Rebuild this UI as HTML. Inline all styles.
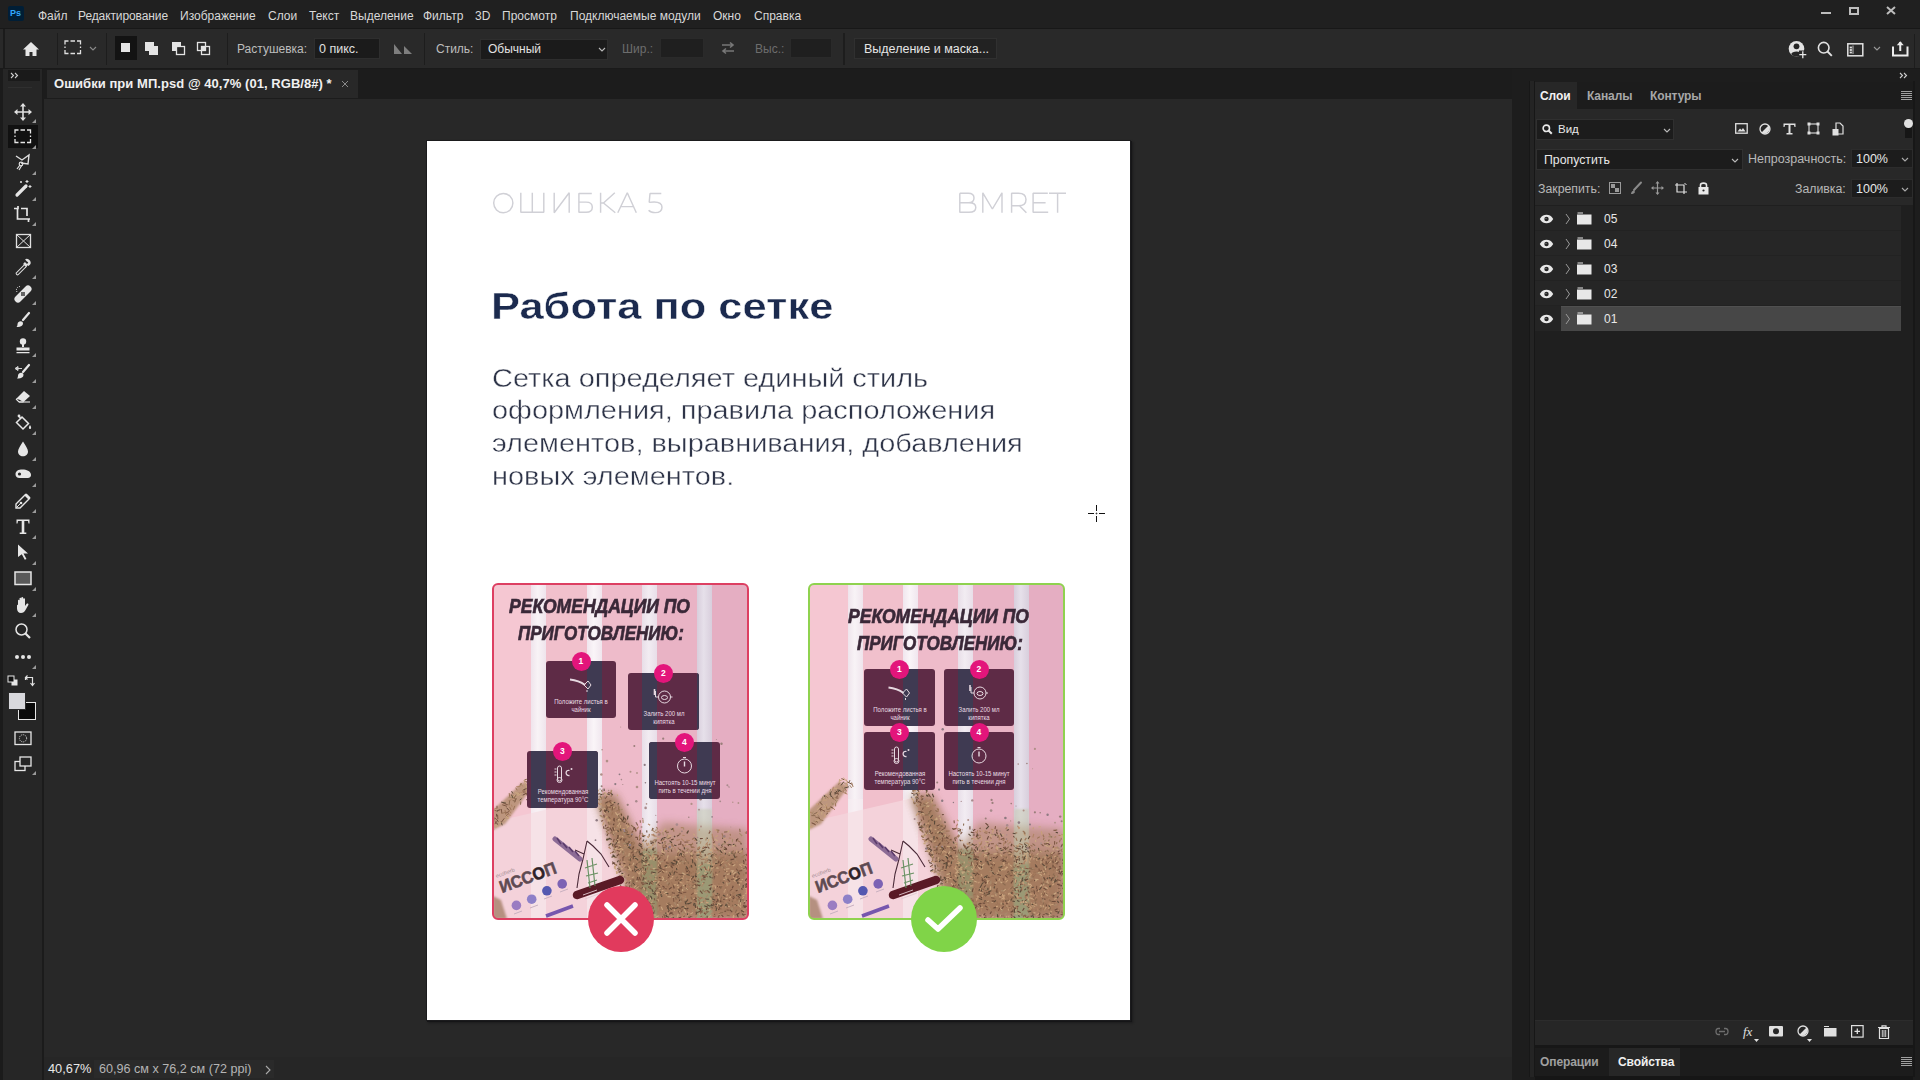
<!DOCTYPE html>
<html><head><meta charset="utf-8">
<style>
*{margin:0;padding:0;box-sizing:border-box}
html,body{width:1920px;height:1080px;overflow:hidden;background:#282828;font-family:"Liberation Sans",sans-serif;color:#d6d6d6}
.a{position:absolute}
.t{position:absolute;white-space:nowrap;line-height:1}
svg{position:absolute;overflow:visible}
#menubar{left:0;top:0;width:1920px;height:28px;background:#202020}
#opts{left:0;top:28px;width:1920px;height:41px;background:#292929;border-top:1px solid #181818;border-bottom:1px solid #1a1a1a}
#tabbar{left:43px;top:69px;width:1469px;height:30px;background:#1c1c1c}
#tab{left:47px;top:70px;width:311px;height:28px;background:#282828}
#tools{left:0;top:69px;width:44px;height:1011px;background:#262626;border-left:3px solid #1b1b1b;border-right:2px solid #1b1b1b}
#canvas{left:44px;top:99px;width:1468px;height:958px;background:#282828}
#status{left:44px;top:1057px;width:1468px;height:23px;background:#262626}
#rcol{left:1512px;top:69px;width:408px;height:1011px;background:#1d1d1d}
#page{left:427px;top:141px;width:703px;height:879px;background:#fff;box-shadow:0 0 0 1px #1b1b1d,1px 1px 0 1px #151517,2px 2px 2px 1px rgba(20,20,22,.6)}
.mi{top:9.5px;font-size:12px;color:#d8d8d8}
.ob{font-size:12px;color:#cfcfcf}
.box{position:absolute;background:#1b1b1b;border:1px solid #333}
</style></head>
<body>
<div id="menubar" class="a"></div>
<div id="opts" class="a"></div>
<div id="tools" class="a"></div>
<div id="tabbar" class="a"></div>
<div id="tab" class="a"></div>
<div id="canvas" class="a"></div>
<div id="status" class="a"></div>
<div id="rcol" class="a"></div>
<div id="page" class="a"></div>

<!-- MENU BAR -->
<div class="a" style="left:8px;top:6px;width:16px;height:15px;background:#001e36;border-radius:2px"></div>
<div class="t" style="left:10px;top:9px;font-size:9px;font-weight:bold;color:#31a8ff">Ps</div>
<div class="t mi" style="left:38px">Файл</div>
<div class="t mi" style="left:78px;letter-spacing:-.1px">Редактирование</div>
<div class="t mi" style="left:180px">Изображение</div>
<div class="t mi" style="left:268px">Слои</div>
<div class="t mi" style="left:309px">Текст</div>
<div class="t mi" style="left:350px">Выделение</div>
<div class="t mi" style="left:423px">Фильтр</div>
<div class="t mi" style="left:475px">3D</div>
<div class="t mi" style="left:502px">Просмотр</div>
<div class="t mi" style="left:570px">Подключаемые модули</div>
<div class="t mi" style="left:713px">Окно</div>
<div class="t mi" style="left:754px">Справка</div>
<!-- window controls -->
<div class="a" style="left:1821px;top:12px;width:10px;height:2px;background:#bdbdbd"></div>
<div class="a" style="left:1849px;top:7px;width:10px;height:8px;border:2px solid #bdbdbd"></div>
<svg style="left:1886px;top:6px" width="10" height="9"><path d="M1 1L9 8M9 1L1 8" stroke="#bdbdbd" stroke-width="2"/></svg>

<!-- OPTIONS BAR -->
<div class="a" style="left:3px;top:29px;width:2px;height:40px;background:#1b1b1b"></div>
<svg style="left:22px;top:41px" width="18" height="16"><path d="M9 1L1 8.5H3.5V15H7.5V11H10.5V15H14.5V8.5H17Z" fill="#e6e6e6"/></svg>
<svg style="left:64px;top:40px" width="18" height="15"><path d="M1 4.5V1H4.5M6.5 1H11M13 1H16.5V4.5M16.5 6.5V8M16.5 10V13.5H13M11 13.5H6.5M4.5 13.5H1V10M1 8V6.5" fill="none" stroke="#e0e0e0" stroke-width="1.3"/></svg>
<svg style="left:89px;top:46px" width="8" height="5"><path d="M1 1L4 4L7 1" fill="none" stroke="#8a8a8a" stroke-width="1.1"/></svg>
<div class="a" style="left:57px;top:33px;width:1px;height:32px;background:#1d1d1d"></div>
<div class="a" style="left:106px;top:33px;width:1px;height:32px;background:#1d1d1d"></div>
<div class="a" style="left:115px;top:36px;width:22px;height:24px;background:#131313"></div>
<div class="a" style="left:121px;top:43px;width:9px;height:9px;background:#e4e4e4"></div>
<svg style="left:144px;top:41px" width="16" height="16"><rect x="1" y="1" width="9" height="9" fill="#e4e4e4"/><rect x="5" y="5" width="9" height="9" fill="#e4e4e4"/></svg>
<svg style="left:171px;top:41px" width="16" height="16"><rect x="1" y="1" width="9" height="9" fill="#e4e4e4"/><rect x="5.5" y="5.5" width="8" height="8" fill="#292929" stroke="#e4e4e4" stroke-width="1.3"/></svg>
<svg style="left:196px;top:41px" width="16" height="16"><rect x="1.5" y="1.5" width="8" height="8" fill="none" stroke="#e4e4e4" stroke-width="1.3"/><rect x="5.5" y="5.5" width="8" height="8" fill="none" stroke="#e4e4e4" stroke-width="1.3"/><rect x="5.5" y="5.5" width="4" height="4" fill="#e4e4e4"/></svg>
<div class="a" style="left:227px;top:33px;width:1px;height:32px;background:#1d1d1d"></div>
<div class="t ob" style="left:237px;top:43px;color:#bdbdbd">Растушевка:</div>
<div class="box" style="left:314px;top:38px;width:66px;height:21px;border-color:#2e2e2e"></div>
<div class="t ob" style="left:319px;top:43px;font-size:12.5px;color:#e0e0e0">0 пикс.</div>
<svg style="left:393px;top:43px" width="20" height="12"><path d="M1 11V1L9 11ZM11 11V3L19 11Z" fill="#7e7e7e"/></svg>
<div class="a" style="left:424px;top:33px;width:1px;height:32px;background:#1d1d1d"></div>
<div class="t ob" style="left:436px;top:43px;color:#bdbdbd">Стиль:</div>
<div class="box" style="left:480px;top:39px;width:128px;height:21px;border-color:#2e2e2e"></div>
<div class="t ob" style="left:488px;top:43px;color:#e2e2e2">Обычный</div>
<svg style="left:598px;top:47px" width="8" height="5"><path d="M1 1L4 4L7 1" fill="none" stroke="#bbb" stroke-width="1.1"/></svg>
<div class="t ob" style="left:622px;top:43px;color:#6d6d6d">Шир.:</div>
<div class="box" style="left:660px;top:38px;width:44px;height:20px;border-color:#2a2a2a;background:#1f1f1f"></div>
<svg style="left:720px;top:41px" width="16" height="14"><path d="M2 4H13M10 1.5L13 4L10 6.5M14 10H3M6 7.5L3 10L6 12.5" fill="none" stroke="#777" stroke-width="1.6"/></svg>
<div class="t ob" style="left:755px;top:43px;color:#6d6d6d">Выс.:</div>
<div class="box" style="left:790px;top:38px;width:42px;height:20px;border-color:#2a2a2a;background:#1f1f1f"></div>
<div class="a" style="left:843px;top:33px;width:2px;height:32px;background:#1d1d1d"></div>
<div class="box" style="left:854px;top:38px;width:143px;height:21px;background:#222;border-color:#303030"></div>
<div class="t ob" style="left:864px;top:43px;font-size:12.5px;color:#e6e6e6">Выделение и маска...</div>
<!-- right options icons -->
<svg style="left:1788px;top:40px" width="20" height="20"><circle cx="8.5" cy="8.7" r="7.8" fill="#e4e4e4"/><circle cx="8.5" cy="6.3" r="2.9" fill="#262626"/><path d="M3.2 14.2C3.8 10.6 13.2 10.6 13.8 14.2C12.5 15.8 10.5 16.5 8.5 16.5C6.5 16.5 4.5 15.8 3.2 14.2Z" fill="#262626"/><rect x="11" y="10.5" width="8" height="8" fill="#292929"/><path d="M14.8 11.2V18.2M11.3 14.7H18.3" stroke="#e8e8e8" stroke-width="1.3"/></svg>
<svg style="left:1817px;top:41px" width="16" height="16"><circle cx="6.7" cy="6.7" r="5.3" fill="none" stroke="#e2e2e2" stroke-width="1.6"/><path d="M10.5 10.5L14.8 14.8" stroke="#e2e2e2" stroke-width="1.9"/></svg>
<svg style="left:1847px;top:43px" width="17" height="14"><rect x="0.8" y="0.8" width="15" height="12" fill="none" stroke="#e2e2e2" stroke-width="1.5"/><rect x="2.7" y="3.6" width="2.2" height="1.8" fill="#e2e2e2"/><rect x="2.7" y="6.1" width="2.2" height="1.8" fill="#e2e2e2"/><rect x="2.7" y="8.6" width="2.2" height="1.8" fill="#e2e2e2"/><path d="M6 2.5V11" stroke="#e2e2e2" stroke-width=".8"/></svg>
<svg style="left:1873px;top:46px" width="8" height="5"><path d="M1 1L4 4L7 1" fill="none" stroke="#999" stroke-width="1.1"/></svg>
<svg style="left:1892px;top:40px" width="17" height="17"><path d="M1 6.5V15.5H15.5V6.5" fill="none" stroke="#ededed" stroke-width="2"/><path d="M8.25 2V11" stroke="#ededed" stroke-width="2"/><path d="M4.8 5.2L8.25 1.2L11.7 5.2Z" fill="#ededed"/></svg>
<div class="a" style="left:1914px;top:34px;width:1px;height:34px;background:#1d1d1d"></div>



<!-- DOCUMENT -->
<svg style="left:0;top:0" width="1" height="1"></svg>
<svg style="left:480px;top:180px" width="600" height="45" viewBox="480 180 600 45"><g fill="none" stroke="#d0d0d6" stroke-width="1.45" stroke-linejoin="bevel">
<ellipse cx="503.3" cy="203.1" rx="9.6" ry="9.6"/>
<path d="M520.8 192.8V212.3H543.8V192.8M532.3 192.8V212.3"/>
<path d="M554.2 192.8V212.8L569.2 192.8V212.8"/>
<path d="M591.8 193.5H578.9V212.3H586C590 212.3 592.3 210.4 592.3 207.2C592.3 204 590 202.1 586 202.1H578.9"/>
<path d="M600.6 192.8V212.8M600.6 203H603.5L614.8 192.8M603.5 203L615.3 212.8"/>
<path d="M617.8 212.8L627.3 192.8L636.3 212.8M620.8 206.6H633.5"/>
<path d="M661.3 193.5H650L649.2 202.4C650.5 202 652.5 201.9 654.2 201.9C659.5 201.9 662 204 662 207.2C662 210.6 659.5 212.6 655.2 212.6C652.5 212.6 650 211.8 648.6 210.2"/>
<path d="M959.8 193.2H968.3C972 193.2 974 195 974 198C974 200.8 972 202.8 968.3 202.8H959.8M959.8 193.2V212.3H969C973.5 212.3 975.8 210.5 975.8 207.5C975.8 204.5 973.5 202.8 969 202.8"/>
<path d="M982.8 212.8V192.8L992.4 209L1002 192.8V212.8"/>
<path d="M1011.6 212.8V193.2H1018.5C1023.5 193.2 1026 195.6 1026 199.5C1026 203.4 1023.5 205.8 1018.5 205.8H1011.6M1019.5 205.8L1026.4 212.8"/>
<path d="M1047.8 193.3H1033.1V212.3H1048.2M1033.1 202.8H1045.6"/>
<path d="M1049 193.3H1066M1057.6 193.3V212.8"/>
</g></svg>
<div class="t" style="left:491px;top:287.5px;font-size:37.8px;font-weight:bold;color:#1b2a4e;-webkit-text-stroke:.45px #fff;transform:scaleX(1.15);transform-origin:0 0">Работа по сетке</div>
<div class="a" style="left:492px;top:361.5px;font-size:25px;line-height:32.85px;color:#2e3448;-webkit-text-stroke:.4px #fff;transform:scaleX(1.157);transform-origin:0 0;white-space:nowrap">Сетка определяет единый стиль<br>оформления, правила расположения<br>элементов, выравнивания, добавления<br>новых элементов.</div>
<!-- PRODUCTS -->
<div class="a" style="left:493px;top:584px;width:255px;height:335px;border-radius:5px;overflow:hidden;background:linear-gradient(90deg,#f4c4d0 0%,#f0bdcb 50%,#eab5c6 100%)">
<div class="a" style="left:0px;top:0;width:38px;height:335px;background:#f5c7d2"></div>
<div class="a" style="left:53px;top:0;width:41px;height:335px;background:#f1c0cc"></div>
<div class="a" style="left:109px;top:0;width:40px;height:335px;background:#eebbca"></div>
<div class="a" style="left:164px;top:0;width:40px;height:335px;background:#e9b3c5"></div>
<div class="a" style="left:219px;top:0;width:36px;height:335px;background:#e5aec2"></div>
<div class="a" style="left:38px;top:0;width:15px;height:335px;background:linear-gradient(90deg,#efe4ec,#f8f3f6 45%,#efe4ec)"></div>
<div class="a" style="left:94px;top:0;width:15px;height:335px;background:linear-gradient(90deg,#f0e6ee,#faf5f8 45%,#f0e6ee)"></div>
<div class="a" style="left:149px;top:0;width:15px;height:335px;background:linear-gradient(90deg,#e8dee8,#f2ecf2 45%,#e8dee8)"></div>
<div class="a" style="left:204px;top:0;width:15px;height:335px;background:linear-gradient(90deg,#d8cedc,#e6e0ea 45%,#d8cedc)"></div>
<svg style="left:0;top:0" width="255" height="335"><defs><filter id="bl1"><feGaussianBlur stdDeviation="4"/></filter><filter id="bs1"><feGaussianBlur stdDeviation="1.2"/></filter></defs><path d="M0 238L104 214L134 300L142 335H0Z" fill="#f4d2da"/><rect x="38" y="215" width="15" height="120" fill="#f8eef2" opacity=".55"/><rect x="94" y="215" width="15" height="120" fill="#f8eef2" opacity=".55"/><path d="M100 211L122 209L152 262L170 238L210 242L255 245V335H142L134 300L104 214Z" fill="#a88060" opacity=".6" filter="url(#bl1)"/><path d="M103 214L121 212L150 270L185 268L255 268V335H142L133 300Z" fill="#9e7656" opacity=".8" filter="url(#bl1)"/><path d="M0 226L30 198L40 202L12 240L0 246Z" fill="#b08a6a" opacity=".8" filter="url(#bs1)"/><path d="M0 312L8 316L14 335H0Z" fill="#a07a62" opacity=".75" filter="url(#bs1)"/><path d="M149 265H164V335H149Z" fill="#8f9a70" opacity=".6" filter="url(#bs1)"/><path d="M204 225H219V335H204Z" fill="#c0c8a8" opacity=".45" filter="url(#bs1)"/><path d="M204 280H219V335H204Z" fill="#86946a" opacity=".5" filter="url(#bs1)"/><path d="M140.3 262.8L138.7 265.9" stroke="#7e5844" stroke-width="1.1"/><path d="M176.2 318.4L175.0 321.7" stroke="#8a6a50" stroke-width="1.1"/><path d="M140.2 306.9L142.4 307.6" stroke="#9c7458" stroke-width="1.1"/><path d="M132.1 259.2L135.7 259.5" stroke="#5a4a3a" stroke-width="1.1"/><path d="M240.2 331.1L237.4 331.4" stroke="#b08466" stroke-width="1.1"/><path d="M148.3 276.6L145.8 277.9" stroke="#9c7458" stroke-width="1.1"/><path d="M175.0 298.0L173.8 300.2" stroke="#a88a6c" stroke-width="1.1"/><path d="M214.9 260.0L212.2 261.4" stroke="#caa882" stroke-width="1.1"/><path d="M186.1 251.1L183.9 252.2" stroke="#6a4a3a" stroke-width="1.1"/><path d="M201.5 278.5L202.8 282.0" stroke="#5a4a3a" stroke-width="1.1"/><path d="M225.2 266.8L225.6 268.5" stroke="#a88a6c" stroke-width="1.1"/><path d="M183.4 281.5L183.6 283.1" stroke="#b08466" stroke-width="1.1"/><path d="M197.1 271.7L199.9 272.5" stroke="#6a4a3a" stroke-width="1.1"/><path d="M127.3 234.2L130.0 237.0" stroke="#6a4a3a" stroke-width="1.1"/><path d="M152.0 305.3L154.4 307.7" stroke="#b08466" stroke-width="1.1"/><path d="M136.3 250.5L133.6 250.8" stroke="#5a4a3a" stroke-width="1.1"/><path d="M206.9 271.1L203.4 271.4" stroke="#5a4a3a" stroke-width="1.1"/><path d="M170.8 266.8L169.0 269.9" stroke="#caa882" stroke-width="1.1"/><path d="M110.2 236.4L108.0 237.3" stroke="#7e5844" stroke-width="1.1"/><path d="M147.8 325.4L148.4 327.6" stroke="#9c7458" stroke-width="1.1"/><path d="M185.5 312.9L188.4 315.3" stroke="#8a6a50" stroke-width="1.1"/><path d="M208.6 265.3L209.6 267.2" stroke="#caa882" stroke-width="1.1"/><path d="M160.9 264.4L160.0 266.8" stroke="#6a4a3a" stroke-width="1.1"/><path d="M251.7 303.6L254.3 305.6" stroke="#caa882" stroke-width="1.1"/><path d="M134.7 295.6L138.0 297.5" stroke="#b08466" stroke-width="1.1"/><path d="M138.1 241.1L141.0 243.7" stroke="#8a6a50" stroke-width="1.1"/><path d="M120.1 272.1L121.9 272.3" stroke="#c8a07a" stroke-width="1.1"/><path d="M237.9 272.9L238.2 275.1" stroke="#9c7458" stroke-width="1.1"/><path d="M113.1 211.0L115.3 211.3" stroke="#caa882" stroke-width="1.1"/><path d="M123.5 257.3L126.7 259.0" stroke="#caa882" stroke-width="1.1"/><path d="M145.3 277.8L146.3 279.2" stroke="#a88a6c" stroke-width="1.1"/><path d="M249.1 329.8L251.5 331.7" stroke="#5a4a3a" stroke-width="1.1"/><path d="M233.6 260.1L235.4 261.2" stroke="#b08466" stroke-width="1.1"/><path d="M199.1 325.7L200.4 327.7" stroke="#a88a6c" stroke-width="1.1"/><path d="M222.2 275.4L223.5 276.7" stroke="#7e5844" stroke-width="1.1"/><path d="M122.0 264.7L125.8 265.7" stroke="#c8a07a" stroke-width="1.1"/><path d="M228.2 278.4L230.5 280.1" stroke="#9c7458" stroke-width="1.1"/><path d="M221.6 308.7L220.1 311.2" stroke="#b08466" stroke-width="1.1"/><path d="M128.6 254.3L126.6 256.8" stroke="#6a4a3a" stroke-width="1.1"/><path d="M220.3 289.4L220.8 291.6" stroke="#8a6a50" stroke-width="1.1"/><path d="M231.4 257.5L232.5 259.4" stroke="#9c7458" stroke-width="1.1"/><path d="M221.3 325.5L224.6 325.7" stroke="#c8a07a" stroke-width="1.1"/><path d="M141.6 273.6L144.3 274.4" stroke="#c8a07a" stroke-width="1.1"/><path d="M181.6 263.5L182.3 266.7" stroke="#b08466" stroke-width="1.1"/><path d="M136.0 263.5L137.9 265.2" stroke="#5a4a3a" stroke-width="1.1"/><path d="M195.8 296.9L193.7 297.0" stroke="#7e5844" stroke-width="1.1"/><path d="M218.4 283.6L218.2 287.1" stroke="#b08466" stroke-width="1.1"/><path d="M147.7 290.4L149.0 293.5" stroke="#8a6a50" stroke-width="1.1"/><path d="M193.6 314.7L190.7 315.1" stroke="#c8a07a" stroke-width="1.1"/><path d="M125.3 253.4L123.0 256.1" stroke="#8a6a50" stroke-width="1.1"/><path d="M205.7 294.4L205.6 296.4" stroke="#9c7458" stroke-width="1.1"/><path d="M252.7 330.5L249.5 330.9" stroke="#7e5844" stroke-width="1.1"/><path d="M168.3 322.8L169.6 326.0" stroke="#caa882" stroke-width="1.1"/><path d="M162.1 321.1L161.1 323.7" stroke="#b08466" stroke-width="1.1"/><path d="M118.9 235.8L117.7 236.9" stroke="#b08466" stroke-width="1.1"/><path d="M183.0 276.0L180.8 276.2" stroke="#6a4a3a" stroke-width="1.1"/><path d="M131.0 233.7L133.0 236.0" stroke="#6a4a3a" stroke-width="1.1"/><path d="M211.6 284.3L213.0 287.5" stroke="#caa882" stroke-width="1.1"/><path d="M205.5 263.0L206.3 264.9" stroke="#9c7458" stroke-width="1.1"/><path d="M255.3 282.7L253.1 285.2" stroke="#b08466" stroke-width="1.1"/><path d="M162.8 298.4L164.0 300.1" stroke="#5a4a3a" stroke-width="1.1"/><path d="M131.1 266.8L130.1 270.6" stroke="#a88a6c" stroke-width="1.1"/><path d="M235.1 276.3L231.9 277.4" stroke="#8a6a50" stroke-width="1.1"/><path d="M145.9 259.0L148.3 260.4" stroke="#6a4a3a" stroke-width="1.1"/><path d="M178.4 297.8L179.8 300.7" stroke="#9c7458" stroke-width="1.1"/><path d="M123.9 294.0L126.9 294.9" stroke="#6a4a3a" stroke-width="1.1"/><path d="M228.8 266.6L228.7 269.9" stroke="#c8a07a" stroke-width="1.1"/><path d="M146.2 296.7L145.8 299.1" stroke="#b08466" stroke-width="1.1"/><path d="M159.8 249.8L161.9 252.1" stroke="#b08466" stroke-width="1.1"/><path d="M141.0 278.8L139.2 282.0" stroke="#caa882" stroke-width="1.1"/><path d="M240.6 295.9L242.5 298.0" stroke="#c8a07a" stroke-width="1.1"/><path d="M219.9 319.1L221.4 321.2" stroke="#7e5844" stroke-width="1.1"/><path d="M210.1 295.2L212.5 296.0" stroke="#8a6a50" stroke-width="1.1"/><path d="M244.6 328.3L243.3 329.2" stroke="#b08466" stroke-width="1.1"/><path d="M207.1 262.8L204.7 265.6" stroke="#8a6a50" stroke-width="1.1"/><path d="M153.6 311.5L152.6 313.1" stroke="#caa882" stroke-width="1.1"/><path d="M137.2 257.9L135.1 258.1" stroke="#6a4a3a" stroke-width="1.1"/><path d="M172.4 275.3L171.0 277.1" stroke="#7e5844" stroke-width="1.1"/><path d="M242.4 333.1L239.5 335.3" stroke="#a88a6c" stroke-width="1.1"/><path d="M237.0 313.1L238.6 314.3" stroke="#c8a07a" stroke-width="1.1"/><path d="M235.2 270.3L236.5 271.6" stroke="#6a4a3a" stroke-width="1.1"/><path d="M118.9 206.2L117.5 209.3" stroke="#b08466" stroke-width="1.1"/><path d="M248.4 284.5L252.2 285.2" stroke="#c8a07a" stroke-width="1.1"/><path d="M154.3 278.9L154.1 280.6" stroke="#a88a6c" stroke-width="1.1"/><path d="M185.0 268.4L184.6 272.2" stroke="#7e5844" stroke-width="1.1"/><path d="M211.4 298.3L209.8 299.8" stroke="#7e5844" stroke-width="1.1"/><path d="M226.9 260.6L225.2 260.7" stroke="#5a4a3a" stroke-width="1.1"/><path d="M219.1 320.0L217.6 321.7" stroke="#6a4a3a" stroke-width="1.1"/><path d="M157.9 296.9L161.2 298.3" stroke="#7e5844" stroke-width="1.1"/><path d="M137.2 271.5L138.9 274.5" stroke="#8a6a50" stroke-width="1.1"/><path d="M254.0 294.5L252.3 296.9" stroke="#6a4a3a" stroke-width="1.1"/><path d="M149.1 252.1L151.4 252.6" stroke="#5a4a3a" stroke-width="1.1"/><path d="M150.5 298.8L150.3 300.8" stroke="#a88a6c" stroke-width="1.1"/><path d="M220.8 274.2L222.5 276.3" stroke="#a88a6c" stroke-width="1.1"/><path d="M245.6 330.3L241.9 331.2" stroke="#9c7458" stroke-width="1.1"/><path d="M122.6 268.3L119.1 268.4" stroke="#a88a6c" stroke-width="1.1"/><path d="M155.6 325.6L156.5 328.2" stroke="#a88a6c" stroke-width="1.1"/><path d="M205.4 273.1L207.6 274.5" stroke="#9c7458" stroke-width="1.1"/><path d="M226.5 331.2L225.2 332.8" stroke="#7e5844" stroke-width="1.1"/><path d="M196.2 268.3L199.8 269.1" stroke="#c8a07a" stroke-width="1.1"/><path d="M180.6 255.1L178.0 255.9" stroke="#6a4a3a" stroke-width="1.1"/><path d="M156.9 321.9L157.0 323.7" stroke="#6a4a3a" stroke-width="1.1"/><path d="M159.5 316.3L158.5 319.0" stroke="#caa882" stroke-width="1.1"/><path d="M128.5 236.9L130.4 236.9" stroke="#6a4a3a" stroke-width="1.1"/><path d="M180.6 333.1L178.2 335.2" stroke="#5a4a3a" stroke-width="1.1"/><path d="M244.0 266.2L243.3 268.8" stroke="#c8a07a" stroke-width="1.1"/><path d="M179.5 277.0L177.5 277.2" stroke="#9c7458" stroke-width="1.1"/><path d="M253.6 296.9L254.7 299.2" stroke="#9c7458" stroke-width="1.1"/><path d="M238.8 323.3L239.8 325.8" stroke="#a88a6c" stroke-width="1.1"/><path d="M197.9 312.7L199.2 316.0" stroke="#8a6a50" stroke-width="1.1"/><path d="M154.0 252.6L155.9 253.7" stroke="#c8a07a" stroke-width="1.1"/><path d="M140.7 265.8L139.2 268.0" stroke="#8a6a50" stroke-width="1.1"/><path d="M133.0 309.9L133.8 312.4" stroke="#7e5844" stroke-width="1.1"/><path d="M253.4 270.2L255.2 273.7" stroke="#7e5844" stroke-width="1.1"/><path d="M215.2 288.6L212.5 291.5" stroke="#6a4a3a" stroke-width="1.1"/><path d="M108.3 224.6L106.5 225.4" stroke="#8a6a50" stroke-width="1.1"/><path d="M143.9 265.4L147.3 266.7" stroke="#7e5844" stroke-width="1.1"/><path d="M122.2 280.4L124.1 281.5" stroke="#5a4a3a" stroke-width="1.1"/><path d="M144.9 262.9L144.6 265.0" stroke="#a88a6c" stroke-width="1.1"/><path d="M146.5 320.5L146.5 322.7" stroke="#b08466" stroke-width="1.1"/><path d="M187.1 277.3L186.8 280.3" stroke="#c8a07a" stroke-width="1.1"/><path d="M147.7 262.7L147.1 264.8" stroke="#c8a07a" stroke-width="1.1"/><path d="M206.7 268.5L208.4 271.3" stroke="#b08466" stroke-width="1.1"/><path d="M148.0 263.7L149.8 264.5" stroke="#6a4a3a" stroke-width="1.1"/><path d="M133.9 283.8L135.9 284.1" stroke="#7e5844" stroke-width="1.1"/><path d="M235.9 254.0L238.2 254.2" stroke="#b08466" stroke-width="1.1"/><path d="M114.3 226.4L111.9 226.5" stroke="#5a4a3a" stroke-width="1.1"/><path d="M190.1 243.6L187.8 243.6" stroke="#b08466" stroke-width="1.1"/><path d="M122.0 249.9L121.1 251.9" stroke="#a88a6c" stroke-width="1.1"/><path d="M143.6 266.9L141.2 267.3" stroke="#c8a07a" stroke-width="1.1"/><path d="M194.8 315.5L193.1 318.2" stroke="#5a4a3a" stroke-width="1.1"/><path d="M119.3 277.7L122.0 280.3" stroke="#6a4a3a" stroke-width="1.1"/><path d="M181.0 260.9L183.4 261.7" stroke="#5a4a3a" stroke-width="1.1"/><path d="M156.3 271.3L156.3 274.3" stroke="#6a4a3a" stroke-width="1.1"/><path d="M189.7 288.0L189.9 291.5" stroke="#a88a6c" stroke-width="1.1"/><path d="M224.2 311.6L222.3 311.7" stroke="#6a4a3a" stroke-width="1.1"/><path d="M201.4 306.9L205.3 307.0" stroke="#c8a07a" stroke-width="1.1"/><path d="M158.6 271.9L159.0 275.4" stroke="#caa882" stroke-width="1.1"/><path d="M142.7 245.9L142.9 247.7" stroke="#9c7458" stroke-width="1.1"/><path d="M201.4 291.9L198.8 293.4" stroke="#5a4a3a" stroke-width="1.1"/><path d="M180.6 244.8L176.9 245.0" stroke="#a88a6c" stroke-width="1.1"/><path d="M225.2 309.1L223.4 310.4" stroke="#5a4a3a" stroke-width="1.1"/><path d="M245.9 316.9L249.2 317.3" stroke="#caa882" stroke-width="1.1"/><path d="M254.1 301.9L254.6 304.3" stroke="#6a4a3a" stroke-width="1.1"/><path d="M136.5 279.5L137.3 281.2" stroke="#5a4a3a" stroke-width="1.1"/><path d="M125.9 283.5L127.5 286.4" stroke="#9c7458" stroke-width="1.1"/><path d="M246.3 249.2L249.1 252.0" stroke="#a88a6c" stroke-width="1.1"/><path d="M201.6 303.4L201.9 306.2" stroke="#b08466" stroke-width="1.1"/><path d="M166.9 249.7L167.0 252.0" stroke="#c8a07a" stroke-width="1.1"/><path d="M122.3 247.6L124.1 247.7" stroke="#c8a07a" stroke-width="1.1"/><path d="M226.4 322.6L226.2 324.4" stroke="#6a4a3a" stroke-width="1.1"/><path d="M213.8 322.0L214.4 323.5" stroke="#b08466" stroke-width="1.1"/><path d="M251.7 321.1L252.8 323.0" stroke="#5a4a3a" stroke-width="1.1"/><path d="M245.4 328.1L244.6 330.8" stroke="#caa882" stroke-width="1.1"/><path d="M130.4 265.6L128.6 265.6" stroke="#caa882" stroke-width="1.1"/><path d="M159.9 271.4L160.1 275.4" stroke="#b08466" stroke-width="1.1"/><path d="M170.9 295.6L173.6 296.8" stroke="#a88a6c" stroke-width="1.1"/><path d="M220.6 283.3L218.3 285.0" stroke="#caa882" stroke-width="1.1"/><path d="M207.0 306.7L209.5 309.6" stroke="#6a4a3a" stroke-width="1.1"/><path d="M188.5 311.7L187.2 314.8" stroke="#a88a6c" stroke-width="1.1"/><path d="M161.5 273.9L157.6 274.5" stroke="#b08466" stroke-width="1.1"/><path d="M129.4 306.5L131.5 308.0" stroke="#b08466" stroke-width="1.1"/><path d="M188.3 271.7L190.8 273.4" stroke="#7e5844" stroke-width="1.1"/><path d="M123.3 287.2L124.1 289.7" stroke="#c8a07a" stroke-width="1.1"/><path d="M110.5 227.5L112.5 230.0" stroke="#caa882" stroke-width="1.1"/><path d="M156.1 311.4L154.6 313.4" stroke="#5a4a3a" stroke-width="1.1"/><path d="M145.7 266.3L144.7 267.7" stroke="#7e5844" stroke-width="1.1"/><path d="M193.6 300.3L197.1 301.0" stroke="#a88a6c" stroke-width="1.1"/><path d="M190.3 297.5L191.5 301.0" stroke="#b08466" stroke-width="1.1"/><path d="M205.9 323.1L202.3 324.9" stroke="#caa882" stroke-width="1.1"/><path d="M162.7 263.6L160.9 264.7" stroke="#9c7458" stroke-width="1.1"/><path d="M228.4 270.2L226.7 270.7" stroke="#9c7458" stroke-width="1.1"/><path d="M230.0 311.0L232.4 312.5" stroke="#5a4a3a" stroke-width="1.1"/><path d="M160.4 244.2L158.9 246.8" stroke="#7e5844" stroke-width="1.1"/><path d="M196.0 319.5L193.3 320.0" stroke="#5a4a3a" stroke-width="1.1"/><path d="M114.5 249.9L114.0 252.1" stroke="#6a4a3a" stroke-width="1.1"/><path d="M185.2 320.9L185.9 323.8" stroke="#a88a6c" stroke-width="1.1"/><path d="M224.1 278.4L222.4 278.5" stroke="#a88a6c" stroke-width="1.1"/><path d="M164.6 333.9L164.1 335.7" stroke="#5a4a3a" stroke-width="1.1"/><path d="M157.4 270.8L156.7 273.5" stroke="#7e5844" stroke-width="1.1"/><path d="M232.0 257.0L230.6 257.9" stroke="#c8a07a" stroke-width="1.1"/><path d="M191.1 277.0L188.7 278.1" stroke="#a88a6c" stroke-width="1.1"/><path d="M253.5 314.2L255.2 314.4" stroke="#b08466" stroke-width="1.1"/><path d="M184.3 275.1L186.3 275.6" stroke="#6a4a3a" stroke-width="1.1"/><path d="M222.2 307.1L221.8 310.0" stroke="#a88a6c" stroke-width="1.1"/><path d="M243.3 314.1L243.7 316.5" stroke="#9c7458" stroke-width="1.1"/><path d="M203.9 317.1L201.8 317.3" stroke="#7e5844" stroke-width="1.1"/><path d="M191.9 330.3L190.2 332.4" stroke="#9c7458" stroke-width="1.1"/><path d="M134.0 318.2L137.3 320.2" stroke="#b08466" stroke-width="1.1"/><path d="M132.0 234.3L133.0 236.6" stroke="#7e5844" stroke-width="1.1"/><path d="M146.0 324.8L146.1 326.4" stroke="#9c7458" stroke-width="1.1"/><path d="M244.8 285.6L243.5 289.0" stroke="#a88a6c" stroke-width="1.1"/><path d="M152.6 284.2L152.5 287.0" stroke="#5a4a3a" stroke-width="1.1"/><path d="M247.0 313.3L244.4 316.1" stroke="#8a6a50" stroke-width="1.1"/><path d="M159.7 270.5L163.2 270.6" stroke="#8a6a50" stroke-width="1.1"/><path d="M133.4 261.6L131.4 261.7" stroke="#caa882" stroke-width="1.1"/><path d="M109.5 210.3L107.3 210.9" stroke="#5a4a3a" stroke-width="1.1"/><path d="M153.4 277.1L151.5 277.9" stroke="#7e5844" stroke-width="1.1"/><path d="M149.2 288.6L152.6 289.4" stroke="#6a4a3a" stroke-width="1.1"/><path d="M250.3 279.8L247.1 280.2" stroke="#c8a07a" stroke-width="1.1"/><path d="M217.6 299.9L216.6 302.0" stroke="#caa882" stroke-width="1.1"/><path d="M166.0 268.3L164.4 269.1" stroke="#b08466" stroke-width="1.1"/><path d="M157.8 280.7L159.8 283.4" stroke="#a88a6c" stroke-width="1.1"/><path d="M176.6 288.2L177.8 290.9" stroke="#5a4a3a" stroke-width="1.1"/><path d="M176.7 324.9L175.1 328.1" stroke="#6a4a3a" stroke-width="1.1"/><path d="M167.0 312.0L166.2 313.7" stroke="#b08466" stroke-width="1.1"/><path d="M236.0 299.7L233.8 299.7" stroke="#a88a6c" stroke-width="1.1"/><path d="M152.8 303.6L152.3 306.3" stroke="#6a4a3a" stroke-width="1.1"/><path d="M145.0 271.4L146.6 272.8" stroke="#9c7458" stroke-width="1.1"/><path d="M136.3 271.6L137.6 273.9" stroke="#9c7458" stroke-width="1.1"/><path d="M186.3 265.2L188.1 266.4" stroke="#6a4a3a" stroke-width="1.1"/><path d="M154.6 276.6L152.1 278.5" stroke="#7e5844" stroke-width="1.1"/><path d="M247.0 294.3L243.9 295.6" stroke="#6a4a3a" stroke-width="1.1"/><path d="M217.9 322.6L219.1 325.6" stroke="#7e5844" stroke-width="1.1"/><path d="M235.2 322.2L236.8 322.8" stroke="#caa882" stroke-width="1.1"/><path d="M238.9 269.1L235.6 269.9" stroke="#a88a6c" stroke-width="1.1"/><path d="M164.8 245.8L162.0 246.2" stroke="#a88a6c" stroke-width="1.1"/><path d="M121.3 217.9L118.2 219.2" stroke="#c8a07a" stroke-width="1.1"/><path d="M124.3 284.4L127.4 286.1" stroke="#6a4a3a" stroke-width="1.1"/><path d="M137.5 284.8L135.4 285.8" stroke="#caa882" stroke-width="1.1"/><path d="M122.9 244.1L124.8 244.8" stroke="#a88a6c" stroke-width="1.1"/><path d="M112.4 221.1L109.1 221.2" stroke="#b08466" stroke-width="1.1"/><path d="M201.9 297.7L199.5 298.2" stroke="#5a4a3a" stroke-width="1.1"/><path d="M195.4 287.5L199.0 288.9" stroke="#9c7458" stroke-width="1.1"/><path d="M252.1 318.4L250.7 319.5" stroke="#6a4a3a" stroke-width="1.1"/><path d="M148.8 251.1L152.6 251.7" stroke="#9c7458" stroke-width="1.1"/><path d="M239.3 277.9L236.4 280.2" stroke="#8a6a50" stroke-width="1.1"/><path d="M189.5 260.3L190.6 262.7" stroke="#7e5844" stroke-width="1.1"/><path d="M127.3 303.6L129.7 305.8" stroke="#b08466" stroke-width="1.1"/><path d="M154.1 273.8L152.1 277.2" stroke="#9c7458" stroke-width="1.1"/><path d="M135.5 319.0L132.0 320.1" stroke="#8a6a50" stroke-width="1.1"/><path d="M150.9 298.8L147.9 298.8" stroke="#7e5844" stroke-width="1.1"/><path d="M173.0 252.9L176.1 253.5" stroke="#a88a6c" stroke-width="1.1"/><path d="M147.7 310.7L149.3 312.9" stroke="#9c7458" stroke-width="1.1"/><path d="M145.2 281.9L146.1 285.6" stroke="#b08466" stroke-width="1.1"/><path d="M143.1 301.4L143.2 303.7" stroke="#6a4a3a" stroke-width="1.1"/><path d="M162.7 267.6L160.4 268.6" stroke="#8a6a50" stroke-width="1.1"/><path d="M121.7 262.2L124.8 262.5" stroke="#7e5844" stroke-width="1.1"/><path d="M189.5 292.1L187.2 293.8" stroke="#8a6a50" stroke-width="1.1"/><path d="M157.4 311.7L158.3 313.7" stroke="#5a4a3a" stroke-width="1.1"/><path d="M230.1 328.5L228.1 328.7" stroke="#8a6a50" stroke-width="1.1"/><path d="M174.6 274.4L173.7 276.9" stroke="#c8a07a" stroke-width="1.1"/><path d="M177.9 332.8L180.0 333.7" stroke="#c8a07a" stroke-width="1.1"/><path d="M164.9 258.3L167.6 259.9" stroke="#6a4a3a" stroke-width="1.1"/><path d="M191.1 304.9L192.5 305.6" stroke="#a88a6c" stroke-width="1.1"/><path d="M119.5 247.1L117.4 249.3" stroke="#8a6a50" stroke-width="1.1"/><path d="M168.9 269.1L170.4 270.2" stroke="#7e5844" stroke-width="1.1"/><path d="M114.0 248.5L116.2 250.0" stroke="#9c7458" stroke-width="1.1"/><path d="M191.0 326.4L191.1 328.7" stroke="#a88a6c" stroke-width="1.1"/><path d="M128.7 303.1L127.3 304.1" stroke="#5a4a3a" stroke-width="1.1"/><path d="M136.5 313.7L134.8 314.3" stroke="#9c7458" stroke-width="1.1"/><path d="M235.5 318.1L232.9 319.3" stroke="#a88a6c" stroke-width="1.1"/><path d="M134.6 306.7L135.1 310.4" stroke="#7e5844" stroke-width="1.1"/><path d="M209.8 254.5L206.9 254.6" stroke="#6a4a3a" stroke-width="1.1"/><path d="M146.1 293.0L147.4 296.4" stroke="#6a4a3a" stroke-width="1.1"/><path d="M126.8 262.1L127.2 264.9" stroke="#5a4a3a" stroke-width="1.1"/><path d="M150.4 332.6L148.4 335.9" stroke="#a88a6c" stroke-width="1.1"/><path d="M171.8 261.8L171.6 263.9" stroke="#b08466" stroke-width="1.1"/><path d="M182.0 315.0L184.3 315.4" stroke="#9c7458" stroke-width="1.1"/><path d="M150.2 325.6L151.5 328.3" stroke="#caa882" stroke-width="1.1"/><path d="M133.5 321.0L131.3 321.7" stroke="#caa882" stroke-width="1.1"/><path d="M241.2 328.2L238.4 330.5" stroke="#b08466" stroke-width="1.1"/><path d="M134.8 309.1L137.7 311.3" stroke="#7e5844" stroke-width="1.1"/><path d="M167.0 307.2L167.5 309.1" stroke="#5a4a3a" stroke-width="1.1"/><path d="M222.0 308.4L223.2 310.6" stroke="#a88a6c" stroke-width="1.1"/><path d="M186.0 284.1L182.1 284.5" stroke="#b08466" stroke-width="1.1"/><path d="M194.3 296.8L193.8 298.4" stroke="#c8a07a" stroke-width="1.1"/><path d="M133.5 291.9L136.6 292.2" stroke="#c8a07a" stroke-width="1.1"/><path d="M182.2 273.2L183.0 274.9" stroke="#a88a6c" stroke-width="1.1"/><path d="M252.3 247.7L252.5 249.7" stroke="#b08466" stroke-width="1.1"/><path d="M130.1 306.0L128.7 307.2" stroke="#caa882" stroke-width="1.1"/><path d="M188.6 293.4L190.2 295.4" stroke="#a88a6c" stroke-width="1.1"/><path d="M248.7 323.7L250.7 324.7" stroke="#b08466" stroke-width="1.1"/><path d="M203.9 258.1L203.6 259.8" stroke="#5a4a3a" stroke-width="1.1"/><path d="M165.3 313.7L163.5 317.0" stroke="#a88a6c" stroke-width="1.1"/><path d="M205.9 266.6L207.6 269.9" stroke="#b08466" stroke-width="1.1"/><path d="M223.2 246.0L226.4 246.3" stroke="#8a6a50" stroke-width="1.1"/><path d="M165.4 260.3L168.2 261.2" stroke="#caa882" stroke-width="1.1"/><path d="M201.1 270.9L198.3 271.7" stroke="#8a6a50" stroke-width="1.1"/><path d="M131.5 280.1L133.8 280.9" stroke="#b08466" stroke-width="1.1"/><path d="M178.5 321.3L180.3 323.8" stroke="#caa882" stroke-width="1.1"/><path d="M187.2 248.8L186.5 251.0" stroke="#8a6a50" stroke-width="1.1"/><path d="M150.0 329.8L149.7 332.1" stroke="#c8a07a" stroke-width="1.1"/><path d="M215.8 255.2L215.2 257.5" stroke="#caa882" stroke-width="1.1"/><path d="M218.6 287.0L216.9 289.6" stroke="#8a6a50" stroke-width="1.1"/><path d="M116.8 243.7L119.1 247.0" stroke="#6a4a3a" stroke-width="1.1"/><path d="M121.4 264.4L121.6 266.1" stroke="#8a6a50" stroke-width="1.1"/><path d="M211.3 321.7L214.9 323.2" stroke="#5a4a3a" stroke-width="1.1"/><path d="M212.1 264.4L212.6 266.1" stroke="#a88a6c" stroke-width="1.1"/><path d="M195.1 283.9L192.5 284.5" stroke="#8a6a50" stroke-width="1.1"/><path d="M181.4 277.0L182.8 277.9" stroke="#7e5844" stroke-width="1.1"/><path d="M239.6 311.6L238.8 313.7" stroke="#b08466" stroke-width="1.1"/><path d="M112.5 224.6L108.6 225.5" stroke="#caa882" stroke-width="1.1"/><path d="M133.7 308.1L136.3 308.6" stroke="#b08466" stroke-width="1.1"/><path d="M213.4 324.1L213.6 326.3" stroke="#6a4a3a" stroke-width="1.1"/><path d="M255.1 319.7L253.7 321.8" stroke="#9c7458" stroke-width="1.1"/><path d="M114.4 235.7L116.3 237.2" stroke="#b08466" stroke-width="1.1"/><path d="M136.9 274.1L138.3 276.9" stroke="#caa882" stroke-width="1.1"/><path d="M160.8 331.0L163.3 331.1" stroke="#c8a07a" stroke-width="1.1"/><path d="M175.1 253.3L173.3 254.9" stroke="#c8a07a" stroke-width="1.1"/><path d="M187.8 268.9L186.2 271.7" stroke="#5a4a3a" stroke-width="1.1"/><path d="M202.2 320.8L202.7 324.1" stroke="#6a4a3a" stroke-width="1.1"/><path d="M160.1 261.1L157.8 263.0" stroke="#caa882" stroke-width="1.1"/><path d="M174.5 312.6L178.0 312.9" stroke="#caa882" stroke-width="1.1"/><path d="M190.5 243.4L190.7 245.8" stroke="#a88a6c" stroke-width="1.1"/><path d="M252.1 282.2L254.3 285.5" stroke="#5a4a3a" stroke-width="1.1"/><path d="M149.9 235.4L150.1 239.1" stroke="#b08466" stroke-width="1.1"/><path d="M122.2 228.1L123.6 229.6" stroke="#c8a07a" stroke-width="1.1"/><path d="M227.0 329.7L225.5 330.5" stroke="#caa882" stroke-width="1.1"/><path d="M132.9 304.7L134.1 306.5" stroke="#6a4a3a" stroke-width="1.1"/><path d="M178.4 305.9L180.1 306.4" stroke="#b08466" stroke-width="1.1"/><path d="M118.4 258.4L118.8 261.4" stroke="#c8a07a" stroke-width="1.1"/><path d="M170.3 269.9L171.8 271.4" stroke="#6a4a3a" stroke-width="1.1"/><path d="M219.7 331.5L222.4 332.2" stroke="#6a4a3a" stroke-width="1.1"/><path d="M192.1 317.2L192.7 320.4" stroke="#5a4a3a" stroke-width="1.1"/><path d="M136.0 261.4L134.4 261.7" stroke="#c8a07a" stroke-width="1.1"/><path d="M188.9 266.1L189.8 268.8" stroke="#a88a6c" stroke-width="1.1"/><path d="M140.3 269.6L140.0 272.4" stroke="#6a4a3a" stroke-width="1.1"/><path d="M179.7 312.8L180.6 314.2" stroke="#caa882" stroke-width="1.1"/><path d="M213.7 277.7L212.1 278.4" stroke="#9c7458" stroke-width="1.1"/><path d="M119.8 251.9L120.9 253.1" stroke="#b08466" stroke-width="1.1"/><path d="M147.3 246.3L147.0 250.2" stroke="#6a4a3a" stroke-width="1.1"/><path d="M128.8 267.5L130.4 268.4" stroke="#8a6a50" stroke-width="1.1"/><path d="M124.9 286.3L126.1 287.9" stroke="#7e5844" stroke-width="1.1"/><path d="M189.4 308.6L186.2 308.9" stroke="#b08466" stroke-width="1.1"/><path d="M191.5 313.3L189.1 313.8" stroke="#b08466" stroke-width="1.1"/><path d="M159.3 280.6L157.6 283.2" stroke="#a88a6c" stroke-width="1.1"/><path d="M196.8 300.6L197.2 303.4" stroke="#a88a6c" stroke-width="1.1"/><path d="M217.5 312.4L220.4 314.0" stroke="#8a6a50" stroke-width="1.1"/><path d="M214.2 263.4L212.0 263.6" stroke="#6a4a3a" stroke-width="1.1"/><path d="M140.3 273.2L140.2 275.2" stroke="#6a4a3a" stroke-width="1.1"/><path d="M199.8 303.1L197.6 304.6" stroke="#7e5844" stroke-width="1.1"/><path d="M186.4 273.7L188.0 273.8" stroke="#9c7458" stroke-width="1.1"/><path d="M154.3 312.3L151.7 315.1" stroke="#9c7458" stroke-width="1.1"/><path d="M135.7 326.1L133.1 326.4" stroke="#9c7458" stroke-width="1.1"/><path d="M193.8 294.0L193.8 296.2" stroke="#a88a6c" stroke-width="1.1"/><path d="M125.9 269.9L123.8 272.2" stroke="#6a4a3a" stroke-width="1.1"/><path d="M252.8 298.3L254.3 301.2" stroke="#caa882" stroke-width="1.1"/><path d="M183.8 318.6L185.1 319.6" stroke="#7e5844" stroke-width="1.1"/><path d="M142.6 317.7L139.1 317.8" stroke="#6a4a3a" stroke-width="1.1"/><path d="M181.5 318.3L182.6 320.7" stroke="#a88a6c" stroke-width="1.1"/><path d="M239.0 316.5L239.6 318.1" stroke="#8a6a50" stroke-width="1.1"/><path d="M188.6 333.1L185.3 334.1" stroke="#6a4a3a" stroke-width="1.1"/><path d="M128.0 300.6L126.9 303.3" stroke="#8a6a50" stroke-width="1.1"/><path d="M240.2 293.1L242.4 296.1" stroke="#c8a07a" stroke-width="1.1"/><path d="M201.4 253.7L199.1 255.5" stroke="#9c7458" stroke-width="1.1"/><path d="M170.5 276.7L167.0 278.3" stroke="#a88a6c" stroke-width="1.1"/><path d="M241.5 272.4L242.9 273.3" stroke="#9c7458" stroke-width="1.1"/><path d="M212.1 265.9L209.1 267.3" stroke="#5a4a3a" stroke-width="1.1"/><path d="M137.9 296.0L137.0 297.4" stroke="#caa882" stroke-width="1.1"/><path d="M233.7 320.3L234.2 323.3" stroke="#5a4a3a" stroke-width="1.1"/><path d="M149.9 317.3L148.0 320.1" stroke="#9c7458" stroke-width="1.1"/><path d="M191.0 289.9L190.0 291.5" stroke="#caa882" stroke-width="1.1"/><path d="M212.1 315.0L215.9 315.2" stroke="#5a4a3a" stroke-width="1.1"/><path d="M192.1 300.9L192.6 302.5" stroke="#6a4a3a" stroke-width="1.1"/><path d="M178.8 280.0L181.3 281.5" stroke="#6a4a3a" stroke-width="1.1"/><path d="M191.3 330.3L189.4 333.2" stroke="#caa882" stroke-width="1.1"/><path d="M182.9 276.9L184.3 279.2" stroke="#5a4a3a" stroke-width="1.1"/><path d="M240.1 286.5L238.8 289.2" stroke="#caa882" stroke-width="1.1"/><path d="M140.8 262.4L139.9 264.5" stroke="#6a4a3a" stroke-width="1.1"/><path d="M251.6 311.0L249.2 312.3" stroke="#c8a07a" stroke-width="1.1"/><path d="M170.5 304.1L173.9 305.0" stroke="#7e5844" stroke-width="1.1"/><path d="M212.1 275.4L213.5 276.8" stroke="#a88a6c" stroke-width="1.1"/><path d="M249.8 280.3L252.4 281.7" stroke="#c8a07a" stroke-width="1.1"/><path d="M155.8 278.8L153.4 280.6" stroke="#c8a07a" stroke-width="1.1"/><path d="M151.2 314.3L149.8 315.3" stroke="#9c7458" stroke-width="1.1"/><path d="M185.9 277.0L184.3 278.6" stroke="#caa882" stroke-width="1.1"/><path d="M201.2 303.3L197.6 304.7" stroke="#a88a6c" stroke-width="1.1"/><path d="M139.7 308.7L138.6 311.4" stroke="#9c7458" stroke-width="1.1"/><path d="M134.2 312.0L137.1 313.2" stroke="#caa882" stroke-width="1.1"/><path d="M239.6 254.9L239.4 258.3" stroke="#a88a6c" stroke-width="1.1"/><path d="M255.3 302.5L254.0 303.7" stroke="#6a4a3a" stroke-width="1.1"/><path d="M114.3 209.7L116.7 210.7" stroke="#5a4a3a" stroke-width="1.1"/><path d="M202.1 305.3L204.5 308.0" stroke="#a88a6c" stroke-width="1.1"/><path d="M222.8 269.5L219.3 270.5" stroke="#c8a07a" stroke-width="1.1"/><path d="M159.3 308.5L155.5 309.0" stroke="#a88a6c" stroke-width="1.1"/><path d="M190.6 290.8L187.1 290.8" stroke="#6a4a3a" stroke-width="1.1"/><path d="M246.1 299.8L246.9 301.4" stroke="#caa882" stroke-width="1.1"/><path d="M134.0 260.4L135.1 261.7" stroke="#5a4a3a" stroke-width="1.1"/><path d="M219.4 268.5L220.2 271.5" stroke="#7e5844" stroke-width="1.1"/><path d="M163.1 296.9L160.0 297.8" stroke="#caa882" stroke-width="1.1"/><path d="M241.8 320.4L243.6 321.9" stroke="#5a4a3a" stroke-width="1.1"/><path d="M219.1 314.7L222.3 316.2" stroke="#5a4a3a" stroke-width="1.1"/><path d="M241.6 274.6L243.2 276.3" stroke="#a88a6c" stroke-width="1.1"/><path d="M169.7 285.6L167.3 288.5" stroke="#caa882" stroke-width="1.1"/><path d="M148.9 267.3L149.4 269.1" stroke="#a88a6c" stroke-width="1.1"/><path d="M214.2 306.5L217.0 308.7" stroke="#6a4a3a" stroke-width="1.1"/><path d="M233.9 270.4L236.0 271.2" stroke="#9c7458" stroke-width="1.1"/><path d="M203.4 303.9L199.5 304.6" stroke="#8a6a50" stroke-width="1.1"/><path d="M234.0 306.3L234.7 308.4" stroke="#9c7458" stroke-width="1.1"/><path d="M195.3 299.9L196.6 301.8" stroke="#9c7458" stroke-width="1.1"/><path d="M172.5 308.7L175.5 309.9" stroke="#5a4a3a" stroke-width="1.1"/><path d="M206.1 283.9L204.8 285.5" stroke="#caa882" stroke-width="1.1"/><path d="M207.0 287.9L204.4 290.2" stroke="#c8a07a" stroke-width="1.1"/><path d="M170.6 270.3L169.5 272.1" stroke="#6a4a3a" stroke-width="1.1"/><path d="M140.5 330.0L139.5 332.2" stroke="#6a4a3a" stroke-width="1.1"/><path d="M126.8 238.7L125.5 241.5" stroke="#caa882" stroke-width="1.1"/><path d="M155.3 302.9L158.4 305.1" stroke="#6a4a3a" stroke-width="1.1"/><path d="M208.2 280.1L205.1 282.2" stroke="#caa882" stroke-width="1.1"/><path d="M218.1 324.4L215.7 326.7" stroke="#caa882" stroke-width="1.1"/><path d="M124.7 241.0L125.2 243.4" stroke="#caa882" stroke-width="1.1"/><path d="M136.1 290.4L134.9 292.1" stroke="#7e5844" stroke-width="1.1"/><path d="M174.2 328.8L175.9 330.1" stroke="#c8a07a" stroke-width="1.1"/><path d="M140.2 307.5L143.0 309.4" stroke="#caa882" stroke-width="1.1"/><path d="M132.8 249.5L134.3 250.4" stroke="#8a6a50" stroke-width="1.1"/><path d="M238.5 279.9L240.5 280.9" stroke="#7e5844" stroke-width="1.1"/><path d="M253.3 299.4L254.0 301.0" stroke="#5a4a3a" stroke-width="1.1"/><path d="M144.7 285.7L141.7 288.1" stroke="#5a4a3a" stroke-width="1.1"/><path d="M222.0 254.9L224.5 257.0" stroke="#caa882" stroke-width="1.1"/><path d="M152.2 273.8L150.9 275.0" stroke="#a88a6c" stroke-width="1.1"/><path d="M171.2 246.4L173.4 248.1" stroke="#6a4a3a" stroke-width="1.1"/><path d="M230.2 265.3L232.2 268.0" stroke="#caa882" stroke-width="1.1"/><path d="M131.0 292.0L132.2 293.7" stroke="#9c7458" stroke-width="1.1"/><path d="M255.3 258.0L254.4 259.8" stroke="#9c7458" stroke-width="1.1"/><path d="M213.1 327.5L215.9 327.7" stroke="#8a6a50" stroke-width="1.1"/><path d="M157.9 313.7L156.5 316.6" stroke="#caa882" stroke-width="1.1"/><path d="M250.0 265.7L248.5 269.3" stroke="#b08466" stroke-width="1.1"/><path d="M132.6 268.1L132.7 270.2" stroke="#b08466" stroke-width="1.1"/><path d="M209.1 324.2L206.6 325.9" stroke="#5a4a3a" stroke-width="1.1"/><path d="M134.9 320.9L138.1 322.2" stroke="#9c7458" stroke-width="1.1"/><path d="M217.7 281.2L217.6 283.3" stroke="#5a4a3a" stroke-width="1.1"/><path d="M149.3 286.8L149.8 290.1" stroke="#caa882" stroke-width="1.1"/><path d="M171.4 306.5L172.3 308.5" stroke="#a88a6c" stroke-width="1.1"/><path d="M157.7 327.7L158.4 331.2" stroke="#caa882" stroke-width="1.1"/><path d="M150.5 330.3L152.5 330.4" stroke="#8a6a50" stroke-width="1.1"/><path d="M150.8 293.1L149.7 296.7" stroke="#6a4a3a" stroke-width="1.1"/><path d="M250.2 295.3L248.6 295.7" stroke="#caa882" stroke-width="1.1"/><path d="M152.9 308.1L154.8 308.3" stroke="#caa882" stroke-width="1.1"/><path d="M246.3 334.5L244.7 335.2" stroke="#b08466" stroke-width="1.1"/><path d="M185.4 316.6L187.2 317.3" stroke="#a88a6c" stroke-width="1.1"/><path d="M170.2 294.5L171.3 296.1" stroke="#caa882" stroke-width="1.1"/><path d="M218.1 304.4L216.2 305.1" stroke="#6a4a3a" stroke-width="1.1"/><path d="M178.2 304.7L176.6 304.8" stroke="#b08466" stroke-width="1.1"/><path d="M121.0 248.7L120.1 251.1" stroke="#6a4a3a" stroke-width="1.1"/><path d="M129.6 225.2L127.3 225.9" stroke="#a88a6c" stroke-width="1.1"/><path d="M135.5 239.3L136.1 242.7" stroke="#7e5844" stroke-width="1.1"/><path d="M207.9 324.6L205.2 324.6" stroke="#7e5844" stroke-width="1.1"/><path d="M230.7 275.0L229.5 277.9" stroke="#b08466" stroke-width="1.1"/><path d="M191.6 324.8L191.1 327.7" stroke="#b08466" stroke-width="1.1"/><path d="M245.3 254.6L243.2 256.0" stroke="#6a4a3a" stroke-width="1.1"/><path d="M213.5 320.6L217.2 322.2" stroke="#5a4a3a" stroke-width="1.1"/><path d="M137.3 262.8L135.0 263.5" stroke="#5a4a3a" stroke-width="1.1"/><path d="M128.2 292.9L129.2 294.8" stroke="#5a4a3a" stroke-width="1.1"/><path d="M182.2 252.0L181.0 253.0" stroke="#5a4a3a" stroke-width="1.1"/><path d="M184.2 305.9L185.9 307.7" stroke="#c8a07a" stroke-width="1.1"/><path d="M199.6 294.1L202.1 296.0" stroke="#b08466" stroke-width="1.1"/><path d="M152.7 320.6L153.0 323.9" stroke="#5a4a3a" stroke-width="1.1"/><path d="M130.7 259.6L134.6 260.0" stroke="#8a6a50" stroke-width="1.1"/><path d="M253.5 283.2L254.6 286.7" stroke="#8a6a50" stroke-width="1.1"/><path d="M133.4 323.0L135.2 325.1" stroke="#a88a6c" stroke-width="1.1"/><path d="M217.7 277.3L216.2 278.8" stroke="#8a6a50" stroke-width="1.1"/><path d="M228.6 330.6L229.4 333.0" stroke="#c8a07a" stroke-width="1.1"/><path d="M222.3 320.1L225.7 320.6" stroke="#5a4a3a" stroke-width="1.1"/><path d="M183.5 295.0L185.0 297.2" stroke="#9c7458" stroke-width="1.1"/><path d="M188.2 254.7L191.2 257.3" stroke="#b08466" stroke-width="1.1"/><path d="M202.6 274.6L204.7 277.0" stroke="#caa882" stroke-width="1.1"/><path d="M145.4 316.3L142.8 316.8" stroke="#6a4a3a" stroke-width="1.1"/><path d="M180.5 308.0L180.4 311.7" stroke="#b08466" stroke-width="1.1"/><path d="M122.7 229.3L125.3 231.9" stroke="#caa882" stroke-width="1.1"/><path d="M173.8 296.5L171.5 297.1" stroke="#caa882" stroke-width="1.1"/><path d="M207.2 271.8L206.2 273.4" stroke="#c8a07a" stroke-width="1.1"/><path d="M178.8 308.8L181.9 309.3" stroke="#6a4a3a" stroke-width="1.1"/><path d="M140.0 298.8L141.7 301.0" stroke="#5a4a3a" stroke-width="1.1"/><path d="M227.9 320.4L225.4 320.6" stroke="#a88a6c" stroke-width="1.1"/><path d="M229.9 260.2L228.3 261.7" stroke="#5a4a3a" stroke-width="1.1"/><path d="M200.4 273.7L197.4 275.6" stroke="#9c7458" stroke-width="1.1"/><path d="M223.4 265.7L226.9 266.9" stroke="#9c7458" stroke-width="1.1"/><path d="M119.8 259.6L119.6 262.2" stroke="#5a4a3a" stroke-width="1.1"/><path d="M181.0 304.4L179.1 305.1" stroke="#a88a6c" stroke-width="1.1"/><path d="M224.6 319.3L227.0 320.0" stroke="#a88a6c" stroke-width="1.1"/><path d="M186.2 327.0L186.5 329.8" stroke="#caa882" stroke-width="1.1"/><path d="M156.4 301.7L156.5 303.8" stroke="#c8a07a" stroke-width="1.1"/><path d="M139.1 258.6L136.5 259.5" stroke="#caa882" stroke-width="1.1"/><path d="M162.5 284.3L159.7 284.7" stroke="#caa882" stroke-width="1.1"/><path d="M172.3 261.4L173.6 262.3" stroke="#6a4a3a" stroke-width="1.1"/><path d="M145.8 302.2L142.8 304.7" stroke="#c8a07a" stroke-width="1.1"/><path d="M222.1 283.6L225.6 284.3" stroke="#caa882" stroke-width="1.1"/><path d="M241.4 312.0L238.5 313.4" stroke="#7e5844" stroke-width="1.1"/><path d="M131.1 313.6L133.5 316.5" stroke="#b08466" stroke-width="1.1"/><path d="M227.4 329.2L228.6 331.5" stroke="#a88a6c" stroke-width="1.1"/><path d="M195.6 286.4L195.9 288.1" stroke="#c8a07a" stroke-width="1.1"/><path d="M221.6 329.7L221.6 331.7" stroke="#7e5844" stroke-width="1.1"/><path d="M137.0 301.2L136.2 303.8" stroke="#7e5844" stroke-width="1.1"/><path d="M111.9 226.7L113.1 228.3" stroke="#6a4a3a" stroke-width="1.1"/><path d="M174.2 246.6L171.3 246.8" stroke="#b08466" stroke-width="1.1"/><path d="M179.0 304.4L181.9 305.8" stroke="#b08466" stroke-width="1.1"/><path d="M212.8 262.8L209.4 264.8" stroke="#7e5844" stroke-width="1.1"/><path d="M163.9 255.4L162.3 258.3" stroke="#8a6a50" stroke-width="1.1"/><path d="M141.4 309.4L139.0 312.0" stroke="#caa882" stroke-width="1.1"/><path d="M236.5 284.8L233.0 285.0" stroke="#caa882" stroke-width="1.1"/><path d="M218.9 331.5L222.6 331.8" stroke="#b08466" stroke-width="1.1"/><path d="M210.1 318.0L206.9 318.7" stroke="#caa882" stroke-width="1.1"/><path d="M237.0 330.7L239.2 331.1" stroke="#b08466" stroke-width="1.1"/><path d="M165.4 297.9L167.1 301.2" stroke="#9c7458" stroke-width="1.1"/><path d="M249.4 270.9L247.3 272.2" stroke="#a88a6c" stroke-width="1.1"/><path d="M161.2 328.4L158.7 329.7" stroke="#6a4a3a" stroke-width="1.1"/><path d="M214.5 275.5L214.4 277.5" stroke="#9c7458" stroke-width="1.1"/><path d="M116.2 217.2L118.5 219.6" stroke="#7e5844" stroke-width="1.1"/><path d="M141.2 292.8L138.7 293.8" stroke="#caa882" stroke-width="1.1"/><path d="M175.9 320.8L177.7 321.0" stroke="#6a4a3a" stroke-width="1.1"/><path d="M165.4 304.2L162.6 304.4" stroke="#5a4a3a" stroke-width="1.1"/><path d="M123.9 258.3L122.4 260.7" stroke="#5a4a3a" stroke-width="1.1"/><path d="M113.9 213.2L110.2 214.6" stroke="#a88a6c" stroke-width="1.1"/><path d="M156.6 330.5L157.6 333.9" stroke="#8a6a50" stroke-width="1.1"/><path d="M140.2 320.6L137.5 321.0" stroke="#9c7458" stroke-width="1.1"/><path d="M144.7 307.4L146.5 308.1" stroke="#8a6a50" stroke-width="1.1"/><path d="M229.9 262.3L227.7 263.7" stroke="#8a6a50" stroke-width="1.1"/><path d="M149.5 258.8L150.1 262.5" stroke="#c8a07a" stroke-width="1.1"/><path d="M244.7 312.2L246.8 313.6" stroke="#6a4a3a" stroke-width="1.1"/><path d="M234.7 319.1L233.4 320.5" stroke="#a88a6c" stroke-width="1.1"/><path d="M189.2 279.3L193.0 279.5" stroke="#a88a6c" stroke-width="1.1"/><path d="M156.9 257.2L160.6 257.3" stroke="#8a6a50" stroke-width="1.1"/><path d="M132.4 301.6L135.5 303.9" stroke="#8a6a50" stroke-width="1.1"/><path d="M222.8 287.7L223.1 290.3" stroke="#7e5844" stroke-width="1.1"/><path d="M151.5 287.0L149.2 290.2" stroke="#c8a07a" stroke-width="1.1"/><path d="M235.5 260.2L238.5 261.0" stroke="#5a4a3a" stroke-width="1.1"/><path d="M224.8 319.1L228.2 320.7" stroke="#caa882" stroke-width="1.1"/><path d="M150.6 288.3L151.8 291.3" stroke="#7e5844" stroke-width="1.1"/><path d="M163.9 308.5L164.4 311.8" stroke="#caa882" stroke-width="1.1"/><path d="M115.4 232.7L117.5 235.0" stroke="#7e5844" stroke-width="1.1"/><path d="M165.6 280.4L165.2 282.9" stroke="#caa882" stroke-width="1.1"/><path d="M108.8 212.5L108.8 215.7" stroke="#a88a6c" stroke-width="1.1"/><path d="M233.0 271.0L232.1 274.2" stroke="#b08466" stroke-width="1.1"/><path d="M243.6 310.2L243.1 312.9" stroke="#a88a6c" stroke-width="1.1"/><path d="M172.5 253.9L173.1 256.0" stroke="#caa882" stroke-width="1.1"/><path d="M226.0 314.5L224.1 315.6" stroke="#6a4a3a" stroke-width="1.1"/><path d="M120.9 267.1L119.1 268.8" stroke="#7e5844" stroke-width="1.1"/><path d="M236.8 299.7L235.0 299.8" stroke="#a88a6c" stroke-width="1.1"/><path d="M180.1 264.1L176.9 265.8" stroke="#a88a6c" stroke-width="1.1"/><path d="M209.2 291.1L212.6 292.8" stroke="#7e5844" stroke-width="1.1"/><path d="M126.7 233.1L125.3 235.1" stroke="#b08466" stroke-width="1.1"/><path d="M239.0 278.3L241.8 278.4" stroke="#b08466" stroke-width="1.1"/><path d="M129.2 237.1L131.9 238.7" stroke="#6a4a3a" stroke-width="1.1"/><path d="M223.4 278.6L221.1 280.4" stroke="#c8a07a" stroke-width="1.1"/><path d="M227.7 316.3L230.9 318.8" stroke="#9c7458" stroke-width="1.1"/><path d="M243.1 284.6L244.9 286.9" stroke="#7e5844" stroke-width="1.1"/><path d="M217.9 279.2L214.2 279.8" stroke="#caa882" stroke-width="1.1"/><path d="M124.1 255.2L124.5 258.0" stroke="#6a4a3a" stroke-width="1.1"/><path d="M191.0 330.5L188.3 331.4" stroke="#b08466" stroke-width="1.1"/><path d="M145.7 294.8L144.6 296.9" stroke="#7e5844" stroke-width="1.1"/><path d="M131.7 243.6L130.2 244.8" stroke="#b08466" stroke-width="1.1"/><path d="M135.1 297.0L138.0 297.7" stroke="#a88a6c" stroke-width="1.1"/><path d="M244.3 272.6L242.0 273.2" stroke="#7e5844" stroke-width="1.1"/><path d="M241.4 294.9L238.0 295.5" stroke="#7e5844" stroke-width="1.1"/><path d="M210.7 318.9L214.2 320.3" stroke="#a88a6c" stroke-width="1.1"/><path d="M169.5 286.5L171.4 288.0" stroke="#c8a07a" stroke-width="1.1"/><path d="M140.2 307.4L142.2 308.9" stroke="#a88a6c" stroke-width="1.1"/><path d="M171.5 266.3L169.3 266.3" stroke="#c8a07a" stroke-width="1.1"/><path d="M143.1 329.7L145.0 332.6" stroke="#caa882" stroke-width="1.1"/><path d="M132.9 302.3L132.5 306.0" stroke="#9c7458" stroke-width="1.1"/><path d="M178.1 278.7L181.9 279.9" stroke="#5a4a3a" stroke-width="1.1"/><path d="M135.2 328.5L136.4 331.5" stroke="#6a4a3a" stroke-width="1.1"/><path d="M186.5 315.5L186.3 318.8" stroke="#6a4a3a" stroke-width="1.1"/><path d="M121.1 280.0L123.7 280.9" stroke="#9c7458" stroke-width="1.1"/><path d="M174.7 333.3L176.5 334.9" stroke="#caa882" stroke-width="1.1"/><path d="M196.1 286.5L193.2 288.1" stroke="#6a4a3a" stroke-width="1.1"/><path d="M138.1 251.3L136.7 253.5" stroke="#9c7458" stroke-width="1.1"/><path d="M137.4 274.0L139.0 275.0" stroke="#b08466" stroke-width="1.1"/><path d="M165.4 323.5L165.0 326.7" stroke="#a88a6c" stroke-width="1.1"/><path d="M203.5 255.9L201.1 256.4" stroke="#b08466" stroke-width="1.1"/><path d="M241.6 260.4L239.8 260.6" stroke="#5a4a3a" stroke-width="1.1"/><path d="M210.3 292.1L207.8 292.6" stroke="#b08466" stroke-width="1.1"/><path d="M232.6 291.8L233.2 295.2" stroke="#c8a07a" stroke-width="1.1"/><path d="M223.9 300.9L226.1 301.6" stroke="#b08466" stroke-width="1.1"/><path d="M155.8 292.0L158.2 293.6" stroke="#a88a6c" stroke-width="1.1"/><path d="M202.2 311.9L203.0 314.6" stroke="#8a6a50" stroke-width="1.1"/><path d="M111.7 208.0L113.7 211.0" stroke="#caa882" stroke-width="1.1"/><path d="M185.5 305.4L187.2 307.4" stroke="#5a4a3a" stroke-width="1.1"/><path d="M248.6 326.6L249.5 329.8" stroke="#8a6a50" stroke-width="1.1"/><path d="M187.1 315.7L189.2 316.3" stroke="#8a6a50" stroke-width="1.1"/><path d="M232.7 269.0L232.1 270.5" stroke="#5a4a3a" stroke-width="1.1"/><path d="M217.3 247.1L215.8 249.6" stroke="#7e5844" stroke-width="1.1"/><path d="M195.3 258.0L191.4 258.1" stroke="#7e5844" stroke-width="1.1"/><path d="M159.7 321.8L158.3 322.6" stroke="#7e5844" stroke-width="1.1"/><path d="M146.1 307.5L147.6 311.2" stroke="#7e5844" stroke-width="1.1"/><path d="M166.2 313.4L163.7 314.7" stroke="#9c7458" stroke-width="1.1"/><path d="M122.4 261.9L122.1 264.0" stroke="#5a4a3a" stroke-width="1.1"/><path d="M221.5 263.6L221.8 265.5" stroke="#caa882" stroke-width="1.1"/><path d="M168.9 310.2L167.9 313.5" stroke="#a88a6c" stroke-width="1.1"/><path d="M204.7 274.5L204.4 276.6" stroke="#a88a6c" stroke-width="1.1"/><path d="M248.4 272.5L251.8 273.4" stroke="#a88a6c" stroke-width="1.1"/><path d="M137.4 323.5L137.0 326.3" stroke="#9c7458" stroke-width="1.1"/><path d="M205.5 315.3L206.3 317.3" stroke="#8a6a50" stroke-width="1.1"/><path d="M132.5 285.9L135.2 288.5" stroke="#b08466" stroke-width="1.1"/><path d="M165.9 247.2L162.8 249.0" stroke="#b08466" stroke-width="1.1"/><path d="M115.9 234.8L115.2 236.7" stroke="#c8a07a" stroke-width="1.1"/><path d="M123.7 266.0L127.0 267.6" stroke="#7e5844" stroke-width="1.1"/><path d="M145.6 242.6L143.6 245.3" stroke="#b08466" stroke-width="1.1"/><path d="M201.8 314.0L200.1 315.4" stroke="#caa882" stroke-width="1.1"/><path d="M229.1 316.8L227.7 318.4" stroke="#8a6a50" stroke-width="1.1"/><path d="M237.2 306.4L235.4 309.4" stroke="#9c7458" stroke-width="1.1"/><path d="M136.3 268.9L135.8 272.3" stroke="#caa882" stroke-width="1.1"/><path d="M178.4 278.4L180.5 279.9" stroke="#5a4a3a" stroke-width="1.1"/><path d="M179.0 279.9L179.2 282.4" stroke="#7e5844" stroke-width="1.1"/><path d="M158.4 324.4L158.3 328.3" stroke="#a88a6c" stroke-width="1.1"/><path d="M233.5 317.2L231.7 318.5" stroke="#b08466" stroke-width="1.1"/><path d="M111.4 225.7L111.9 227.8" stroke="#6a4a3a" stroke-width="1.1"/><path d="M234.7 325.8L232.2 326.4" stroke="#9c7458" stroke-width="1.1"/><path d="M152.4 315.8L152.0 319.0" stroke="#8a6a50" stroke-width="1.1"/><path d="M139.4 257.2L141.0 259.8" stroke="#b08466" stroke-width="1.1"/><path d="M222.8 289.9L225.0 290.9" stroke="#c8a07a" stroke-width="1.1"/><path d="M210.5 316.1L211.6 317.2" stroke="#a88a6c" stroke-width="1.1"/><path d="M158.4 250.6L161.4 251.4" stroke="#b08466" stroke-width="1.1"/><path d="M213.6 306.4L211.3 307.8" stroke="#8a6a50" stroke-width="1.1"/><path d="M122.2 263.8L120.2 266.1" stroke="#a88a6c" stroke-width="1.1"/><path d="M130.5 232.6L130.5 235.9" stroke="#5a4a3a" stroke-width="1.1"/><path d="M230.5 252.5L229.4 254.8" stroke="#5a4a3a" stroke-width="1.1"/><path d="M147.2 264.6L145.3 267.8" stroke="#8a6a50" stroke-width="1.1"/><path d="M195.5 265.4L197.5 266.9" stroke="#a88a6c" stroke-width="1.1"/><path d="M200.9 302.2L203.5 303.0" stroke="#a88a6c" stroke-width="1.1"/><path d="M180.0 322.9L179.7 325.1" stroke="#7e5844" stroke-width="1.1"/><path d="M239.4 320.6L239.7 322.2" stroke="#8a6a50" stroke-width="1.1"/><path d="M144.7 290.2L143.9 292.7" stroke="#9c7458" stroke-width="1.1"/><path d="M137.6 261.9L137.9 263.7" stroke="#9c7458" stroke-width="1.1"/><path d="M248.4 326.7L251.1 327.2" stroke="#9c7458" stroke-width="1.1"/><path d="M238.0 308.8L239.5 310.2" stroke="#b08466" stroke-width="1.1"/><path d="M167.8 286.8L165.3 289.2" stroke="#6a4a3a" stroke-width="1.1"/><path d="M118.4 259.2L115.6 261.4" stroke="#5a4a3a" stroke-width="1.1"/><path d="M171.4 295.8L172.6 296.8" stroke="#8a6a50" stroke-width="1.1"/><path d="M115.7 254.0L118.7 255.4" stroke="#5a4a3a" stroke-width="1.1"/><path d="M145.9 303.5L148.8 305.3" stroke="#8a6a50" stroke-width="1.1"/><path d="M172.6 281.4L176.3 282.7" stroke="#7e5844" stroke-width="1.1"/><path d="M195.4 330.0L194.6 332.5" stroke="#c8a07a" stroke-width="1.1"/><path d="M172.9 278.8L175.7 279.2" stroke="#6a4a3a" stroke-width="1.1"/><path d="M165.4 290.2L162.9 291.2" stroke="#a88a6c" stroke-width="1.1"/><path d="M184.7 266.7L186.5 267.8" stroke="#a88a6c" stroke-width="1.1"/><path d="M200.8 295.6L203.1 297.7" stroke="#6a4a3a" stroke-width="1.1"/><path d="M173.2 332.4L176.1 333.2" stroke="#5a4a3a" stroke-width="1.1"/><path d="M129.9 273.9L131.8 276.2" stroke="#b08466" stroke-width="1.1"/><path d="M168.2 280.6L166.1 280.9" stroke="#8a6a50" stroke-width="1.1"/><path d="M204.0 329.5L202.7 330.7" stroke="#7e5844" stroke-width="1.1"/><path d="M156.1 271.9L158.4 272.9" stroke="#7e5844" stroke-width="1.1"/><path d="M214.5 262.7L216.4 264.5" stroke="#7e5844" stroke-width="1.1"/><path d="M166.6 278.2L167.7 280.2" stroke="#caa882" stroke-width="1.1"/><path d="M175.5 251.3L178.4 251.9" stroke="#c8a07a" stroke-width="1.1"/><path d="M119.0 228.0L120.6 229.2" stroke="#b08466" stroke-width="1.1"/><path d="M220.0 269.5L220.5 271.7" stroke="#8a6a50" stroke-width="1.1"/><path d="M188.1 259.7L185.2 260.6" stroke="#7e5844" stroke-width="1.1"/><path d="M159.5 309.2L162.3 310.4" stroke="#5a4a3a" stroke-width="1.1"/><path d="M200.5 263.0L198.6 263.6" stroke="#7e5844" stroke-width="1.1"/><path d="M159.8 243.9L159.0 246.6" stroke="#8a6a50" stroke-width="1.1"/><path d="M127.7 279.9L126.1 280.6" stroke="#6a4a3a" stroke-width="1.1"/><path d="M208.8 266.6L207.3 269.1" stroke="#9c7458" stroke-width="1.1"/><path d="M185.1 323.4L182.2 324.7" stroke="#5a4a3a" stroke-width="1.1"/><path d="M181.7 287.6L180.7 290.8" stroke="#5a4a3a" stroke-width="1.1"/><path d="M206.3 264.9L204.5 265.1" stroke="#7e5844" stroke-width="1.1"/><path d="M188.9 269.0L188.2 271.5" stroke="#5a4a3a" stroke-width="1.1"/><path d="M168.4 303.8L167.8 306.1" stroke="#6a4a3a" stroke-width="1.1"/><path d="M143.0 273.9L145.7 275.1" stroke="#a88a6c" stroke-width="1.1"/><path d="M203.1 327.7L203.5 329.8" stroke="#5a4a3a" stroke-width="1.1"/><path d="M189.4 251.2L191.6 251.5" stroke="#b08466" stroke-width="1.1"/><path d="M150.7 322.6L154.3 324.2" stroke="#a88a6c" stroke-width="1.1"/><path d="M171.6 302.8L171.7 304.5" stroke="#b08466" stroke-width="1.1"/><path d="M161.7 273.3L160.5 276.5" stroke="#c8a07a" stroke-width="1.1"/><path d="M234.7 247.7L231.1 248.1" stroke="#8a6a50" stroke-width="1.1"/><path d="M133.3 255.0L131.5 258.4" stroke="#a88a6c" stroke-width="1.1"/><path d="M218.5 293.4L221.3 295.0" stroke="#5a4a3a" stroke-width="1.1"/><path d="M170.9 271.2L168.6 271.4" stroke="#caa882" stroke-width="1.1"/><path d="M188.8 266.7L191.5 269.1" stroke="#7e5844" stroke-width="1.1"/><path d="M176.6 256.6L178.9 259.0" stroke="#5a4a3a" stroke-width="1.1"/><path d="M161.9 288.4L159.7 290.6" stroke="#c8a07a" stroke-width="1.1"/><path d="M247.8 258.9L248.3 260.5" stroke="#6a4a3a" stroke-width="1.1"/><path d="M179.1 310.5L177.3 310.8" stroke="#9c7458" stroke-width="1.1"/><path d="M144.6 285.9L147.5 286.2" stroke="#6a4a3a" stroke-width="1.1"/><path d="M105.6 205.7L104.3 208.6" stroke="#caa882" stroke-width="1.1"/><path d="M244.2 282.4L244.5 284.0" stroke="#9c7458" stroke-width="1.1"/><path d="M145.2 317.4L146.2 319.3" stroke="#7e5844" stroke-width="1.1"/><path d="M148.9 276.7L149.1 279.2" stroke="#5a4a3a" stroke-width="1.1"/><path d="M159.5 297.4L158.1 298.6" stroke="#5a4a3a" stroke-width="1.1"/><path d="M161.1 328.7L158.5 330.0" stroke="#5a4a3a" stroke-width="1.1"/><path d="M184.9 323.6L188.1 325.1" stroke="#7e5844" stroke-width="1.1"/><path d="M189.3 295.6L186.7 296.5" stroke="#5a4a3a" stroke-width="1.1"/><path d="M125.5 276.4L124.2 278.2" stroke="#5a4a3a" stroke-width="1.1"/><path d="M149.1 285.7L151.8 287.8" stroke="#c8a07a" stroke-width="1.1"/><path d="M214.9 254.1L213.3 254.8" stroke="#5a4a3a" stroke-width="1.1"/><path d="M159.2 287.4L158.1 289.4" stroke="#6a4a3a" stroke-width="1.1"/><path d="M125.7 287.1L123.4 289.8" stroke="#caa882" stroke-width="1.1"/><path d="M224.3 327.8L227.9 329.0" stroke="#b08466" stroke-width="1.1"/><path d="M203.1 289.2L202.3 293.0" stroke="#5a4a3a" stroke-width="1.1"/><path d="M227.3 274.8L228.6 275.9" stroke="#c8a07a" stroke-width="1.1"/><path d="M162.2 255.2L162.1 257.4" stroke="#8a6a50" stroke-width="1.1"/><path d="M224.0 247.1L225.8 247.8" stroke="#caa882" stroke-width="1.1"/><path d="M126.7 225.6L123.3 227.3" stroke="#9c7458" stroke-width="1.1"/><path d="M134.2 307.5L132.5 310.0" stroke="#6a4a3a" stroke-width="1.1"/><path d="M121.5 241.9L124.8 243.1" stroke="#b08466" stroke-width="1.1"/><path d="M126.5 264.8L124.8 265.5" stroke="#b08466" stroke-width="1.1"/><path d="M245.5 295.3L242.9 297.4" stroke="#5a4a3a" stroke-width="1.1"/><path d="M155.3 267.6L156.6 268.6" stroke="#7e5844" stroke-width="1.1"/><path d="M174.6 321.3L176.0 324.7" stroke="#5a4a3a" stroke-width="1.1"/><path d="M201.9 254.1L204.2 256.7" stroke="#5a4a3a" stroke-width="1.1"/><path d="M130.3 277.9L132.6 278.2" stroke="#c8a07a" stroke-width="1.1"/><path d="M192.9 321.5L192.7 323.1" stroke="#8a6a50" stroke-width="1.1"/><path d="M210.2 305.7L209.9 307.7" stroke="#8a6a50" stroke-width="1.1"/><path d="M231.6 287.5L233.5 288.9" stroke="#b08466" stroke-width="1.1"/><path d="M218.5 272.1L219.5 274.4" stroke="#9c7458" stroke-width="1.1"/><path d="M131.5 272.2L129.4 274.2" stroke="#7e5844" stroke-width="1.1"/><path d="M151.5 322.5L148.2 323.2" stroke="#b08466" stroke-width="1.1"/><path d="M229.7 297.8L231.1 299.5" stroke="#5a4a3a" stroke-width="1.1"/><path d="M236.1 246.4L234.6 248.5" stroke="#caa882" stroke-width="1.1"/><path d="M170.0 260.7L169.9 263.4" stroke="#8a6a50" stroke-width="1.1"/><path d="M108.5 205.8L109.2 207.9" stroke="#8a6a50" stroke-width="1.1"/><path d="M189.3 325.4L188.5 328.2" stroke="#7e5844" stroke-width="1.1"/><path d="M248.4 303.9L249.3 305.7" stroke="#6a4a3a" stroke-width="1.1"/><path d="M220.5 253.1L218.8 254.0" stroke="#a88a6c" stroke-width="1.1"/><path d="M132.3 281.2L130.4 283.6" stroke="#c8a07a" stroke-width="1.1"/><path d="M151.8 264.7L150.6 267.0" stroke="#a88a6c" stroke-width="1.1"/><path d="M188.7 322.8L191.8 322.8" stroke="#5a4a3a" stroke-width="1.1"/><path d="M146.5 269.7L147.5 271.3" stroke="#6a4a3a" stroke-width="1.1"/><path d="M120.5 220.4L117.3 221.9" stroke="#6a4a3a" stroke-width="1.1"/><path d="M132.3 285.4L129.5 286.7" stroke="#b08466" stroke-width="1.1"/><path d="M183.4 284.0L183.9 286.2" stroke="#5a4a3a" stroke-width="1.1"/><path d="M181.2 287.2L184.6 288.7" stroke="#7e5844" stroke-width="1.1"/><path d="M244.7 315.2L247.8 315.8" stroke="#9c7458" stroke-width="1.1"/><path d="M195.4 264.6L193.6 266.8" stroke="#9c7458" stroke-width="1.1"/><path d="M205.4 263.1L205.2 265.3" stroke="#b08466" stroke-width="1.1"/><path d="M200.7 309.0L204.4 309.4" stroke="#caa882" stroke-width="1.1"/><path d="M160.5 263.7L159.2 266.0" stroke="#5a4a3a" stroke-width="1.1"/><path d="M150.0 274.1L151.9 275.1" stroke="#5a4a3a" stroke-width="1.1"/><path d="M193.0 260.2L196.0 260.7" stroke="#c8a07a" stroke-width="1.1"/><path d="M164.4 299.2L163.1 300.8" stroke="#caa882" stroke-width="1.1"/><path d="M239.2 305.3L237.2 306.6" stroke="#7e5844" stroke-width="1.1"/><path d="M200.3 319.9L202.7 320.5" stroke="#a88a6c" stroke-width="1.1"/><path d="M207.5 284.5L208.8 286.4" stroke="#5a4a3a" stroke-width="1.1"/><path d="M253.9 299.0L253.8 300.9" stroke="#9c7458" stroke-width="1.1"/><path d="M186.2 266.1L184.1 268.5" stroke="#caa882" stroke-width="1.1"/><path d="M118.5 210.4L118.1 212.8" stroke="#9c7458" stroke-width="1.1"/><path d="M112.0 244.1L114.6 245.6" stroke="#8a6a50" stroke-width="1.1"/><path d="M212.5 293.4L210.0 294.0" stroke="#6a4a3a" stroke-width="1.1"/><path d="M217.3 259.8L215.7 261.1" stroke="#9c7458" stroke-width="1.1"/><path d="M249.0 297.8L245.1 297.9" stroke="#c8a07a" stroke-width="1.1"/><path d="M130.6 318.1L134.0 319.1" stroke="#5a4a3a" stroke-width="1.1"/><path d="M115.5 217.5L112.5 219.1" stroke="#6a4a3a" stroke-width="1.1"/><path d="M151.6 286.5L153.6 288.3" stroke="#9c7458" stroke-width="1.1"/><path d="M220.4 299.2L219.7 300.7" stroke="#b08466" stroke-width="1.1"/><path d="M165.3 282.0L166.0 284.1" stroke="#8a6a50" stroke-width="1.1"/><path d="M228.5 330.8L230.3 332.9" stroke="#6a4a3a" stroke-width="1.1"/><path d="M136.0 247.0L135.1 249.6" stroke="#b08466" stroke-width="1.1"/><path d="M170.8 265.6L170.7 268.1" stroke="#b08466" stroke-width="1.1"/><path d="M240.5 306.1L238.6 307.2" stroke="#b08466" stroke-width="1.1"/><path d="M140.8 257.7L138.3 259.8" stroke="#9c7458" stroke-width="1.1"/><path d="M254.1 309.5L255.4 312.3" stroke="#9c7458" stroke-width="1.1"/><path d="M137.6 292.7L135.6 296.1" stroke="#b08466" stroke-width="1.1"/><path d="M134.3 252.3L137.2 253.7" stroke="#8a6a50" stroke-width="1.1"/><path d="M196.7 332.2L199.7 332.8" stroke="#9c7458" stroke-width="1.1"/><path d="M148.7 248.9L150.0 250.7" stroke="#a88a6c" stroke-width="1.1"/><path d="M192.6 277.0L192.5 278.8" stroke="#caa882" stroke-width="1.1"/><path d="M236.4 310.0L238.1 311.6" stroke="#6a4a3a" stroke-width="1.1"/><path d="M160.1 269.5L159.7 273.2" stroke="#c8a07a" stroke-width="1.1"/><path d="M203.9 292.4L200.1 293.3" stroke="#5a4a3a" stroke-width="1.1"/><path d="M198.2 280.7L196.6 284.1" stroke="#8a6a50" stroke-width="1.1"/><path d="M169.6 257.8L169.1 259.6" stroke="#5a4a3a" stroke-width="1.1"/><path d="M168.3 286.4L170.6 289.1" stroke="#7e5844" stroke-width="1.1"/><path d="M214.3 307.9L211.4 308.3" stroke="#a88a6c" stroke-width="1.1"/><path d="M170.7 265.2L170.3 267.1" stroke="#6a4a3a" stroke-width="1.1"/><path d="M196.1 328.5L194.2 330.7" stroke="#caa882" stroke-width="1.1"/><path d="M154.2 312.1L155.5 315.2" stroke="#8a6a50" stroke-width="1.1"/><path d="M127.2 280.3L130.0 281.4" stroke="#c8a07a" stroke-width="1.1"/><path d="M107.3 209.4L103.8 210.6" stroke="#7e5844" stroke-width="1.1"/><path d="M185.0 308.5L187.0 309.4" stroke="#a88a6c" stroke-width="1.1"/><path d="M193.3 308.2L190.1 308.6" stroke="#7e5844" stroke-width="1.1"/><path d="M212.1 274.9L215.0 275.0" stroke="#a88a6c" stroke-width="1.1"/><path d="M198.3 332.6L195.5 333.5" stroke="#5a4a3a" stroke-width="1.1"/><path d="M167.4 321.3L165.7 322.2" stroke="#7e5844" stroke-width="1.1"/><path d="M132.2 292.5L131.7 294.1" stroke="#a88a6c" stroke-width="1.1"/><path d="M135.3 316.7L133.3 318.2" stroke="#9c7458" stroke-width="1.1"/><path d="M213.1 275.8L211.2 279.2" stroke="#a88a6c" stroke-width="1.1"/><path d="M153.5 258.8L154.4 261.9" stroke="#b08466" stroke-width="1.1"/><path d="M232.7 288.0L235.6 288.7" stroke="#9c7458" stroke-width="1.1"/><path d="M223.2 325.7L219.8 325.7" stroke="#b08466" stroke-width="1.1"/><path d="M243.1 289.5L242.8 291.0" stroke="#6a4a3a" stroke-width="1.1"/><path d="M154.5 332.9L156.2 334.5" stroke="#8a6a50" stroke-width="1.1"/><path d="M170.2 294.2L173.3 295.4" stroke="#9c7458" stroke-width="1.1"/><path d="M165.9 293.5L167.7 293.8" stroke="#6a4a3a" stroke-width="1.1"/><path d="M180.1 303.4L180.3 305.5" stroke="#9c7458" stroke-width="1.1"/><path d="M150.3 276.7L151.4 280.5" stroke="#caa882" stroke-width="1.1"/><path d="M181.3 333.8L178.2 334.3" stroke="#5a4a3a" stroke-width="1.1"/><path d="M188.7 329.4L191.2 329.9" stroke="#b08466" stroke-width="1.1"/><path d="M180.2 300.6L181.2 304.3" stroke="#6a4a3a" stroke-width="1.1"/><path d="M136.5 297.9L135.9 299.5" stroke="#6a4a3a" stroke-width="1.1"/><path d="M145.6 301.8L143.6 302.3" stroke="#8a6a50" stroke-width="1.1"/><path d="M175.9 262.1L178.4 264.2" stroke="#caa882" stroke-width="1.1"/><path d="M156.0 313.7L155.8 316.1" stroke="#9c7458" stroke-width="1.1"/><path d="M174.3 324.1L176.8 325.8" stroke="#caa882" stroke-width="1.1"/><path d="M227.3 278.4L228.0 281.9" stroke="#8a6a50" stroke-width="1.1"/><path d="M134.7 271.6L132.5 273.0" stroke="#a88a6c" stroke-width="1.1"/><path d="M152.0 317.4L155.0 318.0" stroke="#6a4a3a" stroke-width="1.1"/><path d="M121.8 223.0L119.0 224.3" stroke="#caa882" stroke-width="1.1"/><path d="M206.0 271.2L209.3 273.2" stroke="#8a6a50" stroke-width="1.1"/><path d="M251.6 331.5L253.9 333.5" stroke="#caa882" stroke-width="1.1"/><path d="M210.9 262.4L209.5 264.0" stroke="#b08466" stroke-width="1.1"/><path d="M250.9 331.7L252.4 333.1" stroke="#b08466" stroke-width="1.1"/><path d="M218.8 302.8L219.9 304.0" stroke="#8a6a50" stroke-width="1.1"/><path d="M192.4 278.7L190.9 280.1" stroke="#6a4a3a" stroke-width="1.1"/><path d="M231.7 320.8L233.3 323.5" stroke="#caa882" stroke-width="1.1"/><path d="M147.8 331.3L148.9 334.1" stroke="#c8a07a" stroke-width="1.1"/><path d="M256.6 316.6L253.2 316.6" stroke="#5a4a3a" stroke-width="1.1"/><path d="M165.6 271.7L163.9 273.5" stroke="#6a4a3a" stroke-width="1.1"/><path d="M169.1 296.5L166.6 296.6" stroke="#7e5844" stroke-width="1.1"/><path d="M254.2 247.0L254.0 249.9" stroke="#5a4a3a" stroke-width="1.1"/><path d="M232.8 264.0L233.8 265.5" stroke="#7e5844" stroke-width="1.1"/><path d="M184.9 263.5L185.9 265.2" stroke="#9c7458" stroke-width="1.1"/><path d="M185.2 326.8L186.6 329.7" stroke="#7e5844" stroke-width="1.1"/><path d="M230.3 301.2L226.4 301.8" stroke="#b08466" stroke-width="1.1"/><path d="M124.1 251.2L125.9 252.4" stroke="#8a6a50" stroke-width="1.1"/><path d="M123.3 280.8L121.1 282.8" stroke="#c8a07a" stroke-width="1.1"/><path d="M205.2 323.4L204.7 325.6" stroke="#b08466" stroke-width="1.1"/><path d="M231.0 257.2L232.6 258.5" stroke="#5a4a3a" stroke-width="1.1"/><path d="M192.9 283.7L193.3 287.1" stroke="#7e5844" stroke-width="1.1"/><path d="M169.0 292.3L170.7 294.7" stroke="#c8a07a" stroke-width="1.1"/><path d="M130.1 273.5L129.8 276.9" stroke="#7e5844" stroke-width="1.1"/><path d="M150.2 270.9L147.2 271.7" stroke="#9c7458" stroke-width="1.1"/><path d="M189.7 323.3L187.8 323.4" stroke="#7e5844" stroke-width="1.1"/><path d="M235.3 310.2L236.8 311.0" stroke="#9c7458" stroke-width="1.1"/><path d="M223.0 263.4L225.4 265.8" stroke="#5a4a3a" stroke-width="1.1"/><path d="M180.4 276.5L182.1 276.6" stroke="#5a4a3a" stroke-width="1.1"/><path d="M236.0 293.6L234.7 296.7" stroke="#9c7458" stroke-width="1.1"/><path d="M133.9 320.1L132.1 322.2" stroke="#9c7458" stroke-width="1.1"/><path d="M235.7 315.5L236.8 316.8" stroke="#7e5844" stroke-width="1.1"/><path d="M161.7 326.4L161.1 328.3" stroke="#8a6a50" stroke-width="1.1"/><path d="M156.9 317.8L159.1 320.8" stroke="#c8a07a" stroke-width="1.1"/><path d="M201.2 267.8L203.5 268.6" stroke="#7e5844" stroke-width="1.1"/><path d="M146.8 308.4L144.7 308.9" stroke="#a88a6c" stroke-width="1.1"/><path d="M115.1 208.6L118.1 209.3" stroke="#7e5844" stroke-width="1.1"/><path d="M138.6 259.8L140.9 260.5" stroke="#9c7458" stroke-width="1.1"/><path d="M219.5 264.3L216.9 266.9" stroke="#c8a07a" stroke-width="1.1"/><path d="M171.4 293.5L168.9 296.4" stroke="#caa882" stroke-width="1.1"/><path d="M149.7 303.0L148.9 304.4" stroke="#5a4a3a" stroke-width="1.1"/><path d="M134.4 297.8L132.3 300.2" stroke="#7e5844" stroke-width="1.1"/><path d="M140.6 267.7L137.9 269.0" stroke="#7e5844" stroke-width="1.1"/><path d="M251.2 320.6L249.8 323.7" stroke="#8a6a50" stroke-width="1.1"/><path d="M214.4 271.8L214.0 274.0" stroke="#caa882" stroke-width="1.1"/><path d="M165.8 301.7L164.9 303.0" stroke="#a88a6c" stroke-width="1.1"/><path d="M234.6 314.1L231.0 315.2" stroke="#caa882" stroke-width="1.1"/><path d="M231.0 286.2L232.7 287.6" stroke="#6a4a3a" stroke-width="1.1"/><path d="M142.2 283.3L141.5 286.6" stroke="#5a4a3a" stroke-width="1.1"/><path d="M233.8 331.1L236.7 331.7" stroke="#8a6a50" stroke-width="1.1"/><path d="M120.7 218.3L122.3 218.8" stroke="#5a4a3a" stroke-width="1.1"/><path d="M229.3 279.2L226.7 282.2" stroke="#6a4a3a" stroke-width="1.1"/><path d="M144.9 296.7L142.9 297.8" stroke="#caa882" stroke-width="1.1"/><path d="M233.1 327.2L231.3 327.2" stroke="#6a4a3a" stroke-width="1.1"/><path d="M255.0 300.6L252.4 303.6" stroke="#6a4a3a" stroke-width="1.1"/><path d="M135.6 282.2L137.4 285.4" stroke="#caa882" stroke-width="1.1"/><path d="M131.8 317.4L134.4 318.0" stroke="#a88a6c" stroke-width="1.1"/><path d="M217.8 331.1L215.2 334.1" stroke="#c8a07a" stroke-width="1.1"/><path d="M180.4 332.2L182.2 333.7" stroke="#a88a6c" stroke-width="1.1"/><path d="M150.0 309.7L148.5 312.0" stroke="#c8a07a" stroke-width="1.1"/><path d="M197.7 260.9L198.7 263.8" stroke="#8a6a50" stroke-width="1.1"/><path d="M175.5 290.3L175.8 292.1" stroke="#6a4a3a" stroke-width="1.1"/><path d="M126.2 237.2L124.2 237.6" stroke="#8a6a50" stroke-width="1.1"/><path d="M142.4 272.2L139.9 273.0" stroke="#5a4a3a" stroke-width="1.1"/><path d="M172.6 330.5L174.1 332.9" stroke="#5a4a3a" stroke-width="1.1"/><path d="M139.3 306.5L140.2 309.1" stroke="#5a4a3a" stroke-width="1.1"/><path d="M135.8 250.9L134.2 252.9" stroke="#9c7458" stroke-width="1.1"/><path d="M208.1 312.9L205.9 316.0" stroke="#b08466" stroke-width="1.1"/><path d="M109.4 219.5L107.5 220.6" stroke="#b08466" stroke-width="1.1"/><path d="M224.7 319.9L224.2 322.0" stroke="#c8a07a" stroke-width="1.1"/><path d="M230.2 295.2L233.0 295.8" stroke="#c8a07a" stroke-width="1.1"/><path d="M152.5 316.5L149.1 317.0" stroke="#9c7458" stroke-width="1.1"/><path d="M191.6 311.7L188.2 312.5" stroke="#b08466" stroke-width="1.1"/><path d="M224.1 302.4L227.8 303.3" stroke="#6a4a3a" stroke-width="1.1"/><path d="M244.1 329.7L245.1 333.2" stroke="#5a4a3a" stroke-width="1.1"/><path d="M187.9 308.6L190.2 310.3" stroke="#9c7458" stroke-width="1.1"/><path d="M135.5 321.6L137.4 324.5" stroke="#8a6a50" stroke-width="1.1"/><path d="M212.1 328.4L212.4 331.1" stroke="#9c7458" stroke-width="1.1"/><path d="M113.7 233.2L116.2 235.4" stroke="#c8a07a" stroke-width="1.1"/><path d="M184.9 292.6L183.1 294.3" stroke="#8a6a50" stroke-width="1.1"/><path d="M123.2 223.0L120.5 225.7" stroke="#9c7458" stroke-width="1.1"/><path d="M223.5 282.5L221.8 284.4" stroke="#8a6a50" stroke-width="1.1"/><path d="M155.6 297.1L157.5 298.0" stroke="#a88a6c" stroke-width="1.1"/><path d="M130.8 304.6L127.8 307.1" stroke="#7e5844" stroke-width="1.1"/><path d="M154.4 265.5L152.5 266.4" stroke="#b08466" stroke-width="1.1"/><path d="M224.6 279.2L222.0 279.7" stroke="#5a4a3a" stroke-width="1.1"/><path d="M110.5 242.3L111.1 244.8" stroke="#6a4a3a" stroke-width="1.1"/><path d="M219.4 282.8L219.9 284.4" stroke="#b08466" stroke-width="1.1"/><path d="M169.7 248.2L170.4 251.4" stroke="#a88a6c" stroke-width="1.1"/><path d="M252.4 274.8L252.9 277.2" stroke="#7e5844" stroke-width="1.1"/><path d="M152.8 332.6L150.8 333.1" stroke="#6a4a3a" stroke-width="1.1"/><path d="M228.2 328.5L225.6 330.1" stroke="#8a6a50" stroke-width="1.1"/><path d="M171.0 283.2L169.3 285.6" stroke="#b08466" stroke-width="1.1"/><path d="M135.7 278.6L138.6 280.7" stroke="#9c7458" stroke-width="1.1"/><path d="M116.2 246.1L113.0 247.7" stroke="#9c7458" stroke-width="1.1"/><path d="M188.8 275.9L186.6 278.1" stroke="#8a6a50" stroke-width="1.1"/><path d="M247.6 318.2L247.4 321.2" stroke="#caa882" stroke-width="1.1"/><path d="M252.6 270.4L254.2 271.6" stroke="#7e5844" stroke-width="1.1"/><path d="M199.9 298.4L201.1 302.1" stroke="#9c7458" stroke-width="1.1"/><path d="M135.1 275.6L137.5 278.0" stroke="#8a6a50" stroke-width="1.1"/><path d="M190.7 291.8L189.0 295.0" stroke="#c8a07a" stroke-width="1.1"/><path d="M189.8 267.1L191.3 268.0" stroke="#8a6a50" stroke-width="1.1"/><path d="M183.6 279.1L185.6 282.3" stroke="#c8a07a" stroke-width="1.1"/><path d="M210.7 334.2L208.4 335.8" stroke="#b08466" stroke-width="1.1"/><path d="M138.8 258.3L137.7 259.7" stroke="#7e5844" stroke-width="1.1"/><path d="M149.3 314.3L147.4 315.8" stroke="#b08466" stroke-width="1.1"/><path d="M234.6 287.1L232.9 287.6" stroke="#c8a07a" stroke-width="1.1"/><path d="M160.9 257.9L161.2 260.4" stroke="#a88a6c" stroke-width="1.1"/><path d="M207.0 317.7L206.0 320.6" stroke="#7e5844" stroke-width="1.1"/><path d="M225.1 312.1L226.3 315.8" stroke="#caa882" stroke-width="1.1"/><path d="M127.5 284.1L129.8 284.7" stroke="#caa882" stroke-width="1.1"/><path d="M185.8 310.9L183.2 312.5" stroke="#b08466" stroke-width="1.1"/><path d="M243.3 289.7L240.9 291.9" stroke="#b08466" stroke-width="1.1"/><path d="M138.8 250.7L138.2 252.6" stroke="#7e5844" stroke-width="1.1"/><path d="M134.7 301.0L131.8 301.7" stroke="#a88a6c" stroke-width="1.1"/><path d="M234.5 334.1L230.6 335.1" stroke="#caa882" stroke-width="1.1"/><path d="M140.7 243.7L141.0 245.8" stroke="#6a4a3a" stroke-width="1.1"/><path d="M197.6 315.8L198.7 317.6" stroke="#a88a6c" stroke-width="1.1"/><path d="M159.3 297.6L157.6 298.7" stroke="#8a6a50" stroke-width="1.1"/><path d="M168.1 310.1L168.1 311.8" stroke="#5a4a3a" stroke-width="1.1"/><path d="M174.6 282.6L172.8 283.8" stroke="#caa882" stroke-width="1.1"/><path d="M121.9 264.6L124.4 264.9" stroke="#caa882" stroke-width="1.1"/><path d="M214.8 310.8L213.0 313.5" stroke="#a88a6c" stroke-width="1.1"/><path d="M165.4 247.9L168.1 249.7" stroke="#b08466" stroke-width="1.1"/><path d="M190.6 293.6L190.4 295.6" stroke="#b08466" stroke-width="1.1"/><path d="M132.4 255.7L130.3 256.7" stroke="#7e5844" stroke-width="1.1"/><path d="M228.5 274.6L226.9 275.7" stroke="#8a6a50" stroke-width="1.1"/><path d="M244.0 295.3L243.0 296.8" stroke="#5a4a3a" stroke-width="1.1"/><path d="M129.7 259.6L133.1 259.9" stroke="#a88a6c" stroke-width="1.1"/><path d="M171.9 257.0L172.4 259.5" stroke="#7e5844" stroke-width="1.1"/><path d="M116.6 245.6L114.4 246.5" stroke="#8a6a50" stroke-width="1.1"/><path d="M176.3 325.0L174.7 326.0" stroke="#b08466" stroke-width="1.1"/><path d="M232.4 314.9L230.2 315.6" stroke="#6a4a3a" stroke-width="1.1"/><path d="M114.4 223.1L113.3 225.8" stroke="#6a4a3a" stroke-width="1.1"/><path d="M146.6 267.0L146.1 269.4" stroke="#5a4a3a" stroke-width="1.1"/><path d="M186.0 297.8L185.7 300.4" stroke="#6a4a3a" stroke-width="1.1"/><path d="M246.7 244.7L247.1 248.0" stroke="#8a6a50" stroke-width="1.1"/><path d="M161.2 316.3L157.7 317.4" stroke="#a88a6c" stroke-width="1.1"/><path d="M147.1 250.1L146.1 253.4" stroke="#9c7458" stroke-width="1.1"/><path d="M173.4 257.6L171.2 259.8" stroke="#a88a6c" stroke-width="1.1"/><path d="M187.9 257.1L187.7 260.9" stroke="#7e5844" stroke-width="1.1"/><path d="M120.0 242.7L120.0 245.7" stroke="#9c7458" stroke-width="1.1"/><path d="M140.3 295.2L140.4 297.8" stroke="#7e5844" stroke-width="1.1"/><path d="M230.1 321.4L229.7 324.4" stroke="#b08466" stroke-width="1.1"/><path d="M216.7 284.7L216.2 287.4" stroke="#8a6a50" stroke-width="1.1"/><path d="M237.7 323.5L238.9 326.7" stroke="#a88a6c" stroke-width="1.1"/><path d="M127.1 256.5L125.7 258.2" stroke="#c8a07a" stroke-width="1.1"/><path d="M152.4 294.8L150.6 295.6" stroke="#5a4a3a" stroke-width="1.1"/><path d="M157.5 299.0L160.0 300.1" stroke="#6a4a3a" stroke-width="1.1"/><path d="M250.7 289.7L251.2 292.4" stroke="#9c7458" stroke-width="1.1"/><path d="M244.1 310.6L243.5 312.1" stroke="#5a4a3a" stroke-width="1.1"/><path d="M127.4 269.9L126.1 271.4" stroke="#9c7458" stroke-width="1.1"/><path d="M203.0 286.5L202.4 288.5" stroke="#9c7458" stroke-width="1.1"/><path d="M251.8 326.3L250.1 326.3" stroke="#c8a07a" stroke-width="1.1"/><path d="M232.7 259.6L229.1 260.1" stroke="#a88a6c" stroke-width="1.1"/><path d="M170.7 263.2L173.7 265.2" stroke="#8a6a50" stroke-width="1.1"/><path d="M129.5 289.6L128.3 291.0" stroke="#c8a07a" stroke-width="1.1"/><path d="M149.2 261.7L147.8 263.6" stroke="#6a4a3a" stroke-width="1.1"/><path d="M248.9 267.6L246.8 268.6" stroke="#a88a6c" stroke-width="1.1"/><path d="M250.4 300.9L249.9 303.8" stroke="#5a4a3a" stroke-width="1.1"/><path d="M206.5 244.9L206.2 247.0" stroke="#c8a07a" stroke-width="1.1"/><path d="M153.4 269.7L156.6 271.6" stroke="#b08466" stroke-width="1.1"/><path d="M150.4 312.3L152.2 313.5" stroke="#caa882" stroke-width="1.1"/><path d="M209.3 331.9L207.4 332.8" stroke="#8a6a50" stroke-width="1.1"/><path d="M240.2 301.7L239.3 304.3" stroke="#6a4a3a" stroke-width="1.1"/><path d="M116.5 241.6L115.2 243.7" stroke="#caa882" stroke-width="1.1"/><path d="M124.7 235.1L128.2 236.6" stroke="#caa882" stroke-width="1.1"/><path d="M125.8 223.0L125.6 225.7" stroke="#8a6a50" stroke-width="1.1"/><path d="M135.7 324.7L134.0 324.7" stroke="#a88a6c" stroke-width="1.1"/><path d="M148.8 320.0L149.1 323.6" stroke="#9c7458" stroke-width="1.1"/><path d="M141.3 243.3L143.2 246.8" stroke="#6a4a3a" stroke-width="1.1"/><path d="M212.2 328.1L210.7 328.8" stroke="#b08466" stroke-width="1.1"/><path d="M144.7 308.9L146.5 309.3" stroke="#9c7458" stroke-width="1.1"/><path d="M150.4 265.0L149.0 266.5" stroke="#b08466" stroke-width="1.1"/><path d="M228.2 316.1L227.2 318.1" stroke="#6a4a3a" stroke-width="1.1"/><path d="M242.3 280.5L239.7 281.9" stroke="#caa882" stroke-width="1.1"/><path d="M189.4 289.1L192.4 290.4" stroke="#caa882" stroke-width="1.1"/><path d="M118.4 268.1L117.4 269.9" stroke="#b08466" stroke-width="1.1"/><path d="M172.7 328.6L172.8 331.2" stroke="#5a4a3a" stroke-width="1.1"/><path d="M231.9 300.9L233.1 304.5" stroke="#9c7458" stroke-width="1.1"/><path d="M124.7 221.4L126.3 223.3" stroke="#9c7458" stroke-width="1.1"/><path d="M219.9 253.7L220.6 257.2" stroke="#9c7458" stroke-width="1.1"/><path d="M225.1 246.3L224.8 248.9" stroke="#9c7458" stroke-width="1.1"/><path d="M145.9 330.0L146.8 331.9" stroke="#c8a07a" stroke-width="1.1"/><path d="M194.9 329.1L194.4 331.0" stroke="#5a4a3a" stroke-width="1.1"/><path d="M240.8 331.0L239.6 334.7" stroke="#caa882" stroke-width="1.1"/><path d="M121.5 244.3L120.7 246.5" stroke="#c8a07a" stroke-width="1.1"/><path d="M252.2 284.1L249.7 285.0" stroke="#8a6a50" stroke-width="1.1"/><path d="M195.1 268.4L192.0 269.2" stroke="#caa882" stroke-width="1.1"/><path d="M177.9 253.6L174.4 254.9" stroke="#8a6a50" stroke-width="1.1"/><path d="M140.2 246.9L138.6 248.7" stroke="#7e5844" stroke-width="1.1"/><path d="M209.7 279.8L207.0 281.8" stroke="#b08466" stroke-width="1.1"/><path d="M107.7 231.5L109.3 232.8" stroke="#b08466" stroke-width="1.1"/><path d="M225.7 299.5L226.0 301.2" stroke="#9c7458" stroke-width="1.1"/><path d="M201.4 301.2L201.0 303.8" stroke="#caa882" stroke-width="1.1"/><path d="M186.8 255.5L183.5 256.4" stroke="#b08466" stroke-width="1.1"/><path d="M174.2 250.3L174.4 252.3" stroke="#a88a6c" stroke-width="1.1"/><path d="M201.2 318.8L200.5 321.6" stroke="#5a4a3a" stroke-width="1.1"/><path d="M161.9 274.0L160.1 274.7" stroke="#c8a07a" stroke-width="1.1"/><path d="M144.0 329.0L142.3 330.2" stroke="#7e5844" stroke-width="1.1"/><path d="M250.8 312.9L248.6 316.2" stroke="#c8a07a" stroke-width="1.1"/><path d="M137.3 334.6L141.0 335.2" stroke="#b08466" stroke-width="1.1"/><path d="M108.2 213.1L106.3 216.4" stroke="#9c7458" stroke-width="1.1"/><path d="M194.2 303.7L193.9 305.5" stroke="#5a4a3a" stroke-width="1.1"/><path d="M221.3 272.6L223.9 274.8" stroke="#caa882" stroke-width="1.1"/><path d="M225.2 321.7L228.7 322.5" stroke="#8a6a50" stroke-width="1.1"/><path d="M147.7 287.8L150.5 289.0" stroke="#a88a6c" stroke-width="1.1"/><path d="M133.9 314.6L131.3 317.1" stroke="#c8a07a" stroke-width="1.1"/><path d="M159.4 246.2L162.5 248.4" stroke="#a88a6c" stroke-width="1.1"/><path d="M244.9 267.8L247.0 269.5" stroke="#6a4a3a" stroke-width="1.1"/><path d="M204.8 285.7L205.9 287.4" stroke="#a88a6c" stroke-width="1.1"/><path d="M147.6 285.5L148.5 287.9" stroke="#6a4a3a" stroke-width="1.1"/><path d="M210.0 326.7L206.9 327.7" stroke="#7e5844" stroke-width="1.1"/><path d="M117.1 219.9L115.1 220.6" stroke="#a88a6c" stroke-width="1.1"/><path d="M163.2 302.8L164.3 305.8" stroke="#9c7458" stroke-width="1.1"/><path d="M242.9 268.2L240.8 271.0" stroke="#8a6a50" stroke-width="1.1"/><path d="M210.1 331.8L209.3 334.8" stroke="#a88a6c" stroke-width="1.1"/><path d="M220.5 261.4L223.4 263.4" stroke="#a88a6c" stroke-width="1.1"/><path d="M199.0 291.5L197.6 294.7" stroke="#8a6a50" stroke-width="1.1"/><path d="M227.5 314.8L228.6 316.7" stroke="#9c7458" stroke-width="1.1"/><path d="M219.3 312.7L220.9 312.9" stroke="#8a6a50" stroke-width="1.1"/><path d="M133.1 239.2L135.2 239.9" stroke="#6a4a3a" stroke-width="1.1"/><path d="M248.5 301.6L247.2 305.1" stroke="#a88a6c" stroke-width="1.1"/><path d="M184.4 278.2L183.0 279.4" stroke="#5a4a3a" stroke-width="1.1"/><path d="M189.0 301.1L191.3 301.9" stroke="#8a6a50" stroke-width="1.1"/><path d="M250.0 317.4L251.9 317.4" stroke="#caa882" stroke-width="1.1"/><path d="M136.4 331.6L136.6 334.8" stroke="#caa882" stroke-width="1.1"/><path d="M168.7 255.0L168.0 257.2" stroke="#6a4a3a" stroke-width="1.1"/><path d="M250.8 285.6L251.4 287.5" stroke="#a88a6c" stroke-width="1.1"/><path d="M248.8 266.9L245.7 269.3" stroke="#c8a07a" stroke-width="1.1"/><path d="M131.9 245.2L134.8 247.8" stroke="#8a6a50" stroke-width="1.1"/><path d="M140.0 324.1L141.1 325.4" stroke="#a88a6c" stroke-width="1.1"/><path d="M158.1 262.9L155.0 263.8" stroke="#c8a07a" stroke-width="1.1"/><path d="M110.9 204.7L111.5 206.9" stroke="#5a4a3a" stroke-width="1.1"/><path d="M214.7 259.9L214.1 262.7" stroke="#a88a6c" stroke-width="1.1"/><path d="M168.0 300.2L168.7 302.4" stroke="#9c7458" stroke-width="1.1"/><path d="M194.9 247.2L193.5 249.2" stroke="#8a6a50" stroke-width="1.1"/><path d="M241.1 332.8L238.5 335.7" stroke="#b08466" stroke-width="1.1"/><path d="M223.2 271.4L224.4 274.6" stroke="#b08466" stroke-width="1.1"/><path d="M204.1 296.6L203.9 299.5" stroke="#a88a6c" stroke-width="1.1"/><path d="M222.1 292.5L220.1 293.7" stroke="#6a4a3a" stroke-width="1.1"/><path d="M139.5 286.0L140.1 287.5" stroke="#6a4a3a" stroke-width="1.1"/><path d="M236.0 268.2L237.2 269.4" stroke="#caa882" stroke-width="1.1"/><path d="M252.6 299.9L255.4 300.7" stroke="#5a4a3a" stroke-width="1.1"/><path d="M207.6 300.9L203.9 301.7" stroke="#8a6a50" stroke-width="1.1"/><path d="M139.9 300.0L140.9 301.8" stroke="#9c7458" stroke-width="1.1"/><path d="M129.0 306.5L129.3 309.3" stroke="#7e5844" stroke-width="1.1"/><path d="M220.4 293.4L219.6 296.5" stroke="#a88a6c" stroke-width="1.1"/><path d="M106.9 212.1L108.7 215.2" stroke="#8a6a50" stroke-width="1.1"/><path d="M158.4 312.6L158.8 315.1" stroke="#5a4a3a" stroke-width="1.1"/><path d="M169.3 311.6L168.2 312.9" stroke="#5a4a3a" stroke-width="1.1"/><path d="M163.5 243.0L164.5 244.8" stroke="#9c7458" stroke-width="1.1"/><path d="M212.6 285.4L216.2 287.1" stroke="#b08466" stroke-width="1.1"/><path d="M232.0 293.8L233.1 296.7" stroke="#a88a6c" stroke-width="1.1"/><path d="M249.9 279.5L251.7 279.7" stroke="#7e5844" stroke-width="1.1"/><path d="M150.2 288.2L148.2 288.8" stroke="#8a6a50" stroke-width="1.1"/><path d="M171.3 255.3L168.7 257.6" stroke="#b08466" stroke-width="1.1"/><path d="M235.7 275.9L232.9 277.9" stroke="#a88a6c" stroke-width="1.1"/><path d="M124.0 254.7L125.3 255.7" stroke="#caa882" stroke-width="1.1"/><path d="M252.4 290.0L251.7 292.7" stroke="#b08466" stroke-width="1.1"/><path d="M174.8 319.4L174.0 323.0" stroke="#6a4a3a" stroke-width="1.1"/><path d="M237.7 272.1L238.4 273.9" stroke="#b08466" stroke-width="1.1"/><path d="M170.8 309.1L173.7 311.3" stroke="#c8a07a" stroke-width="1.1"/><path d="M231.6 285.1L231.8 286.8" stroke="#c8a07a" stroke-width="1.1"/><path d="M133.5 261.2L131.9 261.7" stroke="#b08466" stroke-width="1.1"/><path d="M179.7 293.6L177.2 295.3" stroke="#c8a07a" stroke-width="1.1"/><path d="M192.9 302.9L195.2 303.2" stroke="#b08466" stroke-width="1.1"/><path d="M130.2 248.0L131.7 250.9" stroke="#a88a6c" stroke-width="1.1"/><path d="M148.8 260.4L146.7 261.2" stroke="#5a4a3a" stroke-width="1.1"/><path d="M241.5 313.4L239.7 315.2" stroke="#6a4a3a" stroke-width="1.1"/><path d="M130.6 255.0L133.4 255.0" stroke="#7e5844" stroke-width="1.1"/><path d="M242.4 294.4L244.2 294.9" stroke="#caa882" stroke-width="1.1"/><path d="M241.9 308.5L239.3 309.8" stroke="#9c7458" stroke-width="1.1"/><path d="M150.6 283.5L150.4 286.7" stroke="#9c7458" stroke-width="1.1"/><path d="M163.6 305.2L161.4 308.5" stroke="#7e5844" stroke-width="1.1"/><path d="M117.1 237.0L114.4 237.1" stroke="#caa882" stroke-width="1.1"/><path d="M125.0 282.6L126.4 283.7" stroke="#a88a6c" stroke-width="1.1"/><path d="M126.0 224.9L126.2 228.6" stroke="#9c7458" stroke-width="1.1"/><path d="M217.9 303.3L217.2 306.2" stroke="#6a4a3a" stroke-width="1.1"/><path d="M135.9 241.8L133.1 244.3" stroke="#c8a07a" stroke-width="1.1"/><path d="M194.8 277.3L195.6 279.8" stroke="#8a6a50" stroke-width="1.1"/><path d="M167.5 271.1L171.1 272.2" stroke="#8a6a50" stroke-width="1.1"/><path d="M165.6 304.5L168.7 305.0" stroke="#caa882" stroke-width="1.1"/><path d="M151.6 276.5L153.8 278.9" stroke="#8a6a50" stroke-width="1.1"/><path d="M139.8 280.9L137.3 281.9" stroke="#b08466" stroke-width="1.1"/><path d="M196.7 287.0L195.8 289.8" stroke="#7e5844" stroke-width="1.1"/><path d="M203.6 314.1L200.6 316.1" stroke="#6a4a3a" stroke-width="1.1"/><path d="M241.9 261.1L239.3 262.6" stroke="#caa882" stroke-width="1.1"/><path d="M171.9 264.0L175.7 264.8" stroke="#c8a07a" stroke-width="1.1"/><path d="M234.9 255.7L233.6 257.5" stroke="#c8a07a" stroke-width="1.1"/><path d="M139.3 295.6L139.4 299.3" stroke="#8a6a50" stroke-width="1.1"/><path d="M221.2 269.4L223.7 271.1" stroke="#8a6a50" stroke-width="1.1"/><path d="M175.4 263.0L176.0 265.4" stroke="#8a6a50" stroke-width="1.1"/><path d="M138.1 266.8L135.7 268.0" stroke="#b08466" stroke-width="1.1"/><path d="M106.5 223.7L106.0 225.7" stroke="#c8a07a" stroke-width="1.1"/><path d="M156.9 293.9L158.9 294.2" stroke="#a88a6c" stroke-width="1.1"/><path d="M142.3 308.2L139.2 310.4" stroke="#7e5844" stroke-width="1.1"/><path d="M133.8 243.3L132.9 245.5" stroke="#a88a6c" stroke-width="1.1"/><path d="M210.9 328.9L213.1 330.0" stroke="#6a4a3a" stroke-width="1.1"/><path d="M242.7 321.0L241.2 322.6" stroke="#a88a6c" stroke-width="1.1"/><path d="M214.2 331.8L214.1 333.9" stroke="#6a4a3a" stroke-width="1.1"/><path d="M219.7 317.1L221.7 318.4" stroke="#7e5844" stroke-width="1.1"/><path d="M131.9 313.6L134.0 314.3" stroke="#9c7458" stroke-width="1.1"/><path d="M153.7 246.4L153.9 248.5" stroke="#6a4a3a" stroke-width="1.1"/><path d="M245.9 316.3L245.8 318.9" stroke="#a88a6c" stroke-width="1.1"/><path d="M188.5 302.4L189.0 305.5" stroke="#7e5844" stroke-width="1.1"/><path d="M191.9 274.0L193.6 277.3" stroke="#8a6a50" stroke-width="1.1"/><path d="M204.7 312.6L207.4 315.0" stroke="#9c7458" stroke-width="1.1"/><path d="M146.0 323.9L149.0 326.0" stroke="#9c7458" stroke-width="1.1"/><path d="M156.9 271.8L157.8 275.6" stroke="#caa882" stroke-width="1.1"/><path d="M224.7 276.2L221.8 278.5" stroke="#a88a6c" stroke-width="1.1"/><path d="M185.5 290.0L187.4 290.7" stroke="#7e5844" stroke-width="1.1"/><path d="M140.9 328.7L143.9 328.7" stroke="#caa882" stroke-width="1.1"/><path d="M164.8 300.5L167.3 301.8" stroke="#6a4a3a" stroke-width="1.1"/><path d="M228.8 312.8L227.7 315.6" stroke="#8a6a50" stroke-width="1.1"/><path d="M184.1 277.3L182.7 280.7" stroke="#5a4a3a" stroke-width="1.1"/><path d="M165.9 302.4L166.4 304.1" stroke="#9c7458" stroke-width="1.1"/><path d="M128.0 305.9L129.3 309.4" stroke="#b08466" stroke-width="1.1"/><path d="M132.4 236.8L132.4 238.6" stroke="#9c7458" stroke-width="1.1"/><path d="M184.5 319.8L185.2 321.7" stroke="#caa882" stroke-width="1.1"/><path d="M125.7 233.8L123.2 236.0" stroke="#8a6a50" stroke-width="1.1"/><path d="M160.2 251.8L163.7 252.3" stroke="#b08466" stroke-width="1.1"/><path d="M173.0 308.5L171.9 310.7" stroke="#9c7458" stroke-width="1.1"/><path d="M241.2 269.0L240.1 271.3" stroke="#8a6a50" stroke-width="1.1"/><path d="M108.2 214.0L106.8 214.8" stroke="#caa882" stroke-width="1.1"/><path d="M211.7 333.8L214.5 334.2" stroke="#9c7458" stroke-width="1.1"/><path d="M185.1 310.7L185.0 312.5" stroke="#5a4a3a" stroke-width="1.1"/><path d="M152.0 272.8L151.2 275.2" stroke="#caa882" stroke-width="1.1"/><path d="M133.4 318.8L132.0 321.2" stroke="#c8a07a" stroke-width="1.1"/><path d="M112.4 218.6L112.6 220.3" stroke="#8a6a50" stroke-width="1.1"/><path d="M113.3 221.1L114.7 224.4" stroke="#7e5844" stroke-width="1.1"/><path d="M254.0 294.6L252.3 295.6" stroke="#7e5844" stroke-width="1.1"/><path d="M111.5 208.7L110.1 210.9" stroke="#a88a6c" stroke-width="1.1"/><path d="M147.8 289.1L146.0 292.4" stroke="#a88a6c" stroke-width="1.1"/><path d="M215.3 275.7L218.2 276.5" stroke="#5a4a3a" stroke-width="1.1"/><path d="M154.9 283.3L153.9 285.7" stroke="#9c7458" stroke-width="1.1"/><path d="M158.6 298.3L160.3 301.0" stroke="#9c7458" stroke-width="1.1"/><path d="M231.2 263.0L233.6 264.9" stroke="#6a4a3a" stroke-width="1.1"/><path d="M250.2 328.2L248.7 328.7" stroke="#b08466" stroke-width="1.1"/><path d="M178.5 265.5L178.7 267.7" stroke="#6a4a3a" stroke-width="1.1"/><path d="M144.6 284.1L141.8 284.7" stroke="#b08466" stroke-width="1.1"/><path d="M121.5 241.3L122.7 242.9" stroke="#9c7458" stroke-width="1.1"/><path d="M225.8 309.8L226.7 311.1" stroke="#7e5844" stroke-width="1.1"/><path d="M220.1 300.6L219.7 303.7" stroke="#c8a07a" stroke-width="1.1"/><path d="M141.5 281.8L144.3 284.0" stroke="#5a4a3a" stroke-width="1.1"/><path d="M227.5 324.4L225.2 325.8" stroke="#6a4a3a" stroke-width="1.1"/><path d="M117.9 223.2L115.5 223.3" stroke="#7e5844" stroke-width="1.1"/><path d="M130.2 254.7L131.6 257.5" stroke="#7e5844" stroke-width="1.1"/><path d="M243.7 325.8L242.3 328.8" stroke="#8a6a50" stroke-width="1.1"/><path d="M206.7 328.5L206.4 331.1" stroke="#c8a07a" stroke-width="1.1"/><path d="M118.1 209.3L119.8 211.1" stroke="#5a4a3a" stroke-width="1.1"/><path d="M182.6 331.5L185.4 333.5" stroke="#a88a6c" stroke-width="1.1"/><path d="M219.4 323.0L219.4 324.6" stroke="#8a6a50" stroke-width="1.1"/><path d="M254.1 269.2L255.9 271.7" stroke="#5a4a3a" stroke-width="1.1"/><path d="M209.1 299.5L210.7 299.8" stroke="#c8a07a" stroke-width="1.1"/><path d="M224.8 333.3L227.1 334.9" stroke="#8a6a50" stroke-width="1.1"/><path d="M195.6 329.7L197.8 331.0" stroke="#b08466" stroke-width="1.1"/><path d="M147.4 278.2L145.2 278.8" stroke="#8a6a50" stroke-width="1.1"/><path d="M185.5 295.5L182.1 296.3" stroke="#6a4a3a" stroke-width="1.1"/><path d="M217.5 269.2L214.5 270.5" stroke="#9c7458" stroke-width="1.1"/><path d="M240.8 331.9L240.4 334.6" stroke="#caa882" stroke-width="1.1"/><path d="M155.4 302.7L157.9 303.1" stroke="#7e5844" stroke-width="1.1"/><path d="M213.7 324.1L216.2 324.7" stroke="#8a6a50" stroke-width="1.1"/><path d="M128.6 251.9L130.4 253.4" stroke="#caa882" stroke-width="1.1"/><path d="M223.9 316.7L225.9 317.9" stroke="#8a6a50" stroke-width="1.1"/><path d="M116.7 221.1L114.2 221.3" stroke="#c8a07a" stroke-width="1.1"/><path d="M234.1 265.2L230.8 265.4" stroke="#6a4a3a" stroke-width="1.1"/><path d="M151.6 275.2L149.2 275.8" stroke="#a88a6c" stroke-width="1.1"/><path d="M168.2 267.3L171.7 268.8" stroke="#caa882" stroke-width="1.1"/><path d="M133.4 314.4L130.7 316.6" stroke="#b08466" stroke-width="1.1"/><path d="M185.0 294.9L182.7 296.0" stroke="#9c7458" stroke-width="1.1"/><path d="M113.4 233.2L116.1 234.9" stroke="#a88a6c" stroke-width="1.1"/><path d="M208.0 322.0L209.0 325.1" stroke="#9c7458" stroke-width="1.1"/><path d="M142.8 317.6L145.6 320.2" stroke="#5a4a3a" stroke-width="1.1"/><path d="M192.3 312.5L191.2 316.0" stroke="#a88a6c" stroke-width="1.1"/><path d="M127.7 229.8L124.2 230.6" stroke="#caa882" stroke-width="1.1"/><path d="M151.5 299.1L155.0 299.6" stroke="#6a4a3a" stroke-width="1.1"/><path d="M256.3 279.5L252.8 280.6" stroke="#9c7458" stroke-width="1.1"/><path d="M243.0 277.4L244.8 278.2" stroke="#b08466" stroke-width="1.1"/><path d="M209.6 323.6L211.7 324.9" stroke="#c8a07a" stroke-width="1.1"/><path d="M245.3 333.4L246.1 335.4" stroke="#9c7458" stroke-width="1.1"/><path d="M164.9 315.1L165.7 317.4" stroke="#c8a07a" stroke-width="1.1"/><path d="M213.6 307.5L213.0 309.5" stroke="#a88a6c" stroke-width="1.1"/><path d="M250.3 276.3L251.2 278.8" stroke="#6a4a3a" stroke-width="1.1"/><path d="M127.1 251.4L126.6 253.4" stroke="#c8a07a" stroke-width="1.1"/><path d="M212.0 315.4L212.9 318.4" stroke="#b08466" stroke-width="1.1"/><path d="M238.5 278.4L236.4 280.6" stroke="#8a6a50" stroke-width="1.1"/><path d="M176.0 323.2L174.1 324.5" stroke="#7e5844" stroke-width="1.1"/><path d="M152.4 321.8L154.3 321.9" stroke="#8a6a50" stroke-width="1.1"/><path d="M195.4 324.4L191.4 324.6" stroke="#5a4a3a" stroke-width="1.1"/><path d="M125.5 264.1L128.5 264.2" stroke="#7e5844" stroke-width="1.1"/><path d="M171.5 254.8L170.0 255.7" stroke="#8a6a50" stroke-width="1.1"/><path d="M226.6 321.8L224.7 323.5" stroke="#b08466" stroke-width="1.1"/><path d="M208.0 267.8L210.6 268.1" stroke="#5a4a3a" stroke-width="1.1"/><path d="M185.7 300.7L183.9 301.8" stroke="#caa882" stroke-width="1.1"/><path d="M119.7 222.7L119.1 226.5" stroke="#7e5844" stroke-width="1.1"/><path d="M175.7 292.4L174.5 294.9" stroke="#b08466" stroke-width="1.1"/><path d="M173.9 281.5L171.6 282.5" stroke="#5a4a3a" stroke-width="1.1"/><path d="M221.4 306.1L219.7 308.5" stroke="#5a4a3a" stroke-width="1.1"/><path d="M200.2 286.9L200.0 288.8" stroke="#9c7458" stroke-width="1.1"/><path d="M228.5 321.3L225.7 322.4" stroke="#8a6a50" stroke-width="1.1"/><path d="M249.2 323.9L249.1 327.0" stroke="#b08466" stroke-width="1.1"/><path d="M224.0 309.9L222.2 310.7" stroke="#a88a6c" stroke-width="1.1"/><path d="M134.7 282.5L131.7 283.6" stroke="#8a6a50" stroke-width="1.1"/><path d="M124.6 246.2L125.6 247.9" stroke="#5a4a3a" stroke-width="1.1"/><path d="M162.6 270.9L165.2 271.6" stroke="#7e5844" stroke-width="1.1"/><path d="M146.0 268.4L148.4 270.4" stroke="#5a4a3a" stroke-width="1.1"/><path d="M110.8 230.8L111.2 233.6" stroke="#6a4a3a" stroke-width="1.1"/><path d="M157.4 297.8L156.2 300.8" stroke="#5a4a3a" stroke-width="1.1"/><path d="M208.0 257.3L207.1 259.7" stroke="#a88a6c" stroke-width="1.1"/><path d="M178.6 260.2L180.7 262.8" stroke="#9c7458" stroke-width="1.1"/><path d="M114.2 212.0L112.0 215.0" stroke="#7e5844" stroke-width="1.1"/><path d="M114.3 232.0L111.7 234.7" stroke="#c8a07a" stroke-width="1.1"/><path d="M153.3 269.1L151.2 271.2" stroke="#caa882" stroke-width="1.1"/><path d="M171.3 270.8L169.8 273.1" stroke="#b08466" stroke-width="1.1"/><path d="M248.1 326.3L251.0 328.1" stroke="#6a4a3a" stroke-width="1.1"/><path d="M207.2 326.3L207.9 330.1" stroke="#9c7458" stroke-width="1.1"/><path d="M170.2 254.0L168.3 255.7" stroke="#5a4a3a" stroke-width="1.1"/><path d="M195.5 246.5L194.1 249.4" stroke="#5a4a3a" stroke-width="1.1"/><path d="M160.4 322.7L160.0 325.2" stroke="#7e5844" stroke-width="1.1"/><path d="M145.6 286.8L143.0 288.0" stroke="#b08466" stroke-width="1.1"/><path d="M154.6 334.3L153.1 335.0" stroke="#5a4a3a" stroke-width="1.1"/><path d="M246.4 328.5L243.8 331.0" stroke="#6a4a3a" stroke-width="1.1"/><path d="M106.8 231.3L110.0 233.3" stroke="#a88a6c" stroke-width="1.1"/><path d="M158.9 288.2L160.3 289.8" stroke="#a88a6c" stroke-width="1.1"/><path d="M229.0 324.9L226.6 325.2" stroke="#9c7458" stroke-width="1.1"/><path d="M215.1 307.7L216.5 309.2" stroke="#8a6a50" stroke-width="1.1"/><path d="M211.0 288.9L213.6 289.5" stroke="#caa882" stroke-width="1.1"/><path d="M148.2 321.5L150.5 322.5" stroke="#8a6a50" stroke-width="1.1"/><path d="M253.9 321.9L251.1 323.4" stroke="#6a4a3a" stroke-width="1.1"/><path d="M216.5 324.2L218.7 324.4" stroke="#a88a6c" stroke-width="1.1"/><path d="M115.9 243.1L113.4 243.9" stroke="#7e5844" stroke-width="1.1"/><path d="M223.6 313.0L225.1 314.2" stroke="#b08466" stroke-width="1.1"/><path d="M180.4 292.1L178.9 292.7" stroke="#caa882" stroke-width="1.1"/><path d="M249.6 314.8L250.4 317.7" stroke="#8a6a50" stroke-width="1.1"/><path d="M249.0 334.2L245.4 335.6" stroke="#7e5844" stroke-width="1.1"/><path d="M166.4 296.9L164.8 299.0" stroke="#caa882" stroke-width="1.1"/><path d="M107.2 219.3L108.3 221.3" stroke="#c8a07a" stroke-width="1.1"/><path d="M137.7 310.9L138.0 314.1" stroke="#6a4a3a" stroke-width="1.1"/><path d="M153.6 327.4L151.9 327.6" stroke="#7e5844" stroke-width="1.1"/><path d="M137.4 274.2L137.2 277.1" stroke="#5a4a3a" stroke-width="1.1"/><path d="M154.0 312.6L152.5 315.8" stroke="#8a6a50" stroke-width="1.1"/><path d="M151.5 295.5L153.6 297.3" stroke="#caa882" stroke-width="1.1"/><path d="M144.1 324.0L144.9 326.5" stroke="#c8a07a" stroke-width="1.1"/><path d="M166.2 300.1L169.4 302.5" stroke="#b08466" stroke-width="1.1"/><path d="M198.5 318.6L195.1 320.0" stroke="#5a4a3a" stroke-width="1.1"/><path d="M120.6 247.4L120.8 250.5" stroke="#caa882" stroke-width="1.1"/><path d="M111.0 238.2L109.6 241.5" stroke="#c8a07a" stroke-width="1.1"/><path d="M182.4 313.0L183.3 315.4" stroke="#8a6a50" stroke-width="1.1"/><path d="M195.5 260.5L199.0 260.6" stroke="#8a6a50" stroke-width="1.1"/><path d="M130.3 279.2L132.3 279.6" stroke="#6a4a3a" stroke-width="1.1"/><path d="M147.2 236.3L147.4 238.8" stroke="#8a6a50" stroke-width="1.1"/><path d="M128.4 286.8L125.7 288.5" stroke="#6a4a3a" stroke-width="1.1"/><path d="M152.5 314.9L152.1 318.2" stroke="#8a6a50" stroke-width="1.1"/><path d="M234.5 294.9L236.9 297.9" stroke="#6a4a3a" stroke-width="1.1"/><path d="M216.8 291.8L217.4 294.0" stroke="#5a4a3a" stroke-width="1.1"/><path d="M203.0 318.3L204.3 320.6" stroke="#b08466" stroke-width="1.1"/><path d="M137.1 330.0L136.1 332.2" stroke="#c8a07a" stroke-width="1.1"/><path d="M233.5 319.9L231.9 322.3" stroke="#5a4a3a" stroke-width="1.1"/><path d="M233.6 277.8L230.4 278.1" stroke="#b08466" stroke-width="1.1"/><path d="M229.7 253.2L232.7 254.9" stroke="#c8a07a" stroke-width="1.1"/><path d="M138.4 316.7L135.8 316.8" stroke="#9c7458" stroke-width="1.1"/><path d="M237.1 325.9L239.2 328.1" stroke="#6a4a3a" stroke-width="1.1"/><path d="M213.7 253.5L212.7 256.5" stroke="#a88a6c" stroke-width="1.1"/><path d="M226.9 287.1L225.6 288.7" stroke="#8a6a50" stroke-width="1.1"/><path d="M177.2 277.8L177.0 281.5" stroke="#8a6a50" stroke-width="1.1"/><path d="M218.4 271.4L220.0 273.6" stroke="#8a6a50" stroke-width="1.1"/><path d="M145.4 260.6L147.9 262.6" stroke="#5a4a3a" stroke-width="1.1"/><path d="M174.3 308.4L171.9 308.6" stroke="#caa882" stroke-width="1.1"/><path d="M108.5 223.1L110.9 223.7" stroke="#a88a6c" stroke-width="1.1"/><path d="M204.2 311.6L201.7 314.1" stroke="#b08466" stroke-width="1.1"/><path d="M116.4 216.7L118.3 216.9" stroke="#7e5844" stroke-width="1.1"/><path d="M189.3 332.6L189.1 334.4" stroke="#c8a07a" stroke-width="1.1"/><path d="M214.8 258.4L212.7 260.7" stroke="#b08466" stroke-width="1.1"/><path d="M130.2 303.7L128.8 306.5" stroke="#7e5844" stroke-width="1.1"/><path d="M111.5 213.0L109.9 213.1" stroke="#b08466" stroke-width="1.1"/><path d="M239.2 267.3L239.1 270.1" stroke="#5a4a3a" stroke-width="1.1"/><path d="M232.3 291.7L230.2 292.1" stroke="#6a4a3a" stroke-width="1.1"/><path d="M195.7 296.5L197.3 297.6" stroke="#7e5844" stroke-width="1.1"/><path d="M244.8 287.6L246.6 290.4" stroke="#5a4a3a" stroke-width="1.1"/><path d="M181.0 325.2L181.7 327.0" stroke="#caa882" stroke-width="1.1"/><path d="M131.4 289.1L130.3 291.3" stroke="#caa882" stroke-width="1.1"/><path d="M125.5 261.2L128.1 262.8" stroke="#c8a07a" stroke-width="1.1"/><path d="M172.2 292.1L171.7 295.2" stroke="#9c7458" stroke-width="1.1"/><path d="M203.9 300.3L203.0 303.5" stroke="#8a6a50" stroke-width="1.1"/><path d="M244.8 320.2L246.7 322.7" stroke="#caa882" stroke-width="1.1"/><path d="M138.6 285.9L136.7 286.2" stroke="#c8a07a" stroke-width="1.1"/><path d="M211.5 282.4L213.2 286.0" stroke="#7e5844" stroke-width="1.1"/><path d="M133.6 277.0L137.3 277.2" stroke="#b08466" stroke-width="1.1"/><path d="M113.6 221.4L112.7 224.3" stroke="#8a6a50" stroke-width="1.1"/><path d="M120.8 272.9L118.9 273.2" stroke="#caa882" stroke-width="1.1"/><path d="M148.9 285.8L150.8 287.7" stroke="#9c7458" stroke-width="1.1"/><path d="M143.0 238.3L144.7 241.4" stroke="#7e5844" stroke-width="1.1"/><path d="M253.3 305.6L253.7 309.0" stroke="#c8a07a" stroke-width="1.1"/><path d="M229.8 277.0L227.1 279.2" stroke="#7e5844" stroke-width="1.1"/><path d="M142.2 253.3L144.5 253.4" stroke="#6a4a3a" stroke-width="1.1"/><path d="M173.3 302.1L175.5 303.2" stroke="#9c7458" stroke-width="1.1"/><path d="M244.5 327.2L246.4 328.2" stroke="#b08466" stroke-width="1.1"/><path d="M233.7 298.2L234.2 302.1" stroke="#c8a07a" stroke-width="1.1"/><path d="M209.4 313.2L207.0 315.2" stroke="#9c7458" stroke-width="1.1"/><path d="M244.7 304.7L246.1 306.5" stroke="#a88a6c" stroke-width="1.1"/><path d="M209.5 291.9L211.7 292.3" stroke="#6a4a3a" stroke-width="1.1"/><path d="M244.5 256.6L247.9 258.5" stroke="#9c7458" stroke-width="1.1"/><path d="M220.0 268.5L219.4 270.6" stroke="#caa882" stroke-width="1.1"/><path d="M115.0 225.4L115.7 228.4" stroke="#5a4a3a" stroke-width="1.1"/><path d="M155.3 258.9L156.0 261.7" stroke="#c8a07a" stroke-width="1.1"/><path d="M125.2 292.8L127.3 294.3" stroke="#7e5844" stroke-width="1.1"/><path d="M250.2 321.5L252.9 323.2" stroke="#6a4a3a" stroke-width="1.1"/><path d="M124.1 210.5L124.7 212.1" stroke="#caa882" stroke-width="1.1"/><path d="M249.6 268.7L248.4 270.0" stroke="#b08466" stroke-width="1.1"/><path d="M124.7 232.5L127.4 233.8" stroke="#a88a6c" stroke-width="1.1"/><path d="M153.9 281.5L149.9 281.7" stroke="#7e5844" stroke-width="1.1"/><path d="M108.1 226.0L106.8 227.8" stroke="#5a4a3a" stroke-width="1.1"/><path d="M236.5 289.7L233.9 290.6" stroke="#caa882" stroke-width="1.1"/><path d="M211.8 314.1L209.0 314.4" stroke="#a88a6c" stroke-width="1.1"/><path d="M189.7 327.6L189.1 329.9" stroke="#a88a6c" stroke-width="1.1"/><path d="M190.1 269.2L189.9 272.1" stroke="#c8a07a" stroke-width="1.1"/><path d="M232.1 301.8L233.6 302.4" stroke="#b08466" stroke-width="1.1"/><path d="M248.0 314.7L247.6 318.1" stroke="#5a4a3a" stroke-width="1.1"/><path d="M217.4 278.8L217.9 280.8" stroke="#b08466" stroke-width="1.1"/><path d="M191.9 303.5L189.5 304.1" stroke="#a88a6c" stroke-width="1.1"/><path d="M219.5 300.5L215.6 301.5" stroke="#6a4a3a" stroke-width="1.1"/><path d="M255.5 263.9L253.6 265.3" stroke="#8a6a50" stroke-width="1.1"/><path d="M138.0 328.8L135.4 329.1" stroke="#c8a07a" stroke-width="1.1"/><path d="M133.8 293.0L134.8 296.1" stroke="#b08466" stroke-width="1.1"/><path d="M237.6 286.8L241.2 287.0" stroke="#caa882" stroke-width="1.1"/><path d="M220.1 259.7L222.7 260.9" stroke="#c8a07a" stroke-width="1.1"/><path d="M126.7 291.5L129.9 291.9" stroke="#b08466" stroke-width="1.1"/><path d="M125.9 219.5L124.5 220.4" stroke="#5a4a3a" stroke-width="1.1"/><path d="M121.3 239.6L120.1 241.2" stroke="#6a4a3a" stroke-width="1.1"/><path d="M200.6 301.0L199.1 301.9" stroke="#8a6a50" stroke-width="1.1"/><path d="M153.2 298.7L151.8 300.3" stroke="#8a6a50" stroke-width="1.1"/><path d="M252.0 271.2L250.4 272.0" stroke="#9c7458" stroke-width="1.1"/><path d="M231.2 263.4L229.8 267.0" stroke="#a88a6c" stroke-width="1.1"/><path d="M195.3 271.4L194.0 272.9" stroke="#b08466" stroke-width="1.1"/><path d="M146.6 252.2L146.7 256.0" stroke="#b08466" stroke-width="1.1"/><path d="M240.5 266.3L239.4 269.4" stroke="#9c7458" stroke-width="1.1"/><path d="M232.6 305.0L230.9 308.5" stroke="#caa882" stroke-width="1.1"/><path d="M132.8 245.3L131.3 248.1" stroke="#8a6a50" stroke-width="1.1"/><path d="M172.7 253.6L170.5 253.6" stroke="#5a4a3a" stroke-width="1.1"/><path d="M221.4 329.0L218.0 329.8" stroke="#b08466" stroke-width="1.1"/><path d="M168.7 285.0L172.5 286.2" stroke="#7e5844" stroke-width="1.1"/><path d="M170.0 260.4L172.6 260.8" stroke="#b08466" stroke-width="1.1"/><path d="M115.2 237.7L116.4 240.8" stroke="#8a6a50" stroke-width="1.1"/><path d="M116.0 218.8L114.8 221.4" stroke="#b08466" stroke-width="1.1"/><path d="M154.9 275.7L152.2 276.7" stroke="#5a4a3a" stroke-width="1.1"/><path d="M169.0 332.9L172.6 333.2" stroke="#6a4a3a" stroke-width="1.1"/><path d="M143.3 274.3L145.2 276.3" stroke="#5a4a3a" stroke-width="1.1"/><path d="M191.2 325.2L193.0 328.7" stroke="#caa882" stroke-width="1.1"/><path d="M121.5 257.3L119.8 258.1" stroke="#b08466" stroke-width="1.1"/><path d="M121.0 283.5L123.5 285.6" stroke="#caa882" stroke-width="1.1"/><path d="M118.0 238.9L117.9 240.9" stroke="#9c7458" stroke-width="1.1"/><path d="M226.5 272.3L225.9 275.1" stroke="#a88a6c" stroke-width="1.1"/><path d="M148.9 311.1L151.6 311.9" stroke="#a88a6c" stroke-width="1.1"/><path d="M144.4 279.2L142.9 281.4" stroke="#7e5844" stroke-width="1.1"/><path d="M214.7 328.2L212.0 329.9" stroke="#8a6a50" stroke-width="1.1"/><path d="M241.2 275.0L237.5 275.9" stroke="#6a4a3a" stroke-width="1.1"/><path d="M177.2 328.3L180.4 330.6" stroke="#7e5844" stroke-width="1.1"/><path d="M119.8 270.5L122.2 273.2" stroke="#5a4a3a" stroke-width="1.1"/><path d="M220.5 320.4L220.0 323.0" stroke="#9c7458" stroke-width="1.1"/><path d="M193.1 260.6L190.5 263.1" stroke="#b08466" stroke-width="1.1"/><path d="M148.9 285.1L145.2 285.4" stroke="#5a4a3a" stroke-width="1.1"/><path d="M192.7 277.7L191.5 279.6" stroke="#9c7458" stroke-width="1.1"/><path d="M166.2 245.9L168.1 246.5" stroke="#c8a07a" stroke-width="1.1"/><path d="M180.0 243.9L180.9 247.6" stroke="#9c7458" stroke-width="1.1"/><path d="M170.6 330.0L173.4 330.5" stroke="#a88a6c" stroke-width="1.1"/><path d="M122.4 266.5L122.5 268.2" stroke="#a88a6c" stroke-width="1.1"/><path d="M119.6 271.2L121.9 272.7" stroke="#5a4a3a" stroke-width="1.1"/><path d="M153.9 264.0L153.5 267.1" stroke="#6a4a3a" stroke-width="1.1"/><path d="M169.4 301.9L171.7 303.5" stroke="#6a4a3a" stroke-width="1.1"/><path d="M144.5 253.3L144.5 256.1" stroke="#7e5844" stroke-width="1.1"/><path d="M177.3 282.7L174.8 283.0" stroke="#c8a07a" stroke-width="1.1"/><path d="M162.2 255.5L160.2 256.5" stroke="#b08466" stroke-width="1.1"/><path d="M156.3 331.5L155.2 333.2" stroke="#8a6a50" stroke-width="1.1"/><path d="M148.4 298.5L150.2 301.1" stroke="#7e5844" stroke-width="1.1"/><path d="M173.8 262.7L170.8 263.5" stroke="#7e5844" stroke-width="1.1"/><path d="M221.0 265.9L222.7 267.2" stroke="#b08466" stroke-width="1.1"/><path d="M170.8 330.3L172.0 333.8" stroke="#7e5844" stroke-width="1.1"/><path d="M141.3 309.2L137.9 309.9" stroke="#a88a6c" stroke-width="1.1"/><path d="M150.5 271.5L147.7 271.7" stroke="#b08466" stroke-width="1.1"/><path d="M159.8 259.9L159.8 262.1" stroke="#b08466" stroke-width="1.1"/><path d="M225.9 276.6L225.6 279.4" stroke="#6a4a3a" stroke-width="1.1"/><path d="M197.5 296.4L195.6 298.1" stroke="#c8a07a" stroke-width="1.1"/><path d="M124.1 272.9L121.6 273.7" stroke="#8a6a50" stroke-width="1.1"/><path d="M115.3 255.7L113.6 256.1" stroke="#5a4a3a" stroke-width="1.1"/><path d="M147.4 286.9L146.3 290.2" stroke="#caa882" stroke-width="1.1"/><path d="M193.2 282.2L195.0 285.6" stroke="#5a4a3a" stroke-width="1.1"/><path d="M177.3 291.6L174.6 294.3" stroke="#7e5844" stroke-width="1.1"/><path d="M206.0 268.0L202.7 269.1" stroke="#c8a07a" stroke-width="1.1"/><path d="M204.1 331.0L202.3 334.1" stroke="#b08466" stroke-width="1.1"/><path d="M196.0 297.1L198.3 299.9" stroke="#b08466" stroke-width="1.1"/><path d="M155.0 239.9L157.2 241.2" stroke="#b08466" stroke-width="1.1"/><path d="M143.9 301.8L140.3 303.6" stroke="#b08466" stroke-width="1.1"/><path d="M203.7 296.7L206.6 298.3" stroke="#6a4a3a" stroke-width="1.1"/><path d="M156.4 249.8L155.9 252.8" stroke="#9c7458" stroke-width="1.1"/><path d="M221.7 246.0L224.0 246.2" stroke="#c8a07a" stroke-width="1.1"/><path d="M252.0 300.2L253.5 302.7" stroke="#7e5844" stroke-width="1.1"/><path d="M191.8 332.2L189.9 332.3" stroke="#7e5844" stroke-width="1.1"/><path d="M197.5 294.4L198.6 295.7" stroke="#6a4a3a" stroke-width="1.1"/><path d="M145.8 306.9L145.1 310.0" stroke="#c8a07a" stroke-width="1.1"/><path d="M231.7 280.0L234.1 282.9" stroke="#a88a6c" stroke-width="1.1"/><path d="M152.6 256.9L151.5 258.1" stroke="#caa882" stroke-width="1.1"/><path d="M120.8 234.6L121.6 237.7" stroke="#7e5844" stroke-width="1.1"/><path d="M176.7 298.9L175.1 301.4" stroke="#8a6a50" stroke-width="1.1"/><path d="M147.9 323.4L147.2 327.2" stroke="#6a4a3a" stroke-width="1.1"/><path d="M228.9 301.9L227.5 304.9" stroke="#8a6a50" stroke-width="1.1"/><path d="M125.9 236.2L124.7 237.9" stroke="#c8a07a" stroke-width="1.1"/><path d="M125.2 251.1L124.6 255.0" stroke="#6a4a3a" stroke-width="1.1"/><path d="M166.5 308.4L162.7 308.9" stroke="#c8a07a" stroke-width="1.1"/><path d="M193.2 303.9L194.6 305.8" stroke="#caa882" stroke-width="1.1"/><path d="M238.8 311.9L236.2 313.8" stroke="#c8a07a" stroke-width="1.1"/><path d="M125.9 291.6L128.7 293.5" stroke="#8a6a50" stroke-width="1.1"/><path d="M118.1 205.7L118.3 208.7" stroke="#a88a6c" stroke-width="1.1"/><path d="M184.0 312.4L186.2 314.1" stroke="#5a4a3a" stroke-width="1.1"/><path d="M210.9 283.4L208.7 283.9" stroke="#b08466" stroke-width="1.1"/><path d="M164.2 272.1L161.4 272.3" stroke="#c8a07a" stroke-width="1.1"/><path d="M174.3 287.8L172.6 288.0" stroke="#caa882" stroke-width="1.1"/><path d="M128.6 264.3L125.2 265.8" stroke="#c8a07a" stroke-width="1.1"/><path d="M249.2 286.4L245.8 287.1" stroke="#7e5844" stroke-width="1.1"/><path d="M166.7 327.3L169.3 327.9" stroke="#b08466" stroke-width="1.1"/><path d="M228.2 295.4L227.4 298.1" stroke="#9c7458" stroke-width="1.1"/><path d="M160.1 320.9L161.7 322.3" stroke="#a88a6c" stroke-width="1.1"/><path d="M207.3 327.2L204.0 328.4" stroke="#6a4a3a" stroke-width="1.1"/><path d="M212.3 270.1L212.2 272.1" stroke="#6a4a3a" stroke-width="1.1"/><path d="M229.9 283.5L228.3 283.9" stroke="#a88a6c" stroke-width="1.1"/><path d="M151.0 255.7L149.6 257.5" stroke="#5a4a3a" stroke-width="1.1"/><path d="M193.5 290.5L196.8 291.2" stroke="#5a4a3a" stroke-width="1.1"/><path d="M122.2 278.8L119.1 279.9" stroke="#6a4a3a" stroke-width="1.1"/><path d="M133.2 297.1L132.1 299.4" stroke="#c8a07a" stroke-width="1.1"/><path d="M153.1 287.8L150.6 290.7" stroke="#9c7458" stroke-width="1.1"/><path d="M174.4 323.2L176.2 326.2" stroke="#5a4a3a" stroke-width="1.1"/><path d="M154.5 318.0L158.0 319.5" stroke="#7e5844" stroke-width="1.1"/><path d="M159.4 320.0L156.8 321.4" stroke="#a88a6c" stroke-width="1.1"/><path d="M219.5 270.2L217.8 272.9" stroke="#5a4a3a" stroke-width="1.1"/><path d="M147.9 277.2L145.3 278.5" stroke="#8a6a50" stroke-width="1.1"/><path d="M219.1 249.7L219.5 253.1" stroke="#b08466" stroke-width="1.1"/><path d="M248.2 309.9L244.7 311.1" stroke="#5a4a3a" stroke-width="1.1"/><path d="M186.5 298.0L189.7 299.2" stroke="#c8a07a" stroke-width="1.1"/><path d="M143.4 301.3L141.3 303.7" stroke="#caa882" stroke-width="1.1"/><path d="M128.5 229.4L128.5 231.7" stroke="#6a4a3a" stroke-width="1.1"/><path d="M137.2 306.0L138.5 308.3" stroke="#9c7458" stroke-width="1.1"/><path d="M222.6 322.2L223.0 324.4" stroke="#5a4a3a" stroke-width="1.1"/><path d="M153.7 255.9L152.1 258.0" stroke="#b08466" stroke-width="1.1"/><path d="M253.4 327.5L251.4 328.1" stroke="#b08466" stroke-width="1.1"/><path d="M234.7 310.2L233.9 311.8" stroke="#c8a07a" stroke-width="1.1"/><path d="M223.8 323.4L223.0 327.0" stroke="#5a4a3a" stroke-width="1.1"/><path d="M213.9 272.9L210.9 275.1" stroke="#c8a07a" stroke-width="1.1"/><path d="M252.1 288.3L253.1 290.0" stroke="#8a6a50" stroke-width="1.1"/><path d="M235.0 260.2L235.6 262.2" stroke="#6a4a3a" stroke-width="1.1"/><path d="M142.8 330.2L140.7 332.8" stroke="#9c7458" stroke-width="1.1"/><path d="M161.3 314.1L161.6 316.4" stroke="#7e5844" stroke-width="1.1"/><path d="M209.8 328.1L206.6 329.1" stroke="#8a6a50" stroke-width="1.1"/><path d="M220.0 279.4L219.9 281.8" stroke="#c8a07a" stroke-width="1.1"/><path d="M194.7 264.1L191.5 265.3" stroke="#a88a6c" stroke-width="1.1"/><path d="M252.0 309.3L255.8 310.4" stroke="#c8a07a" stroke-width="1.1"/><path d="M229.6 320.6L227.4 322.5" stroke="#5a4a3a" stroke-width="1.1"/><path d="M141.8 308.6L143.6 311.9" stroke="#6a4a3a" stroke-width="1.1"/><path d="M192.2 311.6L192.9 313.5" stroke="#a88a6c" stroke-width="1.1"/><path d="M141.7 258.5L140.0 261.6" stroke="#9c7458" stroke-width="1.1"/><path d="M142.2 322.1L142.6 324.5" stroke="#caa882" stroke-width="1.1"/><path d="M144.3 287.9L146.3 290.3" stroke="#c8a07a" stroke-width="1.1"/><path d="M200.3 297.5L202.4 298.3" stroke="#a88a6c" stroke-width="1.1"/><path d="M186.2 280.1L183.9 282.1" stroke="#9c7458" stroke-width="1.1"/><path d="M120.9 260.1L122.4 263.3" stroke="#7e5844" stroke-width="1.1"/><path d="M154.0 273.2L152.5 274.6" stroke="#5a4a3a" stroke-width="1.1"/><path d="M164.2 296.2L161.1 296.9" stroke="#9c7458" stroke-width="1.1"/><path d="M117.9 226.5L116.0 228.9" stroke="#a88a6c" stroke-width="1.1"/><path d="M203.0 283.6L203.6 286.2" stroke="#8a6a50" stroke-width="1.1"/><path d="M200.0 328.6L197.4 330.0" stroke="#caa882" stroke-width="1.1"/><path d="M113.0 240.7L112.2 242.4" stroke="#6a4a3a" stroke-width="1.1"/><path d="M235.5 269.1L235.3 270.9" stroke="#a88a6c" stroke-width="1.1"/><path d="M121.2 254.9L120.3 258.2" stroke="#7e5844" stroke-width="1.1"/><path d="M138.1 259.6L139.4 262.7" stroke="#9c7458" stroke-width="1.1"/><path d="M138.9 275.8L138.1 277.4" stroke="#9c7458" stroke-width="1.1"/><path d="M224.0 280.8L225.8 281.7" stroke="#9c7458" stroke-width="1.1"/><path d="M154.0 293.7L152.5 294.3" stroke="#9c7458" stroke-width="1.1"/><path d="M226.9 277.1L229.5 278.7" stroke="#9c7458" stroke-width="1.1"/><path d="M148.9 270.6L151.7 272.5" stroke="#5a4a3a" stroke-width="1.1"/><path d="M159.2 288.3L162.7 288.8" stroke="#5a4a3a" stroke-width="1.1"/><path d="M165.5 276.4L165.8 278.0" stroke="#c8a07a" stroke-width="1.1"/><path d="M129.4 237.8L133.0 237.8" stroke="#8a6a50" stroke-width="1.1"/><path d="M197.7 269.1L199.1 271.0" stroke="#caa882" stroke-width="1.1"/><path d="M145.5 284.3L148.1 286.8" stroke="#a88a6c" stroke-width="1.1"/><path d="M157.4 258.8L158.9 259.8" stroke="#5a4a3a" stroke-width="1.1"/><path d="M216.9 269.3L218.2 270.4" stroke="#b08466" stroke-width="1.1"/><path d="M181.8 331.5L179.7 331.9" stroke="#a88a6c" stroke-width="1.1"/><path d="M152.1 264.3L153.7 264.9" stroke="#caa882" stroke-width="1.1"/><path d="M198.5 293.1L196.9 295.9" stroke="#c8a07a" stroke-width="1.1"/><path d="M144.6 292.9L144.0 296.1" stroke="#6a4a3a" stroke-width="1.1"/><path d="M228.9 249.2L230.1 252.6" stroke="#9c7458" stroke-width="1.1"/><path d="M144.3 267.3L142.8 269.3" stroke="#8a6a50" stroke-width="1.1"/><path d="M170.6 331.9L170.9 335.0" stroke="#b08466" stroke-width="1.1"/><path d="M199.0 288.8L197.0 290.1" stroke="#9c7458" stroke-width="1.1"/><path d="M166.2 283.6L168.7 285.0" stroke="#5a4a3a" stroke-width="1.1"/><path d="M161.9 285.7L165.7 285.7" stroke="#7e5844" stroke-width="1.1"/><path d="M120.1 227.8L118.7 231.4" stroke="#9c7458" stroke-width="1.1"/><path d="M230.8 282.5L230.8 284.5" stroke="#8a6a50" stroke-width="1.1"/><path d="M179.6 286.4L178.8 289.0" stroke="#8a6a50" stroke-width="1.1"/><path d="M119.7 261.3L121.9 264.1" stroke="#9c7458" stroke-width="1.1"/><path d="M120.2 248.4L118.7 250.1" stroke="#9c7458" stroke-width="1.1"/><path d="M201.7 300.1L204.2 302.3" stroke="#6a4a3a" stroke-width="1.1"/><path d="M231.2 273.1L227.7 274.2" stroke="#9c7458" stroke-width="1.1"/><path d="M226.2 300.8L225.1 303.6" stroke="#b08466" stroke-width="1.1"/><path d="M212.3 291.1L214.9 293.1" stroke="#8a6a50" stroke-width="1.1"/><path d="M193.2 256.3L196.7 256.5" stroke="#b08466" stroke-width="1.1"/><path d="M147.5 323.1L144.6 323.2" stroke="#a88a6c" stroke-width="1.1"/><path d="M115.1 247.9L113.3 249.1" stroke="#a88a6c" stroke-width="1.1"/><path d="M245.6 297.7L246.0 299.5" stroke="#7e5844" stroke-width="1.1"/><path d="M244.0 255.6L243.1 257.4" stroke="#6a4a3a" stroke-width="1.1"/><path d="M149.6 304.4L152.5 305.1" stroke="#a88a6c" stroke-width="1.1"/><path d="M143.4 273.9L141.8 274.5" stroke="#5a4a3a" stroke-width="1.1"/><path d="M115.6 263.1L117.8 264.7" stroke="#b08466" stroke-width="1.1"/><path d="M201.4 292.3L201.6 294.4" stroke="#b08466" stroke-width="1.1"/><path d="M230.4 277.0L228.3 279.8" stroke="#c8a07a" stroke-width="1.1"/><path d="M128.4 289.4L130.2 289.5" stroke="#5a4a3a" stroke-width="1.1"/><path d="M207.8 275.2L211.7 275.2" stroke="#9c7458" stroke-width="1.1"/><path d="M165.8 309.4L165.7 312.6" stroke="#9c7458" stroke-width="1.1"/><path d="M224.8 251.4L222.4 252.9" stroke="#c8a07a" stroke-width="1.1"/><path d="M113.7 220.5L116.6 220.7" stroke="#b08466" stroke-width="1.1"/><path d="M120.2 234.0L116.6 235.7" stroke="#b08466" stroke-width="1.1"/><path d="M131.6 244.5L129.4 244.9" stroke="#c8a07a" stroke-width="1.1"/><path d="M208.9 277.8L209.2 280.7" stroke="#7e5844" stroke-width="1.1"/><path d="M198.6 272.4L199.2 274.9" stroke="#c8a07a" stroke-width="1.1"/><path d="M240.3 310.7L238.0 313.5" stroke="#9c7458" stroke-width="1.1"/><path d="M234.5 318.4L237.1 320.4" stroke="#8a6a50" stroke-width="1.1"/><path d="M199.6 266.0L197.4 268.5" stroke="#8a6a50" stroke-width="1.1"/><path d="M186.3 302.7L184.5 304.2" stroke="#c8a07a" stroke-width="1.1"/><path d="M216.8 266.4L220.2 267.2" stroke="#caa882" stroke-width="1.1"/><path d="M218.3 282.2L220.0 282.6" stroke="#5a4a3a" stroke-width="1.1"/><path d="M199.3 258.9L199.8 260.6" stroke="#9c7458" stroke-width="1.1"/><path d="M150.0 303.4L152.1 305.9" stroke="#c8a07a" stroke-width="1.1"/><path d="M193.2 323.6L194.4 326.6" stroke="#7e5844" stroke-width="1.1"/><path d="M166.3 253.9L163.8 254.8" stroke="#caa882" stroke-width="1.1"/><path d="M190.0 291.5L188.9 293.7" stroke="#9c7458" stroke-width="1.1"/><path d="M159.3 332.6L157.5 333.6" stroke="#c8a07a" stroke-width="1.1"/><path d="M122.8 282.4L121.7 284.0" stroke="#c8a07a" stroke-width="1.1"/><path d="M160.8 258.6L158.4 258.9" stroke="#6a4a3a" stroke-width="1.1"/><path d="M156.8 284.9L160.0 285.7" stroke="#9c7458" stroke-width="1.1"/><path d="M134.2 263.7L130.5 264.0" stroke="#a88a6c" stroke-width="1.1"/><path d="M177.6 259.0L174.2 260.5" stroke="#a88a6c" stroke-width="1.1"/><path d="M161.3 308.3L163.0 310.5" stroke="#6a4a3a" stroke-width="1.1"/><path d="M161.7 293.2L164.3 294.3" stroke="#5a4a3a" stroke-width="1.1"/><path d="M199.4 275.2L199.9 279.2" stroke="#5a4a3a" stroke-width="1.1"/><path d="M185.7 268.2L185.3 271.1" stroke="#9c7458" stroke-width="1.1"/><path d="M135.3 324.2L134.6 327.7" stroke="#5a4a3a" stroke-width="1.1"/><path d="M153.8 318.3L156.3 318.9" stroke="#5a4a3a" stroke-width="1.1"/><path d="M243.2 315.6L241.1 316.2" stroke="#b08466" stroke-width="1.1"/><path d="M128.8 229.1L126.6 230.7" stroke="#9c7458" stroke-width="1.1"/><path d="M150.3 286.6L148.6 288.7" stroke="#caa882" stroke-width="1.1"/><path d="M183.4 300.8L180.5 300.9" stroke="#c8a07a" stroke-width="1.1"/><path d="M162.1 274.9L162.6 276.9" stroke="#6a4a3a" stroke-width="1.1"/><path d="M247.8 321.5L247.5 323.8" stroke="#c8a07a" stroke-width="1.1"/><path d="M162.8 292.0L163.0 295.7" stroke="#c8a07a" stroke-width="1.1"/><path d="M140.0 311.8L140.9 313.9" stroke="#b08466" stroke-width="1.1"/><path d="M242.4 290.1L241.5 293.0" stroke="#6a4a3a" stroke-width="1.1"/><path d="M158.8 305.3L160.2 308.1" stroke="#5a4a3a" stroke-width="1.1"/><path d="M250.7 272.9L248.5 273.0" stroke="#9c7458" stroke-width="1.1"/><path d="M215.7 282.4L215.1 286.1" stroke="#c8a07a" stroke-width="1.1"/><path d="M135.1 231.6L134.4 235.5" stroke="#5a4a3a" stroke-width="1.1"/><path d="M139.3 302.8L137.7 303.0" stroke="#c8a07a" stroke-width="1.1"/><path d="M109.0 225.1L107.5 226.7" stroke="#8a6a50" stroke-width="1.1"/><path d="M172.9 268.4L171.8 271.6" stroke="#a88a6c" stroke-width="1.1"/><path d="M204.1 300.8L207.1 302.1" stroke="#6a4a3a" stroke-width="1.1"/><path d="M126.9 278.5L127.7 281.1" stroke="#7e5844" stroke-width="1.1"/><path d="M104.1 218.1L106.8 220.7" stroke="#b08466" stroke-width="1.1"/><path d="M157.0 322.7L156.1 325.9" stroke="#c8a07a" stroke-width="1.1"/><path d="M190.2 270.0L192.2 273.3" stroke="#8a6a50" stroke-width="1.1"/><path d="M180.5 313.9L180.8 317.7" stroke="#7e5844" stroke-width="1.1"/><path d="M151.8 272.4L153.8 272.9" stroke="#a88a6c" stroke-width="1.1"/><path d="M171.4 261.4L171.4 263.2" stroke="#b08466" stroke-width="1.1"/><path d="M232.8 289.1L231.2 290.4" stroke="#a88a6c" stroke-width="1.1"/><path d="M201.7 319.0L202.4 322.7" stroke="#5a4a3a" stroke-width="1.1"/><path d="M132.8 241.5L136.6 242.2" stroke="#c8a07a" stroke-width="1.1"/><path d="M142.4 328.9L141.0 330.8" stroke="#5a4a3a" stroke-width="1.1"/><path d="M182.2 324.0L179.5 324.1" stroke="#6a4a3a" stroke-width="1.1"/><path d="M187.4 303.0L186.6 306.4" stroke="#7e5844" stroke-width="1.1"/><path d="M179.5 328.6L176.0 330.3" stroke="#6a4a3a" stroke-width="1.1"/><path d="M185.4 308.4L189.1 309.5" stroke="#6a4a3a" stroke-width="1.1"/><path d="M198.0 262.9L201.6 263.5" stroke="#9c7458" stroke-width="1.1"/><path d="M242.7 288.0L239.7 290.7" stroke="#caa882" stroke-width="1.1"/><path d="M212.9 318.4L215.6 318.7" stroke="#c8a07a" stroke-width="1.1"/><path d="M233.7 326.0L236.6 326.3" stroke="#7e5844" stroke-width="1.1"/><path d="M179.9 244.5L178.4 245.8" stroke="#5a4a3a" stroke-width="1.1"/><path d="M206.9 262.7L204.7 264.3" stroke="#b08466" stroke-width="1.1"/><path d="M191.5 322.1L193.4 323.6" stroke="#c8a07a" stroke-width="1.1"/><path d="M156.9 264.0L159.1 265.0" stroke="#caa882" stroke-width="1.1"/><path d="M183.8 274.6L182.1 275.2" stroke="#b08466" stroke-width="1.1"/><path d="M184.6 272.4L182.4 273.1" stroke="#c8a07a" stroke-width="1.1"/><path d="M166.2 312.5L165.0 314.2" stroke="#8a6a50" stroke-width="1.1"/><path d="M237.2 297.8L236.4 300.1" stroke="#a88a6c" stroke-width="1.1"/><path d="M209.8 317.3L211.2 318.3" stroke="#9c7458" stroke-width="1.1"/><path d="M152.0 313.5L153.2 316.9" stroke="#a88a6c" stroke-width="1.1"/><path d="M166.8 288.5L164.3 291.3" stroke="#a88a6c" stroke-width="1.1"/><path d="M159.2 274.4L156.2 276.0" stroke="#c8a07a" stroke-width="1.1"/><path d="M173.4 319.6L175.0 320.8" stroke="#c8a07a" stroke-width="1.1"/><path d="M141.7 322.3L144.5 323.2" stroke="#6a4a3a" stroke-width="1.1"/><path d="M249.5 264.1L249.2 265.8" stroke="#5a4a3a" stroke-width="1.1"/><path d="M174.2 269.4L176.7 270.2" stroke="#b08466" stroke-width="1.1"/><path d="M149.9 299.8L151.3 300.7" stroke="#7e5844" stroke-width="1.1"/><path d="M119.7 243.3L121.1 247.1" stroke="#6a4a3a" stroke-width="1.1"/><path d="M189.6 304.9L189.8 307.1" stroke="#caa882" stroke-width="1.1"/><path d="M154.2 314.7L154.3 318.2" stroke="#6a4a3a" stroke-width="1.1"/><path d="M202.6 313.0L202.4 316.7" stroke="#7e5844" stroke-width="1.1"/><path d="M191.2 263.2L191.5 265.3" stroke="#5a4a3a" stroke-width="1.1"/><path d="M149.8 270.0L148.2 271.0" stroke="#6a4a3a" stroke-width="1.1"/><path d="M178.6 303.2L175.9 305.4" stroke="#6a4a3a" stroke-width="1.1"/><path d="M148.3 285.4L150.5 287.0" stroke="#a88a6c" stroke-width="1.1"/><path d="M222.0 257.5L220.0 259.2" stroke="#7e5844" stroke-width="1.1"/><path d="M167.9 273.0L165.2 275.8" stroke="#6a4a3a" stroke-width="1.1"/><path d="M148.2 253.7L145.9 256.7" stroke="#8a6a50" stroke-width="1.1"/><path d="M200.5 249.8L201.6 251.4" stroke="#caa882" stroke-width="1.1"/><path d="M139.2 323.5L142.1 324.0" stroke="#c8a07a" stroke-width="1.1"/><path d="M170.3 263.0L170.4 264.8" stroke="#7e5844" stroke-width="1.1"/><path d="M200.2 293.8L198.0 295.2" stroke="#7e5844" stroke-width="1.1"/><path d="M203.3 288.7L203.2 291.5" stroke="#9c7458" stroke-width="1.1"/><path d="M116.2 224.1L115.9 227.0" stroke="#b08466" stroke-width="1.1"/><path d="M155.5 296.4L155.2 298.1" stroke="#8a6a50" stroke-width="1.1"/><path d="M186.3 310.8L183.3 312.0" stroke="#6a4a3a" stroke-width="1.1"/><path d="M149.2 324.5L147.2 325.9" stroke="#8a6a50" stroke-width="1.1"/><path d="M134.9 238.9L134.1 241.5" stroke="#b08466" stroke-width="1.1"/><path d="M176.8 252.1L175.0 253.7" stroke="#c8a07a" stroke-width="1.1"/><path d="M189.4 332.3L187.5 335.0" stroke="#b08466" stroke-width="1.1"/><path d="M129.5 264.6L126.6 265.0" stroke="#c8a07a" stroke-width="1.1"/><path d="M106.3 215.2L104.2 215.7" stroke="#8a6a50" stroke-width="1.1"/><path d="M138.7 299.5L138.8 303.2" stroke="#8a6a50" stroke-width="1.1"/><path d="M167.1 272.9L170.4 274.4" stroke="#9c7458" stroke-width="1.1"/><path d="M114.1 253.7L113.9 257.0" stroke="#a88a6c" stroke-width="1.1"/><path d="M121.7 257.4L122.0 259.1" stroke="#a88a6c" stroke-width="1.1"/><path d="M253.5 287.8L253.3 290.1" stroke="#8a6a50" stroke-width="1.1"/><path d="M237.0 249.9L237.6 251.6" stroke="#9c7458" stroke-width="1.1"/><path d="M227.5 273.8L230.2 276.6" stroke="#9c7458" stroke-width="1.1"/><path d="M217.6 325.3L220.2 325.5" stroke="#b08466" stroke-width="1.1"/><path d="M148.3 275.7L151.4 277.8" stroke="#5a4a3a" stroke-width="1.1"/><path d="M149.5 268.6L147.1 271.1" stroke="#5a4a3a" stroke-width="1.1"/><path d="M184.7 312.2L186.7 313.6" stroke="#9c7458" stroke-width="1.1"/><path d="M149.2 282.9L151.1 284.5" stroke="#7e5844" stroke-width="1.1"/><path d="M180.6 290.9L179.3 291.8" stroke="#9c7458" stroke-width="1.1"/><path d="M165.2 331.9L168.2 333.6" stroke="#b08466" stroke-width="1.1"/><path d="M155.2 333.6L151.8 333.8" stroke="#b08466" stroke-width="1.1"/><path d="M197.3 332.3L195.1 332.5" stroke="#9c7458" stroke-width="1.1"/><path d="M206.4 324.7L208.2 327.4" stroke="#6a4a3a" stroke-width="1.1"/><path d="M127.8 241.2L127.0 244.3" stroke="#c8a07a" stroke-width="1.1"/><path d="M185.2 329.8L184.5 333.3" stroke="#caa882" stroke-width="1.1"/><path d="M179.7 288.4L181.4 290.8" stroke="#8a6a50" stroke-width="1.1"/><path d="M235.1 328.6L235.2 331.0" stroke="#b08466" stroke-width="1.1"/><path d="M174.2 266.6L176.0 267.8" stroke="#8a6a50" stroke-width="1.1"/><path d="M233.4 306.9L231.3 307.1" stroke="#b08466" stroke-width="1.1"/><path d="M221.0 320.8L217.6 322.0" stroke="#5a4a3a" stroke-width="1.1"/><path d="M168.1 265.4L170.2 266.9" stroke="#caa882" stroke-width="1.1"/><path d="M244.6 297.6L245.0 299.8" stroke="#5a4a3a" stroke-width="1.1"/><path d="M166.8 280.9L167.9 283.9" stroke="#6a4a3a" stroke-width="1.1"/><path d="M204.3 322.4L204.5 325.0" stroke="#7e5844" stroke-width="1.1"/><path d="M244.5 306.3L242.7 307.1" stroke="#6a4a3a" stroke-width="1.1"/><path d="M235.5 279.4L237.3 281.3" stroke="#c8a07a" stroke-width="1.1"/><path d="M161.8 319.5L158.4 319.6" stroke="#8a6a50" stroke-width="1.1"/><path d="M140.4 316.4L138.1 317.5" stroke="#6a4a3a" stroke-width="1.1"/><path d="M188.2 317.4L186.5 317.5" stroke="#c8a07a" stroke-width="1.1"/><path d="M143.3 276.4L144.7 278.5" stroke="#b08466" stroke-width="1.1"/><path d="M177.1 324.1L178.8 325.7" stroke="#5a4a3a" stroke-width="1.1"/><path d="M136.2 311.1L139.0 312.5" stroke="#c8a07a" stroke-width="1.1"/><path d="M116.3 262.5L116.3 264.2" stroke="#b08466" stroke-width="1.1"/><path d="M114.0 235.7L117.5 236.7" stroke="#c8a07a" stroke-width="1.1"/><path d="M240.8 270.7L242.2 274.0" stroke="#5a4a3a" stroke-width="1.1"/><path d="M221.8 301.2L222.8 304.5" stroke="#caa882" stroke-width="1.1"/><path d="M170.6 306.5L168.6 306.6" stroke="#c8a07a" stroke-width="1.1"/><path d="M255.6 325.1L253.7 326.3" stroke="#7e5844" stroke-width="1.1"/><path d="M127.5 275.5L126.4 278.3" stroke="#8a6a50" stroke-width="1.1"/><path d="M128.4 276.9L126.8 277.9" stroke="#b08466" stroke-width="1.1"/><path d="M156.2 302.3L157.0 304.6" stroke="#8a6a50" stroke-width="1.1"/><path d="M125.3 230.9L126.5 234.0" stroke="#8a6a50" stroke-width="1.1"/><path d="M128.5 272.4L126.6 274.3" stroke="#b08466" stroke-width="1.1"/><path d="M175.8 248.1L172.9 248.9" stroke="#8a6a50" stroke-width="1.1"/><path d="M246.2 311.0L248.3 312.1" stroke="#5a4a3a" stroke-width="1.1"/><path d="M227.5 267.6L230.3 269.9" stroke="#9c7458" stroke-width="1.1"/><path d="M161.3 258.9L162.4 260.4" stroke="#caa882" stroke-width="1.1"/><path d="M175.3 271.3L174.3 273.8" stroke="#caa882" stroke-width="1.1"/><path d="M183.2 312.2L179.8 313.2" stroke="#a88a6c" stroke-width="1.1"/><path d="M128.3 266.5L126.4 269.4" stroke="#caa882" stroke-width="1.1"/><path d="M189.5 300.8L191.2 302.0" stroke="#caa882" stroke-width="1.1"/><path d="M209.4 294.3L208.5 296.8" stroke="#9c7458" stroke-width="1.1"/><path d="M220.1 271.6L221.1 275.2" stroke="#a88a6c" stroke-width="1.1"/><path d="M154.1 310.5L155.3 313.0" stroke="#a88a6c" stroke-width="1.1"/><path d="M121.0 272.2L118.5 273.3" stroke="#5a4a3a" stroke-width="1.1"/><path d="M210.1 300.4L208.6 302.6" stroke="#a88a6c" stroke-width="1.1"/><path d="M116.7 254.9L113.2 255.6" stroke="#5a4a3a" stroke-width="1.1"/><path d="M140.7 295.1L141.1 298.8" stroke="#8a6a50" stroke-width="1.1"/><path d="M141.1 331.4L141.9 335.3" stroke="#9c7458" stroke-width="1.1"/><path d="M246.1 280.4L249.1 282.8" stroke="#c8a07a" stroke-width="1.1"/><path d="M224.2 311.0L226.9 311.6" stroke="#8a6a50" stroke-width="1.1"/><path d="M178.8 259.3L179.1 262.8" stroke="#9c7458" stroke-width="1.1"/><path d="M226.8 266.1L229.1 268.9" stroke="#5a4a3a" stroke-width="1.1"/><path d="M153.5 325.7L157.4 325.9" stroke="#5a4a3a" stroke-width="1.1"/><path d="M237.9 288.5L237.3 290.9" stroke="#5a4a3a" stroke-width="1.1"/><path d="M225.5 315.8L222.9 318.3" stroke="#6a4a3a" stroke-width="1.1"/><path d="M177.7 281.6L179.7 284.1" stroke="#6a4a3a" stroke-width="1.1"/><path d="M127.3 244.6L128.1 247.4" stroke="#5a4a3a" stroke-width="1.1"/><path d="M131.4 248.4L135.0 248.5" stroke="#8a6a50" stroke-width="1.1"/><path d="M162.7 316.0L164.7 317.2" stroke="#8a6a50" stroke-width="1.1"/><path d="M188.2 317.3L185.2 319.1" stroke="#a88a6c" stroke-width="1.1"/><path d="M203.8 301.6L204.7 304.2" stroke="#a88a6c" stroke-width="1.1"/><path d="M125.9 298.1L128.5 299.2" stroke="#c8a07a" stroke-width="1.1"/><path d="M200.7 308.8L198.1 310.9" stroke="#7e5844" stroke-width="1.1"/><path d="M149.3 312.0L147.0 313.0" stroke="#6a4a3a" stroke-width="1.1"/><path d="M216.8 313.5L218.2 316.0" stroke="#c8a07a" stroke-width="1.1"/><path d="M198.4 281.2L198.9 283.7" stroke="#5a4a3a" stroke-width="1.1"/><path d="M165.7 331.7L162.3 333.6" stroke="#caa882" stroke-width="1.1"/><path d="M155.0 280.8L157.1 281.0" stroke="#6a4a3a" stroke-width="1.1"/><path d="M126.8 283.4L127.5 286.3" stroke="#a88a6c" stroke-width="1.1"/><path d="M245.6 291.8L244.0 293.7" stroke="#7e5844" stroke-width="1.1"/><path d="M103.3 204.2L103.4 207.8" stroke="#a88a6c" stroke-width="1.1"/><path d="M172.4 244.5L170.7 248.1" stroke="#caa882" stroke-width="1.1"/><path d="M121.2 233.9L120.8 236.8" stroke="#6a4a3a" stroke-width="1.1"/><path d="M223.0 323.0L222.1 326.0" stroke="#9c7458" stroke-width="1.1"/><path d="M242.0 260.7L243.1 262.5" stroke="#8a6a50" stroke-width="1.1"/><path d="M2.1 240.5L5.3 242.5" stroke="#caa882" stroke-width="1"/><path d="M22.9 214.4L21.7 218.4" stroke="#7e5844" stroke-width="1"/><path d="M18.2 215.8L15.4 216.7" stroke="#b08466" stroke-width="1"/><path d="M27.4 198.9L29.7 202.4" stroke="#b08466" stroke-width="1"/><path d="M7.4 225.7L4.1 226.7" stroke="#6a4a3a" stroke-width="1"/><path d="M28.2 209.1L25.6 209.2" stroke="#9c7458" stroke-width="1"/><path d="M13.6 223.7L16.3 226.7" stroke="#6a4a3a" stroke-width="1"/><path d="M32.7 201.3L33.8 203.4" stroke="#caa882" stroke-width="1"/><path d="M23.3 209.0L25.7 211.5" stroke="#c8a07a" stroke-width="1"/><path d="M35.5 194.9L31.5 195.8" stroke="#8a6a50" stroke-width="1"/><path d="M3.5 235.2L5.6 238.2" stroke="#6a4a3a" stroke-width="1"/><path d="M31.2 204.1L29.3 207.1" stroke="#caa882" stroke-width="1"/><path d="M35.9 204.4L40.2 205.8" stroke="#6a4a3a" stroke-width="1"/><path d="M8.1 237.6L9.2 241.3" stroke="#5a4a3a" stroke-width="1"/><path d="M15.0 232.1L13.5 233.9" stroke="#b08466" stroke-width="1"/><path d="M22.0 208.6L26.4 209.6" stroke="#caa882" stroke-width="1"/><path d="M43.2 201.4L45.1 204.6" stroke="#8a6a50" stroke-width="1"/><path d="M16.7 216.5L16.0 221.3" stroke="#8a6a50" stroke-width="1"/><path d="M30.9 196.0L32.6 200.5" stroke="#c8a07a" stroke-width="1"/><path d="M33.5 200.3L37.3 201.8" stroke="#b08466" stroke-width="1"/><path d="M28.6 199.3L26.8 201.1" stroke="#8a6a50" stroke-width="1"/><path d="M18.6 207.2L19.9 209.6" stroke="#5a4a3a" stroke-width="1"/><path d="M15.6 229.5L12.8 232.1" stroke="#7e5844" stroke-width="1"/><path d="M32.7 205.0L29.6 206.4" stroke="#6a4a3a" stroke-width="1"/><path d="M37.5 194.7L33.6 195.5" stroke="#c8a07a" stroke-width="1"/><path d="M36.7 200.7L39.0 202.3" stroke="#caa882" stroke-width="1"/><path d="M4.4 224.3L1.5 224.7" stroke="#b08466" stroke-width="1"/><path d="M30.9 205.6L31.0 209.0" stroke="#7e5844" stroke-width="1"/><path d="M0.7 239.4L3.4 243.4" stroke="#caa882" stroke-width="1"/><path d="M40.6 195.4L43.2 195.7" stroke="#8a6a50" stroke-width="1"/><path d="M27.3 212.2L29.7 212.7" stroke="#caa882" stroke-width="1"/><path d="M32.9 206.4L31.9 210.5" stroke="#b08466" stroke-width="1"/><path d="M34.0 204.7L31.6 204.8" stroke="#8a6a50" stroke-width="1"/><path d="M33.6 209.2L29.8 211.1" stroke="#6a4a3a" stroke-width="1"/><path d="M5.3 238.0L8.6 238.6" stroke="#caa882" stroke-width="1"/><path d="M20.3 210.8L22.0 215.2" stroke="#b08466" stroke-width="1"/><path d="M1.4 226.1L4.9 227.6" stroke="#8a6a50" stroke-width="1"/><path d="M20.5 214.5L24.0 215.0" stroke="#8a6a50" stroke-width="1"/><path d="M16.3 227.4L12.6 229.2" stroke="#7e5844" stroke-width="1"/><path d="M31.5 196.9L34.2 198.0" stroke="#9c7458" stroke-width="1"/><path d="M18.3 211.7L22.5 213.8" stroke="#caa882" stroke-width="1"/><path d="M13.3 228.2L8.3 229.5" stroke="#9c7458" stroke-width="1"/><path d="M0.2 242.8L0.8 246.1" stroke="#b08466" stroke-width="1"/><path d="M21.8 221.9L20.3 225.8" stroke="#9c7458" stroke-width="1"/><path d="M40.9 202.6L38.9 204.1" stroke="#a88a6c" stroke-width="1"/><path d="M28.6 214.7L26.7 216.1" stroke="#5a4a3a" stroke-width="1"/><path d="M36.0 195.0L35.2 197.3" stroke="#8a6a50" stroke-width="1"/><path d="M22.7 203.7L24.2 206.3" stroke="#9c7458" stroke-width="1"/><path d="M1.2 234.0L3.1 234.9" stroke="#7e5844" stroke-width="1"/><path d="M19.7 216.5L22.4 217.2" stroke="#8a6a50" stroke-width="1"/><path d="M43.6 200.2L44.3 202.4" stroke="#a88a6c" stroke-width="1"/><path d="M35.1 196.5L33.5 198.4" stroke="#7e5844" stroke-width="1"/><path d="M39.2 199.4L43.8 201.3" stroke="#b08466" stroke-width="1"/><path d="M13.3 235.5L10.8 236.3" stroke="#caa882" stroke-width="1"/><path d="M12.0 226.2L12.8 230.6" stroke="#9c7458" stroke-width="1"/><path d="M28.9 200.5L24.7 203.3" stroke="#a88a6c" stroke-width="1"/><path d="M15.6 213.5L20.7 213.6" stroke="#a88a6c" stroke-width="1"/><path d="M12.4 230.9L15.2 235.0" stroke="#c8a07a" stroke-width="1"/><path d="M1.9 237.5L5.1 240.6" stroke="#6a4a3a" stroke-width="1"/><path d="M36.1 208.4L39.1 208.6" stroke="#b08466" stroke-width="1"/><path d="M4.6 230.8L4.9 235.1" stroke="#7e5844" stroke-width="1"/><path d="M8.2 218.1L13.0 219.2" stroke="#5a4a3a" stroke-width="1"/><path d="M18.4 210.6L20.2 214.3" stroke="#5a4a3a" stroke-width="1"/><path d="M39.8 198.7L43.1 201.5" stroke="#caa882" stroke-width="1"/><path d="M34.1 203.2L38.7 204.6" stroke="#6a4a3a" stroke-width="1"/><path d="M-0.3 234.4L1.3 236.1" stroke="#5a4a3a" stroke-width="1"/><path d="M3.5 237.3L1.9 240.2" stroke="#7e5844" stroke-width="1"/><path d="M13.0 232.7L16.2 234.5" stroke="#caa882" stroke-width="1"/><path d="M24.7 210.7L20.6 211.8" stroke="#caa882" stroke-width="1"/><path d="M9.3 220.8L14.0 222.3" stroke="#7e5844" stroke-width="1"/><path d="M35.9 214.0L33.2 215.9" stroke="#6a4a3a" stroke-width="1"/><path d="M3.6 229.9L3.7 232.6" stroke="#6a4a3a" stroke-width="1"/><path d="M8.3 225.0L8.8 229.0" stroke="#7e5844" stroke-width="1"/><path d="M28.7 209.4L24.6 211.5" stroke="#caa882" stroke-width="1"/><path d="M16.5 222.8L18.2 226.1" stroke="#9c7458" stroke-width="1"/><path d="M22.2 213.4L18.3 215.3" stroke="#b08466" stroke-width="1"/><path d="M27.4 202.5L23.2 202.8" stroke="#b08466" stroke-width="1"/><path d="M18.4 220.6L19.2 222.8" stroke="#b08466" stroke-width="1"/><path d="M27.8 217.6L27.5 220.7" stroke="#8a6a50" stroke-width="1"/><path d="M33.3 209.1L34.1 211.6" stroke="#7e5844" stroke-width="1"/><path d="M4.0 221.8L4.0 224.3" stroke="#7e5844" stroke-width="1"/><path d="M16.1 226.7L18.1 229.2" stroke="#b08466" stroke-width="1"/><path d="M11.3 234.3L8.3 238.3" stroke="#7e5844" stroke-width="1"/><path d="M30.5 206.1L28.5 209.2" stroke="#b08466" stroke-width="1"/><path d="M10.4 219.3L14.8 220.8" stroke="#7e5844" stroke-width="1"/><path d="M23.3 210.7L21.1 214.0" stroke="#8a6a50" stroke-width="1"/><path d="M13.4 229.5L17.6 231.5" stroke="#b08466" stroke-width="1"/><path d="M16.2 209.1L16.7 212.9" stroke="#9c7458" stroke-width="1"/><path d="M41.0 204.2L42.8 207.5" stroke="#caa882" stroke-width="1"/><path d="M27.1 208.4L27.5 210.6" stroke="#c8a07a" stroke-width="1"/><circle cx="223.4" cy="155.6" r="0.5" fill="#a88a8c"/><circle cx="126.5" cy="190.3" r="0.9" fill="#8e7a82"/><circle cx="216.6" cy="246.7" r="0.6" fill="#b09088"/><circle cx="141.3" cy="162.1" r="1.0" fill="#9a7e7a"/><circle cx="114.0" cy="177.1" r="1.3" fill="#b09088"/><circle cx="160.6" cy="171.7" r="1.2" fill="#8e7a82"/><circle cx="107.1" cy="205.1" r="0.7" fill="#9a7e7a"/><circle cx="201.5" cy="253.6" r="0.5" fill="#8e7a82"/><circle cx="219.1" cy="232.9" r="0.8" fill="#8e7a82"/><circle cx="176.8" cy="262.9" r="1.2" fill="#8e7a82"/><circle cx="195.8" cy="233.3" r="0.7" fill="#9a7e7a"/><circle cx="107.1" cy="224.9" r="0.6" fill="#b09088"/><circle cx="110.3" cy="206.1" r="1.1" fill="#a88a8c"/><circle cx="109.1" cy="165.7" r="0.8" fill="#b09088"/><circle cx="152.6" cy="223.9" r="1.3" fill="#a88a8c"/><circle cx="148.5" cy="243.0" r="1.0" fill="#b09088"/><circle cx="127.7" cy="143.1" r="0.5" fill="#b09088"/><circle cx="131.5" cy="247.2" r="0.9" fill="#8e7a82"/><circle cx="188.9" cy="247.4" r="0.8" fill="#9a7e7a"/><circle cx="165.4" cy="251.4" r="0.7" fill="#b09088"/><circle cx="173.4" cy="264.8" r="1.1" fill="#8e7a82"/><circle cx="228.5" cy="159.7" r="1.2" fill="#9a7e7a"/><circle cx="137.0" cy="261.0" r="1.3" fill="#8e7a82"/><circle cx="234.4" cy="201.2" r="1.0" fill="#a88a8c"/><circle cx="122.3" cy="200.1" r="1.1" fill="#8e7a82"/><circle cx="130.2" cy="245.6" r="0.7" fill="#8e7a82"/><circle cx="245.4" cy="219.0" r="0.9" fill="#b09088"/><circle cx="103.7" cy="236.2" r="1.2" fill="#8e7a82"/><circle cx="207.6" cy="215.3" r="1.2" fill="#9a7e7a"/><circle cx="152.4" cy="198.7" r="0.8" fill="#8e7a82"/><circle cx="204.0" cy="258.8" r="0.7" fill="#b09088"/><circle cx="128.4" cy="195.6" r="0.8" fill="#a88a8c"/><circle cx="212.7" cy="178.1" r="0.9" fill="#a88a8c"/><circle cx="143.4" cy="238.8" r="0.6" fill="#a88a8c"/><circle cx="236.2" cy="203.0" r="0.6" fill="#9a7e7a"/><circle cx="204.6" cy="253.5" r="0.8" fill="#a88a8c"/><circle cx="208.0" cy="242.6" r="1.0" fill="#b09088"/><circle cx="111.8" cy="213.2" r="0.6" fill="#8e7a82"/><circle cx="227.2" cy="217.3" r="0.9" fill="#a88a8c"/><circle cx="144.0" cy="189.0" r="0.9" fill="#b09088"/><circle cx="202.6" cy="181.0" r="0.9" fill="#a88a8c"/><circle cx="137.5" cy="187.7" r="1.0" fill="#b09088"/><circle cx="183.9" cy="240.6" r="1.3" fill="#a88a8c"/><circle cx="170.2" cy="154.7" r="1.1" fill="#9a7e7a"/><circle cx="168.3" cy="174.4" r="0.8" fill="#a88a8c"/><circle cx="231.3" cy="252.4" r="1.3" fill="#9a7e7a"/><circle cx="106.1" cy="212.8" r="0.6" fill="#b09088"/><circle cx="206.2" cy="257.1" r="0.6" fill="#8e7a82"/><circle cx="173.6" cy="254.2" r="0.6" fill="#9a7e7a"/><circle cx="239.8" cy="218.3" r="0.7" fill="#b09088"/><circle cx="226.1" cy="260.3" r="1.2" fill="#b09088"/><circle cx="166.7" cy="193.6" r="0.8" fill="#8e7a82"/><circle cx="164.1" cy="238.1" r="1.1" fill="#a88a8c"/><circle cx="171.4" cy="206.5" r="0.9" fill="#9a7e7a"/><circle cx="143.3" cy="217.3" r="1.2" fill="#a88a8c"/><circle cx="198.5" cy="219.9" r="1.1" fill="#b09088"/><circle cx="134.7" cy="220.8" r="1.1" fill="#9a7e7a"/><circle cx="102.5" cy="256.2" r="0.9" fill="#8e7a82"/><circle cx="153.5" cy="219.9" r="0.8" fill="#b09088"/><circle cx="108.6" cy="202.3" r="1.0" fill="#9a7e7a"/><circle cx="149.7" cy="234.5" r="0.7" fill="#b09088"/><circle cx="151.7" cy="180.9" r="1.1" fill="#8e7a82"/><circle cx="108.4" cy="190.5" r="1.3" fill="#b09088"/><circle cx="162.8" cy="231.3" r="0.6" fill="#a88a8c"/><circle cx="144.0" cy="203.0" r="1.3" fill="#b09088"/><circle cx="112.9" cy="250.0" r="0.6" fill="#a88a8c"/><circle cx="166.4" cy="250.4" r="1.2" fill="#9a7e7a"/><circle cx="139.0" cy="250.3" r="0.9" fill="#8e7a82"/><circle cx="237.8" cy="243.0" r="0.5" fill="#b09088"/><circle cx="131.3" cy="246.0" r="0.9" fill="#a88a8c"/><circle cx="158.6" cy="207.1" r="1.2" fill="#b09088"/><circle cx="235.4" cy="202.8" r="0.5" fill="#a88a8c"/><circle cx="129.8" cy="200.5" r="0.5" fill="#9a7e7a"/><circle cx="115.6" cy="206.5" r="0.7" fill="#b09088"/><circle cx="206.0" cy="225.7" r="0.9" fill="#a88a8c"/><g transform="translate(9 309) rotate(-20)"><text x="0" y="0" font-family="Liberation Sans" font-weight="bold" font-size="17" fill="#5e4a52" stroke="#5e4a52" stroke-width=".6" transform="scale(.95 1)">ИСС<tspan fill="#2e2228" stroke="#2e2228">О</tspan>П</text><text x="0" y="-16" font-family="Liberation Sans" font-size="5.5" fill="#a08890">ecoherb</text></g><g><circle cx="23.4" cy="321.4" r="4.8" fill="#9a7cc2"/><circle cx="38.7" cy="315.2" r="4.8" fill="#8d80c8"/><circle cx="53.9" cy="306.8" r="4.8" fill="#5458b0"/><circle cx="69.2" cy="299.9" r="4.8" fill="#7c62b4"/><path d="M53 332L80 322" stroke="#7656ae" stroke-width="3.5"/></g><path d="M21 330L29 327M37 324L45 321M51 315L59 312M67 308L75 305" stroke="#c8b0c0" stroke-width="1"/><path d="M84 311L127 296" stroke="#5a1a26" stroke-width="8.5" stroke-linecap="round"/><path d="M90 311L104 306M92 315L108 309" stroke="#e0c8d0" stroke-width=".9"/><path d="M94 257L90 275L86 290L84 304M94 257L100 262L108 270L116 283M91 270L82 266" fill="none" stroke="#4a2a38" stroke-width="1.1"/><path d="M62 255L87 275" stroke="#7a5a8a" stroke-width="5" stroke-linecap="round" opacity=".85"/><path d="M64 254L68 260M70 259L74 264M76 263L80 268M82 267L86 272" stroke="#5a3a6a" stroke-width="1.5"/><path d="M94 276L97 304M99 274L102 302M92 284L104 280M93 292L105 289M95 299L104 296" stroke="#5e8a58" stroke-width="1.2" opacity=".9"/></svg>
<div class="t" style="left:16px;top:11px;font-size:21px;font-weight:bold;font-style:italic;color:#3a2838;-webkit-text-stroke:.7px #3a2838;transform:scaleX(.835);transform-origin:0 0">РЕКОМЕНДАЦИИ ПО</div>
<div class="t" style="left:25px;top:37.5px;font-size:21px;font-weight:bold;font-style:italic;color:#3a2838;-webkit-text-stroke:.7px #3a2838;transform:scaleX(.81);transform-origin:0 0">ПРИГОТОВЛЕНИЮ:</div>
<div class="a" style="left:53px;top:77px;width:70px;height:57px;border-radius:3px;background:#5e2b46;overflow:hidden">
<div class="a" style="left:41px;top:0;width:15px;height:57px;background:#3f3a52"></div>
<svg style="left:0;top:0" width="70" height="57"><path d="M24.0 18.5C29.0 19 35.0 21 39.0 24" stroke="#e6d8e0" stroke-width="2" fill="none"/><path d="M38.0 24L42.0 20L45.0 24L42.0 28Z" stroke="#e6d8e0" fill="none" stroke-width="1"/><path d="M41.0 29V31" stroke="#e6d8e0" fill="none" stroke-width="1"/></svg>
<div class="t" style="left:35.0px;top:37px;text-align:center;font-size:7px;line-height:7.5px;color:#eadde5;transform:translateX(-50%) scaleX(.86)">Положите листья в<br>чайник</div>
</div>
<div class="a" style="left:78.5px;top:67.5px;width:19px;height:19px;border-radius:50%;background:#e3157b"></div>
<div class="t" style="left:85.5px;top:73px;font-size:8.5px;font-weight:bold;color:#fff">1</div>
<div class="a" style="left:135px;top:89px;width:71px;height:57px;border-radius:3px;background:#5e2b46;overflow:hidden">
<div class="a" style="left:14px;top:0;width:15px;height:57px;background:#3f3a52"></div>
<div class="a" style="left:69px;top:0;width:15px;height:57px;background:#3f3a52"></div>
<svg style="left:0;top:0" width="71" height="57"><circle cx="36.5" cy="24" r="6" stroke="#e6d8e0" fill="none" stroke-width="1"/><path d="M30.5 24H27.5V18M42.5 24H44.5" stroke="#e6d8e0" fill="none" stroke-width="1"/><ellipse cx="36.5" cy="24.5" rx="3" ry="2" stroke="#e6d8e0" fill="none" stroke-width="1"/><path d="M26.5 16V22" stroke="#e6d8e0" stroke-width="1.6"/></svg>
<div class="t" style="left:35.5px;top:37px;text-align:center;font-size:7px;line-height:7.5px;color:#eadde5;transform:translateX(-50%) scaleX(.86)">Залить 200 мл<br>кипятка</div>
</div>
<div class="a" style="left:161.0px;top:79.5px;width:19px;height:19px;border-radius:50%;background:#e3157b"></div>
<div class="t" style="left:168.0px;top:85px;font-size:8.5px;font-weight:bold;color:#fff">2</div>
<div class="a" style="left:34px;top:167px;width:71px;height:57px;border-radius:3px;background:#5e2b46;overflow:hidden">
<div class="a" style="left:4px;top:0;width:15px;height:57px;background:#3f3a52"></div>
<div class="a" style="left:60px;top:0;width:15px;height:57px;background:#3f3a52"></div>
<svg style="left:0;top:0" width="71" height="57"><rect x="30.5" y="15" width="4" height="15" rx="2" stroke="#e6d8e0" fill="none" stroke-width="1"/><circle cx="32.5" cy="29" r="2.5" stroke="#e6d8e0" fill="none" stroke-width="1"/><path d="M27.5 18H29.5M27.5 21H29.5M27.5 24H29.5" stroke="#e6d8e0" fill="none" stroke-width="1"/><path d="M42.5 19.5C38.5 18 37.5 25 42.5 24.5" stroke="#e6d8e0" stroke-width="1.3" fill="none"/><circle cx="44.5" cy="18" r="1" fill="#e6d8e0"/></svg>
<div class="t" style="left:35.5px;top:37px;text-align:center;font-size:7px;line-height:7.5px;color:#eadde5;transform:translateX(-50%) scaleX(.86)">Рекомендованная<br>температура 90°C</div>
</div>
<div class="a" style="left:60.0px;top:157.5px;width:19px;height:19px;border-radius:50%;background:#e3157b"></div>
<div class="t" style="left:67.0px;top:163px;font-size:8.5px;font-weight:bold;color:#fff">3</div>
<div class="a" style="left:156px;top:158px;width:71px;height:57px;border-radius:3px;background:#5e2b46;overflow:hidden">
<div class="a" style="left:-7px;top:0;width:15px;height:57px;background:#3f3a52"></div>
<div class="a" style="left:48px;top:0;width:15px;height:57px;background:#3f3a52"></div>
<svg style="left:0;top:0" width="71" height="57"><circle cx="35.5" cy="24" r="7" stroke="#e6d8e0" fill="none" stroke-width="1"/><path d="M35.5 19.5V24.5" stroke="#e6d8e0" stroke-width="1.4"/><path d="M34.0 15.5H37.0" stroke="#e6d8e0" fill="none" stroke-width="1"/></svg>
<div class="t" style="left:35.5px;top:37px;text-align:center;font-size:7px;line-height:7.5px;color:#eadde5;transform:translateX(-50%) scaleX(.86)">Настоять 10-15 минут<br>пить в течении дня</div>
</div>
<div class="a" style="left:182.0px;top:148.5px;width:19px;height:19px;border-radius:50%;background:#e3157b"></div>
<div class="t" style="left:189.0px;top:154px;font-size:8.5px;font-weight:bold;color:#fff">4</div>
</div>
<div class="a" style="left:492px;top:583px;width:257px;height:337px;border:2px solid #dd3f62;border-radius:6px"></div>
<div class="a" style="left:587.5px;top:886px;width:66px;height:66px;border-radius:50%;background:#e13a5d"></div>
<svg style="left:603.5px;top:902px" width="34" height="34"><path d="M3 3L31 31M31 3L3 31" stroke="#fff" stroke-width="5.5" stroke-linecap="round"/></svg>
<div class="a" style="left:809px;top:584px;width:255px;height:335px;border-radius:5px;overflow:hidden;background:linear-gradient(90deg,#f4c4d0 0%,#f0bdcb 50%,#eab5c6 100%)">
<div class="a" style="left:0px;top:0;width:39px;height:335px;background:#f5c7d2"></div>
<div class="a" style="left:54px;top:0;width:40px;height:335px;background:#f1c0cc"></div>
<div class="a" style="left:109px;top:0;width:40px;height:335px;background:#eebbca"></div>
<div class="a" style="left:164px;top:0;width:41px;height:335px;background:#e9b3c5"></div>
<div class="a" style="left:220px;top:0;width:35px;height:335px;background:#e5aec2"></div>
<div class="a" style="left:39px;top:0;width:15px;height:335px;background:linear-gradient(90deg,#efe4ec,#f8f3f6 45%,#efe4ec)"></div>
<div class="a" style="left:94px;top:0;width:15px;height:335px;background:linear-gradient(90deg,#f0e6ee,#faf5f8 45%,#f0e6ee)"></div>
<div class="a" style="left:149px;top:0;width:15px;height:335px;background:linear-gradient(90deg,#e8dee8,#f2ecf2 45%,#e8dee8)"></div>
<div class="a" style="left:205px;top:0;width:15px;height:335px;background:linear-gradient(90deg,#d8cedc,#e6e0ea 45%,#d8cedc)"></div>
<svg style="left:0;top:0" width="255" height="335"><defs><filter id="bl2"><feGaussianBlur stdDeviation="4"/></filter><filter id="bs2"><feGaussianBlur stdDeviation="1.2"/></filter></defs><path d="M0 238L104 214L134 300L142 335H0Z" fill="#f4d2da"/><rect x="39" y="215" width="15" height="120" fill="#f8eef2" opacity=".55"/><rect x="94" y="215" width="15" height="120" fill="#f8eef2" opacity=".55"/><path d="M100 211L122 209L152 262L170 238L210 242L255 245V335H142L134 300L104 214Z" fill="#a88060" opacity=".6" filter="url(#bl2)"/><path d="M103 214L121 212L150 270L185 268L255 268V335H142L133 300Z" fill="#9e7656" opacity=".8" filter="url(#bl2)"/><path d="M0 226L30 198L40 202L12 240L0 246Z" fill="#b08a6a" opacity=".8" filter="url(#bs2)"/><path d="M0 312L8 316L14 335H0Z" fill="#a07a62" opacity=".75" filter="url(#bs2)"/><path d="M149 265H164V335H149Z" fill="#8f9a70" opacity=".6" filter="url(#bs2)"/><path d="M205 225H220V335H205Z" fill="#c0c8a8" opacity=".45" filter="url(#bs2)"/><path d="M205 280H220V335H205Z" fill="#86946a" opacity=".5" filter="url(#bs2)"/><path d="M246.4 327.2L249.9 328.2" stroke="#6a4a3a" stroke-width="1.1"/><path d="M207.1 333.9L204.1 336.0" stroke="#5a4a3a" stroke-width="1.1"/><path d="M246.6 270.6L247.7 271.8" stroke="#9c7458" stroke-width="1.1"/><path d="M156.0 323.7L156.9 327.3" stroke="#c8a07a" stroke-width="1.1"/><path d="M256.5 288.8L253.1 290.0" stroke="#5a4a3a" stroke-width="1.1"/><path d="M239.6 300.0L241.4 303.6" stroke="#8a6a50" stroke-width="1.1"/><path d="M172.9 268.9L170.2 269.6" stroke="#a88a6c" stroke-width="1.1"/><path d="M154.2 295.0L154.6 298.2" stroke="#a88a6c" stroke-width="1.1"/><path d="M226.9 310.3L225.7 313.5" stroke="#8a6a50" stroke-width="1.1"/><path d="M148.0 327.6L148.0 330.5" stroke="#caa882" stroke-width="1.1"/><path d="M246.2 281.4L243.4 283.2" stroke="#b08466" stroke-width="1.1"/><path d="M240.8 299.3L243.2 301.9" stroke="#9c7458" stroke-width="1.1"/><path d="M165.1 294.5L166.0 296.3" stroke="#9c7458" stroke-width="1.1"/><path d="M208.2 248.9L206.2 249.0" stroke="#9c7458" stroke-width="1.1"/><path d="M146.7 272.1L148.9 272.4" stroke="#caa882" stroke-width="1.1"/><path d="M232.5 292.7L234.9 294.8" stroke="#a88a6c" stroke-width="1.1"/><path d="M246.9 266.4L247.0 268.8" stroke="#a88a6c" stroke-width="1.1"/><path d="M138.7 279.8L141.6 279.9" stroke="#c8a07a" stroke-width="1.1"/><path d="M128.1 258.0L124.9 258.9" stroke="#9c7458" stroke-width="1.1"/><path d="M140.2 276.8L137.5 278.7" stroke="#6a4a3a" stroke-width="1.1"/><path d="M123.5 248.0L123.4 249.8" stroke="#7e5844" stroke-width="1.1"/><path d="M114.4 219.5L116.6 221.3" stroke="#8a6a50" stroke-width="1.1"/><path d="M171.3 268.5L169.4 271.4" stroke="#b08466" stroke-width="1.1"/><path d="M213.2 254.9L212.8 256.6" stroke="#caa882" stroke-width="1.1"/><path d="M244.7 275.2L243.3 277.6" stroke="#9c7458" stroke-width="1.1"/><path d="M179.3 322.4L181.7 325.6" stroke="#a88a6c" stroke-width="1.1"/><path d="M146.8 317.1L148.8 317.7" stroke="#9c7458" stroke-width="1.1"/><path d="M171.0 319.5L172.6 319.5" stroke="#6a4a3a" stroke-width="1.1"/><path d="M129.6 273.3L130.0 276.7" stroke="#caa882" stroke-width="1.1"/><path d="M144.5 328.1L145.6 330.6" stroke="#8a6a50" stroke-width="1.1"/><path d="M211.5 295.3L211.6 298.5" stroke="#caa882" stroke-width="1.1"/><path d="M135.5 261.9L136.3 265.0" stroke="#7e5844" stroke-width="1.1"/><path d="M189.9 307.7L191.7 311.3" stroke="#c8a07a" stroke-width="1.1"/><path d="M226.5 320.3L223.4 321.2" stroke="#9c7458" stroke-width="1.1"/><path d="M120.7 235.1L119.1 237.9" stroke="#8a6a50" stroke-width="1.1"/><path d="M128.7 235.1L124.8 235.3" stroke="#caa882" stroke-width="1.1"/><path d="M140.6 319.3L139.1 321.3" stroke="#a88a6c" stroke-width="1.1"/><path d="M221.2 274.5L221.5 276.1" stroke="#caa882" stroke-width="1.1"/><path d="M246.4 293.6L244.0 293.9" stroke="#7e5844" stroke-width="1.1"/><path d="M218.5 313.1L217.6 315.5" stroke="#caa882" stroke-width="1.1"/><path d="M251.3 282.2L251.7 285.5" stroke="#8a6a50" stroke-width="1.1"/><path d="M202.4 309.0L199.1 309.5" stroke="#caa882" stroke-width="1.1"/><path d="M241.8 317.9L238.9 319.8" stroke="#b08466" stroke-width="1.1"/><path d="M142.5 322.5L142.6 325.5" stroke="#9c7458" stroke-width="1.1"/><path d="M195.2 254.5L194.6 257.1" stroke="#b08466" stroke-width="1.1"/><path d="M252.1 301.0L249.3 301.8" stroke="#7e5844" stroke-width="1.1"/><path d="M216.4 261.9L217.5 263.9" stroke="#5a4a3a" stroke-width="1.1"/><path d="M170.6 331.7L172.1 334.7" stroke="#caa882" stroke-width="1.1"/><path d="M140.1 281.9L139.0 283.2" stroke="#8a6a50" stroke-width="1.1"/><path d="M157.7 260.0L160.6 260.1" stroke="#9c7458" stroke-width="1.1"/><path d="M156.5 268.5L157.1 272.1" stroke="#6a4a3a" stroke-width="1.1"/><path d="M149.8 284.6L147.0 285.3" stroke="#b08466" stroke-width="1.1"/><path d="M161.9 268.3L159.4 270.2" stroke="#6a4a3a" stroke-width="1.1"/><path d="M203.7 304.5L205.6 306.0" stroke="#a88a6c" stroke-width="1.1"/><path d="M145.0 318.7L145.5 321.8" stroke="#6a4a3a" stroke-width="1.1"/><path d="M128.6 288.4L130.1 291.6" stroke="#b08466" stroke-width="1.1"/><path d="M143.0 271.1L140.2 273.0" stroke="#6a4a3a" stroke-width="1.1"/><path d="M237.3 323.0L235.1 326.2" stroke="#caa882" stroke-width="1.1"/><path d="M217.8 315.3L215.0 318.1" stroke="#6a4a3a" stroke-width="1.1"/><path d="M181.7 283.0L183.2 285.3" stroke="#6a4a3a" stroke-width="1.1"/><path d="M156.6 322.6L154.7 324.4" stroke="#5a4a3a" stroke-width="1.1"/><path d="M149.8 309.2L149.5 311.9" stroke="#c8a07a" stroke-width="1.1"/><path d="M249.3 304.2L251.6 305.3" stroke="#7e5844" stroke-width="1.1"/><path d="M119.7 266.7L121.4 269.7" stroke="#caa882" stroke-width="1.1"/><path d="M176.3 316.1L175.6 317.8" stroke="#5a4a3a" stroke-width="1.1"/><path d="M184.7 332.2L182.3 333.5" stroke="#caa882" stroke-width="1.1"/><path d="M171.3 277.4L168.6 278.1" stroke="#c8a07a" stroke-width="1.1"/><path d="M111.1 237.8L112.9 237.8" stroke="#a88a6c" stroke-width="1.1"/><path d="M171.2 315.0L173.1 315.3" stroke="#9c7458" stroke-width="1.1"/><path d="M119.9 264.2L123.0 266.4" stroke="#5a4a3a" stroke-width="1.1"/><path d="M152.0 268.2L152.6 269.7" stroke="#5a4a3a" stroke-width="1.1"/><path d="M117.0 210.0L119.1 210.3" stroke="#caa882" stroke-width="1.1"/><path d="M153.6 285.4L150.8 286.0" stroke="#c8a07a" stroke-width="1.1"/><path d="M180.2 311.5L178.2 311.8" stroke="#b08466" stroke-width="1.1"/><path d="M145.5 253.7L146.6 257.0" stroke="#7e5844" stroke-width="1.1"/><path d="M188.6 259.9L185.7 262.5" stroke="#b08466" stroke-width="1.1"/><path d="M132.2 249.5L133.7 250.2" stroke="#6a4a3a" stroke-width="1.1"/><path d="M210.3 260.3L207.6 262.7" stroke="#c8a07a" stroke-width="1.1"/><path d="M238.0 258.9L240.8 261.0" stroke="#6a4a3a" stroke-width="1.1"/><path d="M233.2 267.1L230.2 268.1" stroke="#9c7458" stroke-width="1.1"/><path d="M171.2 286.4L169.9 288.2" stroke="#9c7458" stroke-width="1.1"/><path d="M132.8 240.3L133.7 243.0" stroke="#b08466" stroke-width="1.1"/><path d="M235.0 315.6L236.1 318.4" stroke="#b08466" stroke-width="1.1"/><path d="M158.5 281.6L156.1 283.7" stroke="#c8a07a" stroke-width="1.1"/><path d="M153.9 256.3L152.4 257.1" stroke="#c8a07a" stroke-width="1.1"/><path d="M211.2 283.0L212.3 284.3" stroke="#8a6a50" stroke-width="1.1"/><path d="M223.0 321.6L225.3 324.8" stroke="#b08466" stroke-width="1.1"/><path d="M131.9 291.9L131.0 295.1" stroke="#5a4a3a" stroke-width="1.1"/><path d="M162.3 284.4L163.8 286.0" stroke="#caa882" stroke-width="1.1"/><path d="M160.6 329.0L161.9 330.1" stroke="#5a4a3a" stroke-width="1.1"/><path d="M162.3 265.6L162.2 268.5" stroke="#8a6a50" stroke-width="1.1"/><path d="M189.4 293.1L190.7 294.2" stroke="#8a6a50" stroke-width="1.1"/><path d="M146.0 300.1L145.6 303.3" stroke="#c8a07a" stroke-width="1.1"/><path d="M157.9 326.6L154.8 328.7" stroke="#5a4a3a" stroke-width="1.1"/><path d="M168.7 283.5L165.8 283.8" stroke="#9c7458" stroke-width="1.1"/><path d="M195.3 255.4L193.7 256.6" stroke="#9c7458" stroke-width="1.1"/><path d="M235.8 330.4L233.7 330.8" stroke="#7e5844" stroke-width="1.1"/><path d="M109.2 227.6L111.8 227.7" stroke="#5a4a3a" stroke-width="1.1"/><path d="M232.4 274.5L232.0 278.5" stroke="#caa882" stroke-width="1.1"/><path d="M164.7 303.9L167.7 305.3" stroke="#9c7458" stroke-width="1.1"/><path d="M250.7 273.8L251.2 276.4" stroke="#8a6a50" stroke-width="1.1"/><path d="M124.8 277.5L125.5 279.0" stroke="#c8a07a" stroke-width="1.1"/><path d="M250.6 283.4L252.4 285.2" stroke="#8a6a50" stroke-width="1.1"/><path d="M128.5 254.6L129.9 257.3" stroke="#9c7458" stroke-width="1.1"/><path d="M226.2 280.5L228.3 283.5" stroke="#5a4a3a" stroke-width="1.1"/><path d="M173.0 257.2L171.6 260.7" stroke="#b08466" stroke-width="1.1"/><path d="M187.9 269.6L184.5 270.1" stroke="#caa882" stroke-width="1.1"/><path d="M250.1 286.1L250.7 288.7" stroke="#5a4a3a" stroke-width="1.1"/><path d="M169.9 328.4L171.0 331.3" stroke="#a88a6c" stroke-width="1.1"/><path d="M240.2 271.7L243.0 274.2" stroke="#c8a07a" stroke-width="1.1"/><path d="M222.1 319.4L220.8 321.6" stroke="#9c7458" stroke-width="1.1"/><path d="M164.0 298.8L161.8 300.6" stroke="#8a6a50" stroke-width="1.1"/><path d="M161.6 323.4L163.1 323.9" stroke="#9c7458" stroke-width="1.1"/><path d="M161.3 278.1L160.0 279.3" stroke="#b08466" stroke-width="1.1"/><path d="M226.1 295.0L225.5 297.1" stroke="#6a4a3a" stroke-width="1.1"/><path d="M190.7 265.2L191.5 267.8" stroke="#a88a6c" stroke-width="1.1"/><path d="M201.0 288.8L200.3 290.7" stroke="#8a6a50" stroke-width="1.1"/><path d="M194.1 304.7L196.7 306.7" stroke="#9c7458" stroke-width="1.1"/><path d="M197.1 258.1L195.5 259.7" stroke="#9c7458" stroke-width="1.1"/><path d="M189.5 261.0L187.5 261.3" stroke="#8a6a50" stroke-width="1.1"/><path d="M242.4 284.1L239.8 285.3" stroke="#5a4a3a" stroke-width="1.1"/><path d="M185.8 273.2L183.8 273.7" stroke="#6a4a3a" stroke-width="1.1"/><path d="M151.2 303.7L153.5 305.7" stroke="#6a4a3a" stroke-width="1.1"/><path d="M223.0 284.4L226.4 286.2" stroke="#9c7458" stroke-width="1.1"/><path d="M247.2 294.9L249.6 296.0" stroke="#b08466" stroke-width="1.1"/><path d="M147.6 300.7L148.6 302.4" stroke="#7e5844" stroke-width="1.1"/><path d="M234.8 299.0L232.1 301.9" stroke="#a88a6c" stroke-width="1.1"/><path d="M198.5 328.6L195.3 330.7" stroke="#a88a6c" stroke-width="1.1"/><path d="M239.2 293.7L236.7 295.8" stroke="#5a4a3a" stroke-width="1.1"/><path d="M214.4 299.3L210.7 299.4" stroke="#caa882" stroke-width="1.1"/><path d="M133.9 285.8L131.2 286.0" stroke="#8a6a50" stroke-width="1.1"/><path d="M248.9 285.9L247.5 288.0" stroke="#caa882" stroke-width="1.1"/><path d="M219.3 296.7L218.1 299.8" stroke="#7e5844" stroke-width="1.1"/><path d="M128.4 286.5L126.6 288.8" stroke="#a88a6c" stroke-width="1.1"/><path d="M120.7 227.1L119.3 229.4" stroke="#a88a6c" stroke-width="1.1"/><path d="M136.3 241.5L135.6 244.9" stroke="#6a4a3a" stroke-width="1.1"/><path d="M108.0 217.0L105.5 219.9" stroke="#caa882" stroke-width="1.1"/><path d="M205.1 311.7L208.6 311.8" stroke="#caa882" stroke-width="1.1"/><path d="M228.5 312.9L225.3 314.4" stroke="#b08466" stroke-width="1.1"/><path d="M249.9 326.2L249.3 328.9" stroke="#caa882" stroke-width="1.1"/><path d="M219.7 332.3L217.9 333.6" stroke="#8a6a50" stroke-width="1.1"/><path d="M180.9 275.3L182.5 275.6" stroke="#caa882" stroke-width="1.1"/><path d="M238.6 258.7L236.2 260.1" stroke="#8a6a50" stroke-width="1.1"/><path d="M130.7 249.1L128.5 250.1" stroke="#8a6a50" stroke-width="1.1"/><path d="M122.5 266.3L121.4 268.1" stroke="#5a4a3a" stroke-width="1.1"/><path d="M214.1 305.5L211.2 306.1" stroke="#b08466" stroke-width="1.1"/><path d="M162.8 321.8L161.2 323.1" stroke="#a88a6c" stroke-width="1.1"/><path d="M244.3 297.4L246.7 297.7" stroke="#8a6a50" stroke-width="1.1"/><path d="M167.7 289.4L170.1 289.7" stroke="#caa882" stroke-width="1.1"/><path d="M133.3 288.9L133.0 291.5" stroke="#a88a6c" stroke-width="1.1"/><path d="M212.5 313.3L210.9 313.9" stroke="#9c7458" stroke-width="1.1"/><path d="M159.3 321.1L160.7 322.0" stroke="#b08466" stroke-width="1.1"/><path d="M237.5 320.7L237.2 322.3" stroke="#6a4a3a" stroke-width="1.1"/><path d="M195.8 308.4L197.7 309.2" stroke="#b08466" stroke-width="1.1"/><path d="M142.9 291.2L144.4 292.4" stroke="#b08466" stroke-width="1.1"/><path d="M131.1 247.9L134.1 250.5" stroke="#6a4a3a" stroke-width="1.1"/><path d="M248.4 334.2L249.5 335.7" stroke="#8a6a50" stroke-width="1.1"/><path d="M145.0 320.2L143.9 323.8" stroke="#7e5844" stroke-width="1.1"/><path d="M242.1 283.6L244.0 284.1" stroke="#9c7458" stroke-width="1.1"/><path d="M124.1 220.5L122.9 222.8" stroke="#b08466" stroke-width="1.1"/><path d="M115.4 242.0L117.0 243.5" stroke="#a88a6c" stroke-width="1.1"/><path d="M242.2 297.2L244.3 297.2" stroke="#9c7458" stroke-width="1.1"/><path d="M220.9 325.0L223.8 327.2" stroke="#9c7458" stroke-width="1.1"/><path d="M136.9 320.2L133.3 321.2" stroke="#7e5844" stroke-width="1.1"/><path d="M218.8 306.6L220.8 309.3" stroke="#7e5844" stroke-width="1.1"/><path d="M203.4 321.0L203.7 322.6" stroke="#9c7458" stroke-width="1.1"/><path d="M230.0 330.0L230.9 331.5" stroke="#6a4a3a" stroke-width="1.1"/><path d="M222.2 331.5L220.4 331.7" stroke="#6a4a3a" stroke-width="1.1"/><path d="M232.7 332.3L231.4 335.7" stroke="#caa882" stroke-width="1.1"/><path d="M233.7 294.9L236.4 295.2" stroke="#b08466" stroke-width="1.1"/><path d="M180.7 250.1L182.8 252.8" stroke="#caa882" stroke-width="1.1"/><path d="M253.8 300.1L252.1 301.1" stroke="#b08466" stroke-width="1.1"/><path d="M235.5 299.3L234.0 301.3" stroke="#caa882" stroke-width="1.1"/><path d="M185.1 312.0L181.9 312.0" stroke="#caa882" stroke-width="1.1"/><path d="M253.7 279.3L254.2 281.4" stroke="#b08466" stroke-width="1.1"/><path d="M227.0 290.0L225.1 291.9" stroke="#9c7458" stroke-width="1.1"/><path d="M199.5 268.8L202.0 269.7" stroke="#c8a07a" stroke-width="1.1"/><path d="M209.4 314.1L212.7 314.4" stroke="#9c7458" stroke-width="1.1"/><path d="M194.1 278.3L195.4 282.0" stroke="#c8a07a" stroke-width="1.1"/><path d="M112.1 229.7L108.8 230.2" stroke="#9c7458" stroke-width="1.1"/><path d="M237.0 313.9L239.4 314.3" stroke="#9c7458" stroke-width="1.1"/><path d="M220.7 261.8L218.9 264.2" stroke="#caa882" stroke-width="1.1"/><path d="M108.9 217.4L112.3 218.5" stroke="#6a4a3a" stroke-width="1.1"/><path d="M152.9 294.2L153.2 297.7" stroke="#a88a6c" stroke-width="1.1"/><path d="M185.8 279.6L184.9 282.4" stroke="#7e5844" stroke-width="1.1"/><path d="M164.3 254.2L162.2 255.1" stroke="#9c7458" stroke-width="1.1"/><path d="M185.6 301.8L185.0 304.6" stroke="#5a4a3a" stroke-width="1.1"/><path d="M170.3 308.2L174.0 309.2" stroke="#c8a07a" stroke-width="1.1"/><path d="M117.0 249.4L116.0 250.9" stroke="#caa882" stroke-width="1.1"/><path d="M164.2 281.0L160.3 282.0" stroke="#8a6a50" stroke-width="1.1"/><path d="M198.5 318.8L197.1 319.7" stroke="#6a4a3a" stroke-width="1.1"/><path d="M209.0 309.0L208.9 312.0" stroke="#caa882" stroke-width="1.1"/><path d="M222.7 273.3L220.6 276.3" stroke="#c8a07a" stroke-width="1.1"/><path d="M102.3 208.9L104.5 209.7" stroke="#6a4a3a" stroke-width="1.1"/><path d="M132.8 251.1L129.5 252.6" stroke="#a88a6c" stroke-width="1.1"/><path d="M183.6 307.9L181.4 310.7" stroke="#b08466" stroke-width="1.1"/><path d="M233.1 331.8L234.6 333.5" stroke="#6a4a3a" stroke-width="1.1"/><path d="M148.6 274.4L149.1 276.2" stroke="#c8a07a" stroke-width="1.1"/><path d="M182.9 285.9L182.1 287.6" stroke="#6a4a3a" stroke-width="1.1"/><path d="M176.3 261.4L174.5 262.9" stroke="#c8a07a" stroke-width="1.1"/><path d="M191.4 267.4L193.5 268.3" stroke="#caa882" stroke-width="1.1"/><path d="M207.1 289.6L204.6 291.7" stroke="#5a4a3a" stroke-width="1.1"/><path d="M239.9 272.6L239.3 274.9" stroke="#b08466" stroke-width="1.1"/><path d="M223.3 288.5L225.0 291.0" stroke="#b08466" stroke-width="1.1"/><path d="M206.2 309.7L209.1 309.8" stroke="#9c7458" stroke-width="1.1"/><path d="M127.6 277.0L128.1 278.9" stroke="#9c7458" stroke-width="1.1"/><path d="M206.9 276.3L205.5 277.2" stroke="#c8a07a" stroke-width="1.1"/><path d="M113.3 255.3L116.4 256.2" stroke="#b08466" stroke-width="1.1"/><path d="M165.7 292.7L164.8 294.6" stroke="#c8a07a" stroke-width="1.1"/><path d="M131.6 243.9L128.5 246.0" stroke="#8a6a50" stroke-width="1.1"/><path d="M217.6 265.1L216.2 266.0" stroke="#5a4a3a" stroke-width="1.1"/><path d="M121.5 271.8L124.1 274.0" stroke="#caa882" stroke-width="1.1"/><path d="M144.4 289.6L145.0 292.7" stroke="#8a6a50" stroke-width="1.1"/><path d="M255.9 329.2L254.0 329.4" stroke="#c8a07a" stroke-width="1.1"/><path d="M245.2 290.9L246.5 293.9" stroke="#8a6a50" stroke-width="1.1"/><path d="M243.5 331.5L246.2 332.2" stroke="#8a6a50" stroke-width="1.1"/><path d="M209.7 305.2L206.3 305.5" stroke="#caa882" stroke-width="1.1"/><path d="M148.8 289.0L151.1 291.3" stroke="#5a4a3a" stroke-width="1.1"/><path d="M172.3 303.9L169.7 306.6" stroke="#5a4a3a" stroke-width="1.1"/><path d="M162.9 277.5L162.3 280.9" stroke="#7e5844" stroke-width="1.1"/><path d="M116.6 224.0L118.2 224.6" stroke="#b08466" stroke-width="1.1"/><path d="M152.6 264.8L151.6 266.5" stroke="#9c7458" stroke-width="1.1"/><path d="M137.7 298.3L136.0 298.3" stroke="#5a4a3a" stroke-width="1.1"/><path d="M160.9 293.1L164.5 293.5" stroke="#b08466" stroke-width="1.1"/><path d="M151.5 291.6L151.7 293.3" stroke="#5a4a3a" stroke-width="1.1"/><path d="M145.4 323.3L146.4 324.8" stroke="#9c7458" stroke-width="1.1"/><path d="M231.2 316.9L232.4 318.9" stroke="#9c7458" stroke-width="1.1"/><path d="M120.4 232.1L123.3 232.7" stroke="#b08466" stroke-width="1.1"/><path d="M209.1 303.2L206.4 303.6" stroke="#7e5844" stroke-width="1.1"/><path d="M145.1 333.1L143.4 333.8" stroke="#a88a6c" stroke-width="1.1"/><path d="M180.1 270.7L179.0 272.9" stroke="#8a6a50" stroke-width="1.1"/><path d="M153.8 270.6L155.4 272.1" stroke="#9c7458" stroke-width="1.1"/><path d="M215.5 331.2L216.6 333.3" stroke="#6a4a3a" stroke-width="1.1"/><path d="M227.8 296.3L226.2 297.3" stroke="#caa882" stroke-width="1.1"/><path d="M232.9 309.1L231.7 310.3" stroke="#c8a07a" stroke-width="1.1"/><path d="M214.1 295.5L213.1 297.5" stroke="#5a4a3a" stroke-width="1.1"/><path d="M193.0 310.6L190.6 311.8" stroke="#6a4a3a" stroke-width="1.1"/><path d="M173.9 297.0L176.1 297.3" stroke="#9c7458" stroke-width="1.1"/><path d="M237.8 272.7L238.8 275.3" stroke="#9c7458" stroke-width="1.1"/><path d="M153.1 288.7L154.3 290.0" stroke="#caa882" stroke-width="1.1"/><path d="M235.5 308.9L237.6 310.0" stroke="#6a4a3a" stroke-width="1.1"/><path d="M208.8 276.9L206.5 279.7" stroke="#caa882" stroke-width="1.1"/><path d="M178.3 293.3L177.9 295.5" stroke="#c8a07a" stroke-width="1.1"/><path d="M218.3 332.9L216.2 333.8" stroke="#5a4a3a" stroke-width="1.1"/><path d="M224.6 303.1L222.6 304.2" stroke="#5a4a3a" stroke-width="1.1"/><path d="M236.0 295.9L234.2 297.7" stroke="#9c7458" stroke-width="1.1"/><path d="M215.6 330.7L217.2 332.0" stroke="#8a6a50" stroke-width="1.1"/><path d="M151.5 245.6L150.9 248.7" stroke="#8a6a50" stroke-width="1.1"/><path d="M138.8 298.5L136.2 299.3" stroke="#b08466" stroke-width="1.1"/><path d="M116.7 248.6L117.5 251.0" stroke="#caa882" stroke-width="1.1"/><path d="M241.6 301.7L240.9 303.3" stroke="#7e5844" stroke-width="1.1"/><path d="M139.2 309.7L136.5 311.7" stroke="#a88a6c" stroke-width="1.1"/><path d="M211.5 329.5L208.9 330.1" stroke="#c8a07a" stroke-width="1.1"/><path d="M217.5 275.0L217.5 277.6" stroke="#c8a07a" stroke-width="1.1"/><path d="M166.1 254.3L168.5 255.9" stroke="#caa882" stroke-width="1.1"/><path d="M111.5 212.2L114.8 212.3" stroke="#7e5844" stroke-width="1.1"/><path d="M204.7 303.2L206.0 305.8" stroke="#caa882" stroke-width="1.1"/><path d="M141.1 333.7L144.8 333.9" stroke="#5a4a3a" stroke-width="1.1"/><path d="M131.1 233.9L131.8 236.4" stroke="#caa882" stroke-width="1.1"/><path d="M179.8 271.9L179.5 275.3" stroke="#a88a6c" stroke-width="1.1"/><path d="M250.1 277.7L246.5 279.3" stroke="#7e5844" stroke-width="1.1"/><path d="M119.7 275.8L120.1 277.6" stroke="#7e5844" stroke-width="1.1"/><path d="M248.6 324.7L245.6 326.3" stroke="#6a4a3a" stroke-width="1.1"/><path d="M224.0 294.1L220.9 294.4" stroke="#a88a6c" stroke-width="1.1"/><path d="M155.7 292.4L152.8 293.3" stroke="#caa882" stroke-width="1.1"/><path d="M127.0 256.7L124.6 257.9" stroke="#c8a07a" stroke-width="1.1"/><path d="M212.2 296.4L212.3 298.4" stroke="#6a4a3a" stroke-width="1.1"/><path d="M186.5 320.4L188.3 320.8" stroke="#9c7458" stroke-width="1.1"/><path d="M172.9 292.8L173.8 295.9" stroke="#6a4a3a" stroke-width="1.1"/><path d="M136.0 251.7L137.1 253.8" stroke="#caa882" stroke-width="1.1"/><path d="M255.1 303.1L253.1 304.7" stroke="#8a6a50" stroke-width="1.1"/><path d="M251.2 306.0L249.8 307.7" stroke="#7e5844" stroke-width="1.1"/><path d="M113.3 228.2L116.0 230.9" stroke="#9c7458" stroke-width="1.1"/><path d="M152.9 321.7L154.3 323.4" stroke="#6a4a3a" stroke-width="1.1"/><path d="M234.8 318.4L233.6 322.1" stroke="#8a6a50" stroke-width="1.1"/><path d="M203.9 282.9L205.9 283.5" stroke="#8a6a50" stroke-width="1.1"/><path d="M229.4 332.8L231.3 335.6" stroke="#c8a07a" stroke-width="1.1"/><path d="M159.4 324.7L160.7 327.3" stroke="#caa882" stroke-width="1.1"/><path d="M190.8 322.1L193.0 324.8" stroke="#b08466" stroke-width="1.1"/><path d="M227.7 301.9L227.5 305.1" stroke="#7e5844" stroke-width="1.1"/><path d="M147.4 262.5L145.5 264.3" stroke="#6a4a3a" stroke-width="1.1"/><path d="M245.2 289.5L243.9 291.3" stroke="#8a6a50" stroke-width="1.1"/><path d="M252.4 250.3L255.3 251.2" stroke="#a88a6c" stroke-width="1.1"/><path d="M118.3 267.4L120.4 268.2" stroke="#c8a07a" stroke-width="1.1"/><path d="M159.1 269.7L156.8 270.2" stroke="#7e5844" stroke-width="1.1"/><path d="M138.6 270.7L135.5 272.6" stroke="#5a4a3a" stroke-width="1.1"/><path d="M178.1 305.9L175.8 306.5" stroke="#8a6a50" stroke-width="1.1"/><path d="M218.1 332.5L215.7 334.0" stroke="#b08466" stroke-width="1.1"/><path d="M157.1 285.5L156.5 287.4" stroke="#5a4a3a" stroke-width="1.1"/><path d="M133.6 299.4L132.9 301.9" stroke="#5a4a3a" stroke-width="1.1"/><path d="M215.8 332.9L212.9 335.1" stroke="#c8a07a" stroke-width="1.1"/><path d="M214.0 272.0L213.1 274.2" stroke="#8a6a50" stroke-width="1.1"/><path d="M127.7 291.9L129.2 294.1" stroke="#a88a6c" stroke-width="1.1"/><path d="M235.1 272.2L232.9 274.4" stroke="#a88a6c" stroke-width="1.1"/><path d="M191.8 314.0L189.8 315.6" stroke="#9c7458" stroke-width="1.1"/><path d="M237.5 266.6L235.8 267.8" stroke="#8a6a50" stroke-width="1.1"/><path d="M159.6 277.0L159.2 279.0" stroke="#a88a6c" stroke-width="1.1"/><path d="M211.4 268.7L210.8 270.3" stroke="#9c7458" stroke-width="1.1"/><path d="M216.3 258.0L215.6 260.3" stroke="#a88a6c" stroke-width="1.1"/><path d="M196.5 318.3L194.4 318.8" stroke="#b08466" stroke-width="1.1"/><path d="M226.1 274.2L224.3 275.3" stroke="#caa882" stroke-width="1.1"/><path d="M146.4 258.6L148.1 260.6" stroke="#b08466" stroke-width="1.1"/><path d="M165.2 297.1L168.7 298.5" stroke="#caa882" stroke-width="1.1"/><path d="M135.2 292.5L135.1 294.7" stroke="#8a6a50" stroke-width="1.1"/><path d="M143.5 311.0L141.1 311.6" stroke="#caa882" stroke-width="1.1"/><path d="M169.1 320.0L165.8 322.0" stroke="#8a6a50" stroke-width="1.1"/><path d="M173.3 293.3L174.7 294.6" stroke="#b08466" stroke-width="1.1"/><path d="M174.8 298.0L172.4 300.6" stroke="#5a4a3a" stroke-width="1.1"/><path d="M178.7 333.7L176.5 336.0" stroke="#caa882" stroke-width="1.1"/><path d="M133.0 324.5L134.4 326.9" stroke="#7e5844" stroke-width="1.1"/><path d="M253.0 280.8L253.9 283.0" stroke="#a88a6c" stroke-width="1.1"/><path d="M138.1 269.3L139.8 272.3" stroke="#6a4a3a" stroke-width="1.1"/><path d="M227.1 319.4L228.2 322.2" stroke="#a88a6c" stroke-width="1.1"/><path d="M117.8 205.5L117.3 208.9" stroke="#8a6a50" stroke-width="1.1"/><path d="M240.3 255.5L239.5 257.2" stroke="#8a6a50" stroke-width="1.1"/><path d="M191.5 290.8L192.7 292.4" stroke="#a88a6c" stroke-width="1.1"/><path d="M162.2 314.3L164.6 317.5" stroke="#7e5844" stroke-width="1.1"/><path d="M229.5 263.9L229.7 266.1" stroke="#5a4a3a" stroke-width="1.1"/><path d="M139.7 332.1L138.1 334.5" stroke="#a88a6c" stroke-width="1.1"/><path d="M136.4 325.0L139.5 325.0" stroke="#caa882" stroke-width="1.1"/><path d="M135.2 243.4L133.9 246.2" stroke="#8a6a50" stroke-width="1.1"/><path d="M177.2 325.1L179.1 325.9" stroke="#7e5844" stroke-width="1.1"/><path d="M138.6 305.5L141.6 307.9" stroke="#c8a07a" stroke-width="1.1"/><path d="M203.5 294.5L206.7 295.5" stroke="#8a6a50" stroke-width="1.1"/><path d="M166.8 272.9L170.1 273.1" stroke="#7e5844" stroke-width="1.1"/><path d="M199.7 262.6L197.1 265.3" stroke="#8a6a50" stroke-width="1.1"/><path d="M253.3 279.0L254.9 279.6" stroke="#5a4a3a" stroke-width="1.1"/><path d="M228.0 281.9L226.3 282.8" stroke="#6a4a3a" stroke-width="1.1"/><path d="M209.9 279.5L213.7 279.7" stroke="#6a4a3a" stroke-width="1.1"/><path d="M193.7 264.7L192.7 266.7" stroke="#c8a07a" stroke-width="1.1"/><path d="M204.3 252.1L205.5 253.5" stroke="#6a4a3a" stroke-width="1.1"/><path d="M122.7 215.9L123.1 219.2" stroke="#c8a07a" stroke-width="1.1"/><path d="M190.8 294.4L189.8 297.3" stroke="#caa882" stroke-width="1.1"/><path d="M152.0 245.2L148.6 247.3" stroke="#7e5844" stroke-width="1.1"/><path d="M149.6 322.4L151.1 324.4" stroke="#7e5844" stroke-width="1.1"/><path d="M233.0 300.9L230.8 302.7" stroke="#caa882" stroke-width="1.1"/><path d="M196.7 305.3L194.2 307.1" stroke="#caa882" stroke-width="1.1"/><path d="M233.5 288.8L237.4 288.9" stroke="#8a6a50" stroke-width="1.1"/><path d="M226.4 276.0L227.6 278.6" stroke="#9c7458" stroke-width="1.1"/><path d="M237.7 308.0L240.0 309.0" stroke="#b08466" stroke-width="1.1"/><path d="M219.3 333.7L217.3 336.0" stroke="#7e5844" stroke-width="1.1"/><path d="M189.8 251.1L188.7 253.8" stroke="#6a4a3a" stroke-width="1.1"/><path d="M110.0 242.0L113.1 242.6" stroke="#8a6a50" stroke-width="1.1"/><path d="M125.5 245.1L127.3 245.6" stroke="#c8a07a" stroke-width="1.1"/><path d="M175.7 308.6L175.5 311.4" stroke="#5a4a3a" stroke-width="1.1"/><path d="M181.9 304.0L185.4 305.5" stroke="#b08466" stroke-width="1.1"/><path d="M168.3 278.8L171.1 279.4" stroke="#b08466" stroke-width="1.1"/><path d="M170.6 323.2L168.9 325.5" stroke="#c8a07a" stroke-width="1.1"/><path d="M117.5 210.6L119.0 212.5" stroke="#6a4a3a" stroke-width="1.1"/><path d="M170.0 246.7L172.0 247.7" stroke="#b08466" stroke-width="1.1"/><path d="M176.2 319.1L173.6 319.2" stroke="#6a4a3a" stroke-width="1.1"/><path d="M173.3 295.5L173.7 297.5" stroke="#7e5844" stroke-width="1.1"/><path d="M218.7 326.1L219.4 327.5" stroke="#b08466" stroke-width="1.1"/><path d="M181.7 298.9L179.5 300.6" stroke="#b08466" stroke-width="1.1"/><path d="M150.6 244.5L148.0 245.3" stroke="#a88a6c" stroke-width="1.1"/><path d="M192.8 282.8L189.7 283.8" stroke="#5a4a3a" stroke-width="1.1"/><path d="M232.9 314.6L236.6 315.2" stroke="#6a4a3a" stroke-width="1.1"/><path d="M240.3 295.0L239.5 298.4" stroke="#b08466" stroke-width="1.1"/><path d="M123.6 270.4L123.1 273.6" stroke="#9c7458" stroke-width="1.1"/><path d="M242.2 328.9L239.5 331.0" stroke="#5a4a3a" stroke-width="1.1"/><path d="M172.2 290.0L173.0 292.2" stroke="#c8a07a" stroke-width="1.1"/><path d="M175.5 246.7L173.7 247.1" stroke="#c8a07a" stroke-width="1.1"/><path d="M209.3 314.3L205.9 315.9" stroke="#a88a6c" stroke-width="1.1"/><path d="M251.4 282.4L249.9 282.8" stroke="#7e5844" stroke-width="1.1"/><path d="M115.7 250.1L117.7 250.7" stroke="#c8a07a" stroke-width="1.1"/><path d="M212.0 279.8L209.5 281.2" stroke="#c8a07a" stroke-width="1.1"/><path d="M147.8 322.7L148.2 325.2" stroke="#7e5844" stroke-width="1.1"/><path d="M172.1 252.3L172.4 256.3" stroke="#c8a07a" stroke-width="1.1"/><path d="M190.2 285.5L191.4 286.8" stroke="#5a4a3a" stroke-width="1.1"/><path d="M224.7 313.9L227.0 317.0" stroke="#6a4a3a" stroke-width="1.1"/><path d="M225.1 289.5L223.3 291.9" stroke="#9c7458" stroke-width="1.1"/><path d="M135.0 254.3L138.3 254.3" stroke="#8a6a50" stroke-width="1.1"/><path d="M138.3 307.8L136.0 309.8" stroke="#6a4a3a" stroke-width="1.1"/><path d="M208.2 326.7L209.4 328.8" stroke="#a88a6c" stroke-width="1.1"/><path d="M233.4 309.3L234.1 311.5" stroke="#8a6a50" stroke-width="1.1"/><path d="M203.4 260.6L206.0 262.7" stroke="#9c7458" stroke-width="1.1"/><path d="M179.0 264.9L178.4 268.9" stroke="#a88a6c" stroke-width="1.1"/><path d="M135.0 238.0L136.9 238.2" stroke="#5a4a3a" stroke-width="1.1"/><path d="M241.6 252.3L242.9 253.2" stroke="#5a4a3a" stroke-width="1.1"/><path d="M179.5 307.5L180.6 310.1" stroke="#5a4a3a" stroke-width="1.1"/><path d="M206.3 274.8L209.3 276.1" stroke="#6a4a3a" stroke-width="1.1"/><path d="M187.8 261.9L187.2 265.9" stroke="#c8a07a" stroke-width="1.1"/><path d="M222.2 284.2L224.4 284.8" stroke="#a88a6c" stroke-width="1.1"/><path d="M226.5 256.0L226.7 258.1" stroke="#caa882" stroke-width="1.1"/><path d="M248.0 295.6L251.7 296.8" stroke="#7e5844" stroke-width="1.1"/><path d="M162.3 298.4L160.1 299.1" stroke="#5a4a3a" stroke-width="1.1"/><path d="M175.6 295.7L177.0 297.2" stroke="#7e5844" stroke-width="1.1"/><path d="M173.8 323.1L172.0 323.4" stroke="#caa882" stroke-width="1.1"/><path d="M153.2 247.9L151.5 250.3" stroke="#7e5844" stroke-width="1.1"/><path d="M195.1 250.8L192.9 251.1" stroke="#caa882" stroke-width="1.1"/><path d="M252.6 326.8L253.4 328.8" stroke="#8a6a50" stroke-width="1.1"/><path d="M241.7 271.5L242.4 274.8" stroke="#5a4a3a" stroke-width="1.1"/><path d="M195.4 270.7L197.2 272.5" stroke="#b08466" stroke-width="1.1"/><path d="M217.4 253.9L215.7 256.4" stroke="#9c7458" stroke-width="1.1"/><path d="M176.4 296.5L174.3 298.0" stroke="#caa882" stroke-width="1.1"/><path d="M168.2 250.9L168.5 254.8" stroke="#9c7458" stroke-width="1.1"/><path d="M239.5 288.4L237.7 288.9" stroke="#9c7458" stroke-width="1.1"/><path d="M234.6 322.5L230.8 323.1" stroke="#a88a6c" stroke-width="1.1"/><path d="M124.1 236.5L126.3 238.1" stroke="#8a6a50" stroke-width="1.1"/><path d="M182.2 245.3L184.4 246.0" stroke="#b08466" stroke-width="1.1"/><path d="M154.7 239.5L154.5 241.6" stroke="#8a6a50" stroke-width="1.1"/><path d="M146.6 302.4L144.4 305.0" stroke="#a88a6c" stroke-width="1.1"/><path d="M187.2 314.9L185.4 315.2" stroke="#9c7458" stroke-width="1.1"/><path d="M159.6 272.6L162.3 275.2" stroke="#5a4a3a" stroke-width="1.1"/><path d="M116.7 205.9L118.6 207.2" stroke="#5a4a3a" stroke-width="1.1"/><path d="M249.8 311.8L248.1 314.3" stroke="#5a4a3a" stroke-width="1.1"/><path d="M221.5 261.2L223.5 262.3" stroke="#9c7458" stroke-width="1.1"/><path d="M154.2 330.3L156.3 332.9" stroke="#c8a07a" stroke-width="1.1"/><path d="M220.7 321.7L219.5 324.0" stroke="#6a4a3a" stroke-width="1.1"/><path d="M219.1 295.1L215.5 296.0" stroke="#6a4a3a" stroke-width="1.1"/><path d="M190.0 331.5L188.3 334.1" stroke="#8a6a50" stroke-width="1.1"/><path d="M133.1 283.4L131.2 285.2" stroke="#a88a6c" stroke-width="1.1"/><path d="M225.1 306.6L225.4 310.0" stroke="#6a4a3a" stroke-width="1.1"/><path d="M103.6 206.8L107.5 206.9" stroke="#9c7458" stroke-width="1.1"/><path d="M148.3 317.1L147.7 320.5" stroke="#5a4a3a" stroke-width="1.1"/><path d="M216.7 275.6L215.4 278.2" stroke="#9c7458" stroke-width="1.1"/><path d="M151.5 267.3L152.2 269.4" stroke="#5a4a3a" stroke-width="1.1"/><path d="M240.0 291.5L241.2 295.0" stroke="#5a4a3a" stroke-width="1.1"/><path d="M170.6 261.6L168.7 264.8" stroke="#a88a6c" stroke-width="1.1"/><path d="M155.2 305.3L152.6 305.4" stroke="#c8a07a" stroke-width="1.1"/><path d="M136.3 285.6L132.4 286.5" stroke="#caa882" stroke-width="1.1"/><path d="M170.3 331.6L171.8 332.0" stroke="#6a4a3a" stroke-width="1.1"/><path d="M118.9 257.1L115.4 258.4" stroke="#caa882" stroke-width="1.1"/><path d="M236.8 307.3L233.2 307.8" stroke="#a88a6c" stroke-width="1.1"/><path d="M156.4 296.4L157.3 298.2" stroke="#9c7458" stroke-width="1.1"/><path d="M183.8 263.5L181.9 264.6" stroke="#7e5844" stroke-width="1.1"/><path d="M161.2 293.0L163.4 293.9" stroke="#caa882" stroke-width="1.1"/><path d="M217.4 296.5L219.9 297.0" stroke="#c8a07a" stroke-width="1.1"/><path d="M148.5 277.4L151.0 279.0" stroke="#c8a07a" stroke-width="1.1"/><path d="M241.5 331.0L238.9 331.9" stroke="#8a6a50" stroke-width="1.1"/><path d="M250.1 297.1L250.1 299.4" stroke="#c8a07a" stroke-width="1.1"/><path d="M123.4 215.2L123.6 217.4" stroke="#7e5844" stroke-width="1.1"/><path d="M145.7 323.0L149.4 323.1" stroke="#caa882" stroke-width="1.1"/><path d="M220.7 289.2L222.8 291.2" stroke="#c8a07a" stroke-width="1.1"/><path d="M214.1 267.2L217.6 268.4" stroke="#5a4a3a" stroke-width="1.1"/><path d="M246.7 264.7L249.3 265.7" stroke="#caa882" stroke-width="1.1"/><path d="M203.5 327.7L206.2 328.4" stroke="#8a6a50" stroke-width="1.1"/><path d="M166.9 271.6L166.3 275.4" stroke="#7e5844" stroke-width="1.1"/><path d="M194.4 263.2L197.2 265.9" stroke="#6a4a3a" stroke-width="1.1"/><path d="M183.8 330.7L181.5 333.5" stroke="#9c7458" stroke-width="1.1"/><path d="M116.9 222.6L114.3 223.1" stroke="#9c7458" stroke-width="1.1"/><path d="M228.8 333.5L231.4 333.8" stroke="#7e5844" stroke-width="1.1"/><path d="M142.5 323.4L144.3 327.0" stroke="#7e5844" stroke-width="1.1"/><path d="M236.1 309.4L238.7 311.8" stroke="#caa882" stroke-width="1.1"/><path d="M197.8 268.3L193.9 269.2" stroke="#6a4a3a" stroke-width="1.1"/><path d="M233.8 298.0L235.2 299.4" stroke="#8a6a50" stroke-width="1.1"/><path d="M179.8 318.4L178.0 319.2" stroke="#a88a6c" stroke-width="1.1"/><path d="M204.3 306.4L202.7 307.8" stroke="#8a6a50" stroke-width="1.1"/><path d="M207.3 280.3L209.5 283.0" stroke="#c8a07a" stroke-width="1.1"/><path d="M218.5 310.0L217.7 312.2" stroke="#6a4a3a" stroke-width="1.1"/><path d="M198.6 278.5L194.8 279.3" stroke="#c8a07a" stroke-width="1.1"/><path d="M253.2 264.6L251.9 266.0" stroke="#7e5844" stroke-width="1.1"/><path d="M190.0 312.8L192.5 313.3" stroke="#caa882" stroke-width="1.1"/><path d="M175.4 333.4L178.4 334.4" stroke="#7e5844" stroke-width="1.1"/><path d="M116.6 247.0L117.9 249.8" stroke="#8a6a50" stroke-width="1.1"/><path d="M120.0 248.9L121.8 250.1" stroke="#caa882" stroke-width="1.1"/><path d="M239.2 287.7L239.1 291.6" stroke="#b08466" stroke-width="1.1"/><path d="M209.6 297.8L212.4 299.5" stroke="#caa882" stroke-width="1.1"/><path d="M120.4 245.6L121.5 247.9" stroke="#5a4a3a" stroke-width="1.1"/><path d="M241.9 276.4L241.2 278.5" stroke="#9c7458" stroke-width="1.1"/><path d="M233.5 284.8L234.4 286.2" stroke="#b08466" stroke-width="1.1"/><path d="M193.7 299.1L196.5 301.2" stroke="#8a6a50" stroke-width="1.1"/><path d="M107.5 216.5L108.5 218.9" stroke="#9c7458" stroke-width="1.1"/><path d="M207.1 283.2L210.7 284.4" stroke="#a88a6c" stroke-width="1.1"/><path d="M142.8 292.9L139.4 294.7" stroke="#6a4a3a" stroke-width="1.1"/><path d="M124.5 286.9L122.3 288.0" stroke="#c8a07a" stroke-width="1.1"/><path d="M244.1 280.5L243.9 283.5" stroke="#6a4a3a" stroke-width="1.1"/><path d="M166.6 283.2L168.1 284.4" stroke="#5a4a3a" stroke-width="1.1"/><path d="M140.5 296.7L139.6 298.1" stroke="#9c7458" stroke-width="1.1"/><path d="M206.5 263.4L210.0 265.3" stroke="#5a4a3a" stroke-width="1.1"/><path d="M238.7 296.5L237.7 298.5" stroke="#caa882" stroke-width="1.1"/><path d="M219.9 253.5L221.8 254.3" stroke="#caa882" stroke-width="1.1"/><path d="M120.3 221.4L119.1 222.8" stroke="#caa882" stroke-width="1.1"/><path d="M193.4 334.4L195.6 334.9" stroke="#a88a6c" stroke-width="1.1"/><path d="M242.5 269.2L240.3 272.4" stroke="#9c7458" stroke-width="1.1"/><path d="M131.3 276.0L130.3 278.1" stroke="#5a4a3a" stroke-width="1.1"/><path d="M194.1 272.0L196.2 273.7" stroke="#9c7458" stroke-width="1.1"/><path d="M149.0 281.1L151.3 282.5" stroke="#b08466" stroke-width="1.1"/><path d="M247.1 252.5L245.4 253.5" stroke="#b08466" stroke-width="1.1"/><path d="M200.7 334.3L197.9 334.4" stroke="#caa882" stroke-width="1.1"/><path d="M143.9 272.6L144.1 275.0" stroke="#c8a07a" stroke-width="1.1"/><path d="M165.3 293.8L163.7 294.4" stroke="#5a4a3a" stroke-width="1.1"/><path d="M188.7 264.4L192.5 264.7" stroke="#5a4a3a" stroke-width="1.1"/><path d="M238.1 295.0L235.8 296.0" stroke="#b08466" stroke-width="1.1"/><path d="M129.6 268.7L130.7 270.2" stroke="#b08466" stroke-width="1.1"/><path d="M113.8 232.3L114.8 235.8" stroke="#7e5844" stroke-width="1.1"/><path d="M210.0 262.4L208.0 262.7" stroke="#a88a6c" stroke-width="1.1"/><path d="M215.4 295.6L218.2 297.4" stroke="#5a4a3a" stroke-width="1.1"/><path d="M191.2 270.3L193.0 272.3" stroke="#caa882" stroke-width="1.1"/><path d="M215.6 277.0L215.2 280.5" stroke="#b08466" stroke-width="1.1"/><path d="M180.2 334.4L183.2 335.3" stroke="#5a4a3a" stroke-width="1.1"/><path d="M187.8 306.3L188.5 308.6" stroke="#5a4a3a" stroke-width="1.1"/><path d="M121.9 243.2L122.1 245.5" stroke="#caa882" stroke-width="1.1"/><path d="M131.3 274.8L129.5 275.9" stroke="#8a6a50" stroke-width="1.1"/><path d="M154.2 309.2L154.0 311.7" stroke="#9c7458" stroke-width="1.1"/><path d="M111.0 230.1L112.5 231.7" stroke="#caa882" stroke-width="1.1"/><path d="M215.6 299.9L216.0 302.7" stroke="#9c7458" stroke-width="1.1"/><path d="M224.2 324.6L221.0 325.7" stroke="#b08466" stroke-width="1.1"/><path d="M152.0 274.8L148.6 276.2" stroke="#a88a6c" stroke-width="1.1"/><path d="M148.7 324.3L151.1 325.8" stroke="#caa882" stroke-width="1.1"/><path d="M150.5 279.1L147.4 280.3" stroke="#caa882" stroke-width="1.1"/><path d="M119.1 266.9L115.9 267.5" stroke="#8a6a50" stroke-width="1.1"/><path d="M187.1 323.1L185.0 324.1" stroke="#6a4a3a" stroke-width="1.1"/><path d="M167.2 269.1L164.6 272.0" stroke="#c8a07a" stroke-width="1.1"/><path d="M153.2 293.2L155.9 294.3" stroke="#7e5844" stroke-width="1.1"/><path d="M199.8 290.6L197.2 290.9" stroke="#8a6a50" stroke-width="1.1"/><path d="M119.6 230.2L121.2 231.9" stroke="#a88a6c" stroke-width="1.1"/><path d="M198.2 242.7L196.7 245.3" stroke="#9c7458" stroke-width="1.1"/><path d="M138.6 279.4L137.3 280.7" stroke="#6a4a3a" stroke-width="1.1"/><path d="M121.4 256.6L123.0 258.4" stroke="#6a4a3a" stroke-width="1.1"/><path d="M199.2 309.5L200.1 311.1" stroke="#c8a07a" stroke-width="1.1"/><path d="M203.8 313.5L206.5 314.1" stroke="#9c7458" stroke-width="1.1"/><path d="M247.6 314.5L244.9 315.3" stroke="#caa882" stroke-width="1.1"/><path d="M186.4 310.3L187.4 312.3" stroke="#c8a07a" stroke-width="1.1"/><path d="M215.6 286.2L213.6 289.1" stroke="#8a6a50" stroke-width="1.1"/><path d="M251.2 284.8L248.0 286.5" stroke="#7e5844" stroke-width="1.1"/><path d="M136.3 313.8L136.7 315.9" stroke="#8a6a50" stroke-width="1.1"/><path d="M187.9 317.3L188.9 320.2" stroke="#9c7458" stroke-width="1.1"/><path d="M143.3 319.0L141.1 319.4" stroke="#8a6a50" stroke-width="1.1"/><path d="M237.0 280.9L239.7 281.7" stroke="#9c7458" stroke-width="1.1"/><path d="M222.6 328.8L225.3 331.0" stroke="#8a6a50" stroke-width="1.1"/><path d="M143.6 266.2L147.3 267.0" stroke="#6a4a3a" stroke-width="1.1"/><path d="M179.1 317.1L179.3 320.0" stroke="#9c7458" stroke-width="1.1"/><path d="M201.8 303.1L199.0 305.9" stroke="#b08466" stroke-width="1.1"/><path d="M176.5 239.1L179.2 241.5" stroke="#6a4a3a" stroke-width="1.1"/><path d="M160.2 305.1L161.6 306.6" stroke="#caa882" stroke-width="1.1"/><path d="M208.3 326.9L211.7 328.7" stroke="#6a4a3a" stroke-width="1.1"/><path d="M178.9 316.3L179.8 319.7" stroke="#9c7458" stroke-width="1.1"/><path d="M131.9 321.8L134.8 323.8" stroke="#c8a07a" stroke-width="1.1"/><path d="M143.9 282.5L144.3 286.3" stroke="#b08466" stroke-width="1.1"/><path d="M145.7 308.7L143.7 308.9" stroke="#a88a6c" stroke-width="1.1"/><path d="M243.8 311.9L244.4 313.6" stroke="#7e5844" stroke-width="1.1"/><path d="M253.3 290.3L252.0 291.6" stroke="#8a6a50" stroke-width="1.1"/><path d="M138.0 295.3L138.2 298.8" stroke="#caa882" stroke-width="1.1"/><path d="M253.5 284.2L252.3 286.4" stroke="#a88a6c" stroke-width="1.1"/><path d="M249.2 292.0L247.8 293.0" stroke="#9c7458" stroke-width="1.1"/><path d="M131.5 292.2L132.7 294.4" stroke="#8a6a50" stroke-width="1.1"/><path d="M145.6 306.6L144.1 307.6" stroke="#7e5844" stroke-width="1.1"/><path d="M171.6 303.9L171.4 305.9" stroke="#9c7458" stroke-width="1.1"/><path d="M139.8 294.3L142.3 294.6" stroke="#c8a07a" stroke-width="1.1"/><path d="M208.8 291.0L209.6 293.0" stroke="#b08466" stroke-width="1.1"/><path d="M149.8 333.4L146.5 334.8" stroke="#caa882" stroke-width="1.1"/><path d="M234.1 286.1L234.9 288.2" stroke="#c8a07a" stroke-width="1.1"/><path d="M149.6 333.0L149.0 335.7" stroke="#5a4a3a" stroke-width="1.1"/><path d="M129.3 294.0L130.6 296.2" stroke="#a88a6c" stroke-width="1.1"/><path d="M169.9 251.1L172.0 251.5" stroke="#b08466" stroke-width="1.1"/><path d="M238.2 303.9L235.4 304.6" stroke="#a88a6c" stroke-width="1.1"/><path d="M107.2 205.4L104.0 207.6" stroke="#caa882" stroke-width="1.1"/><path d="M134.4 268.4L132.8 271.7" stroke="#9c7458" stroke-width="1.1"/><path d="M134.6 295.4L131.4 296.5" stroke="#5a4a3a" stroke-width="1.1"/><path d="M142.1 298.8L143.8 301.1" stroke="#caa882" stroke-width="1.1"/><path d="M145.8 300.9L148.5 301.8" stroke="#7e5844" stroke-width="1.1"/><path d="M189.4 286.3L190.0 288.6" stroke="#c8a07a" stroke-width="1.1"/><path d="M242.7 268.8L241.9 271.1" stroke="#9c7458" stroke-width="1.1"/><path d="M182.2 296.7L179.9 297.8" stroke="#9c7458" stroke-width="1.1"/><path d="M248.7 304.7L248.6 307.7" stroke="#b08466" stroke-width="1.1"/><path d="M183.1 288.5L186.5 290.4" stroke="#5a4a3a" stroke-width="1.1"/><path d="M195.3 276.6L194.1 277.8" stroke="#9c7458" stroke-width="1.1"/><path d="M137.0 321.9L138.8 322.9" stroke="#6a4a3a" stroke-width="1.1"/><path d="M158.4 289.0L159.4 291.1" stroke="#9c7458" stroke-width="1.1"/><path d="M144.7 329.9L143.7 331.9" stroke="#a88a6c" stroke-width="1.1"/><path d="M219.9 277.4L221.3 279.1" stroke="#c8a07a" stroke-width="1.1"/><path d="M176.6 292.7L178.5 294.1" stroke="#5a4a3a" stroke-width="1.1"/><path d="M183.9 291.0L181.2 293.9" stroke="#9c7458" stroke-width="1.1"/><path d="M230.8 278.7L234.2 279.4" stroke="#9c7458" stroke-width="1.1"/><path d="M195.7 262.6L197.6 265.4" stroke="#7e5844" stroke-width="1.1"/><path d="M142.8 329.9L144.1 331.4" stroke="#c8a07a" stroke-width="1.1"/><path d="M196.2 312.8L197.3 314.4" stroke="#9c7458" stroke-width="1.1"/><path d="M133.4 253.5L133.6 256.4" stroke="#7e5844" stroke-width="1.1"/><path d="M150.6 255.6L152.1 257.1" stroke="#6a4a3a" stroke-width="1.1"/><path d="M202.6 333.1L202.6 336.4" stroke="#7e5844" stroke-width="1.1"/><path d="M233.9 250.5L235.0 253.3" stroke="#9c7458" stroke-width="1.1"/><path d="M126.4 226.4L128.6 227.8" stroke="#8a6a50" stroke-width="1.1"/><path d="M195.9 272.7L198.2 274.2" stroke="#a88a6c" stroke-width="1.1"/><path d="M247.9 258.0L247.5 260.1" stroke="#8a6a50" stroke-width="1.1"/><path d="M211.2 318.6L212.0 320.7" stroke="#a88a6c" stroke-width="1.1"/><path d="M225.9 314.4L226.7 317.2" stroke="#b08466" stroke-width="1.1"/><path d="M166.3 245.1L164.1 246.8" stroke="#6a4a3a" stroke-width="1.1"/><path d="M121.5 240.8L119.8 243.7" stroke="#5a4a3a" stroke-width="1.1"/><path d="M212.9 316.4L215.1 317.8" stroke="#5a4a3a" stroke-width="1.1"/><path d="M193.8 312.9L195.6 314.9" stroke="#c8a07a" stroke-width="1.1"/><path d="M140.2 257.8L138.6 260.3" stroke="#7e5844" stroke-width="1.1"/><path d="M117.9 256.0L115.1 257.4" stroke="#b08466" stroke-width="1.1"/><path d="M244.7 320.3L242.1 320.8" stroke="#c8a07a" stroke-width="1.1"/><path d="M224.8 249.9L223.8 253.5" stroke="#b08466" stroke-width="1.1"/><path d="M146.3 290.2L145.1 292.8" stroke="#9c7458" stroke-width="1.1"/><path d="M203.1 307.8L205.8 309.3" stroke="#b08466" stroke-width="1.1"/><path d="M178.1 264.0L180.1 266.6" stroke="#caa882" stroke-width="1.1"/><path d="M126.2 295.0L126.7 298.5" stroke="#6a4a3a" stroke-width="1.1"/><path d="M250.7 300.4L248.1 300.4" stroke="#6a4a3a" stroke-width="1.1"/><path d="M219.4 299.3L221.3 302.4" stroke="#a88a6c" stroke-width="1.1"/><path d="M166.9 321.4L168.2 323.3" stroke="#7e5844" stroke-width="1.1"/><path d="M149.9 324.8L152.9 327.2" stroke="#7e5844" stroke-width="1.1"/><path d="M146.6 252.9L147.3 255.1" stroke="#8a6a50" stroke-width="1.1"/><path d="M211.3 318.1L214.0 318.1" stroke="#b08466" stroke-width="1.1"/><path d="M105.1 209.9L104.9 211.7" stroke="#5a4a3a" stroke-width="1.1"/><path d="M210.5 261.7L211.4 263.1" stroke="#5a4a3a" stroke-width="1.1"/><path d="M253.4 286.4L250.8 286.6" stroke="#c8a07a" stroke-width="1.1"/><path d="M134.7 259.2L136.7 259.5" stroke="#9c7458" stroke-width="1.1"/><path d="M242.5 260.9L239.5 263.2" stroke="#c8a07a" stroke-width="1.1"/><path d="M175.8 246.9L178.8 248.2" stroke="#b08466" stroke-width="1.1"/><path d="M248.0 276.9L246.6 278.9" stroke="#caa882" stroke-width="1.1"/><path d="M172.4 259.4L170.7 261.4" stroke="#9c7458" stroke-width="1.1"/><path d="M165.3 282.1L164.6 285.3" stroke="#c8a07a" stroke-width="1.1"/><path d="M140.7 289.9L140.6 293.5" stroke="#b08466" stroke-width="1.1"/><path d="M188.3 306.2L186.4 309.5" stroke="#7e5844" stroke-width="1.1"/><path d="M122.4 226.4L120.1 228.1" stroke="#7e5844" stroke-width="1.1"/><path d="M144.5 309.0L146.2 311.2" stroke="#5a4a3a" stroke-width="1.1"/><path d="M229.8 287.0L228.1 288.1" stroke="#9c7458" stroke-width="1.1"/><path d="M225.5 295.3L229.5 295.6" stroke="#caa882" stroke-width="1.1"/><path d="M141.5 266.6L139.4 270.0" stroke="#caa882" stroke-width="1.1"/><path d="M109.6 220.2L112.4 220.4" stroke="#caa882" stroke-width="1.1"/><path d="M145.3 322.2L149.2 322.7" stroke="#c8a07a" stroke-width="1.1"/><path d="M199.2 258.9L199.0 261.2" stroke="#a88a6c" stroke-width="1.1"/><path d="M124.2 277.1L122.1 277.7" stroke="#b08466" stroke-width="1.1"/><path d="M178.6 297.3L176.2 299.9" stroke="#7e5844" stroke-width="1.1"/><path d="M199.5 315.9L200.6 317.5" stroke="#9c7458" stroke-width="1.1"/><path d="M206.8 253.7L208.1 256.9" stroke="#9c7458" stroke-width="1.1"/><path d="M131.0 300.6L130.0 302.1" stroke="#c8a07a" stroke-width="1.1"/><path d="M135.2 310.1L136.8 312.9" stroke="#8a6a50" stroke-width="1.1"/><path d="M148.8 300.2L147.5 302.1" stroke="#b08466" stroke-width="1.1"/><path d="M217.7 303.3L219.5 303.3" stroke="#5a4a3a" stroke-width="1.1"/><path d="M149.2 309.1L151.7 310.0" stroke="#b08466" stroke-width="1.1"/><path d="M159.0 273.2L161.9 274.8" stroke="#5a4a3a" stroke-width="1.1"/><path d="M242.1 269.5L243.6 271.3" stroke="#7e5844" stroke-width="1.1"/><path d="M214.6 249.2L216.5 251.6" stroke="#c8a07a" stroke-width="1.1"/><path d="M208.0 313.9L211.7 314.2" stroke="#b08466" stroke-width="1.1"/><path d="M164.8 333.4L162.3 334.0" stroke="#9c7458" stroke-width="1.1"/><path d="M128.0 224.3L129.1 225.9" stroke="#9c7458" stroke-width="1.1"/><path d="M134.9 271.8L137.0 273.7" stroke="#a88a6c" stroke-width="1.1"/><path d="M160.9 242.3L160.9 245.5" stroke="#6a4a3a" stroke-width="1.1"/><path d="M170.7 281.6L168.7 281.9" stroke="#8a6a50" stroke-width="1.1"/><path d="M203.3 269.9L202.7 271.4" stroke="#c8a07a" stroke-width="1.1"/><path d="M224.4 288.1L227.7 288.4" stroke="#9c7458" stroke-width="1.1"/><path d="M222.2 307.0L223.7 307.9" stroke="#8a6a50" stroke-width="1.1"/><path d="M215.4 289.7L212.7 291.5" stroke="#c8a07a" stroke-width="1.1"/><path d="M173.6 306.6L171.4 307.0" stroke="#7e5844" stroke-width="1.1"/><path d="M180.6 276.5L182.6 276.6" stroke="#5a4a3a" stroke-width="1.1"/><path d="M141.4 315.4L144.0 316.5" stroke="#5a4a3a" stroke-width="1.1"/><path d="M236.0 324.5L235.6 327.1" stroke="#b08466" stroke-width="1.1"/><path d="M116.2 250.8L114.6 251.7" stroke="#8a6a50" stroke-width="1.1"/><path d="M171.1 292.4L173.8 292.7" stroke="#b08466" stroke-width="1.1"/><path d="M208.2 264.3L211.8 265.1" stroke="#6a4a3a" stroke-width="1.1"/><path d="M207.0 272.0L203.9 274.2" stroke="#9c7458" stroke-width="1.1"/><path d="M195.3 254.1L191.7 255.6" stroke="#7e5844" stroke-width="1.1"/><path d="M131.7 304.1L134.7 304.9" stroke="#6a4a3a" stroke-width="1.1"/><path d="M200.6 310.8L204.3 311.4" stroke="#c8a07a" stroke-width="1.1"/><path d="M191.6 281.9L192.0 285.1" stroke="#9c7458" stroke-width="1.1"/><path d="M133.5 241.7L130.1 243.4" stroke="#6a4a3a" stroke-width="1.1"/><path d="M126.9 221.0L124.4 221.6" stroke="#9c7458" stroke-width="1.1"/><path d="M181.8 259.7L184.9 259.7" stroke="#7e5844" stroke-width="1.1"/><path d="M166.5 285.7L168.6 287.3" stroke="#a88a6c" stroke-width="1.1"/><path d="M220.3 314.0L222.4 314.0" stroke="#caa882" stroke-width="1.1"/><path d="M152.8 314.4L155.6 315.7" stroke="#5a4a3a" stroke-width="1.1"/><path d="M158.1 258.9L159.8 260.9" stroke="#c8a07a" stroke-width="1.1"/><path d="M127.7 233.4L127.7 235.8" stroke="#caa882" stroke-width="1.1"/><path d="M109.2 228.6L107.1 231.6" stroke="#c8a07a" stroke-width="1.1"/><path d="M202.0 308.1L202.6 309.8" stroke="#5a4a3a" stroke-width="1.1"/><path d="M222.9 284.1L219.4 284.5" stroke="#8a6a50" stroke-width="1.1"/><path d="M193.9 264.7L195.5 266.3" stroke="#b08466" stroke-width="1.1"/><path d="M213.3 329.4L212.7 331.6" stroke="#8a6a50" stroke-width="1.1"/><path d="M147.5 313.8L148.9 314.6" stroke="#8a6a50" stroke-width="1.1"/><path d="M247.3 272.1L244.9 272.9" stroke="#c8a07a" stroke-width="1.1"/><path d="M149.6 300.0L150.1 302.7" stroke="#5a4a3a" stroke-width="1.1"/><path d="M196.2 332.4L195.1 335.0" stroke="#8a6a50" stroke-width="1.1"/><path d="M201.2 311.3L202.6 312.4" stroke="#b08466" stroke-width="1.1"/><path d="M154.3 279.7L152.7 280.3" stroke="#8a6a50" stroke-width="1.1"/><path d="M154.4 266.0L153.1 268.3" stroke="#a88a6c" stroke-width="1.1"/><path d="M155.1 297.9L158.6 299.3" stroke="#5a4a3a" stroke-width="1.1"/><path d="M130.8 255.3L133.5 257.7" stroke="#8a6a50" stroke-width="1.1"/><path d="M155.2 277.5L155.2 279.6" stroke="#caa882" stroke-width="1.1"/><path d="M122.7 282.9L124.2 283.6" stroke="#c8a07a" stroke-width="1.1"/><path d="M253.6 318.7L254.8 320.5" stroke="#8a6a50" stroke-width="1.1"/><path d="M174.2 271.6L176.1 273.2" stroke="#8a6a50" stroke-width="1.1"/><path d="M201.1 281.0L202.7 282.5" stroke="#caa882" stroke-width="1.1"/><path d="M176.2 329.3L174.5 331.3" stroke="#6a4a3a" stroke-width="1.1"/><path d="M248.0 308.8L250.0 309.0" stroke="#5a4a3a" stroke-width="1.1"/><path d="M253.5 250.2L251.7 253.7" stroke="#c8a07a" stroke-width="1.1"/><path d="M145.5 303.0L146.9 305.2" stroke="#8a6a50" stroke-width="1.1"/><path d="M215.4 312.1L218.8 313.0" stroke="#b08466" stroke-width="1.1"/><path d="M219.8 296.7L216.0 297.7" stroke="#b08466" stroke-width="1.1"/><path d="M156.8 315.5L155.5 317.2" stroke="#5a4a3a" stroke-width="1.1"/><path d="M141.2 290.3L141.9 292.0" stroke="#8a6a50" stroke-width="1.1"/><path d="M180.4 296.4L177.9 298.3" stroke="#c8a07a" stroke-width="1.1"/><path d="M150.3 268.0L152.2 271.4" stroke="#7e5844" stroke-width="1.1"/><path d="M147.2 262.3L146.2 263.6" stroke="#8a6a50" stroke-width="1.1"/><path d="M245.2 299.7L243.0 301.3" stroke="#c8a07a" stroke-width="1.1"/><path d="M131.9 316.6L135.0 316.7" stroke="#c8a07a" stroke-width="1.1"/><path d="M120.2 248.1L122.9 249.9" stroke="#6a4a3a" stroke-width="1.1"/><path d="M131.9 258.7L129.9 259.7" stroke="#7e5844" stroke-width="1.1"/><path d="M125.1 292.1L127.3 292.7" stroke="#caa882" stroke-width="1.1"/><path d="M220.8 323.7L221.2 325.6" stroke="#c8a07a" stroke-width="1.1"/><path d="M133.5 245.4L133.0 247.7" stroke="#6a4a3a" stroke-width="1.1"/><path d="M255.7 273.2L252.8 275.0" stroke="#a88a6c" stroke-width="1.1"/><path d="M205.3 322.4L208.7 323.6" stroke="#c8a07a" stroke-width="1.1"/><path d="M110.2 220.6L112.5 221.6" stroke="#9c7458" stroke-width="1.1"/><path d="M245.1 318.4L245.6 320.9" stroke="#9c7458" stroke-width="1.1"/><path d="M220.1 259.1L219.9 262.5" stroke="#c8a07a" stroke-width="1.1"/><path d="M236.5 329.5L239.1 330.2" stroke="#5a4a3a" stroke-width="1.1"/><path d="M214.0 271.1L217.5 272.8" stroke="#caa882" stroke-width="1.1"/><path d="M130.8 264.3L131.8 265.7" stroke="#caa882" stroke-width="1.1"/><path d="M221.4 321.4L217.5 321.5" stroke="#9c7458" stroke-width="1.1"/><path d="M161.4 324.1L161.1 326.0" stroke="#7e5844" stroke-width="1.1"/><path d="M204.4 325.6L202.8 327.8" stroke="#7e5844" stroke-width="1.1"/><path d="M167.7 289.4L166.3 291.9" stroke="#6a4a3a" stroke-width="1.1"/><path d="M240.6 272.7L242.3 272.8" stroke="#9c7458" stroke-width="1.1"/><path d="M223.1 321.3L226.2 322.7" stroke="#c8a07a" stroke-width="1.1"/><path d="M248.2 245.9L246.0 246.5" stroke="#8a6a50" stroke-width="1.1"/><path d="M210.3 273.9L210.5 276.6" stroke="#5a4a3a" stroke-width="1.1"/><path d="M193.5 275.3L195.6 277.1" stroke="#5a4a3a" stroke-width="1.1"/><path d="M182.1 288.3L181.6 292.1" stroke="#b08466" stroke-width="1.1"/><path d="M224.6 318.0L227.9 319.7" stroke="#a88a6c" stroke-width="1.1"/><path d="M172.4 282.1L172.7 284.6" stroke="#5a4a3a" stroke-width="1.1"/><path d="M222.3 318.7L223.4 322.1" stroke="#caa882" stroke-width="1.1"/><path d="M249.0 272.1L246.1 273.9" stroke="#8a6a50" stroke-width="1.1"/><path d="M126.7 292.8L127.8 294.5" stroke="#caa882" stroke-width="1.1"/><path d="M175.9 266.8L172.0 267.3" stroke="#8a6a50" stroke-width="1.1"/><path d="M113.3 244.5L110.6 245.8" stroke="#7e5844" stroke-width="1.1"/><path d="M233.3 281.7L235.0 281.9" stroke="#9c7458" stroke-width="1.1"/><path d="M210.9 299.8L209.7 302.1" stroke="#c8a07a" stroke-width="1.1"/><path d="M156.3 323.4L157.3 325.4" stroke="#7e5844" stroke-width="1.1"/><path d="M159.0 281.2L161.0 281.8" stroke="#a88a6c" stroke-width="1.1"/><path d="M163.8 251.0L165.8 251.0" stroke="#5a4a3a" stroke-width="1.1"/><path d="M110.9 209.0L109.0 211.1" stroke="#b08466" stroke-width="1.1"/><path d="M247.8 278.7L248.2 280.4" stroke="#6a4a3a" stroke-width="1.1"/><path d="M251.6 266.2L253.3 267.6" stroke="#9c7458" stroke-width="1.1"/><path d="M204.7 277.1L206.3 277.3" stroke="#6a4a3a" stroke-width="1.1"/><path d="M198.9 332.7L198.9 334.6" stroke="#7e5844" stroke-width="1.1"/><path d="M216.6 271.9L218.2 274.4" stroke="#caa882" stroke-width="1.1"/><path d="M222.3 331.4L218.5 331.5" stroke="#a88a6c" stroke-width="1.1"/><path d="M167.1 280.4L169.0 282.3" stroke="#c8a07a" stroke-width="1.1"/><path d="M207.2 324.7L206.4 327.3" stroke="#caa882" stroke-width="1.1"/><path d="M206.2 287.1L206.5 289.5" stroke="#8a6a50" stroke-width="1.1"/><path d="M137.6 271.6L137.9 273.8" stroke="#6a4a3a" stroke-width="1.1"/><path d="M227.1 273.0L227.6 275.5" stroke="#6a4a3a" stroke-width="1.1"/><path d="M201.5 286.2L204.3 286.6" stroke="#5a4a3a" stroke-width="1.1"/><path d="M176.3 292.8L175.9 294.4" stroke="#caa882" stroke-width="1.1"/><path d="M234.6 332.5L234.1 334.5" stroke="#8a6a50" stroke-width="1.1"/><path d="M203.7 249.2L206.6 249.7" stroke="#5a4a3a" stroke-width="1.1"/><path d="M206.8 287.5L208.2 288.9" stroke="#8a6a50" stroke-width="1.1"/><path d="M199.0 256.2L198.0 257.6" stroke="#b08466" stroke-width="1.1"/><path d="M136.0 280.2L138.1 281.5" stroke="#8a6a50" stroke-width="1.1"/><path d="M206.9 321.7L207.6 323.6" stroke="#9c7458" stroke-width="1.1"/><path d="M147.0 279.2L149.8 279.6" stroke="#c8a07a" stroke-width="1.1"/><path d="M142.6 255.3L140.6 255.9" stroke="#7e5844" stroke-width="1.1"/><path d="M167.5 262.2L166.5 264.3" stroke="#6a4a3a" stroke-width="1.1"/><path d="M216.1 273.9L216.1 277.0" stroke="#c8a07a" stroke-width="1.1"/><path d="M182.6 303.0L183.8 305.7" stroke="#a88a6c" stroke-width="1.1"/><path d="M206.9 261.4L209.0 263.7" stroke="#a88a6c" stroke-width="1.1"/><path d="M138.5 262.6L138.5 264.7" stroke="#9c7458" stroke-width="1.1"/><path d="M142.3 332.8L141.5 335.4" stroke="#9c7458" stroke-width="1.1"/><path d="M171.2 279.0L173.7 279.2" stroke="#9c7458" stroke-width="1.1"/><path d="M251.9 253.9L252.7 255.4" stroke="#9c7458" stroke-width="1.1"/><path d="M226.2 334.1L226.9 335.8" stroke="#5a4a3a" stroke-width="1.1"/><path d="M251.6 334.1L248.4 334.3" stroke="#8a6a50" stroke-width="1.1"/><path d="M152.4 288.1L155.8 288.1" stroke="#caa882" stroke-width="1.1"/><path d="M189.0 322.2L186.9 322.6" stroke="#c8a07a" stroke-width="1.1"/><path d="M242.2 311.1L246.1 311.8" stroke="#8a6a50" stroke-width="1.1"/><path d="M134.0 324.3L136.0 325.1" stroke="#8a6a50" stroke-width="1.1"/><path d="M152.1 275.4L154.4 276.8" stroke="#a88a6c" stroke-width="1.1"/><path d="M239.2 305.0L239.7 307.4" stroke="#b08466" stroke-width="1.1"/><path d="M227.2 274.3L228.1 276.9" stroke="#c8a07a" stroke-width="1.1"/><path d="M244.8 297.5L243.3 298.2" stroke="#caa882" stroke-width="1.1"/><path d="M199.5 278.7L196.1 279.2" stroke="#7e5844" stroke-width="1.1"/><path d="M159.1 326.9L162.4 328.6" stroke="#b08466" stroke-width="1.1"/><path d="M133.2 247.4L130.1 249.1" stroke="#5a4a3a" stroke-width="1.1"/><path d="M126.0 280.8L126.3 283.6" stroke="#5a4a3a" stroke-width="1.1"/><path d="M167.8 311.7L169.7 312.9" stroke="#caa882" stroke-width="1.1"/><path d="M124.9 266.2L125.5 268.6" stroke="#8a6a50" stroke-width="1.1"/><path d="M162.1 315.3L163.4 318.5" stroke="#9c7458" stroke-width="1.1"/><path d="M122.8 273.1L125.3 273.1" stroke="#8a6a50" stroke-width="1.1"/><path d="M203.4 317.1L205.9 317.5" stroke="#5a4a3a" stroke-width="1.1"/><path d="M177.2 257.3L179.5 259.1" stroke="#9c7458" stroke-width="1.1"/><path d="M251.0 309.2L252.6 310.8" stroke="#6a4a3a" stroke-width="1.1"/><path d="M142.9 315.7L140.2 317.5" stroke="#caa882" stroke-width="1.1"/><path d="M181.9 296.5L181.7 300.4" stroke="#a88a6c" stroke-width="1.1"/><path d="M131.3 305.5L129.6 305.8" stroke="#9c7458" stroke-width="1.1"/><path d="M184.7 323.6L186.3 324.2" stroke="#6a4a3a" stroke-width="1.1"/><path d="M197.6 290.8L196.7 292.7" stroke="#9c7458" stroke-width="1.1"/><path d="M253.6 323.2L251.2 324.0" stroke="#a88a6c" stroke-width="1.1"/><path d="M245.8 268.2L244.2 270.0" stroke="#7e5844" stroke-width="1.1"/><path d="M134.3 265.8L133.7 269.3" stroke="#c8a07a" stroke-width="1.1"/><path d="M116.4 221.4L114.3 221.9" stroke="#a88a6c" stroke-width="1.1"/><path d="M154.1 283.1L154.0 286.8" stroke="#9c7458" stroke-width="1.1"/><path d="M186.4 265.2L188.7 266.8" stroke="#b08466" stroke-width="1.1"/><path d="M213.9 319.9L216.4 320.3" stroke="#5a4a3a" stroke-width="1.1"/><path d="M189.0 263.6L188.8 265.3" stroke="#b08466" stroke-width="1.1"/><path d="M143.6 313.9L142.6 317.0" stroke="#9c7458" stroke-width="1.1"/><path d="M226.6 331.7L224.2 331.9" stroke="#a88a6c" stroke-width="1.1"/><path d="M191.7 331.2L193.4 332.2" stroke="#7e5844" stroke-width="1.1"/><path d="M161.5 323.8L161.0 327.2" stroke="#9c7458" stroke-width="1.1"/><path d="M233.1 279.7L235.7 282.1" stroke="#5a4a3a" stroke-width="1.1"/><path d="M249.1 268.5L248.7 271.7" stroke="#9c7458" stroke-width="1.1"/><path d="M117.2 211.6L119.6 212.0" stroke="#5a4a3a" stroke-width="1.1"/><path d="M178.8 293.0L180.6 293.7" stroke="#6a4a3a" stroke-width="1.1"/><path d="M173.1 281.1L170.3 282.4" stroke="#6a4a3a" stroke-width="1.1"/><path d="M175.4 333.2L176.3 334.9" stroke="#6a4a3a" stroke-width="1.1"/><path d="M143.0 282.5L145.8 284.8" stroke="#b08466" stroke-width="1.1"/><path d="M189.5 268.2L187.8 268.3" stroke="#8a6a50" stroke-width="1.1"/><path d="M204.9 288.7L207.4 289.9" stroke="#8a6a50" stroke-width="1.1"/><path d="M121.0 232.3L119.9 236.0" stroke="#b08466" stroke-width="1.1"/><path d="M190.0 270.2L186.8 271.9" stroke="#9c7458" stroke-width="1.1"/><path d="M237.8 298.9L239.9 299.0" stroke="#caa882" stroke-width="1.1"/><path d="M184.8 298.2L186.2 299.1" stroke="#a88a6c" stroke-width="1.1"/><path d="M162.3 326.9L164.9 327.3" stroke="#b08466" stroke-width="1.1"/><path d="M168.1 275.1L164.3 275.1" stroke="#5a4a3a" stroke-width="1.1"/><path d="M186.6 333.1L189.6 335.0" stroke="#c8a07a" stroke-width="1.1"/><path d="M201.9 257.8L199.9 259.3" stroke="#b08466" stroke-width="1.1"/><path d="M218.4 298.7L220.5 300.9" stroke="#caa882" stroke-width="1.1"/><path d="M176.6 331.1L176.9 332.7" stroke="#7e5844" stroke-width="1.1"/><path d="M148.3 327.9L146.8 331.0" stroke="#a88a6c" stroke-width="1.1"/><path d="M171.6 303.3L173.7 306.7" stroke="#caa882" stroke-width="1.1"/><path d="M239.8 321.2L241.0 323.7" stroke="#5a4a3a" stroke-width="1.1"/><path d="M205.4 282.6L208.0 282.8" stroke="#a88a6c" stroke-width="1.1"/><path d="M163.8 289.4L161.4 289.9" stroke="#c8a07a" stroke-width="1.1"/><path d="M235.8 308.9L234.5 311.8" stroke="#7e5844" stroke-width="1.1"/><path d="M150.9 282.6L149.9 284.1" stroke="#5a4a3a" stroke-width="1.1"/><path d="M178.7 296.2L178.3 300.2" stroke="#caa882" stroke-width="1.1"/><path d="M239.7 249.2L241.2 251.5" stroke="#9c7458" stroke-width="1.1"/><path d="M152.2 318.2L153.5 319.4" stroke="#6a4a3a" stroke-width="1.1"/><path d="M214.9 272.9L214.0 275.9" stroke="#8a6a50" stroke-width="1.1"/><path d="M238.4 265.9L239.5 267.7" stroke="#8a6a50" stroke-width="1.1"/><path d="M180.6 309.6L177.4 311.0" stroke="#5a4a3a" stroke-width="1.1"/><path d="M237.5 261.1L239.5 261.8" stroke="#a88a6c" stroke-width="1.1"/><path d="M249.5 251.2L251.7 251.6" stroke="#b08466" stroke-width="1.1"/><path d="M182.9 317.3L183.3 318.9" stroke="#caa882" stroke-width="1.1"/><path d="M128.9 254.2L125.2 255.3" stroke="#8a6a50" stroke-width="1.1"/><path d="M215.0 248.0L216.3 250.3" stroke="#8a6a50" stroke-width="1.1"/><path d="M218.8 301.1L217.1 301.6" stroke="#a88a6c" stroke-width="1.1"/><path d="M217.0 258.9L219.3 259.5" stroke="#b08466" stroke-width="1.1"/><path d="M121.8 250.9L122.4 252.6" stroke="#a88a6c" stroke-width="1.1"/><path d="M245.7 257.1L245.5 260.6" stroke="#7e5844" stroke-width="1.1"/><path d="M170.8 265.7L171.0 267.9" stroke="#8a6a50" stroke-width="1.1"/><path d="M235.2 307.2L236.5 308.4" stroke="#c8a07a" stroke-width="1.1"/><path d="M247.7 331.9L248.9 333.1" stroke="#6a4a3a" stroke-width="1.1"/><path d="M171.7 304.2L174.8 305.6" stroke="#7e5844" stroke-width="1.1"/><path d="M254.1 314.6L254.4 317.6" stroke="#5a4a3a" stroke-width="1.1"/><path d="M234.4 307.1L234.4 309.4" stroke="#9c7458" stroke-width="1.1"/><path d="M254.8 268.2L255.1 271.0" stroke="#6a4a3a" stroke-width="1.1"/><path d="M135.3 251.1L134.8 252.9" stroke="#5a4a3a" stroke-width="1.1"/><path d="M214.3 316.5L214.7 319.2" stroke="#caa882" stroke-width="1.1"/><path d="M188.4 304.2L187.1 307.4" stroke="#7e5844" stroke-width="1.1"/><path d="M146.1 275.2L142.7 277.3" stroke="#a88a6c" stroke-width="1.1"/><path d="M198.9 323.9L200.0 325.5" stroke="#5a4a3a" stroke-width="1.1"/><path d="M207.6 296.3L206.2 299.4" stroke="#8a6a50" stroke-width="1.1"/><path d="M113.0 222.3L114.2 224.5" stroke="#b08466" stroke-width="1.1"/><path d="M210.8 274.7L209.4 275.9" stroke="#8a6a50" stroke-width="1.1"/><path d="M176.6 271.2L175.3 273.2" stroke="#caa882" stroke-width="1.1"/><path d="M156.8 297.1L156.7 300.8" stroke="#c8a07a" stroke-width="1.1"/><path d="M238.7 277.6L241.8 278.6" stroke="#b08466" stroke-width="1.1"/><path d="M230.9 321.2L232.9 322.2" stroke="#c8a07a" stroke-width="1.1"/><path d="M140.7 247.0L136.8 247.1" stroke="#9c7458" stroke-width="1.1"/><path d="M232.8 323.8L231.5 327.2" stroke="#9c7458" stroke-width="1.1"/><path d="M179.2 270.5L177.7 271.1" stroke="#7e5844" stroke-width="1.1"/><path d="M171.0 303.8L172.5 306.7" stroke="#c8a07a" stroke-width="1.1"/><path d="M215.2 259.6L217.8 261.9" stroke="#5a4a3a" stroke-width="1.1"/><path d="M128.9 262.5L126.1 262.5" stroke="#a88a6c" stroke-width="1.1"/><path d="M199.6 277.2L200.3 280.5" stroke="#9c7458" stroke-width="1.1"/><path d="M230.0 284.5L230.3 287.2" stroke="#7e5844" stroke-width="1.1"/><path d="M171.8 319.4L168.4 320.4" stroke="#6a4a3a" stroke-width="1.1"/><path d="M210.7 272.6L207.4 273.9" stroke="#7e5844" stroke-width="1.1"/><path d="M143.5 266.2L143.9 267.9" stroke="#9c7458" stroke-width="1.1"/><path d="M253.6 251.2L251.4 252.7" stroke="#caa882" stroke-width="1.1"/><path d="M241.0 277.8L239.0 279.3" stroke="#c8a07a" stroke-width="1.1"/><path d="M166.2 247.6L167.8 248.7" stroke="#b08466" stroke-width="1.1"/><path d="M254.6 313.5L253.9 316.2" stroke="#c8a07a" stroke-width="1.1"/><path d="M219.1 254.4L220.1 255.8" stroke="#caa882" stroke-width="1.1"/><path d="M199.8 287.3L198.1 288.5" stroke="#7e5844" stroke-width="1.1"/><path d="M148.2 259.0L144.5 259.8" stroke="#caa882" stroke-width="1.1"/><path d="M238.1 282.3L236.0 284.4" stroke="#6a4a3a" stroke-width="1.1"/><path d="M196.2 311.2L193.6 312.5" stroke="#caa882" stroke-width="1.1"/><path d="M219.9 303.3L218.5 305.4" stroke="#7e5844" stroke-width="1.1"/><path d="M154.1 286.3L156.4 286.6" stroke="#8a6a50" stroke-width="1.1"/><path d="M128.5 265.8L125.3 266.5" stroke="#6a4a3a" stroke-width="1.1"/><path d="M198.5 312.2L200.0 315.8" stroke="#9c7458" stroke-width="1.1"/><path d="M209.9 300.6L208.6 302.2" stroke="#9c7458" stroke-width="1.1"/><path d="M224.8 305.7L224.2 307.2" stroke="#8a6a50" stroke-width="1.1"/><path d="M121.0 269.8L123.2 270.7" stroke="#6a4a3a" stroke-width="1.1"/><path d="M148.3 312.2L150.2 313.8" stroke="#b08466" stroke-width="1.1"/><path d="M176.5 317.7L179.0 318.8" stroke="#9c7458" stroke-width="1.1"/><path d="M199.8 322.3L202.9 324.2" stroke="#8a6a50" stroke-width="1.1"/><path d="M228.3 324.3L229.1 327.0" stroke="#b08466" stroke-width="1.1"/><path d="M164.5 295.2L162.3 295.5" stroke="#caa882" stroke-width="1.1"/><path d="M130.6 302.0L129.1 305.3" stroke="#caa882" stroke-width="1.1"/><path d="M172.6 295.8L175.8 297.7" stroke="#6a4a3a" stroke-width="1.1"/><path d="M107.4 215.6L107.6 218.0" stroke="#7e5844" stroke-width="1.1"/><path d="M224.8 271.5L222.6 272.8" stroke="#9c7458" stroke-width="1.1"/><path d="M148.1 320.5L145.3 322.3" stroke="#5a4a3a" stroke-width="1.1"/><path d="M191.4 297.7L193.2 299.0" stroke="#caa882" stroke-width="1.1"/><path d="M173.1 266.6L175.2 267.0" stroke="#5a4a3a" stroke-width="1.1"/><path d="M212.4 266.0L215.1 268.8" stroke="#8a6a50" stroke-width="1.1"/><path d="M107.0 214.5L108.7 216.4" stroke="#6a4a3a" stroke-width="1.1"/><path d="M137.9 278.6L134.3 280.1" stroke="#5a4a3a" stroke-width="1.1"/><path d="M230.2 306.3L228.8 308.2" stroke="#c8a07a" stroke-width="1.1"/><path d="M197.5 273.2L198.0 275.2" stroke="#c8a07a" stroke-width="1.1"/><path d="M207.3 288.5L204.9 289.8" stroke="#c8a07a" stroke-width="1.1"/><path d="M232.9 288.3L229.1 288.5" stroke="#caa882" stroke-width="1.1"/><path d="M175.0 310.7L174.2 312.2" stroke="#9c7458" stroke-width="1.1"/><path d="M153.4 283.5L151.9 284.3" stroke="#caa882" stroke-width="1.1"/><path d="M156.1 328.4L153.1 330.0" stroke="#c8a07a" stroke-width="1.1"/><path d="M208.6 322.1L208.4 325.6" stroke="#8a6a50" stroke-width="1.1"/><path d="M230.6 328.7L231.0 330.3" stroke="#6a4a3a" stroke-width="1.1"/><path d="M193.4 309.9L193.5 312.9" stroke="#c8a07a" stroke-width="1.1"/><path d="M204.8 271.4L207.7 273.8" stroke="#5a4a3a" stroke-width="1.1"/><path d="M137.9 320.1L138.7 322.2" stroke="#a88a6c" stroke-width="1.1"/><path d="M246.7 248.3L248.9 248.9" stroke="#5a4a3a" stroke-width="1.1"/><path d="M165.1 268.5L163.7 269.3" stroke="#5a4a3a" stroke-width="1.1"/><path d="M197.6 243.7L199.2 244.3" stroke="#caa882" stroke-width="1.1"/><path d="M176.7 301.5L175.1 303.3" stroke="#6a4a3a" stroke-width="1.1"/><path d="M119.2 243.5L117.5 245.6" stroke="#c8a07a" stroke-width="1.1"/><path d="M244.5 310.1L244.6 312.4" stroke="#6a4a3a" stroke-width="1.1"/><path d="M229.4 269.0L227.7 271.2" stroke="#caa882" stroke-width="1.1"/><path d="M104.2 218.4L106.4 219.0" stroke="#7e5844" stroke-width="1.1"/><path d="M151.9 322.4L150.4 323.8" stroke="#b08466" stroke-width="1.1"/><path d="M239.7 277.5L242.1 277.9" stroke="#caa882" stroke-width="1.1"/><path d="M248.4 316.9L249.7 318.9" stroke="#5a4a3a" stroke-width="1.1"/><path d="M108.3 238.7L110.9 239.2" stroke="#9c7458" stroke-width="1.1"/><path d="M202.9 259.7L202.0 262.3" stroke="#6a4a3a" stroke-width="1.1"/><path d="M155.8 263.0L157.7 265.0" stroke="#8a6a50" stroke-width="1.1"/><path d="M152.7 332.4L154.8 333.5" stroke="#b08466" stroke-width="1.1"/><path d="M111.8 228.2L114.4 228.8" stroke="#5a4a3a" stroke-width="1.1"/><path d="M124.5 270.2L123.4 273.3" stroke="#c8a07a" stroke-width="1.1"/><path d="M150.4 290.8L149.7 292.7" stroke="#a88a6c" stroke-width="1.1"/><path d="M167.9 313.9L167.2 315.6" stroke="#7e5844" stroke-width="1.1"/><path d="M184.0 278.4L185.8 279.4" stroke="#c8a07a" stroke-width="1.1"/><path d="M131.2 241.7L128.7 241.8" stroke="#caa882" stroke-width="1.1"/><path d="M161.4 258.6L159.7 258.9" stroke="#6a4a3a" stroke-width="1.1"/><path d="M104.2 217.4L106.1 220.2" stroke="#a88a6c" stroke-width="1.1"/><path d="M141.0 271.4L143.1 273.3" stroke="#5a4a3a" stroke-width="1.1"/><path d="M176.6 274.7L177.2 278.0" stroke="#6a4a3a" stroke-width="1.1"/><path d="M169.1 292.8L169.0 295.4" stroke="#9c7458" stroke-width="1.1"/><path d="M185.2 292.5L182.5 292.5" stroke="#9c7458" stroke-width="1.1"/><path d="M240.1 327.5L240.4 331.3" stroke="#b08466" stroke-width="1.1"/><path d="M129.2 301.1L128.2 303.0" stroke="#6a4a3a" stroke-width="1.1"/><path d="M142.7 277.4L142.2 280.0" stroke="#5a4a3a" stroke-width="1.1"/><path d="M180.9 298.8L179.3 300.1" stroke="#b08466" stroke-width="1.1"/><path d="M124.5 297.1L127.6 298.5" stroke="#b08466" stroke-width="1.1"/><path d="M236.3 261.2L238.6 262.5" stroke="#caa882" stroke-width="1.1"/><path d="M243.6 332.4L246.2 334.9" stroke="#c8a07a" stroke-width="1.1"/><path d="M129.2 253.7L126.2 254.4" stroke="#9c7458" stroke-width="1.1"/><path d="M218.5 318.0L219.0 319.8" stroke="#9c7458" stroke-width="1.1"/><path d="M188.1 288.6L187.0 291.0" stroke="#caa882" stroke-width="1.1"/><path d="M161.9 292.3L163.1 294.0" stroke="#caa882" stroke-width="1.1"/><path d="M232.5 286.7L230.9 288.7" stroke="#a88a6c" stroke-width="1.1"/><path d="M250.2 327.1L248.8 329.8" stroke="#5a4a3a" stroke-width="1.1"/><path d="M112.2 241.0L114.3 243.8" stroke="#7e5844" stroke-width="1.1"/><path d="M194.4 310.2L195.8 311.4" stroke="#a88a6c" stroke-width="1.1"/><path d="M133.9 277.6L132.3 279.0" stroke="#a88a6c" stroke-width="1.1"/><path d="M164.4 301.6L161.1 302.1" stroke="#c8a07a" stroke-width="1.1"/><path d="M175.3 297.6L177.0 299.0" stroke="#6a4a3a" stroke-width="1.1"/><path d="M225.1 322.4L223.8 323.7" stroke="#a88a6c" stroke-width="1.1"/><path d="M192.9 277.1L195.2 277.2" stroke="#6a4a3a" stroke-width="1.1"/><path d="M224.4 243.3L224.1 245.1" stroke="#c8a07a" stroke-width="1.1"/><path d="M112.0 235.4L112.9 237.0" stroke="#7e5844" stroke-width="1.1"/><path d="M125.3 267.5L126.0 270.8" stroke="#b08466" stroke-width="1.1"/><path d="M136.1 320.2L136.9 321.6" stroke="#9c7458" stroke-width="1.1"/><path d="M218.5 318.6L216.3 318.8" stroke="#caa882" stroke-width="1.1"/><path d="M196.9 322.6L199.5 323.1" stroke="#7e5844" stroke-width="1.1"/><path d="M211.9 297.7L211.5 301.4" stroke="#5a4a3a" stroke-width="1.1"/><path d="M225.6 265.2L225.8 267.1" stroke="#8a6a50" stroke-width="1.1"/><path d="M230.5 274.0L227.7 275.2" stroke="#9c7458" stroke-width="1.1"/><path d="M209.2 290.2L212.3 290.9" stroke="#6a4a3a" stroke-width="1.1"/><path d="M164.1 304.3L163.2 308.0" stroke="#6a4a3a" stroke-width="1.1"/><path d="M232.4 247.2L233.0 251.1" stroke="#c8a07a" stroke-width="1.1"/><path d="M149.6 265.6L148.9 269.5" stroke="#8a6a50" stroke-width="1.1"/><path d="M251.4 255.4L250.3 258.2" stroke="#9c7458" stroke-width="1.1"/><path d="M158.8 330.1L160.3 332.5" stroke="#9c7458" stroke-width="1.1"/><path d="M137.7 328.5L137.1 330.1" stroke="#8a6a50" stroke-width="1.1"/><path d="M190.3 319.5L190.1 321.2" stroke="#9c7458" stroke-width="1.1"/><path d="M121.8 213.5L124.5 215.9" stroke="#a88a6c" stroke-width="1.1"/><path d="M218.6 326.5L220.1 328.7" stroke="#8a6a50" stroke-width="1.1"/><path d="M159.7 333.9L157.6 335.7" stroke="#5a4a3a" stroke-width="1.1"/><path d="M125.6 236.7L125.5 240.5" stroke="#5a4a3a" stroke-width="1.1"/><path d="M195.3 333.7L193.2 335.9" stroke="#b08466" stroke-width="1.1"/><path d="M213.7 247.0L216.3 248.6" stroke="#9c7458" stroke-width="1.1"/><path d="M166.8 277.0L164.9 279.4" stroke="#9c7458" stroke-width="1.1"/><path d="M251.9 305.3L249.8 305.5" stroke="#a88a6c" stroke-width="1.1"/><path d="M144.7 262.7L145.2 265.0" stroke="#7e5844" stroke-width="1.1"/><path d="M152.4 306.9L150.5 310.1" stroke="#5a4a3a" stroke-width="1.1"/><path d="M162.2 260.4L159.8 263.1" stroke="#a88a6c" stroke-width="1.1"/><path d="M108.5 208.8L106.5 210.3" stroke="#5a4a3a" stroke-width="1.1"/><path d="M196.8 316.0L196.9 317.7" stroke="#5a4a3a" stroke-width="1.1"/><path d="M209.4 266.2L207.5 268.0" stroke="#8a6a50" stroke-width="1.1"/><path d="M141.7 282.1L138.3 284.0" stroke="#b08466" stroke-width="1.1"/><path d="M150.5 251.4L149.2 253.4" stroke="#9c7458" stroke-width="1.1"/><path d="M144.1 311.7L148.0 312.1" stroke="#c8a07a" stroke-width="1.1"/><path d="M165.1 265.4L167.0 267.6" stroke="#6a4a3a" stroke-width="1.1"/><path d="M215.3 298.9L213.6 301.2" stroke="#a88a6c" stroke-width="1.1"/><path d="M234.6 303.2L233.9 305.8" stroke="#b08466" stroke-width="1.1"/><path d="M234.2 314.4L234.0 318.2" stroke="#a88a6c" stroke-width="1.1"/><path d="M235.8 282.4L236.7 285.9" stroke="#caa882" stroke-width="1.1"/><path d="M221.0 269.0L220.0 270.6" stroke="#7e5844" stroke-width="1.1"/><path d="M205.1 267.2L202.7 270.2" stroke="#a88a6c" stroke-width="1.1"/><path d="M150.4 323.9L151.9 324.5" stroke="#5a4a3a" stroke-width="1.1"/><path d="M246.7 246.3L244.5 246.4" stroke="#7e5844" stroke-width="1.1"/><path d="M149.9 286.9L150.0 288.8" stroke="#9c7458" stroke-width="1.1"/><path d="M182.3 306.4L179.7 307.9" stroke="#5a4a3a" stroke-width="1.1"/><path d="M184.9 300.3L186.7 300.4" stroke="#6a4a3a" stroke-width="1.1"/><path d="M148.9 303.0L150.4 304.2" stroke="#6a4a3a" stroke-width="1.1"/><path d="M235.5 302.8L238.8 304.6" stroke="#caa882" stroke-width="1.1"/><path d="M121.6 215.0L120.1 216.9" stroke="#b08466" stroke-width="1.1"/><path d="M152.3 282.9L150.3 285.4" stroke="#caa882" stroke-width="1.1"/><path d="M130.6 269.6L129.0 269.9" stroke="#7e5844" stroke-width="1.1"/><path d="M157.7 313.7L155.9 314.9" stroke="#8a6a50" stroke-width="1.1"/><path d="M188.9 272.1L186.4 274.5" stroke="#6a4a3a" stroke-width="1.1"/><path d="M220.3 321.8L222.8 324.3" stroke="#c8a07a" stroke-width="1.1"/><path d="M203.5 308.0L203.7 310.2" stroke="#7e5844" stroke-width="1.1"/><path d="M145.1 301.0L143.5 303.1" stroke="#6a4a3a" stroke-width="1.1"/><path d="M243.8 268.0L242.3 270.0" stroke="#caa882" stroke-width="1.1"/><path d="M241.7 324.1L239.9 326.3" stroke="#8a6a50" stroke-width="1.1"/><path d="M157.1 318.2L156.4 320.7" stroke="#c8a07a" stroke-width="1.1"/><path d="M175.6 295.5L176.4 297.9" stroke="#7e5844" stroke-width="1.1"/><path d="M194.2 314.3L192.4 315.2" stroke="#caa882" stroke-width="1.1"/><path d="M179.4 319.6L177.9 321.3" stroke="#b08466" stroke-width="1.1"/><path d="M148.2 328.3L151.1 328.8" stroke="#9c7458" stroke-width="1.1"/><path d="M111.0 237.9L109.6 241.4" stroke="#6a4a3a" stroke-width="1.1"/><path d="M178.1 302.7L176.0 303.4" stroke="#a88a6c" stroke-width="1.1"/><path d="M222.9 304.6L226.4 304.7" stroke="#b08466" stroke-width="1.1"/><path d="M207.7 265.0L209.1 266.6" stroke="#caa882" stroke-width="1.1"/><path d="M142.3 273.0L144.6 275.3" stroke="#7e5844" stroke-width="1.1"/><path d="M159.2 318.8L160.2 321.4" stroke="#a88a6c" stroke-width="1.1"/><path d="M124.6 267.0L127.3 268.5" stroke="#b08466" stroke-width="1.1"/><path d="M113.6 221.6L112.2 223.1" stroke="#a88a6c" stroke-width="1.1"/><path d="M139.5 308.5L141.6 308.8" stroke="#c8a07a" stroke-width="1.1"/><path d="M247.9 320.6L244.7 321.2" stroke="#a88a6c" stroke-width="1.1"/><path d="M225.6 272.1L225.9 274.6" stroke="#a88a6c" stroke-width="1.1"/><path d="M162.9 295.1L160.2 295.3" stroke="#b08466" stroke-width="1.1"/><path d="M204.3 327.3L201.6 328.1" stroke="#6a4a3a" stroke-width="1.1"/><path d="M125.2 234.3L124.1 238.0" stroke="#9c7458" stroke-width="1.1"/><path d="M165.8 304.0L165.0 307.5" stroke="#b08466" stroke-width="1.1"/><path d="M137.1 331.6L138.7 334.1" stroke="#6a4a3a" stroke-width="1.1"/><path d="M106.5 219.1L104.7 219.8" stroke="#8a6a50" stroke-width="1.1"/><path d="M231.0 332.0L230.8 334.2" stroke="#7e5844" stroke-width="1.1"/><path d="M119.9 254.0L116.6 256.2" stroke="#6a4a3a" stroke-width="1.1"/><path d="M193.4 282.4L190.5 283.5" stroke="#5a4a3a" stroke-width="1.1"/><path d="M218.0 309.8L216.5 312.2" stroke="#7e5844" stroke-width="1.1"/><path d="M124.1 263.0L126.2 263.2" stroke="#8a6a50" stroke-width="1.1"/><path d="M232.0 259.9L234.6 262.2" stroke="#7e5844" stroke-width="1.1"/><path d="M159.1 297.2L159.5 299.2" stroke="#caa882" stroke-width="1.1"/><path d="M204.8 266.4L208.0 268.0" stroke="#9c7458" stroke-width="1.1"/><path d="M214.8 278.4L213.9 280.2" stroke="#b08466" stroke-width="1.1"/><path d="M162.8 263.5L163.2 266.8" stroke="#7e5844" stroke-width="1.1"/><path d="M204.1 288.7L206.5 290.9" stroke="#caa882" stroke-width="1.1"/><path d="M154.5 259.6L155.7 263.3" stroke="#7e5844" stroke-width="1.1"/><path d="M131.1 231.3L129.8 233.0" stroke="#caa882" stroke-width="1.1"/><path d="M208.5 285.1L210.3 285.8" stroke="#caa882" stroke-width="1.1"/><path d="M245.4 263.6L248.1 263.7" stroke="#c8a07a" stroke-width="1.1"/><path d="M138.5 273.1L138.4 275.5" stroke="#5a4a3a" stroke-width="1.1"/><path d="M189.2 287.9L187.9 291.3" stroke="#7e5844" stroke-width="1.1"/><path d="M216.2 274.1L214.4 276.1" stroke="#6a4a3a" stroke-width="1.1"/><path d="M131.3 241.4L133.5 242.7" stroke="#8a6a50" stroke-width="1.1"/><path d="M159.4 327.7L156.2 328.1" stroke="#b08466" stroke-width="1.1"/><path d="M116.9 241.5L118.3 242.3" stroke="#9c7458" stroke-width="1.1"/><path d="M202.0 329.9L203.3 332.5" stroke="#7e5844" stroke-width="1.1"/><path d="M191.3 249.4L193.1 252.7" stroke="#5a4a3a" stroke-width="1.1"/><path d="M119.5 218.3L116.8 219.9" stroke="#caa882" stroke-width="1.1"/><path d="M220.9 251.9L219.2 255.1" stroke="#5a4a3a" stroke-width="1.1"/><path d="M167.8 281.2L167.0 282.9" stroke="#6a4a3a" stroke-width="1.1"/><path d="M176.9 265.9L175.2 268.7" stroke="#8a6a50" stroke-width="1.1"/><path d="M210.2 259.4L213.7 261.0" stroke="#9c7458" stroke-width="1.1"/><path d="M172.1 310.3L174.8 311.0" stroke="#7e5844" stroke-width="1.1"/><path d="M123.0 267.1L123.4 270.6" stroke="#caa882" stroke-width="1.1"/><path d="M222.0 300.4L219.0 300.8" stroke="#caa882" stroke-width="1.1"/><path d="M167.1 322.9L166.2 324.5" stroke="#6a4a3a" stroke-width="1.1"/><path d="M207.2 323.7L205.1 325.7" stroke="#5a4a3a" stroke-width="1.1"/><path d="M169.7 276.1L168.9 280.0" stroke="#9c7458" stroke-width="1.1"/><path d="M171.0 277.2L172.9 278.0" stroke="#5a4a3a" stroke-width="1.1"/><path d="M217.3 287.9L216.9 291.0" stroke="#5a4a3a" stroke-width="1.1"/><path d="M134.3 307.6L133.1 310.5" stroke="#9c7458" stroke-width="1.1"/><path d="M187.9 298.6L185.9 299.2" stroke="#caa882" stroke-width="1.1"/><path d="M148.0 320.7L144.8 321.8" stroke="#9c7458" stroke-width="1.1"/><path d="M125.9 286.4L123.8 287.1" stroke="#caa882" stroke-width="1.1"/><path d="M136.9 316.3L134.7 318.3" stroke="#7e5844" stroke-width="1.1"/><path d="M108.3 208.3L110.9 209.9" stroke="#a88a6c" stroke-width="1.1"/><path d="M107.2 220.8L109.0 223.0" stroke="#b08466" stroke-width="1.1"/><path d="M154.2 317.0L156.6 319.7" stroke="#caa882" stroke-width="1.1"/><path d="M120.1 278.6L122.9 279.6" stroke="#5a4a3a" stroke-width="1.1"/><path d="M120.1 239.1L116.9 240.3" stroke="#c8a07a" stroke-width="1.1"/><path d="M142.2 263.0L140.9 264.0" stroke="#5a4a3a" stroke-width="1.1"/><path d="M123.6 254.8L120.9 255.3" stroke="#caa882" stroke-width="1.1"/><path d="M108.2 209.7L109.1 212.5" stroke="#6a4a3a" stroke-width="1.1"/><path d="M232.7 302.7L230.4 306.0" stroke="#5a4a3a" stroke-width="1.1"/><path d="M137.5 328.6L138.0 331.2" stroke="#b08466" stroke-width="1.1"/><path d="M203.8 322.0L206.1 324.8" stroke="#7e5844" stroke-width="1.1"/><path d="M206.0 312.4L208.2 313.6" stroke="#c8a07a" stroke-width="1.1"/><path d="M194.8 312.4L194.8 315.8" stroke="#c8a07a" stroke-width="1.1"/><path d="M194.8 316.7L193.8 318.2" stroke="#7e5844" stroke-width="1.1"/><path d="M140.4 322.1L141.7 323.0" stroke="#6a4a3a" stroke-width="1.1"/><path d="M183.2 281.8L185.2 284.1" stroke="#9c7458" stroke-width="1.1"/><path d="M212.9 287.4L209.2 288.9" stroke="#9c7458" stroke-width="1.1"/><path d="M121.5 261.8L121.4 264.0" stroke="#8a6a50" stroke-width="1.1"/><path d="M238.4 258.5L236.7 260.5" stroke="#7e5844" stroke-width="1.1"/><path d="M121.4 267.9L123.2 269.8" stroke="#b08466" stroke-width="1.1"/><path d="M162.7 288.5L163.8 292.0" stroke="#b08466" stroke-width="1.1"/><path d="M181.6 302.3L181.2 306.1" stroke="#caa882" stroke-width="1.1"/><path d="M115.6 239.6L114.9 241.6" stroke="#5a4a3a" stroke-width="1.1"/><path d="M251.6 330.5L255.4 330.9" stroke="#7e5844" stroke-width="1.1"/><path d="M163.0 320.5L166.8 320.9" stroke="#8a6a50" stroke-width="1.1"/><path d="M174.2 310.8L172.7 313.2" stroke="#c8a07a" stroke-width="1.1"/><path d="M130.4 287.5L132.1 287.7" stroke="#caa882" stroke-width="1.1"/><path d="M148.2 325.4L147.3 328.5" stroke="#6a4a3a" stroke-width="1.1"/><path d="M190.0 292.3L192.3 292.5" stroke="#b08466" stroke-width="1.1"/><path d="M214.4 302.4L212.5 305.6" stroke="#b08466" stroke-width="1.1"/><path d="M124.3 270.4L122.6 271.6" stroke="#5a4a3a" stroke-width="1.1"/><path d="M144.9 267.9L146.1 270.2" stroke="#b08466" stroke-width="1.1"/><path d="M160.0 262.2L156.9 264.6" stroke="#9c7458" stroke-width="1.1"/><path d="M112.5 211.4L113.1 213.2" stroke="#7e5844" stroke-width="1.1"/><path d="M213.7 299.8L212.2 300.3" stroke="#a88a6c" stroke-width="1.1"/><path d="M224.5 328.5L226.5 329.1" stroke="#caa882" stroke-width="1.1"/><path d="M131.7 310.8L134.3 311.4" stroke="#caa882" stroke-width="1.1"/><path d="M176.7 259.8L179.5 261.7" stroke="#caa882" stroke-width="1.1"/><path d="M194.6 265.7L191.7 266.7" stroke="#5a4a3a" stroke-width="1.1"/><path d="M154.2 319.3L155.0 322.3" stroke="#6a4a3a" stroke-width="1.1"/><path d="M127.1 283.7L125.8 285.6" stroke="#7e5844" stroke-width="1.1"/><path d="M117.3 216.9L117.5 218.7" stroke="#b08466" stroke-width="1.1"/><path d="M145.7 284.0L148.0 286.5" stroke="#caa882" stroke-width="1.1"/><path d="M179.0 303.7L178.8 306.1" stroke="#5a4a3a" stroke-width="1.1"/><path d="M208.0 316.6L210.4 317.5" stroke="#5a4a3a" stroke-width="1.1"/><path d="M194.9 274.6L191.5 276.6" stroke="#7e5844" stroke-width="1.1"/><path d="M249.0 263.8L245.5 263.9" stroke="#b08466" stroke-width="1.1"/><path d="M159.4 262.6L156.9 265.2" stroke="#5a4a3a" stroke-width="1.1"/><path d="M145.9 330.7L147.7 331.6" stroke="#9c7458" stroke-width="1.1"/><path d="M168.7 246.1L167.9 249.5" stroke="#b08466" stroke-width="1.1"/><path d="M147.0 296.8L146.6 298.6" stroke="#5a4a3a" stroke-width="1.1"/><path d="M186.8 294.6L187.6 296.9" stroke="#6a4a3a" stroke-width="1.1"/><path d="M247.2 308.7L244.4 310.5" stroke="#caa882" stroke-width="1.1"/><path d="M240.5 277.0L238.2 280.2" stroke="#7e5844" stroke-width="1.1"/><path d="M182.9 333.7L179.1 334.1" stroke="#a88a6c" stroke-width="1.1"/><path d="M128.1 263.4L127.7 266.7" stroke="#6a4a3a" stroke-width="1.1"/><path d="M234.8 284.5L235.1 286.3" stroke="#8a6a50" stroke-width="1.1"/><path d="M164.1 265.9L164.7 268.9" stroke="#8a6a50" stroke-width="1.1"/><path d="M251.4 316.4L252.5 318.0" stroke="#7e5844" stroke-width="1.1"/><path d="M234.3 294.4L236.3 296.3" stroke="#8a6a50" stroke-width="1.1"/><path d="M177.5 310.8L176.2 312.3" stroke="#7e5844" stroke-width="1.1"/><path d="M230.2 329.4L227.1 331.4" stroke="#c8a07a" stroke-width="1.1"/><path d="M143.9 257.5L145.2 259.7" stroke="#5a4a3a" stroke-width="1.1"/><path d="M138.1 276.2L141.4 278.4" stroke="#7e5844" stroke-width="1.1"/><path d="M149.9 288.6L146.1 289.1" stroke="#c8a07a" stroke-width="1.1"/><path d="M202.8 271.2L201.9 273.4" stroke="#c8a07a" stroke-width="1.1"/><path d="M186.5 242.1L186.0 245.1" stroke="#7e5844" stroke-width="1.1"/><path d="M132.5 275.7L135.5 277.2" stroke="#6a4a3a" stroke-width="1.1"/><path d="M206.6 294.8L206.4 298.8" stroke="#c8a07a" stroke-width="1.1"/><path d="M208.5 241.8L210.3 245.1" stroke="#b08466" stroke-width="1.1"/><path d="M198.9 283.0L195.6 285.0" stroke="#caa882" stroke-width="1.1"/><path d="M145.7 309.1L144.2 312.4" stroke="#b08466" stroke-width="1.1"/><path d="M235.3 299.8L238.5 299.9" stroke="#8a6a50" stroke-width="1.1"/><path d="M128.0 243.0L129.5 245.1" stroke="#9c7458" stroke-width="1.1"/><path d="M243.8 276.6L244.2 279.3" stroke="#6a4a3a" stroke-width="1.1"/><path d="M175.2 248.5L178.3 249.4" stroke="#9c7458" stroke-width="1.1"/><path d="M177.0 308.4L179.1 308.8" stroke="#7e5844" stroke-width="1.1"/><path d="M214.2 331.1L214.6 333.3" stroke="#8a6a50" stroke-width="1.1"/><path d="M134.3 282.0L133.9 284.6" stroke="#6a4a3a" stroke-width="1.1"/><path d="M131.7 280.9L130.8 283.3" stroke="#b08466" stroke-width="1.1"/><path d="M230.3 273.6L230.9 275.1" stroke="#6a4a3a" stroke-width="1.1"/><path d="M217.1 270.1L217.3 273.1" stroke="#c8a07a" stroke-width="1.1"/><path d="M234.8 274.3L232.3 275.1" stroke="#9c7458" stroke-width="1.1"/><path d="M253.7 298.8L255.1 300.3" stroke="#5a4a3a" stroke-width="1.1"/><path d="M130.8 240.7L127.6 242.1" stroke="#6a4a3a" stroke-width="1.1"/><path d="M137.5 281.5L137.1 284.8" stroke="#5a4a3a" stroke-width="1.1"/><path d="M157.0 303.8L154.0 304.3" stroke="#9c7458" stroke-width="1.1"/><path d="M118.3 246.4L119.3 250.1" stroke="#8a6a50" stroke-width="1.1"/><path d="M220.0 284.0L223.6 285.6" stroke="#8a6a50" stroke-width="1.1"/><path d="M163.4 289.0L166.8 290.0" stroke="#5a4a3a" stroke-width="1.1"/><path d="M178.1 304.9L176.1 305.5" stroke="#a88a6c" stroke-width="1.1"/><path d="M226.1 309.5L228.6 312.1" stroke="#b08466" stroke-width="1.1"/><path d="M148.1 243.8L144.6 245.2" stroke="#b08466" stroke-width="1.1"/><path d="M172.9 269.9L169.5 271.5" stroke="#a88a6c" stroke-width="1.1"/><path d="M172.5 324.4L172.6 327.5" stroke="#b08466" stroke-width="1.1"/><path d="M110.5 238.8L110.0 241.4" stroke="#7e5844" stroke-width="1.1"/><path d="M153.0 293.3L154.1 294.5" stroke="#caa882" stroke-width="1.1"/><path d="M135.0 302.6L136.5 303.3" stroke="#c8a07a" stroke-width="1.1"/><path d="M198.6 321.1L195.0 322.5" stroke="#9c7458" stroke-width="1.1"/><path d="M136.7 294.4L138.2 295.4" stroke="#caa882" stroke-width="1.1"/><path d="M132.9 255.4L130.7 256.9" stroke="#b08466" stroke-width="1.1"/><path d="M124.9 257.2L123.0 257.3" stroke="#a88a6c" stroke-width="1.1"/><path d="M111.0 207.8L107.6 208.9" stroke="#c8a07a" stroke-width="1.1"/><path d="M157.1 265.3L159.1 267.4" stroke="#8a6a50" stroke-width="1.1"/><path d="M252.8 310.3L250.6 313.0" stroke="#caa882" stroke-width="1.1"/><path d="M182.3 250.0L185.1 250.7" stroke="#a88a6c" stroke-width="1.1"/><path d="M146.9 261.1L147.6 263.4" stroke="#c8a07a" stroke-width="1.1"/><path d="M112.2 218.8L111.2 221.7" stroke="#7e5844" stroke-width="1.1"/><path d="M216.7 313.3L218.4 315.0" stroke="#b08466" stroke-width="1.1"/><path d="M230.3 289.9L233.0 291.4" stroke="#caa882" stroke-width="1.1"/><path d="M144.2 290.2L143.3 292.0" stroke="#9c7458" stroke-width="1.1"/><path d="M241.0 312.2L239.6 315.6" stroke="#b08466" stroke-width="1.1"/><path d="M245.1 332.2L242.9 335.0" stroke="#8a6a50" stroke-width="1.1"/><path d="M219.1 289.3L218.1 291.0" stroke="#9c7458" stroke-width="1.1"/><path d="M147.9 235.8L149.6 237.1" stroke="#c8a07a" stroke-width="1.1"/><path d="M227.8 272.0L230.4 274.8" stroke="#a88a6c" stroke-width="1.1"/><path d="M207.9 282.6L210.6 282.9" stroke="#7e5844" stroke-width="1.1"/><path d="M171.5 243.7L170.7 245.1" stroke="#7e5844" stroke-width="1.1"/><path d="M221.6 290.8L221.1 292.5" stroke="#c8a07a" stroke-width="1.1"/><path d="M144.7 327.3L142.6 328.3" stroke="#7e5844" stroke-width="1.1"/><path d="M169.1 250.5L168.7 252.2" stroke="#5a4a3a" stroke-width="1.1"/><path d="M200.0 287.8L199.8 290.5" stroke="#8a6a50" stroke-width="1.1"/><path d="M119.4 209.8L121.5 213.2" stroke="#6a4a3a" stroke-width="1.1"/><path d="M139.8 313.3L138.9 315.8" stroke="#6a4a3a" stroke-width="1.1"/><path d="M143.1 244.4L145.2 245.4" stroke="#6a4a3a" stroke-width="1.1"/><path d="M242.2 301.8L240.1 302.7" stroke="#5a4a3a" stroke-width="1.1"/><path d="M112.9 228.9L115.5 230.5" stroke="#caa882" stroke-width="1.1"/><path d="M167.7 297.9L169.4 299.4" stroke="#b08466" stroke-width="1.1"/><path d="M106.9 212.2L109.5 214.6" stroke="#5a4a3a" stroke-width="1.1"/><path d="M140.9 251.3L139.3 252.8" stroke="#9c7458" stroke-width="1.1"/><path d="M229.0 331.4L231.5 333.1" stroke="#9c7458" stroke-width="1.1"/><path d="M241.5 273.1L238.4 275.2" stroke="#7e5844" stroke-width="1.1"/><path d="M146.6 271.7L145.5 273.0" stroke="#a88a6c" stroke-width="1.1"/><path d="M145.9 291.0L147.4 293.0" stroke="#caa882" stroke-width="1.1"/><path d="M218.6 292.0L216.2 294.7" stroke="#9c7458" stroke-width="1.1"/><path d="M141.6 263.5L144.0 265.5" stroke="#6a4a3a" stroke-width="1.1"/><path d="M200.9 313.0L204.5 313.9" stroke="#9c7458" stroke-width="1.1"/><path d="M231.8 242.8L229.5 243.0" stroke="#caa882" stroke-width="1.1"/><path d="M146.7 329.3L150.4 329.8" stroke="#caa882" stroke-width="1.1"/><path d="M147.0 280.2L148.8 281.3" stroke="#6a4a3a" stroke-width="1.1"/><path d="M127.7 290.0L131.6 290.0" stroke="#caa882" stroke-width="1.1"/><path d="M192.3 311.9L193.3 313.5" stroke="#b08466" stroke-width="1.1"/><path d="M182.5 327.5L181.1 329.9" stroke="#6a4a3a" stroke-width="1.1"/><path d="M114.2 214.3L112.4 216.1" stroke="#6a4a3a" stroke-width="1.1"/><path d="M132.3 315.0L131.8 317.0" stroke="#b08466" stroke-width="1.1"/><path d="M113.3 243.3L109.8 243.8" stroke="#5a4a3a" stroke-width="1.1"/><path d="M187.0 316.5L184.8 318.0" stroke="#5a4a3a" stroke-width="1.1"/><path d="M190.0 250.9L190.1 252.8" stroke="#c8a07a" stroke-width="1.1"/><path d="M175.9 321.8L178.4 323.4" stroke="#6a4a3a" stroke-width="1.1"/><path d="M159.5 249.8L161.7 251.9" stroke="#5a4a3a" stroke-width="1.1"/><path d="M187.5 247.7L188.5 250.4" stroke="#6a4a3a" stroke-width="1.1"/><path d="M187.9 263.2L190.5 264.6" stroke="#caa882" stroke-width="1.1"/><path d="M150.1 250.6L147.4 253.5" stroke="#9c7458" stroke-width="1.1"/><path d="M127.0 306.6L130.6 307.6" stroke="#5a4a3a" stroke-width="1.1"/><path d="M235.0 334.2L234.2 335.7" stroke="#a88a6c" stroke-width="1.1"/><path d="M254.8 270.1L252.8 270.4" stroke="#a88a6c" stroke-width="1.1"/><path d="M163.7 254.3L164.9 256.0" stroke="#caa882" stroke-width="1.1"/><path d="M182.0 313.8L185.5 314.2" stroke="#7e5844" stroke-width="1.1"/><path d="M172.5 262.6L173.1 265.0" stroke="#b08466" stroke-width="1.1"/><path d="M230.7 252.8L228.1 254.4" stroke="#9c7458" stroke-width="1.1"/><path d="M199.1 290.2L201.3 290.6" stroke="#8a6a50" stroke-width="1.1"/><path d="M252.4 263.8L251.9 265.7" stroke="#caa882" stroke-width="1.1"/><path d="M159.9 312.6L163.7 312.8" stroke="#a88a6c" stroke-width="1.1"/><path d="M218.0 320.0L215.7 320.2" stroke="#7e5844" stroke-width="1.1"/><path d="M119.5 248.0L120.4 250.1" stroke="#caa882" stroke-width="1.1"/><path d="M249.2 309.9L249.2 312.5" stroke="#a88a6c" stroke-width="1.1"/><path d="M198.9 322.7L199.6 326.6" stroke="#c8a07a" stroke-width="1.1"/><path d="M190.4 323.5L193.3 326.0" stroke="#caa882" stroke-width="1.1"/><path d="M104.0 209.0L106.8 209.1" stroke="#b08466" stroke-width="1.1"/><path d="M178.5 266.9L175.1 268.2" stroke="#caa882" stroke-width="1.1"/><path d="M127.3 248.5L126.5 250.0" stroke="#8a6a50" stroke-width="1.1"/><path d="M194.1 325.0L192.5 328.1" stroke="#a88a6c" stroke-width="1.1"/><path d="M131.0 295.4L133.6 297.4" stroke="#6a4a3a" stroke-width="1.1"/><path d="M119.9 229.2L121.4 230.2" stroke="#9c7458" stroke-width="1.1"/><path d="M195.2 257.9L194.5 261.8" stroke="#b08466" stroke-width="1.1"/><path d="M237.0 318.9L235.5 321.6" stroke="#9c7458" stroke-width="1.1"/><path d="M234.2 295.4L234.0 297.4" stroke="#a88a6c" stroke-width="1.1"/><path d="M180.3 287.3L184.3 287.4" stroke="#a88a6c" stroke-width="1.1"/><path d="M228.7 305.6L227.4 307.4" stroke="#6a4a3a" stroke-width="1.1"/><path d="M223.5 269.3L222.0 271.7" stroke="#9c7458" stroke-width="1.1"/><path d="M123.9 274.0L123.7 277.1" stroke="#9c7458" stroke-width="1.1"/><path d="M148.7 239.8L147.2 242.5" stroke="#b08466" stroke-width="1.1"/><path d="M252.3 328.5L254.6 329.9" stroke="#9c7458" stroke-width="1.1"/><path d="M196.8 311.3L198.9 312.9" stroke="#9c7458" stroke-width="1.1"/><path d="M168.1 278.2L168.4 281.2" stroke="#6a4a3a" stroke-width="1.1"/><path d="M212.5 254.4L211.1 257.7" stroke="#5a4a3a" stroke-width="1.1"/><path d="M177.6 277.8L178.4 280.4" stroke="#8a6a50" stroke-width="1.1"/><path d="M181.6 279.6L183.9 281.3" stroke="#6a4a3a" stroke-width="1.1"/><path d="M135.1 264.8L133.0 266.5" stroke="#6a4a3a" stroke-width="1.1"/><path d="M133.6 285.5L137.3 286.8" stroke="#6a4a3a" stroke-width="1.1"/><path d="M152.1 298.2L154.2 301.0" stroke="#8a6a50" stroke-width="1.1"/><path d="M211.3 280.3L210.1 281.7" stroke="#a88a6c" stroke-width="1.1"/><path d="M180.0 317.1L178.1 317.7" stroke="#caa882" stroke-width="1.1"/><path d="M223.8 296.6L220.3 298.5" stroke="#9c7458" stroke-width="1.1"/><path d="M129.7 247.3L128.3 249.2" stroke="#caa882" stroke-width="1.1"/><path d="M117.6 261.6L119.1 264.5" stroke="#a88a6c" stroke-width="1.1"/><path d="M141.6 322.6L140.0 323.3" stroke="#b08466" stroke-width="1.1"/><path d="M223.5 259.6L226.1 261.6" stroke="#8a6a50" stroke-width="1.1"/><path d="M132.9 267.6L130.9 271.0" stroke="#8a6a50" stroke-width="1.1"/><path d="M170.3 271.7L171.7 272.6" stroke="#a88a6c" stroke-width="1.1"/><path d="M188.3 263.1L188.4 265.7" stroke="#caa882" stroke-width="1.1"/><path d="M179.1 279.8L180.4 281.4" stroke="#6a4a3a" stroke-width="1.1"/><path d="M201.1 281.8L201.3 284.1" stroke="#b08466" stroke-width="1.1"/><path d="M174.6 271.0L173.6 272.2" stroke="#b08466" stroke-width="1.1"/><path d="M227.7 326.0L226.1 326.6" stroke="#9c7458" stroke-width="1.1"/><path d="M249.9 273.3L248.1 276.0" stroke="#a88a6c" stroke-width="1.1"/><path d="M167.0 309.9L164.2 310.9" stroke="#9c7458" stroke-width="1.1"/><path d="M218.7 299.5L215.6 301.0" stroke="#a88a6c" stroke-width="1.1"/><path d="M207.3 280.5L206.4 282.2" stroke="#8a6a50" stroke-width="1.1"/><path d="M237.2 282.6L234.7 282.8" stroke="#a88a6c" stroke-width="1.1"/><path d="M221.6 263.6L219.3 264.1" stroke="#8a6a50" stroke-width="1.1"/><path d="M245.1 279.6L245.1 281.3" stroke="#b08466" stroke-width="1.1"/><path d="M178.6 291.6L175.0 293.4" stroke="#5a4a3a" stroke-width="1.1"/><path d="M151.0 280.3L152.3 281.9" stroke="#7e5844" stroke-width="1.1"/><path d="M189.3 259.0L192.3 259.6" stroke="#6a4a3a" stroke-width="1.1"/><path d="M197.5 282.5L197.2 285.1" stroke="#c8a07a" stroke-width="1.1"/><path d="M137.5 278.7L138.3 282.2" stroke="#5a4a3a" stroke-width="1.1"/><path d="M200.4 265.3L202.6 265.6" stroke="#6a4a3a" stroke-width="1.1"/><path d="M139.6 255.7L142.9 256.9" stroke="#9c7458" stroke-width="1.1"/><path d="M104.1 204.6L103.9 207.9" stroke="#8a6a50" stroke-width="1.1"/><path d="M218.8 268.7L215.4 269.7" stroke="#caa882" stroke-width="1.1"/><path d="M136.1 316.8L136.8 318.4" stroke="#caa882" stroke-width="1.1"/><path d="M165.4 281.2L168.1 284.0" stroke="#9c7458" stroke-width="1.1"/><path d="M200.4 266.7L198.3 269.2" stroke="#9c7458" stroke-width="1.1"/><path d="M102.5 214.2L105.0 217.2" stroke="#caa882" stroke-width="1.1"/><path d="M207.2 275.8L207.6 279.0" stroke="#6a4a3a" stroke-width="1.1"/><path d="M170.4 280.1L172.5 281.7" stroke="#caa882" stroke-width="1.1"/><path d="M111.0 245.7L113.4 247.5" stroke="#9c7458" stroke-width="1.1"/><path d="M182.2 272.9L182.7 276.2" stroke="#8a6a50" stroke-width="1.1"/><path d="M237.2 270.7L239.2 272.2" stroke="#5a4a3a" stroke-width="1.1"/><path d="M121.8 235.4L123.8 236.5" stroke="#5a4a3a" stroke-width="1.1"/><path d="M232.9 286.1L231.2 287.5" stroke="#7e5844" stroke-width="1.1"/><path d="M132.4 298.6L131.8 300.5" stroke="#5a4a3a" stroke-width="1.1"/><path d="M161.3 314.7L164.9 315.7" stroke="#9c7458" stroke-width="1.1"/><path d="M139.6 318.0L141.3 319.9" stroke="#a88a6c" stroke-width="1.1"/><path d="M204.1 303.6L205.7 305.7" stroke="#8a6a50" stroke-width="1.1"/><path d="M212.6 286.8L211.7 289.5" stroke="#caa882" stroke-width="1.1"/><path d="M178.5 277.0L179.4 280.2" stroke="#5a4a3a" stroke-width="1.1"/><path d="M118.9 221.5L117.6 223.2" stroke="#caa882" stroke-width="1.1"/><path d="M231.7 291.9L231.0 294.4" stroke="#b08466" stroke-width="1.1"/><path d="M131.5 299.8L133.8 301.9" stroke="#8a6a50" stroke-width="1.1"/><path d="M169.7 258.1L171.0 259.9" stroke="#c8a07a" stroke-width="1.1"/><path d="M169.4 267.4L167.7 267.4" stroke="#caa882" stroke-width="1.1"/><path d="M116.7 259.6L114.5 259.6" stroke="#caa882" stroke-width="1.1"/><path d="M248.2 283.9L246.9 285.1" stroke="#caa882" stroke-width="1.1"/><path d="M149.1 286.3L147.4 288.9" stroke="#caa882" stroke-width="1.1"/><path d="M223.5 330.6L224.6 333.8" stroke="#5a4a3a" stroke-width="1.1"/><path d="M217.8 307.9L216.3 310.3" stroke="#b08466" stroke-width="1.1"/><path d="M255.0 330.0L254.4 332.1" stroke="#5a4a3a" stroke-width="1.1"/><path d="M236.8 304.1L234.6 306.3" stroke="#b08466" stroke-width="1.1"/><path d="M189.8 268.9L189.8 272.0" stroke="#9c7458" stroke-width="1.1"/><path d="M169.6 314.3L173.1 315.4" stroke="#5a4a3a" stroke-width="1.1"/><path d="M209.2 331.5L210.7 332.5" stroke="#5a4a3a" stroke-width="1.1"/><path d="M133.2 240.2L135.9 243.1" stroke="#b08466" stroke-width="1.1"/><path d="M168.2 284.6L165.5 286.5" stroke="#b08466" stroke-width="1.1"/><path d="M199.7 267.1L202.9 268.5" stroke="#6a4a3a" stroke-width="1.1"/><path d="M153.0 270.4L156.7 270.7" stroke="#c8a07a" stroke-width="1.1"/><path d="M128.8 306.0L128.3 307.8" stroke="#5a4a3a" stroke-width="1.1"/><path d="M253.5 260.1L252.0 263.3" stroke="#6a4a3a" stroke-width="1.1"/><path d="M167.8 260.2L166.2 261.2" stroke="#8a6a50" stroke-width="1.1"/><path d="M148.2 314.0L150.3 315.3" stroke="#8a6a50" stroke-width="1.1"/><path d="M176.0 257.5L179.9 257.7" stroke="#caa882" stroke-width="1.1"/><path d="M120.0 269.6L122.3 272.5" stroke="#6a4a3a" stroke-width="1.1"/><path d="M165.2 269.7L165.2 273.5" stroke="#6a4a3a" stroke-width="1.1"/><path d="M240.5 323.9L240.0 325.9" stroke="#8a6a50" stroke-width="1.1"/><path d="M121.5 227.4L119.4 230.1" stroke="#8a6a50" stroke-width="1.1"/><path d="M129.6 224.6L128.9 228.0" stroke="#9c7458" stroke-width="1.1"/><path d="M132.9 252.3L131.0 254.0" stroke="#a88a6c" stroke-width="1.1"/><path d="M196.6 316.3L200.0 316.4" stroke="#8a6a50" stroke-width="1.1"/><path d="M170.8 311.9L172.9 314.0" stroke="#6a4a3a" stroke-width="1.1"/><path d="M234.6 293.0L236.3 296.3" stroke="#6a4a3a" stroke-width="1.1"/><path d="M209.8 309.7L209.1 311.7" stroke="#6a4a3a" stroke-width="1.1"/><path d="M247.9 262.6L250.4 264.8" stroke="#a88a6c" stroke-width="1.1"/><path d="M151.8 282.8L148.9 283.0" stroke="#8a6a50" stroke-width="1.1"/><path d="M158.1 306.7L156.8 308.2" stroke="#6a4a3a" stroke-width="1.1"/><path d="M124.0 280.6L121.1 282.9" stroke="#7e5844" stroke-width="1.1"/><path d="M193.9 294.0L194.9 296.8" stroke="#7e5844" stroke-width="1.1"/><path d="M176.0 274.7L177.9 275.7" stroke="#8a6a50" stroke-width="1.1"/><path d="M197.2 285.5L194.5 286.0" stroke="#c8a07a" stroke-width="1.1"/><path d="M147.3 330.6L146.2 334.4" stroke="#7e5844" stroke-width="1.1"/><path d="M193.3 319.5L194.8 320.5" stroke="#5a4a3a" stroke-width="1.1"/><path d="M180.5 259.6L179.1 262.9" stroke="#6a4a3a" stroke-width="1.1"/><path d="M225.2 292.7L223.2 293.0" stroke="#8a6a50" stroke-width="1.1"/><path d="M190.4 252.8L190.2 256.4" stroke="#b08466" stroke-width="1.1"/><path d="M195.3 316.8L193.7 317.1" stroke="#9c7458" stroke-width="1.1"/><path d="M231.8 298.9L234.2 300.4" stroke="#7e5844" stroke-width="1.1"/><path d="M141.4 278.6L139.6 279.0" stroke="#b08466" stroke-width="1.1"/><path d="M160.8 328.2L157.6 329.2" stroke="#6a4a3a" stroke-width="1.1"/><path d="M187.7 249.9L188.8 251.9" stroke="#a88a6c" stroke-width="1.1"/><path d="M222.5 320.0L224.3 321.0" stroke="#5a4a3a" stroke-width="1.1"/><path d="M212.7 305.2L212.6 307.3" stroke="#9c7458" stroke-width="1.1"/><path d="M134.4 246.5L131.6 248.3" stroke="#c8a07a" stroke-width="1.1"/><path d="M205.7 304.1L206.3 307.0" stroke="#5a4a3a" stroke-width="1.1"/><path d="M214.1 261.7L213.0 264.5" stroke="#6a4a3a" stroke-width="1.1"/><path d="M158.3 286.8L160.6 288.0" stroke="#c8a07a" stroke-width="1.1"/><path d="M174.8 270.0L177.4 271.8" stroke="#caa882" stroke-width="1.1"/><path d="M148.9 293.0L148.2 294.6" stroke="#5a4a3a" stroke-width="1.1"/><path d="M188.5 329.3L188.5 333.1" stroke="#5a4a3a" stroke-width="1.1"/><path d="M127.5 253.0L128.6 255.0" stroke="#6a4a3a" stroke-width="1.1"/><path d="M175.8 269.4L172.6 270.8" stroke="#b08466" stroke-width="1.1"/><path d="M235.7 289.0L234.9 291.0" stroke="#c8a07a" stroke-width="1.1"/><path d="M156.2 308.7L156.3 312.2" stroke="#9c7458" stroke-width="1.1"/><path d="M136.2 247.2L132.9 248.5" stroke="#a88a6c" stroke-width="1.1"/><path d="M202.9 314.3L201.6 317.1" stroke="#5a4a3a" stroke-width="1.1"/><path d="M118.8 254.8L121.0 256.9" stroke="#8a6a50" stroke-width="1.1"/><path d="M239.9 315.8L243.2 318.0" stroke="#8a6a50" stroke-width="1.1"/><path d="M219.4 320.4L217.9 322.6" stroke="#9c7458" stroke-width="1.1"/><path d="M240.8 319.5L241.4 321.8" stroke="#c8a07a" stroke-width="1.1"/><path d="M229.1 265.6L232.1 268.2" stroke="#8a6a50" stroke-width="1.1"/><path d="M131.8 242.8L128.6 244.4" stroke="#b08466" stroke-width="1.1"/><path d="M125.1 252.0L124.8 255.5" stroke="#5a4a3a" stroke-width="1.1"/><path d="M135.5 285.0L133.9 286.5" stroke="#b08466" stroke-width="1.1"/><path d="M237.0 256.2L235.0 257.3" stroke="#a88a6c" stroke-width="1.1"/><path d="M231.0 274.6L228.8 275.3" stroke="#5a4a3a" stroke-width="1.1"/><path d="M255.8 317.5L252.1 318.4" stroke="#8a6a50" stroke-width="1.1"/><path d="M232.3 323.9L230.4 325.7" stroke="#8a6a50" stroke-width="1.1"/><path d="M194.7 311.1L194.6 314.9" stroke="#c8a07a" stroke-width="1.1"/><path d="M118.3 264.8L120.0 265.8" stroke="#9c7458" stroke-width="1.1"/><path d="M135.6 270.8L139.0 272.6" stroke="#c8a07a" stroke-width="1.1"/><path d="M187.8 289.4L185.0 289.4" stroke="#9c7458" stroke-width="1.1"/><path d="M183.4 270.5L180.9 271.0" stroke="#9c7458" stroke-width="1.1"/><path d="M185.8 308.2L188.1 311.3" stroke="#a88a6c" stroke-width="1.1"/><path d="M112.7 241.3L115.1 242.6" stroke="#a88a6c" stroke-width="1.1"/><path d="M150.0 323.2L152.4 324.5" stroke="#c8a07a" stroke-width="1.1"/><path d="M125.8 287.7L124.7 289.3" stroke="#b08466" stroke-width="1.1"/><path d="M197.0 292.4L196.7 296.0" stroke="#c8a07a" stroke-width="1.1"/><path d="M192.2 318.4L192.2 320.4" stroke="#caa882" stroke-width="1.1"/><path d="M119.5 265.3L121.3 266.5" stroke="#7e5844" stroke-width="1.1"/><path d="M147.3 244.6L144.3 245.1" stroke="#7e5844" stroke-width="1.1"/><path d="M180.5 265.0L179.5 266.6" stroke="#b08466" stroke-width="1.1"/><path d="M112.4 252.3L114.0 252.5" stroke="#9c7458" stroke-width="1.1"/><path d="M118.4 239.7L119.9 242.6" stroke="#9c7458" stroke-width="1.1"/><path d="M113.1 252.7L114.2 253.9" stroke="#a88a6c" stroke-width="1.1"/><path d="M126.9 267.0L129.4 268.8" stroke="#a88a6c" stroke-width="1.1"/><path d="M214.0 286.8L216.2 287.9" stroke="#7e5844" stroke-width="1.1"/><path d="M216.5 271.6L215.2 274.5" stroke="#5a4a3a" stroke-width="1.1"/><path d="M152.1 323.8L150.4 324.0" stroke="#7e5844" stroke-width="1.1"/><path d="M136.1 293.6L138.2 294.2" stroke="#7e5844" stroke-width="1.1"/><path d="M156.1 315.0L159.8 316.3" stroke="#a88a6c" stroke-width="1.1"/><path d="M206.6 289.7L208.1 292.7" stroke="#c8a07a" stroke-width="1.1"/><path d="M112.2 226.9L113.7 228.7" stroke="#7e5844" stroke-width="1.1"/><path d="M112.6 205.1L114.1 206.3" stroke="#caa882" stroke-width="1.1"/><path d="M146.8 332.1L149.3 333.6" stroke="#a88a6c" stroke-width="1.1"/><path d="M179.6 252.1L178.1 255.5" stroke="#6a4a3a" stroke-width="1.1"/><path d="M220.5 292.4L221.0 294.2" stroke="#caa882" stroke-width="1.1"/><path d="M149.6 323.7L149.8 327.5" stroke="#7e5844" stroke-width="1.1"/><path d="M137.7 262.4L141.4 262.6" stroke="#c8a07a" stroke-width="1.1"/><path d="M136.8 272.3L139.0 274.5" stroke="#5a4a3a" stroke-width="1.1"/><path d="M254.7 287.5L252.0 287.8" stroke="#8a6a50" stroke-width="1.1"/><path d="M129.5 275.5L127.5 278.7" stroke="#caa882" stroke-width="1.1"/><path d="M188.8 306.3L189.4 308.8" stroke="#9c7458" stroke-width="1.1"/><path d="M145.9 279.4L147.5 280.8" stroke="#a88a6c" stroke-width="1.1"/><path d="M157.4 280.6L159.5 281.1" stroke="#a88a6c" stroke-width="1.1"/><path d="M161.6 270.2L164.9 270.3" stroke="#9c7458" stroke-width="1.1"/><path d="M204.2 302.5L201.3 305.1" stroke="#8a6a50" stroke-width="1.1"/><path d="M108.4 206.0L109.9 207.5" stroke="#6a4a3a" stroke-width="1.1"/><path d="M168.0 288.9L166.1 290.5" stroke="#8a6a50" stroke-width="1.1"/><path d="M191.9 306.6L194.7 307.0" stroke="#a88a6c" stroke-width="1.1"/><path d="M218.4 266.8L220.5 268.5" stroke="#5a4a3a" stroke-width="1.1"/><path d="M209.4 297.9L212.7 300.1" stroke="#a88a6c" stroke-width="1.1"/><path d="M178.7 309.7L174.9 310.6" stroke="#8a6a50" stroke-width="1.1"/><path d="M208.4 321.6L207.4 324.7" stroke="#b08466" stroke-width="1.1"/><path d="M221.8 314.5L225.4 315.2" stroke="#caa882" stroke-width="1.1"/><path d="M241.5 327.0L242.9 328.1" stroke="#c8a07a" stroke-width="1.1"/><path d="M243.7 293.6L242.0 296.7" stroke="#5a4a3a" stroke-width="1.1"/><path d="M246.7 295.1L245.5 298.6" stroke="#5a4a3a" stroke-width="1.1"/><path d="M179.9 242.2L177.1 245.0" stroke="#5a4a3a" stroke-width="1.1"/><path d="M199.9 245.4L197.7 246.5" stroke="#5a4a3a" stroke-width="1.1"/><path d="M161.6 273.2L159.5 276.2" stroke="#9c7458" stroke-width="1.1"/><path d="M205.5 311.4L207.4 314.5" stroke="#5a4a3a" stroke-width="1.1"/><path d="M194.4 285.2L192.1 286.2" stroke="#caa882" stroke-width="1.1"/><path d="M148.0 321.5L149.0 323.5" stroke="#a88a6c" stroke-width="1.1"/><path d="M120.6 247.0L119.2 249.6" stroke="#a88a6c" stroke-width="1.1"/><path d="M151.0 267.7L151.6 270.2" stroke="#b08466" stroke-width="1.1"/><path d="M146.3 274.3L147.2 277.4" stroke="#b08466" stroke-width="1.1"/><path d="M213.2 284.1L214.1 285.5" stroke="#caa882" stroke-width="1.1"/><path d="M195.6 276.0L197.4 278.5" stroke="#6a4a3a" stroke-width="1.1"/><path d="M255.6 331.8L253.9 332.5" stroke="#b08466" stroke-width="1.1"/><path d="M252.7 301.1L251.7 302.3" stroke="#5a4a3a" stroke-width="1.1"/><path d="M184.6 245.5L183.4 248.7" stroke="#c8a07a" stroke-width="1.1"/><path d="M244.7 261.9L244.0 264.1" stroke="#7e5844" stroke-width="1.1"/><path d="M195.3 318.5L196.6 320.9" stroke="#b08466" stroke-width="1.1"/><path d="M131.3 259.5L128.9 261.9" stroke="#6a4a3a" stroke-width="1.1"/><path d="M197.0 265.6L200.4 267.1" stroke="#a88a6c" stroke-width="1.1"/><path d="M182.3 300.6L185.6 302.2" stroke="#9c7458" stroke-width="1.1"/><path d="M133.7 254.3L133.7 257.6" stroke="#7e5844" stroke-width="1.1"/><path d="M183.8 324.2L186.7 324.7" stroke="#8a6a50" stroke-width="1.1"/><path d="M220.6 262.1L219.4 264.9" stroke="#6a4a3a" stroke-width="1.1"/><path d="M169.6 322.0L172.8 322.2" stroke="#b08466" stroke-width="1.1"/><path d="M130.0 296.9L128.1 298.7" stroke="#8a6a50" stroke-width="1.1"/><path d="M129.0 277.0L125.6 277.4" stroke="#7e5844" stroke-width="1.1"/><path d="M204.1 296.3L201.9 299.3" stroke="#6a4a3a" stroke-width="1.1"/><path d="M135.2 267.2L137.5 268.4" stroke="#c8a07a" stroke-width="1.1"/><path d="M141.4 288.2L140.7 290.5" stroke="#5a4a3a" stroke-width="1.1"/><path d="M222.3 327.3L219.5 327.4" stroke="#5a4a3a" stroke-width="1.1"/><path d="M189.5 269.9L191.2 271.0" stroke="#b08466" stroke-width="1.1"/><path d="M119.7 263.8L116.5 264.5" stroke="#6a4a3a" stroke-width="1.1"/><path d="M142.4 280.7L140.3 283.3" stroke="#7e5844" stroke-width="1.1"/><path d="M250.4 304.7L250.6 307.1" stroke="#b08466" stroke-width="1.1"/><path d="M189.1 288.3L187.9 290.4" stroke="#c8a07a" stroke-width="1.1"/><path d="M178.3 311.7L180.9 311.9" stroke="#a88a6c" stroke-width="1.1"/><path d="M172.7 300.7L170.9 303.9" stroke="#5a4a3a" stroke-width="1.1"/><path d="M248.4 273.0L249.3 276.8" stroke="#b08466" stroke-width="1.1"/><path d="M254.8 325.2L252.8 327.8" stroke="#b08466" stroke-width="1.1"/><path d="M124.5 220.9L126.0 222.5" stroke="#a88a6c" stroke-width="1.1"/><path d="M165.2 266.6L162.1 267.7" stroke="#a88a6c" stroke-width="1.1"/><path d="M173.3 330.5L174.4 333.0" stroke="#caa882" stroke-width="1.1"/><path d="M112.7 246.1L114.3 248.7" stroke="#8a6a50" stroke-width="1.1"/><path d="M114.3 223.5L113.4 225.6" stroke="#6a4a3a" stroke-width="1.1"/><path d="M232.7 311.3L232.5 313.0" stroke="#c8a07a" stroke-width="1.1"/><path d="M171.9 310.8L173.8 311.0" stroke="#b08466" stroke-width="1.1"/><path d="M135.2 292.9L136.7 296.0" stroke="#5a4a3a" stroke-width="1.1"/><path d="M139.4 311.8L141.7 314.6" stroke="#a88a6c" stroke-width="1.1"/><path d="M212.2 305.4L211.4 308.4" stroke="#5a4a3a" stroke-width="1.1"/><path d="M126.0 286.1L126.2 288.1" stroke="#8a6a50" stroke-width="1.1"/><path d="M215.6 284.2L219.2 284.7" stroke="#7e5844" stroke-width="1.1"/><path d="M144.5 312.8L142.4 313.4" stroke="#c8a07a" stroke-width="1.1"/><path d="M183.2 281.0L180.7 282.2" stroke="#a88a6c" stroke-width="1.1"/><path d="M199.8 278.7L200.1 281.4" stroke="#c8a07a" stroke-width="1.1"/><path d="M223.9 324.7L222.2 325.7" stroke="#9c7458" stroke-width="1.1"/><path d="M175.4 279.7L172.8 282.1" stroke="#caa882" stroke-width="1.1"/><path d="M131.8 262.4L134.7 264.7" stroke="#5a4a3a" stroke-width="1.1"/><path d="M123.3 209.8L124.8 213.2" stroke="#5a4a3a" stroke-width="1.1"/><path d="M112.2 229.5L112.6 232.5" stroke="#b08466" stroke-width="1.1"/><path d="M182.8 255.9L180.8 257.0" stroke="#c8a07a" stroke-width="1.1"/><path d="M154.3 333.1L155.4 336.4" stroke="#caa882" stroke-width="1.1"/><path d="M142.8 264.2L141.7 267.5" stroke="#8a6a50" stroke-width="1.1"/><path d="M172.4 305.3L172.8 307.5" stroke="#5a4a3a" stroke-width="1.1"/><path d="M208.9 305.6L210.3 308.5" stroke="#7e5844" stroke-width="1.1"/><path d="M204.5 312.7L202.7 315.2" stroke="#8a6a50" stroke-width="1.1"/><path d="M193.5 280.9L190.7 282.1" stroke="#a88a6c" stroke-width="1.1"/><path d="M186.0 327.5L188.8 330.0" stroke="#a88a6c" stroke-width="1.1"/><path d="M241.3 332.2L245.1 333.2" stroke="#8a6a50" stroke-width="1.1"/><path d="M198.1 332.1L196.7 333.0" stroke="#c8a07a" stroke-width="1.1"/><path d="M161.5 289.6L163.5 290.4" stroke="#a88a6c" stroke-width="1.1"/><path d="M145.0 236.4L145.3 239.3" stroke="#7e5844" stroke-width="1.1"/><path d="M246.7 317.5L243.1 317.5" stroke="#6a4a3a" stroke-width="1.1"/><path d="M134.3 300.9L130.8 301.5" stroke="#caa882" stroke-width="1.1"/><path d="M247.9 291.8L245.2 294.6" stroke="#a88a6c" stroke-width="1.1"/><path d="M253.8 292.5L252.5 294.4" stroke="#c8a07a" stroke-width="1.1"/><path d="M215.8 313.3L217.0 314.4" stroke="#9c7458" stroke-width="1.1"/><path d="M183.1 298.9L185.4 300.2" stroke="#9c7458" stroke-width="1.1"/><path d="M211.3 318.2L213.5 318.3" stroke="#caa882" stroke-width="1.1"/><path d="M169.4 275.3L167.3 276.9" stroke="#7e5844" stroke-width="1.1"/><path d="M247.1 274.3L246.2 277.8" stroke="#7e5844" stroke-width="1.1"/><path d="M224.2 310.7L225.3 312.1" stroke="#caa882" stroke-width="1.1"/><path d="M240.5 329.0L241.5 331.4" stroke="#caa882" stroke-width="1.1"/><path d="M221.2 286.8L219.5 288.3" stroke="#6a4a3a" stroke-width="1.1"/><path d="M197.0 272.6L197.5 274.5" stroke="#7e5844" stroke-width="1.1"/><path d="M238.9 312.9L240.6 313.7" stroke="#9c7458" stroke-width="1.1"/><path d="M121.9 217.1L121.1 219.4" stroke="#a88a6c" stroke-width="1.1"/><path d="M234.1 276.8L237.2 279.3" stroke="#b08466" stroke-width="1.1"/><path d="M234.7 274.6L232.5 277.3" stroke="#7e5844" stroke-width="1.1"/><path d="M163.4 278.5L164.6 282.3" stroke="#caa882" stroke-width="1.1"/><path d="M214.0 293.5L212.9 295.7" stroke="#5a4a3a" stroke-width="1.1"/><path d="M201.9 287.1L203.8 289.7" stroke="#8a6a50" stroke-width="1.1"/><path d="M239.5 252.6L243.3 253.1" stroke="#a88a6c" stroke-width="1.1"/><path d="M169.3 283.1L171.6 285.5" stroke="#caa882" stroke-width="1.1"/><path d="M168.5 249.5L167.3 253.1" stroke="#6a4a3a" stroke-width="1.1"/><path d="M211.0 302.7L212.5 304.4" stroke="#5a4a3a" stroke-width="1.1"/><path d="M251.4 269.5L249.1 270.0" stroke="#6a4a3a" stroke-width="1.1"/><path d="M127.8 296.7L127.9 298.7" stroke="#9c7458" stroke-width="1.1"/><path d="M163.6 259.3L162.5 261.8" stroke="#b08466" stroke-width="1.1"/><path d="M194.6 322.3L192.7 324.8" stroke="#6a4a3a" stroke-width="1.1"/><path d="M134.8 298.0L137.1 300.9" stroke="#b08466" stroke-width="1.1"/><path d="M188.4 290.2L192.0 291.5" stroke="#6a4a3a" stroke-width="1.1"/><path d="M197.9 321.3L198.0 323.3" stroke="#caa882" stroke-width="1.1"/><path d="M195.9 257.4L197.2 258.4" stroke="#7e5844" stroke-width="1.1"/><path d="M112.3 251.8L114.8 253.4" stroke="#7e5844" stroke-width="1.1"/><path d="M221.3 269.6L221.1 272.5" stroke="#c8a07a" stroke-width="1.1"/><path d="M125.5 277.6L123.2 277.7" stroke="#c8a07a" stroke-width="1.1"/><path d="M131.4 289.1L129.8 290.3" stroke="#a88a6c" stroke-width="1.1"/><path d="M168.1 263.4L168.5 266.4" stroke="#5a4a3a" stroke-width="1.1"/><path d="M222.7 300.7L221.0 303.8" stroke="#caa882" stroke-width="1.1"/><path d="M170.8 320.7L171.9 323.4" stroke="#6a4a3a" stroke-width="1.1"/><path d="M134.9 296.0L138.3 297.8" stroke="#9c7458" stroke-width="1.1"/><path d="M211.0 243.1L209.2 244.5" stroke="#c8a07a" stroke-width="1.1"/><path d="M206.4 329.4L208.0 329.9" stroke="#caa882" stroke-width="1.1"/><path d="M119.5 230.8L115.9 231.1" stroke="#8a6a50" stroke-width="1.1"/><path d="M179.8 270.8L176.5 271.9" stroke="#caa882" stroke-width="1.1"/><path d="M201.1 331.8L199.6 333.5" stroke="#b08466" stroke-width="1.1"/><path d="M219.1 273.8L221.4 276.3" stroke="#a88a6c" stroke-width="1.1"/><path d="M141.4 329.2L140.2 330.5" stroke="#c8a07a" stroke-width="1.1"/><path d="M212.6 298.3L215.1 298.4" stroke="#a88a6c" stroke-width="1.1"/><path d="M188.1 245.5L187.5 247.2" stroke="#6a4a3a" stroke-width="1.1"/><path d="M192.1 330.5L191.3 332.2" stroke="#caa882" stroke-width="1.1"/><path d="M237.2 277.3L237.1 280.4" stroke="#6a4a3a" stroke-width="1.1"/><path d="M197.3 278.1L198.4 279.3" stroke="#9c7458" stroke-width="1.1"/><path d="M189.7 282.6L190.4 284.5" stroke="#8a6a50" stroke-width="1.1"/><path d="M128.3 268.4L127.1 269.9" stroke="#7e5844" stroke-width="1.1"/><path d="M142.9 333.2L143.1 334.8" stroke="#7e5844" stroke-width="1.1"/><path d="M219.4 314.5L219.7 316.5" stroke="#caa882" stroke-width="1.1"/><path d="M185.4 317.0L182.7 317.1" stroke="#6a4a3a" stroke-width="1.1"/><path d="M135.9 326.0L133.2 326.2" stroke="#6a4a3a" stroke-width="1.1"/><path d="M221.8 331.6L223.0 332.8" stroke="#5a4a3a" stroke-width="1.1"/><path d="M154.2 261.3L157.2 262.4" stroke="#7e5844" stroke-width="1.1"/><path d="M180.8 253.3L182.5 254.7" stroke="#9c7458" stroke-width="1.1"/><path d="M209.0 271.7L207.3 274.9" stroke="#c8a07a" stroke-width="1.1"/><path d="M161.8 248.1L165.5 249.0" stroke="#6a4a3a" stroke-width="1.1"/><path d="M144.0 295.3L146.5 297.8" stroke="#5a4a3a" stroke-width="1.1"/><path d="M228.2 315.8L225.9 316.1" stroke="#9c7458" stroke-width="1.1"/><path d="M133.6 264.7L130.9 266.0" stroke="#8a6a50" stroke-width="1.1"/><path d="M136.9 256.1L138.8 257.6" stroke="#8a6a50" stroke-width="1.1"/><path d="M256.4 275.7L253.6 276.3" stroke="#5a4a3a" stroke-width="1.1"/><path d="M151.1 325.4L154.1 325.9" stroke="#7e5844" stroke-width="1.1"/><path d="M245.4 285.2L244.0 286.8" stroke="#9c7458" stroke-width="1.1"/><path d="M215.4 320.4L219.1 321.2" stroke="#c8a07a" stroke-width="1.1"/><path d="M124.3 285.4L121.2 287.2" stroke="#5a4a3a" stroke-width="1.1"/><path d="M106.1 212.2L108.6 212.7" stroke="#caa882" stroke-width="1.1"/><path d="M140.4 293.3L137.3 293.5" stroke="#caa882" stroke-width="1.1"/><path d="M146.9 267.6L146.2 269.8" stroke="#7e5844" stroke-width="1.1"/><path d="M248.8 322.7L252.5 323.3" stroke="#b08466" stroke-width="1.1"/><path d="M128.0 280.5L129.2 282.9" stroke="#9c7458" stroke-width="1.1"/><path d="M112.2 212.3L112.9 215.5" stroke="#9c7458" stroke-width="1.1"/><path d="M121.0 266.5L117.7 266.7" stroke="#caa882" stroke-width="1.1"/><path d="M227.3 306.6L229.7 309.4" stroke="#9c7458" stroke-width="1.1"/><path d="M219.5 259.9L218.7 263.1" stroke="#a88a6c" stroke-width="1.1"/><path d="M235.2 259.0L236.1 260.8" stroke="#8a6a50" stroke-width="1.1"/><path d="M202.2 323.4L198.3 323.8" stroke="#b08466" stroke-width="1.1"/><path d="M109.9 204.7L111.6 206.4" stroke="#caa882" stroke-width="1.1"/><path d="M220.4 309.9L223.4 310.4" stroke="#c8a07a" stroke-width="1.1"/><path d="M167.3 314.0L167.5 316.6" stroke="#c8a07a" stroke-width="1.1"/><path d="M248.4 296.6L245.8 297.3" stroke="#5a4a3a" stroke-width="1.1"/><path d="M163.6 259.1L163.5 260.8" stroke="#b08466" stroke-width="1.1"/><path d="M213.7 297.9L214.9 299.7" stroke="#c8a07a" stroke-width="1.1"/><path d="M220.5 271.5L221.7 273.3" stroke="#5a4a3a" stroke-width="1.1"/><path d="M126.2 266.8L129.4 268.5" stroke="#9c7458" stroke-width="1.1"/><path d="M235.9 322.6L234.2 326.1" stroke="#9c7458" stroke-width="1.1"/><path d="M137.1 313.2L139.8 315.6" stroke="#c8a07a" stroke-width="1.1"/><path d="M205.4 325.1L205.6 328.5" stroke="#5a4a3a" stroke-width="1.1"/><path d="M216.1 281.8L216.7 284.4" stroke="#b08466" stroke-width="1.1"/><path d="M134.0 254.9L136.6 257.6" stroke="#9c7458" stroke-width="1.1"/><path d="M204.2 291.3L200.6 291.9" stroke="#7e5844" stroke-width="1.1"/><path d="M169.3 318.0L168.3 320.8" stroke="#a88a6c" stroke-width="1.1"/><path d="M136.4 330.0L137.7 331.1" stroke="#5a4a3a" stroke-width="1.1"/><path d="M201.2 316.2L198.6 318.8" stroke="#c8a07a" stroke-width="1.1"/><path d="M255.3 259.0L253.3 260.9" stroke="#9c7458" stroke-width="1.1"/><path d="M221.3 265.8L221.8 268.3" stroke="#8a6a50" stroke-width="1.1"/><path d="M193.0 319.5L194.5 320.5" stroke="#8a6a50" stroke-width="1.1"/><path d="M224.1 311.1L224.8 314.6" stroke="#8a6a50" stroke-width="1.1"/><path d="M202.5 289.8L205.0 292.5" stroke="#9c7458" stroke-width="1.1"/><path d="M235.1 253.9L234.3 255.9" stroke="#9c7458" stroke-width="1.1"/><path d="M233.9 320.9L235.0 323.4" stroke="#c8a07a" stroke-width="1.1"/><path d="M225.4 273.4L226.9 274.1" stroke="#8a6a50" stroke-width="1.1"/><path d="M249.9 325.4L250.8 327.2" stroke="#9c7458" stroke-width="1.1"/><path d="M186.7 329.5L187.2 332.7" stroke="#a88a6c" stroke-width="1.1"/><path d="M224.0 309.2L224.5 312.8" stroke="#b08466" stroke-width="1.1"/><path d="M190.9 323.5L189.4 326.9" stroke="#7e5844" stroke-width="1.1"/><path d="M148.7 323.9L149.8 326.7" stroke="#9c7458" stroke-width="1.1"/><path d="M136.6 252.8L139.5 254.5" stroke="#6a4a3a" stroke-width="1.1"/><path d="M238.8 292.3L242.3 292.5" stroke="#b08466" stroke-width="1.1"/><path d="M209.5 322.4L207.7 322.5" stroke="#7e5844" stroke-width="1.1"/><path d="M229.2 271.8L226.4 272.4" stroke="#a88a6c" stroke-width="1.1"/><path d="M112.6 251.7L116.3 252.1" stroke="#caa882" stroke-width="1.1"/><path d="M179.7 248.1L180.8 249.2" stroke="#7e5844" stroke-width="1.1"/><path d="M194.8 330.8L194.7 332.8" stroke="#9c7458" stroke-width="1.1"/><path d="M120.5 268.2L120.1 270.5" stroke="#7e5844" stroke-width="1.1"/><path d="M202.3 270.1L198.8 271.0" stroke="#8a6a50" stroke-width="1.1"/><path d="M160.3 327.7L156.8 328.7" stroke="#9c7458" stroke-width="1.1"/><path d="M167.7 288.7L170.3 290.8" stroke="#6a4a3a" stroke-width="1.1"/><path d="M240.2 322.8L239.7 325.2" stroke="#c8a07a" stroke-width="1.1"/><path d="M155.5 295.1L151.9 295.6" stroke="#a88a6c" stroke-width="1.1"/><path d="M250.5 266.6L248.9 268.1" stroke="#6a4a3a" stroke-width="1.1"/><path d="M241.2 331.2L239.5 331.7" stroke="#caa882" stroke-width="1.1"/><path d="M181.3 334.1L182.5 335.7" stroke="#5a4a3a" stroke-width="1.1"/><path d="M137.1 306.0L136.8 308.0" stroke="#5a4a3a" stroke-width="1.1"/><path d="M211.4 299.7L213.6 300.5" stroke="#7e5844" stroke-width="1.1"/><path d="M175.3 262.1L176.1 264.2" stroke="#a88a6c" stroke-width="1.1"/><path d="M227.2 318.7L225.7 319.5" stroke="#7e5844" stroke-width="1.1"/><path d="M128.2 285.8L131.5 287.6" stroke="#8a6a50" stroke-width="1.1"/><path d="M236.0 272.4L236.2 275.1" stroke="#c8a07a" stroke-width="1.1"/><path d="M204.7 331.9L206.2 334.7" stroke="#5a4a3a" stroke-width="1.1"/><path d="M133.8 307.0L133.5 310.2" stroke="#8a6a50" stroke-width="1.1"/><path d="M141.0 289.6L137.5 290.6" stroke="#caa882" stroke-width="1.1"/><path d="M174.1 283.7L172.2 285.4" stroke="#caa882" stroke-width="1.1"/><path d="M162.6 259.9L166.0 261.5" stroke="#5a4a3a" stroke-width="1.1"/><path d="M171.6 252.9L168.7 255.1" stroke="#8a6a50" stroke-width="1.1"/><path d="M197.8 268.4L196.1 269.4" stroke="#b08466" stroke-width="1.1"/><path d="M171.0 311.6L171.1 314.6" stroke="#9c7458" stroke-width="1.1"/><path d="M230.7 267.4L232.7 268.0" stroke="#caa882" stroke-width="1.1"/><path d="M105.2 205.8L104.7 207.4" stroke="#9c7458" stroke-width="1.1"/><path d="M146.0 302.2L144.0 304.4" stroke="#8a6a50" stroke-width="1.1"/><path d="M198.9 296.2L196.6 298.3" stroke="#c8a07a" stroke-width="1.1"/><path d="M132.1 304.4L134.8 305.3" stroke="#caa882" stroke-width="1.1"/><path d="M213.4 267.7L214.1 270.7" stroke="#7e5844" stroke-width="1.1"/><path d="M254.8 275.1L253.5 276.4" stroke="#5a4a3a" stroke-width="1.1"/><path d="M209.0 287.1L208.9 289.0" stroke="#caa882" stroke-width="1.1"/><path d="M172.3 303.9L174.1 304.3" stroke="#9c7458" stroke-width="1.1"/><path d="M208.3 311.5L209.2 314.5" stroke="#c8a07a" stroke-width="1.1"/><path d="M167.9 323.5L171.7 323.5" stroke="#a88a6c" stroke-width="1.1"/><path d="M220.0 319.7L218.8 323.4" stroke="#7e5844" stroke-width="1.1"/><path d="M128.6 295.8L125.9 297.9" stroke="#b08466" stroke-width="1.1"/><path d="M147.2 281.6L146.2 284.8" stroke="#c8a07a" stroke-width="1.1"/><path d="M200.4 331.7L198.7 333.7" stroke="#c8a07a" stroke-width="1.1"/><path d="M122.5 223.2L121.9 225.6" stroke="#b08466" stroke-width="1.1"/><path d="M221.4 320.8L219.1 322.8" stroke="#a88a6c" stroke-width="1.1"/><path d="M127.7 273.0L126.9 275.7" stroke="#8a6a50" stroke-width="1.1"/><path d="M232.4 277.4L231.6 279.6" stroke="#caa882" stroke-width="1.1"/><path d="M170.4 297.8L169.5 299.1" stroke="#c8a07a" stroke-width="1.1"/><path d="M215.2 324.1L213.5 326.7" stroke="#6a4a3a" stroke-width="1.1"/><path d="M249.1 289.1L252.5 290.1" stroke="#7e5844" stroke-width="1.1"/><path d="M185.6 249.9L187.2 251.8" stroke="#5a4a3a" stroke-width="1.1"/><path d="M237.3 258.4L239.9 258.5" stroke="#caa882" stroke-width="1.1"/><path d="M108.2 212.5L106.4 214.2" stroke="#8a6a50" stroke-width="1.1"/><path d="M253.9 310.5L251.8 313.3" stroke="#b08466" stroke-width="1.1"/><path d="M227.9 314.6L225.9 317.5" stroke="#8a6a50" stroke-width="1.1"/><path d="M136.4 250.2L135.7 252.8" stroke="#c8a07a" stroke-width="1.1"/><path d="M244.3 282.2L247.1 284.5" stroke="#7e5844" stroke-width="1.1"/><path d="M224.3 319.5L227.9 320.9" stroke="#c8a07a" stroke-width="1.1"/><path d="M123.6 231.2L121.3 234.0" stroke="#5a4a3a" stroke-width="1.1"/><path d="M227.5 288.7L230.8 290.1" stroke="#a88a6c" stroke-width="1.1"/><path d="M222.8 266.2L225.5 267.8" stroke="#8a6a50" stroke-width="1.1"/><path d="M197.4 319.1L198.8 319.8" stroke="#7e5844" stroke-width="1.1"/><path d="M149.9 302.1L149.3 303.6" stroke="#a88a6c" stroke-width="1.1"/><path d="M196.3 291.3L198.5 293.6" stroke="#6a4a3a" stroke-width="1.1"/><path d="M180.4 268.8L178.5 271.3" stroke="#5a4a3a" stroke-width="1.1"/><path d="M134.8 230.5L132.9 230.7" stroke="#6a4a3a" stroke-width="1.1"/><path d="M217.1 304.7L215.4 306.1" stroke="#5a4a3a" stroke-width="1.1"/><path d="M168.9 312.9L168.7 315.6" stroke="#c8a07a" stroke-width="1.1"/><path d="M234.4 304.0L237.5 305.9" stroke="#6a4a3a" stroke-width="1.1"/><path d="M217.3 317.5L215.5 317.5" stroke="#c8a07a" stroke-width="1.1"/><path d="M154.9 297.5L153.0 298.8" stroke="#a88a6c" stroke-width="1.1"/><path d="M166.6 274.7L169.1 275.7" stroke="#5a4a3a" stroke-width="1.1"/><path d="M244.9 264.0L244.0 266.2" stroke="#caa882" stroke-width="1.1"/><path d="M178.9 268.5L180.3 270.6" stroke="#6a4a3a" stroke-width="1.1"/><path d="M253.1 286.8L251.1 290.1" stroke="#6a4a3a" stroke-width="1.1"/><path d="M120.7 260.5L117.6 261.9" stroke="#7e5844" stroke-width="1.1"/><path d="M14.2 212.8L12.5 215.4" stroke="#a88a6c" stroke-width="1"/><path d="M14.4 212.8L17.2 213.5" stroke="#c8a07a" stroke-width="1"/><path d="M4.3 237.0L7.7 237.6" stroke="#a88a6c" stroke-width="1"/><path d="M18.2 213.7L21.3 215.1" stroke="#c8a07a" stroke-width="1"/><path d="M25.5 208.7L30.0 210.2" stroke="#6a4a3a" stroke-width="1"/><path d="M18.1 223.8L13.6 225.6" stroke="#caa882" stroke-width="1"/><path d="M3.6 238.9L6.8 240.9" stroke="#7e5844" stroke-width="1"/><path d="M-0.1 227.6L3.4 229.2" stroke="#b08466" stroke-width="1"/><path d="M0.9 242.4L0.3 245.2" stroke="#c8a07a" stroke-width="1"/><path d="M6.0 237.3L7.2 239.2" stroke="#b08466" stroke-width="1"/><path d="M26.3 208.3L26.0 210.6" stroke="#5a4a3a" stroke-width="1"/><path d="M28.5 205.6L32.5 207.5" stroke="#5a4a3a" stroke-width="1"/><path d="M9.9 219.1L8.9 221.4" stroke="#b08466" stroke-width="1"/><path d="M4.3 227.5L2.9 230.5" stroke="#a88a6c" stroke-width="1"/><path d="M12.9 227.2L12.8 230.6" stroke="#caa882" stroke-width="1"/><path d="M13.1 223.1L9.7 226.1" stroke="#8a6a50" stroke-width="1"/><path d="M18.2 216.0L13.1 216.1" stroke="#c8a07a" stroke-width="1"/><path d="M21.2 208.3L22.0 212.6" stroke="#5a4a3a" stroke-width="1"/><path d="M18.8 229.0L17.3 230.2" stroke="#6a4a3a" stroke-width="1"/><path d="M28.3 216.1L26.5 219.7" stroke="#a88a6c" stroke-width="1"/><path d="M34.0 197.9L37.5 200.6" stroke="#a88a6c" stroke-width="1"/><path d="M34.6 197.8L32.0 201.4" stroke="#5a4a3a" stroke-width="1"/><path d="M26.6 207.0L29.3 208.7" stroke="#7e5844" stroke-width="1"/><path d="M37.6 199.1L38.3 201.5" stroke="#9c7458" stroke-width="1"/><path d="M16.1 211.5L19.4 214.2" stroke="#9c7458" stroke-width="1"/><path d="M22.4 207.4L20.8 210.7" stroke="#5a4a3a" stroke-width="1"/><path d="M20.8 223.3L16.6 224.9" stroke="#c8a07a" stroke-width="1"/><path d="M25.3 214.5L23.0 214.5" stroke="#b08466" stroke-width="1"/><path d="M23.3 214.1L27.0 216.4" stroke="#8a6a50" stroke-width="1"/><path d="M34.2 206.3L34.1 208.6" stroke="#9c7458" stroke-width="1"/><path d="M22.8 223.2L26.0 225.8" stroke="#b08466" stroke-width="1"/><path d="M37.0 198.2L37.7 202.6" stroke="#caa882" stroke-width="1"/><path d="M31.2 198.7L29.1 200.4" stroke="#8a6a50" stroke-width="1"/><path d="M7.6 229.9L10.7 232.6" stroke="#a88a6c" stroke-width="1"/><path d="M24.8 213.7L29.4 214.1" stroke="#7e5844" stroke-width="1"/><path d="M12.0 219.9L16.4 222.1" stroke="#caa882" stroke-width="1"/><path d="M10.6 217.9L13.6 221.2" stroke="#6a4a3a" stroke-width="1"/><path d="M36.1 205.0L37.5 207.1" stroke="#9c7458" stroke-width="1"/><path d="M25.7 212.6L26.1 216.1" stroke="#caa882" stroke-width="1"/><path d="M36.8 195.2L38.9 199.1" stroke="#caa882" stroke-width="1"/><path d="M6.2 232.9L10.1 234.3" stroke="#8a6a50" stroke-width="1"/><path d="M21.2 226.9L17.4 227.8" stroke="#b08466" stroke-width="1"/><path d="M16.4 212.3L16.6 215.0" stroke="#a88a6c" stroke-width="1"/><path d="M10.3 235.7L14.3 236.5" stroke="#9c7458" stroke-width="1"/><path d="M14.2 225.0L12.7 226.4" stroke="#caa882" stroke-width="1"/><path d="M26.5 219.3L26.7 222.4" stroke="#9c7458" stroke-width="1"/><path d="M38.5 197.9L42.9 200.3" stroke="#6a4a3a" stroke-width="1"/><path d="M11.6 225.0L16.0 227.4" stroke="#7e5844" stroke-width="1"/><path d="M40.8 201.2L42.7 204.0" stroke="#a88a6c" stroke-width="1"/><path d="M42.6 198.5L44.1 202.9" stroke="#9c7458" stroke-width="1"/><path d="M37.1 207.1L36.4 209.7" stroke="#a88a6c" stroke-width="1"/><path d="M39.8 202.8L35.3 204.1" stroke="#5a4a3a" stroke-width="1"/><path d="M32.5 194.5L35.0 195.7" stroke="#7e5844" stroke-width="1"/><path d="M34.8 208.5L38.3 210.1" stroke="#b08466" stroke-width="1"/><path d="M9.3 228.2L6.9 231.5" stroke="#c8a07a" stroke-width="1"/><path d="M21.7 205.0L20.6 209.6" stroke="#a88a6c" stroke-width="1"/><path d="M29.0 211.8L27.3 212.9" stroke="#7e5844" stroke-width="1"/><path d="M10.8 217.6L12.9 217.7" stroke="#a88a6c" stroke-width="1"/><path d="M10.9 223.4L12.0 227.4" stroke="#7e5844" stroke-width="1"/><path d="M15.0 210.9L15.9 213.0" stroke="#5a4a3a" stroke-width="1"/><path d="M15.7 230.1L15.9 233.4" stroke="#c8a07a" stroke-width="1"/><path d="M-0.2 242.5L3.9 242.8" stroke="#c8a07a" stroke-width="1"/><path d="M11.8 235.3L8.2 236.5" stroke="#caa882" stroke-width="1"/><path d="M24.0 204.5L28.2 204.6" stroke="#caa882" stroke-width="1"/><path d="M34.6 193.6L36.4 196.8" stroke="#caa882" stroke-width="1"/><path d="M7.1 220.0L9.3 221.0" stroke="#c8a07a" stroke-width="1"/><path d="M2.4 231.6L6.4 231.7" stroke="#8a6a50" stroke-width="1"/><path d="M22.2 218.7L25.0 220.3" stroke="#a88a6c" stroke-width="1"/><path d="M21.6 222.8L23.8 224.1" stroke="#6a4a3a" stroke-width="1"/><path d="M24.8 219.7L22.9 220.8" stroke="#a88a6c" stroke-width="1"/><path d="M32.7 202.7L35.6 206.5" stroke="#a88a6c" stroke-width="1"/><path d="M17.2 221.2L18.0 225.7" stroke="#9c7458" stroke-width="1"/><path d="M21.9 222.4L19.8 225.8" stroke="#9c7458" stroke-width="1"/><path d="M20.4 225.0L18.2 225.4" stroke="#8a6a50" stroke-width="1"/><path d="M2.5 238.9L5.8 240.3" stroke="#7e5844" stroke-width="1"/><path d="M8.4 228.2L4.3 230.4" stroke="#8a6a50" stroke-width="1"/><path d="M6.4 235.8L7.9 237.3" stroke="#caa882" stroke-width="1"/><path d="M30.6 205.7L29.3 208.1" stroke="#5a4a3a" stroke-width="1"/><path d="M16.4 210.3L18.5 212.1" stroke="#caa882" stroke-width="1"/><path d="M11.8 222.4L8.1 225.8" stroke="#caa882" stroke-width="1"/><path d="M24.4 202.8L23.5 206.6" stroke="#b08466" stroke-width="1"/><path d="M22.2 212.0L23.6 213.6" stroke="#5a4a3a" stroke-width="1"/><path d="M30.5 195.1L30.1 199.7" stroke="#caa882" stroke-width="1"/><path d="M28.4 206.5L26.5 209.1" stroke="#5a4a3a" stroke-width="1"/><path d="M41.0 196.1L39.9 198.6" stroke="#8a6a50" stroke-width="1"/><path d="M7.0 237.1L9.0 238.5" stroke="#8a6a50" stroke-width="1"/><path d="M14.0 212.3L12.8 216.7" stroke="#a88a6c" stroke-width="1"/><path d="M33.6 195.8L31.0 196.5" stroke="#caa882" stroke-width="1"/><path d="M9.2 232.5L11.3 235.7" stroke="#7e5844" stroke-width="1"/><path d="M18.1 219.5L16.7 223.5" stroke="#c8a07a" stroke-width="1"/><circle cx="125.2" cy="180.6" r="0.8" fill="#9a7e7a"/><circle cx="218.7" cy="264.3" r="1.2" fill="#9a7e7a"/><circle cx="120.2" cy="247.2" r="0.6" fill="#9a7e7a"/><circle cx="182.1" cy="226.6" r="1.3" fill="#a88a8c"/><circle cx="207.0" cy="221.9" r="0.5" fill="#8e7a82"/><circle cx="105.9" cy="217.8" r="0.8" fill="#a88a8c"/><circle cx="122.8" cy="185.8" r="1.3" fill="#9a7e7a"/><circle cx="223.6" cy="184.8" r="0.5" fill="#b09088"/><circle cx="143.9" cy="162.1" r="0.6" fill="#a88a8c"/><circle cx="155.9" cy="190.1" r="0.9" fill="#a88a8c"/><circle cx="231.2" cy="228.8" r="0.8" fill="#9a7e7a"/><circle cx="159.2" cy="236.1" r="1.0" fill="#b09088"/><circle cx="127.5" cy="262.8" r="0.7" fill="#a88a8c"/><circle cx="232.1" cy="259.4" r="1.1" fill="#b09088"/><circle cx="174.6" cy="190.3" r="0.7" fill="#9a7e7a"/><circle cx="163.3" cy="216.4" r="1.2" fill="#a88a8c"/><circle cx="252.0" cy="263.5" r="1.1" fill="#b09088"/><circle cx="209.9" cy="238.6" r="1.3" fill="#8e7a82"/><circle cx="105.6" cy="235.1" r="1.0" fill="#a88a8c"/><circle cx="141.4" cy="202.6" r="1.0" fill="#9a7e7a"/><circle cx="118.5" cy="249.5" r="0.6" fill="#b09088"/><circle cx="133.2" cy="262.4" r="0.8" fill="#a88a8c"/><circle cx="115.3" cy="215.0" r="0.8" fill="#a88a8c"/><circle cx="117.3" cy="264.7" r="1.1" fill="#8e7a82"/><circle cx="209.2" cy="180.1" r="0.8" fill="#a88a8c"/><circle cx="252.6" cy="237.2" r="1.0" fill="#9a7e7a"/><circle cx="176.7" cy="234.6" r="1.0" fill="#9a7e7a"/><circle cx="170.0" cy="162.0" r="0.9" fill="#a88a8c"/><circle cx="151.7" cy="202.6" r="1.2" fill="#b09088"/><circle cx="238.6" cy="230.7" r="1.2" fill="#8e7a82"/><circle cx="128.2" cy="198.6" r="1.0" fill="#9a7e7a"/><circle cx="187.9" cy="197.2" r="1.2" fill="#b09088"/><circle cx="221.0" cy="240.6" r="1.0" fill="#8e7a82"/><circle cx="197.7" cy="250.9" r="0.7" fill="#a88a8c"/><circle cx="214.6" cy="226.5" r="1.0" fill="#b09088"/><circle cx="189.0" cy="196.9" r="0.8" fill="#a88a8c"/><circle cx="194.4" cy="196.1" r="0.7" fill="#b09088"/><circle cx="185.1" cy="186.4" r="0.7" fill="#8e7a82"/><circle cx="153.3" cy="245.8" r="0.6" fill="#b09088"/><circle cx="190.8" cy="247.1" r="1.1" fill="#b09088"/><circle cx="246.0" cy="238.7" r="0.9" fill="#b09088"/><circle cx="152.2" cy="217.4" r="0.6" fill="#a88a8c"/><circle cx="197.5" cy="255.1" r="0.8" fill="#9a7e7a"/><circle cx="133.2" cy="216.7" r="1.2" fill="#8e7a82"/><circle cx="167.3" cy="195.2" r="1.1" fill="#8e7a82"/><circle cx="217.9" cy="179.5" r="0.8" fill="#9a7e7a"/><circle cx="105.9" cy="186.4" r="0.8" fill="#a88a8c"/><circle cx="180.4" cy="261.8" r="0.9" fill="#b09088"/><circle cx="198.2" cy="241.3" r="1.2" fill="#a88a8c"/><circle cx="173.1" cy="176.9" r="1.1" fill="#b09088"/><circle cx="165.0" cy="198.8" r="0.5" fill="#a88a8c"/><circle cx="197.9" cy="203.1" r="1.3" fill="#a88a8c"/><circle cx="102.5" cy="213.3" r="0.8" fill="#8e7a82"/><circle cx="130.1" cy="205.6" r="1.1" fill="#8e7a82"/><circle cx="251.2" cy="232.6" r="1.2" fill="#9a7e7a"/><circle cx="188.7" cy="260.3" r="0.9" fill="#b09088"/><circle cx="225.9" cy="164.9" r="1.1" fill="#b09088"/><circle cx="138.5" cy="186.9" r="1.0" fill="#b09088"/><circle cx="197.6" cy="186.8" r="1.2" fill="#8e7a82"/><circle cx="226.6" cy="263.6" r="0.8" fill="#b09088"/><circle cx="183.5" cy="218.9" r="1.1" fill="#9a7e7a"/><circle cx="202.2" cy="219.6" r="0.8" fill="#9a7e7a"/><circle cx="163.9" cy="245.4" r="0.6" fill="#a88a8c"/><circle cx="201.6" cy="236.9" r="0.7" fill="#b09088"/><circle cx="182.6" cy="215.9" r="1.1" fill="#9a7e7a"/><circle cx="133.7" cy="145.2" r="1.2" fill="#8e7a82"/><circle cx="196.4" cy="234.0" r="1.3" fill="#8e7a82"/><circle cx="144.0" cy="196.2" r="1.3" fill="#9a7e7a"/><circle cx="144.4" cy="218.5" r="0.7" fill="#8e7a82"/><circle cx="225.9" cy="228.3" r="1.1" fill="#9a7e7a"/><g transform="translate(9 309) rotate(-20)"><text x="0" y="0" font-family="Liberation Sans" font-weight="bold" font-size="17" fill="#5e4a52" stroke="#5e4a52" stroke-width=".6" transform="scale(.95 1)">ИСС<tspan fill="#2e2228" stroke="#2e2228">О</tspan>П</text><text x="0" y="-16" font-family="Liberation Sans" font-size="5.5" fill="#a08890">ecoherb</text></g><g><circle cx="23.4" cy="321.4" r="4.8" fill="#9a7cc2"/><circle cx="38.7" cy="315.2" r="4.8" fill="#8d80c8"/><circle cx="53.9" cy="306.8" r="4.8" fill="#5458b0"/><circle cx="69.2" cy="299.9" r="4.8" fill="#7c62b4"/><path d="M53 332L80 322" stroke="#7656ae" stroke-width="3.5"/></g><path d="M21 330L29 327M37 324L45 321M51 315L59 312M67 308L75 305" stroke="#c8b0c0" stroke-width="1"/><path d="M84 311L127 296" stroke="#5a1a26" stroke-width="8.5" stroke-linecap="round"/><path d="M90 311L104 306M92 315L108 309" stroke="#e0c8d0" stroke-width=".9"/><path d="M94 257L90 275L86 290L84 304M94 257L100 262L108 270L116 283M91 270L82 266" fill="none" stroke="#4a2a38" stroke-width="1.1"/><path d="M62 255L87 275" stroke="#7a5a8a" stroke-width="5" stroke-linecap="round" opacity=".85"/><path d="M64 254L68 260M70 259L74 264M76 263L80 268M82 267L86 272" stroke="#5a3a6a" stroke-width="1.5"/><path d="M94 276L97 304M99 274L102 302M92 284L104 280M93 292L105 289M95 299L104 296" stroke="#5e8a58" stroke-width="1.2" opacity=".9"/></svg>
<div class="t" style="left:39px;top:21px;font-size:21px;font-weight:bold;font-style:italic;color:#3a2838;-webkit-text-stroke:.7px #3a2838;transform:scaleX(.835);transform-origin:0 0">РЕКОМЕНДАЦИИ ПО</div>
<div class="t" style="left:47.5px;top:48px;font-size:21px;font-weight:bold;font-style:italic;color:#3a2838;-webkit-text-stroke:.7px #3a2838;transform:scaleX(.81);transform-origin:0 0">ПРИГОТОВЛЕНИЮ:</div>
<div class="a" style="left:55px;top:85px;width:71px;height:57px;border-radius:3px;background:#5e2b46;overflow:hidden">
<div class="a" style="left:39px;top:0;width:15px;height:57px;background:#3f3a52"></div>
<svg style="left:0;top:0" width="71" height="57"><path d="M24.5 18.5C29.5 19 35.5 21 39.5 24" stroke="#e6d8e0" stroke-width="2" fill="none"/><path d="M38.5 24L42.5 20L45.5 24L42.5 28Z" stroke="#e6d8e0" fill="none" stroke-width="1"/><path d="M41.5 29V31" stroke="#e6d8e0" fill="none" stroke-width="1"/></svg>
<div class="t" style="left:35.5px;top:37px;text-align:center;font-size:7px;line-height:7.5px;color:#eadde5;transform:translateX(-50%) scaleX(.86)">Положите листья в<br>чайник</div>
</div>
<div class="a" style="left:81.0px;top:75.5px;width:19px;height:19px;border-radius:50%;background:#e3157b"></div>
<div class="t" style="left:88.0px;top:81px;font-size:8.5px;font-weight:bold;color:#fff">1</div>
<div class="a" style="left:135px;top:85px;width:70px;height:57px;border-radius:3px;background:#5e2b46;overflow:hidden">
<div class="a" style="left:14px;top:0;width:15px;height:57px;background:#3f3a52"></div>
<svg style="left:0;top:0" width="70" height="57"><circle cx="36.0" cy="24" r="6" stroke="#e6d8e0" fill="none" stroke-width="1"/><path d="M30.0 24H27.0V18M42.0 24H44.0" stroke="#e6d8e0" fill="none" stroke-width="1"/><ellipse cx="36.0" cy="24.5" rx="3" ry="2" stroke="#e6d8e0" fill="none" stroke-width="1"/><path d="M26.0 16V22" stroke="#e6d8e0" stroke-width="1.6"/></svg>
<div class="t" style="left:35.0px;top:37px;text-align:center;font-size:7px;line-height:7.5px;color:#eadde5;transform:translateX(-50%) scaleX(.86)">Залить 200 мл<br>кипятка</div>
</div>
<div class="a" style="left:160.5px;top:75.5px;width:19px;height:19px;border-radius:50%;background:#e3157b"></div>
<div class="t" style="left:167.5px;top:81px;font-size:8.5px;font-weight:bold;color:#fff">2</div>
<div class="a" style="left:55px;top:148px;width:71px;height:58px;border-radius:3px;background:#5e2b46;overflow:hidden">
<div class="a" style="left:39px;top:0;width:15px;height:58px;background:#3f3a52"></div>
<svg style="left:0;top:0" width="71" height="58"><rect x="30.5" y="15" width="4" height="15" rx="2" stroke="#e6d8e0" fill="none" stroke-width="1"/><circle cx="32.5" cy="29" r="2.5" stroke="#e6d8e0" fill="none" stroke-width="1"/><path d="M27.5 18H29.5M27.5 21H29.5M27.5 24H29.5" stroke="#e6d8e0" fill="none" stroke-width="1"/><path d="M42.5 19.5C38.5 18 37.5 25 42.5 24.5" stroke="#e6d8e0" stroke-width="1.3" fill="none"/><circle cx="44.5" cy="18" r="1" fill="#e6d8e0"/></svg>
<div class="t" style="left:35.5px;top:38px;text-align:center;font-size:7px;line-height:7.5px;color:#eadde5;transform:translateX(-50%) scaleX(.86)">Рекомендованная<br>температура 90°C</div>
</div>
<div class="a" style="left:81.0px;top:138.5px;width:19px;height:19px;border-radius:50%;background:#e3157b"></div>
<div class="t" style="left:88.0px;top:144px;font-size:8.5px;font-weight:bold;color:#fff">3</div>
<div class="a" style="left:135px;top:148px;width:70px;height:58px;border-radius:3px;background:#5e2b46;overflow:hidden">
<div class="a" style="left:14px;top:0;width:15px;height:58px;background:#3f3a52"></div>
<svg style="left:0;top:0" width="70" height="58"><circle cx="35.0" cy="24" r="7" stroke="#e6d8e0" fill="none" stroke-width="1"/><path d="M35.0 19.5V24.5" stroke="#e6d8e0" stroke-width="1.4"/><path d="M33.5 15.5H36.5" stroke="#e6d8e0" fill="none" stroke-width="1"/></svg>
<div class="t" style="left:35.0px;top:38px;text-align:center;font-size:7px;line-height:7.5px;color:#eadde5;transform:translateX(-50%) scaleX(.86)">Настоять 10-15 минут<br>пить в течении дня</div>
</div>
<div class="a" style="left:160.5px;top:138.5px;width:19px;height:19px;border-radius:50%;background:#e3157b"></div>
<div class="t" style="left:167.5px;top:144px;font-size:8.5px;font-weight:bold;color:#fff">4</div>
</div>
<div class="a" style="left:808px;top:583px;width:257px;height:337px;border:2px solid #8fd24f;border-radius:6px"></div>
<div class="a" style="left:911px;top:885.5px;width:66px;height:66px;border-radius:50%;background:#80d448"></div>
<svg style="left:924px;top:902.5px" width="40" height="32"><path d="M4 17L14 26L36 5" fill="none" stroke="#fff" stroke-width="5.5" stroke-linecap="round" stroke-linejoin="round"/></svg>
<!-- /PRODUCTS -->
<!-- /DOCUMENT -->
<!-- DOC TAB -->
<div class="t" style="left:54px;top:77px;font-size:13px;font-weight:bold;color:#f0f0f0;letter-spacing:.05px">Ошибки при МП.psd @ 40,7% (01, RGB/8#) *</div>
<svg style="left:341px;top:80px" width="8" height="8"><path d="M1 1L7 7M7 1L1 7" stroke="#8a8a8a" stroke-width="1"/></svg>
<!-- cursor crosshair -->
<svg style="left:1087px;top:504px" width="19" height="19"><path d="M9.5 1V7M9.5 12V18M1 9.5H7M12 9.5H18" stroke="#111" stroke-width="1"/><path d="M9.5 8.5V10.5M8.5 9.5H10.5" stroke="#111" stroke-width="0.6"/></svg>
<!-- STATUS -->
<div class="t" style="left:48px;top:1063px;font-size:12.8px;color:#e8e8e8">40,67%</div>
<div class="a" style="left:94px;top:1060px;width:180px;height:18px;background:#2a2a2a"></div>
<div class="t" style="left:99px;top:1063px;font-size:12.6px;color:#b5b5b5">60,96 см x 76,2 см (72 ppi)</div>
<svg style="left:265px;top:1065px" width="6" height="10"><path d="M1 1L5 5L1 9" fill="none" stroke="#aaa" stroke-width="1.1"/></svg>

<!-- RIGHT PANEL -->
<div class="a" style="left:1529px;top:81px;width:1px;height:996px;background:#171717"></div>
<div class="a" style="left:1530px;top:81px;width:4px;height:996px;background:#242424"></div>
<div class="a" style="left:1534px;top:81px;width:1px;height:996px;background:#171717"></div>
<div class="a" style="left:1913px;top:81px;width:2px;height:996px;background:#171717"></div>
<svg style="left:1899px;top:72px" width="10" height="7"><path d="M1 1L3.5 3.5L1 6M5 1L7.5 3.5L5 6" fill="none" stroke="#cfcfcf" stroke-width="1.1"/></svg>
<div class="a" style="left:1535px;top:82px;width:378px;height:27px;background:#1c1c1c"></div>
<div class="a" style="left:1535px;top:82px;width:42px;height:27px;background:#272727"></div>
<div class="t" style="left:1540px;top:90px;font-size:12px;font-weight:bold;color:#f2f2f2;letter-spacing:-.1px">Слои</div>
<div class="t" style="left:1587px;top:90px;font-size:12px;font-weight:bold;color:#a8a8a8;letter-spacing:-.1px">Каналы</div>
<div class="t" style="left:1650px;top:90px;font-size:12px;font-weight:bold;color:#a8a8a8;letter-spacing:-.1px">Контуры</div>
<svg style="left:1901px;top:91px" width="11" height="9"><path d="M0 0.5H11M0 2.5H11M0 4.5H11M0 6.5H11M0 8.5H11" stroke="#a0a0a0" stroke-width="1"/></svg>
<div class="a" style="left:1535px;top:109px;width:378px;height:96px;background:#282828"></div>
<!-- filter row -->
<div class="box" style="left:1536px;top:119px;width:138px;height:21px;background:#1c1c1c;border-color:#303030"></div>
<svg style="left:1542px;top:124px" width="11" height="11"><circle cx="4.3" cy="4.3" r="3.2" fill="none" stroke="#e8e8e8" stroke-width="1.6"/><path d="M6.5 6.5L9.8 9.8" stroke="#e8e8e8" stroke-width="2"/></svg>
<div class="t" style="left:1558px;top:124px;font-size:11.5px;color:#e8e8e8">Вид</div>
<svg style="left:1663px;top:128px" width="8" height="5"><path d="M1 1L4 4L7 1" fill="none" stroke="#bbb" stroke-width="1.1"/></svg>
<svg style="left:1735px;top:123px" width="13" height="11"><rect x="0.7" y="0.7" width="11.5" height="9.5" fill="none" stroke="#e0e0e0" stroke-width="1.3"/><path d="M2.5 8.5L5 5.5L6.5 7L8 5L10.5 8.5Z" fill="#e0e0e0"/></svg>
<svg style="left:1759px;top:123px" width="12" height="12"><circle cx="6" cy="6" r="5" fill="#262626" stroke="#e0e0e0" stroke-width="1.3"/><path d="M9.5 2.5A5 5 0 0 1 2.5 9.5Z" fill="#e0e0e0"/></svg>
<svg style="left:1783px;top:123px" width="13" height="12"><path d="M0.5 0.5H12.5V4H11.5L11 2H7.5V10H9.5V11.5H3.5V10H5.5V2H2L1.5 4H0.5Z" fill="#e0e0e0"/></svg>
<svg style="left:1807px;top:122px" width="13" height="13"><rect x="2" y="2" width="9" height="9" fill="none" stroke="#e0e0e0" stroke-width="1.1"/><rect x="0.5" y="0.5" width="3" height="3" fill="#e0e0e0"/><rect x="9.5" y="0.5" width="3" height="3" fill="#e0e0e0"/><rect x="0.5" y="9.5" width="3" height="3" fill="#e0e0e0"/><rect x="9.5" y="9.5" width="3" height="3" fill="#e0e0e0"/></svg>
<svg style="left:1832px;top:122px" width="12" height="14"><path d="M4 1H8L11 4V12H4Z" fill="none" stroke="#e0e0e0" stroke-width="1.2"/><rect x="0.5" y="7" width="6" height="6.5" fill="#e0e0e0"/></svg>
<circle></circle>
<div class="a" style="left:1904px;top:119px;width:9px;height:9px;border-radius:50%;background:#e0e0e0"></div>
<div class="a" style="left:1905px;top:128px;width:7px;height:10px;background:#161616"></div>
<!-- blend row -->
<div class="box" style="left:1536px;top:149px;width:207px;height:21px;background:#1c1c1c;border-color:#303030"></div>
<div class="t" style="left:1544px;top:154px;font-size:12.3px;color:#e8e8e8">Пропустить</div>
<svg style="left:1731px;top:158px" width="8" height="5"><path d="M1 1L4 4L7 1" fill="none" stroke="#bbb" stroke-width="1.1"/></svg>
<div class="t" style="left:1748px;top:153px;font-size:12.5px;color:#b8b8b8">Непрозрачность:</div>
<div class="box" style="left:1851px;top:149px;width:62px;height:19px;background:#1c1c1c;border-color:#2c2c2c"></div>
<div class="t" style="left:1856px;top:153px;font-size:12.5px;color:#e8e8e8">100%</div>
<svg style="left:1901px;top:157px" width="8" height="5"><path d="M1 1L4 4L7 1" fill="none" stroke="#aaa" stroke-width="1.1"/></svg>
<!-- lock row -->
<div class="t" style="left:1538px;top:183px;font-size:12.3px;color:#b8b8b8">Закрепить:</div>
<svg style="left:1609px;top:182px" width="12" height="12"><rect x="0.5" y="0.5" width="11" height="11" fill="none" stroke="#9a9a9a" stroke-width="1"/><rect x="2" y="2" width="4" height="4" fill="#9a9a9a"/><rect x="6" y="6" width="4" height="4" fill="#9a9a9a"/></svg>
<svg style="left:1630px;top:181px" width="13" height="14"><path d="M4 9L11 1.5" stroke="#8a8a8a" stroke-width="2" stroke-linecap="round"/><path d="M1 13C1 10.5 3 9 4.5 10C5.5 11 4.5 13 1 13Z" fill="#8a8a8a"/></svg>
<svg style="left:1651px;top:181px" width="13" height="14"><path d="M6.5 1V13M1 7H12" stroke="#9a9a9a" stroke-width="1.2"/><path d="M6.5 0L4.5 2.5H8.5ZM6.5 14L4.5 11.5H8.5ZM0 7L2.5 5V9ZM13 7L10.5 5V9Z" fill="#9a9a9a"/></svg>
<svg style="left:1674px;top:182px" width="14" height="13"><path d="M3 1V10H13M1 3H10V12" fill="none" stroke="#e0e0e0" stroke-width="1.2"/><path d="M10.5 1L12.5 3" stroke="#e0e0e0" stroke-width="1"/></svg>
<svg style="left:1698px;top:181px" width="11" height="14"><path d="M2.5 6V4C2.5 1.5 8.5 1.5 8.5 4V6" fill="none" stroke="#e8e8e8" stroke-width="1.6"/><rect x="0.5" y="6" width="10" height="7.5" fill="#e8e8e8"/><circle cx="5.5" cy="9.5" r="1.1" fill="#282828"/></svg>
<div class="t" style="left:1795px;top:183px;font-size:12.3px;color:#b8b8b8">Заливка:</div>
<div class="box" style="left:1851px;top:179px;width:62px;height:19px;background:#1c1c1c;border-color:#2c2c2c"></div>
<div class="t" style="left:1856px;top:183px;font-size:12.5px;color:#e8e8e8">100%</div>
<svg style="left:1901px;top:187px" width="8" height="5"><path d="M1 1L4 4L7 1" fill="none" stroke="#aaa" stroke-width="1.1"/></svg>
<!-- list -->
<div class="a" style="left:1535px;top:205px;width:378px;height:815px;background:#1f1f1f"></div>
<div class="a" style="left:1535px;top:206px;width:366px;height:25px;background:#262626;border-bottom:1px solid #222"></div>
<svg style="left:1539px;top:214px" width="15" height="10"><path d="M0.8 5C3 1.5 5 0.8 7.5 0.8C10 0.8 12 1.5 14.2 5C12 8.5 10 9.2 7.5 9.2C5 9.2 3 8.5 0.8 5Z" fill="#e8e8e8"/><circle cx="7.5" cy="5" r="2.2" fill="#262626"/><circle cx="7" cy="4.5" r="0.6" fill="#999"/></svg>
<svg style="left:1565px;top:213px" width="6" height="12"><path d="M1 1L4.5 6L1 11" fill="none" stroke="#9a9a9a" stroke-width="1"/></svg>
<svg style="left:1577px;top:212px" width="15" height="13"><path d="M0.5 0.5H6V1.5H0.5Z" fill="#e8e8e8"/><rect x="0" y="2.5" width="14.5" height="10" fill="#e8e8e8"/></svg>
<div class="t" style="left:1604px;top:213px;font-size:12px;color:#e8e8e8">05</div>
<div class="a" style="left:1535px;top:231px;width:366px;height:25px;background:#262626;border-bottom:1px solid #222"></div>
<svg style="left:1539px;top:239px" width="15" height="10"><path d="M0.8 5C3 1.5 5 0.8 7.5 0.8C10 0.8 12 1.5 14.2 5C12 8.5 10 9.2 7.5 9.2C5 9.2 3 8.5 0.8 5Z" fill="#e8e8e8"/><circle cx="7.5" cy="5" r="2.2" fill="#262626"/><circle cx="7" cy="4.5" r="0.6" fill="#999"/></svg>
<svg style="left:1565px;top:238px" width="6" height="12"><path d="M1 1L4.5 6L1 11" fill="none" stroke="#9a9a9a" stroke-width="1"/></svg>
<svg style="left:1577px;top:237px" width="15" height="13"><path d="M0.5 0.5H6V1.5H0.5Z" fill="#e8e8e8"/><rect x="0" y="2.5" width="14.5" height="10" fill="#e8e8e8"/></svg>
<div class="t" style="left:1604px;top:238px;font-size:12px;color:#e8e8e8">04</div>
<div class="a" style="left:1535px;top:256px;width:366px;height:25px;background:#262626;border-bottom:1px solid #222"></div>
<svg style="left:1539px;top:264px" width="15" height="10"><path d="M0.8 5C3 1.5 5 0.8 7.5 0.8C10 0.8 12 1.5 14.2 5C12 8.5 10 9.2 7.5 9.2C5 9.2 3 8.5 0.8 5Z" fill="#e8e8e8"/><circle cx="7.5" cy="5" r="2.2" fill="#262626"/><circle cx="7" cy="4.5" r="0.6" fill="#999"/></svg>
<svg style="left:1565px;top:263px" width="6" height="12"><path d="M1 1L4.5 6L1 11" fill="none" stroke="#9a9a9a" stroke-width="1"/></svg>
<svg style="left:1577px;top:262px" width="15" height="13"><path d="M0.5 0.5H6V1.5H0.5Z" fill="#e8e8e8"/><rect x="0" y="2.5" width="14.5" height="10" fill="#e8e8e8"/></svg>
<div class="t" style="left:1604px;top:263px;font-size:12px;color:#e8e8e8">03</div>
<div class="a" style="left:1535px;top:281px;width:366px;height:25px;background:#262626;border-bottom:1px solid #222"></div>
<svg style="left:1539px;top:289px" width="15" height="10"><path d="M0.8 5C3 1.5 5 0.8 7.5 0.8C10 0.8 12 1.5 14.2 5C12 8.5 10 9.2 7.5 9.2C5 9.2 3 8.5 0.8 5Z" fill="#e8e8e8"/><circle cx="7.5" cy="5" r="2.2" fill="#262626"/><circle cx="7" cy="4.5" r="0.6" fill="#999"/></svg>
<svg style="left:1565px;top:288px" width="6" height="12"><path d="M1 1L4.5 6L1 11" fill="none" stroke="#9a9a9a" stroke-width="1"/></svg>
<svg style="left:1577px;top:287px" width="15" height="13"><path d="M0.5 0.5H6V1.5H0.5Z" fill="#e8e8e8"/><rect x="0" y="2.5" width="14.5" height="10" fill="#e8e8e8"/></svg>
<div class="t" style="left:1604px;top:288px;font-size:12px;color:#e8e8e8">02</div>
<div class="a" style="left:1561px;top:306px;width:340px;height:25px;background:#474747;border-top:1px solid #505050"></div>
<div class="a" style="left:1535px;top:306px;width:26px;height:25px;background:#242424"></div>
<svg style="left:1539px;top:314px" width="15" height="10"><path d="M0.8 5C3 1.5 5 0.8 7.5 0.8C10 0.8 12 1.5 14.2 5C12 8.5 10 9.2 7.5 9.2C5 9.2 3 8.5 0.8 5Z" fill="#e8e8e8"/><circle cx="7.5" cy="5" r="2.2" fill="#262626"/><circle cx="7" cy="4.5" r="0.6" fill="#999"/></svg>
<svg style="left:1565px;top:313px" width="6" height="12"><path d="M1 1L4.5 6L1 11" fill="none" stroke="#9a9a9a" stroke-width="1"/></svg>
<svg style="left:1577px;top:312px" width="15" height="13"><path d="M0.5 0.5H6V1.5H0.5Z" fill="#e8e8e8"/><rect x="0" y="2.5" width="14.5" height="10" fill="#e8e8e8"/></svg>
<div class="t" style="left:1604px;top:313px;font-size:12px;color:#e8e8e8">01</div>

<!-- bottom bar -->
<div class="a" style="left:1535px;top:1020px;width:378px;height:25px;background:#262626;border-top:1px solid #2c2c2c"></div>
<svg style="left:1715px;top:1027px" width="14" height="9"><path d="M5 1.5H3.5C1.5 1.5 1 3 1 4.5C1 6 1.5 7.5 3.5 7.5H5M9 1.5H10.5C12.5 1.5 13 3 13 4.5C13 6 12.5 7.5 10.5 7.5H9M4 4.5H10" fill="none" stroke="#6e6e6e" stroke-width="1.3"/></svg>
<div class="t" style="left:1743px;top:1025px;font-size:13px;font-style:italic;color:#e0e0e0;font-family:'Liberation Serif',serif">fx</div>
<svg style="left:1754px;top:1039px" width="5" height="3"><path d="M0 0H5L2.5 3Z" fill="#e0e0e0"/></svg>
<svg style="left:1769px;top:1026px" width="14" height="11"><rect x="0" y="0" width="14" height="10.5" rx="1" fill="#e0e0e0"/><circle cx="7" cy="5.2" r="3" fill="#262626"/></svg>
<svg style="left:1797px;top:1025px" width="13" height="13"><circle cx="6" cy="6" r="5" fill="#262626" stroke="#e0e0e0" stroke-width="1.3"/><path d="M9.5 2.5A5 5 0 0 1 2.5 9.5Z" fill="#e0e0e0"/></svg>
<svg style="left:1807px;top:1039px" width="5" height="3"><path d="M0 0H5L2.5 3Z" fill="#e0e0e0"/></svg>
<svg style="left:1824px;top:1026px" width="13" height="11"><path d="M0 0H5V1H0Z" fill="#e0e0e0"/><rect x="0" y="2" width="12.5" height="8.5" fill="#e0e0e0"/></svg>
<svg style="left:1851px;top:1025px" width="13" height="13"><rect x="0.6" y="0.6" width="11.5" height="11.5" fill="none" stroke="#e0e0e0" stroke-width="1.2"/><path d="M6.3 3.5V9M3.5 6.3H9" stroke="#e0e0e0" stroke-width="1.3"/></svg>
<svg style="left:1878px;top:1025px" width="12" height="14"><path d="M0 2.5H12M4 2.5V0.8H8V2.5" fill="none" stroke="#e0e0e0" stroke-width="1.2"/><path d="M1.5 3.5H10.5V13.5H1.5Z" fill="none" stroke="#e0e0e0" stroke-width="1.2"/><path d="M4.3 5V12M6 5V12M7.7 5V12" stroke="#e0e0e0" stroke-width="0.9"/></svg>
<div class="a" style="left:1535px;top:1045px;width:378px;height:3px;background:#171717"></div>
<div class="a" style="left:1535px;top:1048px;width:378px;height:28px;background:#1c1c1c"></div>
<div class="a" style="left:1609px;top:1048px;width:71px;height:28px;background:#272727"></div>
<div class="t" style="left:1540px;top:1056px;font-size:12px;font-weight:bold;color:#a0a0a0;letter-spacing:-.1px">Операции</div>
<div class="t" style="left:1618px;top:1056px;font-size:12px;font-weight:bold;color:#f0f0f0;letter-spacing:-.1px">Свойства</div>
<svg style="left:1901px;top:1057px" width="11" height="9"><path d="M0 0.5H11M0 2.5H11M0 4.5H11M0 6.5H11M0 8.5H11" stroke="#a0a0a0" stroke-width="1"/></svg>
<div class="a" style="left:1535px;top:1076px;width:378px;height:4px;background:#161616"></div>
<!-- TOOLBAR -->
<div class="a" style="left:8px;top:70px;width:32px;height:11px;background:#1a1a1a"></div>
<svg style="left:10px;top:72px" width="10" height="7"><path d="M1 1L3.5 3.5L1 6M5 1L7.5 3.5L5 6" fill="none" stroke="#cfcfcf" stroke-width="1.1"/></svg>
<div class="a" style="left:8px;top:87px;width:24px;height:1px;background:#2f2f2f"></div>
<!-- move -->
<svg style="left:14px;top:103px" width="18" height="18"><path d="M9 1V17M1 9H17" stroke="#e0e0e0" stroke-width="1.6"/><path d="M9 0L6 3.5H12ZM9 18L6 14.5H12ZM0 9L3.5 6V12ZM18 9L14.5 6V12Z" fill="#e0e0e0"/></svg>
<!-- marquee selected -->
<div class="a" style="left:8px;top:125px;width:30px;height:23px;background:#111"></div>
<svg style="left:14px;top:129px" width="18" height="15"><path d="M1 4.5V1H4.5M6.5 1H11M13 1H16.5V4.5M16.5 6.5V8M16.5 10V13.5H13M11 13.5H6.5M4.5 13.5H1V10M1 8V6.5" fill="none" stroke="#e6e6e6" stroke-width="1.3"/></svg>
<!-- lasso -->
<svg style="left:14px;top:153px" width="18" height="18"><path d="M2 3L8 7L15 2L14 11L7 10" fill="none" stroke="#e0e0e0" stroke-width="1.4"/><circle cx="7" cy="11" r="1.8" fill="none" stroke="#e0e0e0" stroke-width="1.2"/><path d="M6 12L3 16M8 12L5 17" stroke="#e0e0e0" stroke-width="1.2"/></svg>
<!-- magic wand -->
<svg style="left:14px;top:179px" width="18" height="18"><path d="M3 16L12 7" stroke="#e6e6e6" stroke-width="3.2" stroke-linecap="round"/><path d="M13 1V4M11.5 2.5H14.5M16 6V9M14.5 7.5H17.5M7 2V4M6 3H8" stroke="#e0e0e0" stroke-width="1.1"/></svg>
<!-- crop -->
<svg style="left:13px;top:205px" width="18" height="18"><path d="M1 3.5H5V1M4.5 3V14H15.5V17M8 3.5H14V11M13.5 14H17" fill="none" stroke="#e6e6e6" stroke-width="1.7"/></svg>
<!-- frame -->
<svg style="left:15px;top:233px" width="17" height="16"><rect x="1.5" y="1.5" width="14" height="13" fill="none" stroke="#e0e0e0" stroke-width="1.3"/><path d="M1.5 1.5L15.5 14.5M15.5 1.5L1.5 14.5" stroke="#e0e0e0" stroke-width="1"/></svg>
<!-- eyedropper -->
<svg style="left:14px;top:258px" width="18" height="18"><path d="M3.5 15.5L11 8" stroke="#e0e0e0" stroke-width="3.6" stroke-linecap="round"/><path d="M3.5 15.5L11 8" stroke="#262626" stroke-width="1.6" stroke-linecap="round"/><path d="M10 5L13 8M12 2.5C13 1.5 15.5 3 15.5 5C15.5 6 14 6.5 13.5 7" stroke="#e0e0e0" stroke-width="2.6" fill="none"/></svg>
<!-- healing -->
<svg style="left:13px;top:284px" width="20" height="18"><path d="M5 15L15 5" stroke="#e6e6e6" stroke-width="7" stroke-linecap="round"/><circle cx="9" cy="9" r="0.9" fill="#262626"/><circle cx="11" cy="11" r="0.9" fill="#262626"/><circle cx="11" cy="9" r="0.9" fill="#262626"/><circle cx="9" cy="11" r="0.9" fill="#262626"/><path d="M4 8C2.5 5.5 4 2.5 7 2.5" fill="none" stroke="#d0d0d0" stroke-width="1" stroke-dasharray="1 1.2"/></svg>
<!-- brush -->
<svg style="left:14px;top:311px" width="18" height="18"><path d="M9 9L15 2" stroke="#e6e6e6" stroke-width="2.2" stroke-linecap="round"/><path d="M4 11.5C6 9.5 9 10 9 12.5C9 15 6 16.5 2.5 16C4 15 3 13 4 11.5Z" fill="#e6e6e6"/></svg>
<!-- stamp -->
<svg style="left:14px;top:337px" width="18" height="18"><circle cx="9" cy="4.5" r="3.2" fill="#e6e6e6"/><path d="M8 7H10V10H8Z" fill="#e6e6e6"/><path d="M2.5 10.5H15.5V13.5H2.5ZM2.5 15H15.5V16.3H2.5Z" fill="#e6e6e6"/></svg>
<!-- history brush -->
<svg style="left:13px;top:362px" width="20" height="18"><path d="M10 10L16 3" stroke="#e6e6e6" stroke-width="2.2" stroke-linecap="round"/><path d="M5.5 12C7.5 10 10.5 10.5 10.5 13C10.5 15.5 7.5 17 4 16.5C5.5 15.5 4.5 13.5 5.5 12Z" fill="#e6e6e6"/><path d="M2 6.5L5 4.5V8.5ZM4 6.5H9" stroke="#d0d0d0" stroke-width="1" fill="#d0d0d0"/></svg>
<!-- eraser -->
<svg style="left:14px;top:389px" width="18" height="18"><path d="M10 2L16 7L9.5 13H5L2 10Z" fill="#e6e6e6"/><path d="M5 10.5L2.2 10L5 13H9.5" fill="#262626"/><path d="M5 13H16" stroke="#e6e6e6" stroke-width="1.1"/><path d="M2 10L5 13H9.5" fill="none" stroke="#e6e6e6" stroke-width="1.1"/></svg>
<!-- paint bucket -->
<svg style="left:13px;top:414px" width="20" height="18"><path d="M9 3L15.5 9.5L10 15L3.5 8.5Z" fill="none" stroke="#e6e6e6" stroke-width="1.5"/><path d="M6 2L8 5" stroke="#e6e6e6" stroke-width="1.4"/><circle cx="6" cy="2" r="1.4" fill="#e6e6e6"/><path d="M17 11C18.5 13 18.5 15 17 15C15.5 15 15.5 13 17 11Z" fill="#e6e6e6"/></svg>
<!-- blur -->
<svg style="left:15px;top:440px" width="16" height="18"><path d="M8 1.5C10 5 13 8.5 13 11.5C13 14.5 10.8 16.3 8 16.3C5.2 16.3 3 14.5 3 11.5C3 8.5 6 5 8 1.5Z" fill="#e6e6e6"/></svg>
<!-- dodge -->
<svg style="left:13px;top:467px" width="20" height="16"><path d="M2.5 7C2.5 3 7 2 11 2.5C15 3 18 5 18 8C18 10.5 16 11 13 11H6.5C4 11 2.5 9.5 2.5 7Z" fill="#e6e6e6"/><circle cx="6.5" cy="7" r="1.6" fill="#262626"/></svg>
<!-- pen -->
<svg style="left:14px;top:492px" width="18" height="18"><path d="M11.5 2.5L15.5 6.5L13 9L6 16H2V12L9 5Z" fill="none" stroke="#e6e6e6" stroke-width="1.4"/><path d="M11.5 2.5L15.5 6.5" stroke="#e6e6e6" stroke-width="3"/><circle cx="7" cy="11" r="1.3" fill="#e6e6e6"/><path d="M2.5 15.5L6.3 11.7" stroke="#e6e6e6" stroke-width="1"/></svg>
<!-- type -->
<svg style="left:15px;top:518px" width="16" height="18"><path d="M1.5 1.5H14.5V5.5H13.5L13 3H9.3V14.5H11.3V16H4.7V14.5H6.7V3H3L2.5 5.5H1.5Z" fill="#e6e6e6"/></svg>
<!-- path selection -->
<svg style="left:15px;top:543px" width="16" height="18"><path d="M3 1.5L13 10.5H8.5L11.5 16L9.8 16.8L6.8 11.2L3 14Z" fill="#e6e6e6"/></svg>
<!-- rectangle -->
<svg style="left:14px;top:571px" width="18" height="15"><rect x="1" y="1" width="16" height="12.5" fill="#595959" stroke="#e6e6e6" stroke-width="1.5"/></svg>
<!-- hand -->
<svg style="left:14px;top:596px" width="18" height="18"><path d="M4 9V4.5C4 3.5 5.5 3.5 5.5 4.5V8.5V2.5C5.5 1.5 7.3 1.5 7.3 2.5V8V1.8C7.3 0.8 9.2 0.8 9.2 1.8V8V3C9.2 2 11 2 11 3V10L12.5 8C13.5 7 15 7.8 14.3 9L11.5 14C10.5 16 9 17 7 17C4.5 17 3 15 3 12.5V9.5C3 8.5 4 8.5 4 9Z" fill="#e6e6e6"/></svg>
<!-- zoom -->
<svg style="left:14px;top:622px" width="18" height="18"><circle cx="7.5" cy="7.5" r="5.5" fill="none" stroke="#e6e6e6" stroke-width="1.5"/><path d="M11.5 11.5L16 16" stroke="#e6e6e6" stroke-width="2.2"/></svg>
<!-- dots -->
<svg style="left:14px;top:652px" width="18" height="10"><circle cx="3" cy="5" r="2" fill="#e6e6e6"/><circle cx="9" cy="5" r="2" fill="#e6e6e6"/><circle cx="15" cy="5" r="2" fill="#e6e6e6"/></svg>
<!-- default colors / swap -->
<svg style="left:7px;top:675px" width="12" height="12"><rect x="4.5" y="4.5" width="6" height="6" fill="#e6e6e6"/><rect x="1" y="1" width="6" height="6" fill="#111" stroke="#e6e6e6" stroke-width="1"/></svg>
<svg style="left:24px;top:675px" width="12" height="12"><path d="M1.5 5V2.5H8.5V10M6.5 8L8.5 10.5L10.5 8M3.5 0.5L1.5 2.5L3.5 4.5" fill="none" stroke="#e0e0e0" stroke-width="1.2"/></svg>
<div class="a" style="left:18px;top:702px;width:18px;height:18px;background:#0a0a0a;border:1px solid #e6e6e6"></div>
<div class="a" style="left:8px;top:692px;width:18px;height:18px;background:#d8d8dc;border:1px solid #2a2a2a"></div>
<!-- quick mask -->
<svg style="left:14px;top:731px" width="18" height="15"><rect x="1" y="1" width="16" height="12.5" fill="none" stroke="#e6e6e6" stroke-width="1.3"/><circle cx="9" cy="7.3" r="3.6" fill="none" stroke="#e6e6e6" stroke-width="1" stroke-dasharray="1 1.1"/></svg>
<!-- screen mode -->
<svg style="left:14px;top:756px" width="18" height="16"><rect x="1" y="5.5" width="10" height="9" fill="#262626" stroke="#e6e6e6" stroke-width="1.3"/><rect x="6" y="1" width="11" height="9" fill="#262626" stroke="#e6e6e6" stroke-width="1.3"/></svg>
<svg style="left:32px;top:119px" width="5" height="5"><path d="M4 0V4H0Z" fill="#9a9a9a"/></svg>
<svg style="left:32px;top:145px" width="5" height="5"><path d="M4 0V4H0Z" fill="#9a9a9a"/></svg>
<svg style="left:32px;top:171px" width="5" height="5"><path d="M4 0V4H0Z" fill="#9a9a9a"/></svg>
<svg style="left:32px;top:197px" width="5" height="5"><path d="M4 0V4H0Z" fill="#9a9a9a"/></svg>
<svg style="left:32px;top:222px" width="5" height="5"><path d="M4 0V4H0Z" fill="#9a9a9a"/></svg>
<svg style="left:32px;top:275px" width="5" height="5"><path d="M4 0V4H0Z" fill="#9a9a9a"/></svg>
<svg style="left:32px;top:301px" width="5" height="5"><path d="M4 0V4H0Z" fill="#9a9a9a"/></svg>
<svg style="left:32px;top:327px" width="5" height="5"><path d="M4 0V4H0Z" fill="#9a9a9a"/></svg>
<svg style="left:32px;top:353px" width="5" height="5"><path d="M4 0V4H0Z" fill="#9a9a9a"/></svg>
<svg style="left:32px;top:379px" width="5" height="5"><path d="M4 0V4H0Z" fill="#9a9a9a"/></svg>
<svg style="left:32px;top:405px" width="5" height="5"><path d="M4 0V4H0Z" fill="#9a9a9a"/></svg>
<svg style="left:32px;top:431px" width="5" height="5"><path d="M4 0V4H0Z" fill="#9a9a9a"/></svg>
<svg style="left:32px;top:457px" width="5" height="5"><path d="M4 0V4H0Z" fill="#9a9a9a"/></svg>
<svg style="left:32px;top:483px" width="5" height="5"><path d="M4 0V4H0Z" fill="#9a9a9a"/></svg>
<svg style="left:32px;top:509px" width="5" height="5"><path d="M4 0V4H0Z" fill="#9a9a9a"/></svg>
<svg style="left:32px;top:535px" width="5" height="5"><path d="M4 0V4H0Z" fill="#9a9a9a"/></svg>
<svg style="left:32px;top:561px" width="5" height="5"><path d="M4 0V4H0Z" fill="#9a9a9a"/></svg>
<svg style="left:32px;top:587px" width="5" height="5"><path d="M4 0V4H0Z" fill="#9a9a9a"/></svg>
<svg style="left:32px;top:613px" width="5" height="5"><path d="M4 0V4H0Z" fill="#9a9a9a"/></svg>
<svg style="left:32px;top:665px" width="5" height="5"><path d="M4 0V4H0Z" fill="#9a9a9a"/></svg>
<svg style="left:32px;top:771px" width="5" height="5"><path d="M4 0V4H0Z" fill="#9a9a9a"/></svg>
</body></html>
